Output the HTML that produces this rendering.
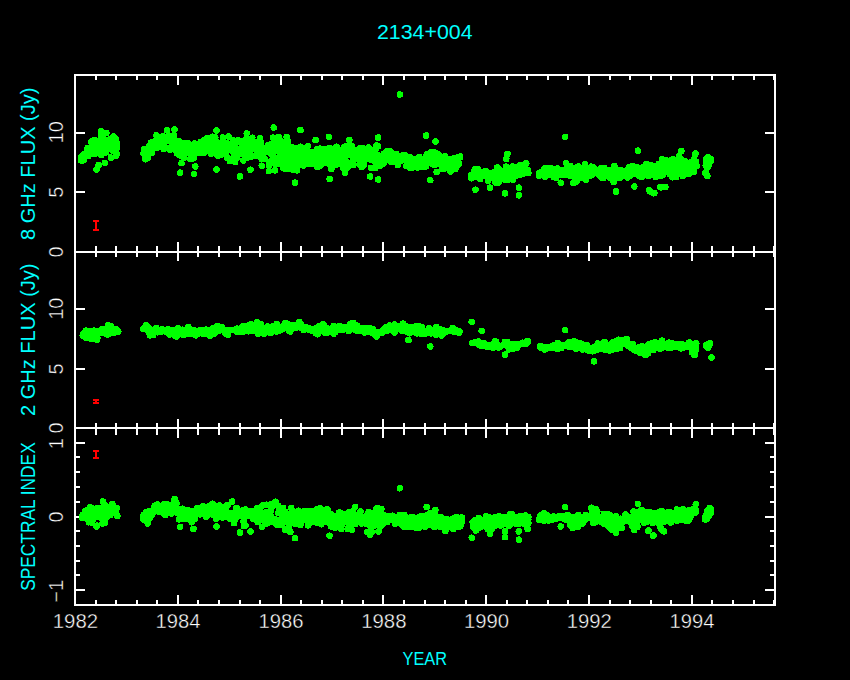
<!DOCTYPE html>
<html><head><meta charset="utf-8"><style>
html,body{margin:0;padding:0;background:#000;width:850px;height:680px;overflow:hidden}
svg{display:block}
text{font-family:"Liberation Sans",sans-serif}
</style></head><body>
<svg width="850" height="680" viewBox="0 0 850 680">
<rect x="0" y="0" width="850" height="680" fill="#000"/>
<g shape-rendering="crispEdges">
<rect x="74" y="74" width="702" height="2" fill="#fff"/>
<rect x="74" y="604" width="702" height="2" fill="#fff"/>
<rect x="74" y="74" width="2" height="532" fill="#fff"/>
<rect x="774" y="74" width="2" height="532" fill="#fff"/>
<rect x="74" y="251" width="702" height="2" fill="#fff"/>
<rect x="74" y="427" width="702" height="2" fill="#fff"/>
<rect x="95" y="75" width="2" height="5" fill="#fff"/>
<rect x="95" y="246" width="2" height="5" fill="#fff"/>
<rect x="115" y="75" width="2" height="5" fill="#fff"/>
<rect x="115" y="246" width="2" height="5" fill="#fff"/>
<rect x="136" y="75" width="2" height="5" fill="#fff"/>
<rect x="136" y="246" width="2" height="5" fill="#fff"/>
<rect x="156" y="75" width="2" height="5" fill="#fff"/>
<rect x="156" y="246" width="2" height="5" fill="#fff"/>
<rect x="177" y="75" width="2" height="10" fill="#fff"/>
<rect x="177" y="242" width="2" height="9" fill="#fff"/>
<rect x="197" y="75" width="2" height="5" fill="#fff"/>
<rect x="197" y="246" width="2" height="5" fill="#fff"/>
<rect x="218" y="75" width="2" height="5" fill="#fff"/>
<rect x="218" y="246" width="2" height="5" fill="#fff"/>
<rect x="239" y="75" width="2" height="5" fill="#fff"/>
<rect x="239" y="246" width="2" height="5" fill="#fff"/>
<rect x="259" y="75" width="2" height="5" fill="#fff"/>
<rect x="259" y="246" width="2" height="5" fill="#fff"/>
<rect x="280" y="75" width="2" height="10" fill="#fff"/>
<rect x="280" y="242" width="2" height="9" fill="#fff"/>
<rect x="300" y="75" width="2" height="5" fill="#fff"/>
<rect x="300" y="246" width="2" height="5" fill="#fff"/>
<rect x="321" y="75" width="2" height="5" fill="#fff"/>
<rect x="321" y="246" width="2" height="5" fill="#fff"/>
<rect x="341" y="75" width="2" height="5" fill="#fff"/>
<rect x="341" y="246" width="2" height="5" fill="#fff"/>
<rect x="362" y="75" width="2" height="5" fill="#fff"/>
<rect x="362" y="246" width="2" height="5" fill="#fff"/>
<rect x="382" y="75" width="2" height="10" fill="#fff"/>
<rect x="382" y="242" width="2" height="9" fill="#fff"/>
<rect x="403" y="75" width="2" height="5" fill="#fff"/>
<rect x="403" y="246" width="2" height="5" fill="#fff"/>
<rect x="424" y="75" width="2" height="5" fill="#fff"/>
<rect x="424" y="246" width="2" height="5" fill="#fff"/>
<rect x="444" y="75" width="2" height="5" fill="#fff"/>
<rect x="444" y="246" width="2" height="5" fill="#fff"/>
<rect x="465" y="75" width="2" height="5" fill="#fff"/>
<rect x="465" y="246" width="2" height="5" fill="#fff"/>
<rect x="485" y="75" width="2" height="10" fill="#fff"/>
<rect x="485" y="242" width="2" height="9" fill="#fff"/>
<rect x="506" y="75" width="2" height="5" fill="#fff"/>
<rect x="506" y="246" width="2" height="5" fill="#fff"/>
<rect x="526" y="75" width="2" height="5" fill="#fff"/>
<rect x="526" y="246" width="2" height="5" fill="#fff"/>
<rect x="547" y="75" width="2" height="5" fill="#fff"/>
<rect x="547" y="246" width="2" height="5" fill="#fff"/>
<rect x="567" y="75" width="2" height="5" fill="#fff"/>
<rect x="567" y="246" width="2" height="5" fill="#fff"/>
<rect x="588" y="75" width="2" height="10" fill="#fff"/>
<rect x="588" y="242" width="2" height="9" fill="#fff"/>
<rect x="609" y="75" width="2" height="5" fill="#fff"/>
<rect x="609" y="246" width="2" height="5" fill="#fff"/>
<rect x="629" y="75" width="2" height="5" fill="#fff"/>
<rect x="629" y="246" width="2" height="5" fill="#fff"/>
<rect x="650" y="75" width="2" height="5" fill="#fff"/>
<rect x="650" y="246" width="2" height="5" fill="#fff"/>
<rect x="670" y="75" width="2" height="5" fill="#fff"/>
<rect x="670" y="246" width="2" height="5" fill="#fff"/>
<rect x="691" y="75" width="2" height="10" fill="#fff"/>
<rect x="691" y="242" width="2" height="9" fill="#fff"/>
<rect x="711" y="75" width="2" height="5" fill="#fff"/>
<rect x="711" y="246" width="2" height="5" fill="#fff"/>
<rect x="732" y="75" width="2" height="5" fill="#fff"/>
<rect x="732" y="246" width="2" height="5" fill="#fff"/>
<rect x="753" y="75" width="2" height="5" fill="#fff"/>
<rect x="753" y="246" width="2" height="5" fill="#fff"/>
<rect x="773" y="75" width="2" height="5" fill="#fff"/>
<rect x="773" y="246" width="2" height="5" fill="#fff"/>
<rect x="95" y="252" width="2" height="5" fill="#fff"/>
<rect x="95" y="423" width="2" height="4" fill="#fff"/>
<rect x="115" y="252" width="2" height="5" fill="#fff"/>
<rect x="115" y="423" width="2" height="4" fill="#fff"/>
<rect x="136" y="252" width="2" height="5" fill="#fff"/>
<rect x="136" y="423" width="2" height="4" fill="#fff"/>
<rect x="156" y="252" width="2" height="5" fill="#fff"/>
<rect x="156" y="423" width="2" height="4" fill="#fff"/>
<rect x="177" y="252" width="2" height="9" fill="#fff"/>
<rect x="177" y="419" width="2" height="8" fill="#fff"/>
<rect x="197" y="252" width="2" height="5" fill="#fff"/>
<rect x="197" y="423" width="2" height="4" fill="#fff"/>
<rect x="218" y="252" width="2" height="5" fill="#fff"/>
<rect x="218" y="423" width="2" height="4" fill="#fff"/>
<rect x="239" y="252" width="2" height="5" fill="#fff"/>
<rect x="239" y="423" width="2" height="4" fill="#fff"/>
<rect x="259" y="252" width="2" height="5" fill="#fff"/>
<rect x="259" y="423" width="2" height="4" fill="#fff"/>
<rect x="280" y="252" width="2" height="9" fill="#fff"/>
<rect x="280" y="419" width="2" height="8" fill="#fff"/>
<rect x="300" y="252" width="2" height="5" fill="#fff"/>
<rect x="300" y="423" width="2" height="4" fill="#fff"/>
<rect x="321" y="252" width="2" height="5" fill="#fff"/>
<rect x="321" y="423" width="2" height="4" fill="#fff"/>
<rect x="341" y="252" width="2" height="5" fill="#fff"/>
<rect x="341" y="423" width="2" height="4" fill="#fff"/>
<rect x="362" y="252" width="2" height="5" fill="#fff"/>
<rect x="362" y="423" width="2" height="4" fill="#fff"/>
<rect x="382" y="252" width="2" height="9" fill="#fff"/>
<rect x="382" y="419" width="2" height="8" fill="#fff"/>
<rect x="403" y="252" width="2" height="5" fill="#fff"/>
<rect x="403" y="423" width="2" height="4" fill="#fff"/>
<rect x="424" y="252" width="2" height="5" fill="#fff"/>
<rect x="424" y="423" width="2" height="4" fill="#fff"/>
<rect x="444" y="252" width="2" height="5" fill="#fff"/>
<rect x="444" y="423" width="2" height="4" fill="#fff"/>
<rect x="465" y="252" width="2" height="5" fill="#fff"/>
<rect x="465" y="423" width="2" height="4" fill="#fff"/>
<rect x="485" y="252" width="2" height="9" fill="#fff"/>
<rect x="485" y="419" width="2" height="8" fill="#fff"/>
<rect x="506" y="252" width="2" height="5" fill="#fff"/>
<rect x="506" y="423" width="2" height="4" fill="#fff"/>
<rect x="526" y="252" width="2" height="5" fill="#fff"/>
<rect x="526" y="423" width="2" height="4" fill="#fff"/>
<rect x="547" y="252" width="2" height="5" fill="#fff"/>
<rect x="547" y="423" width="2" height="4" fill="#fff"/>
<rect x="567" y="252" width="2" height="5" fill="#fff"/>
<rect x="567" y="423" width="2" height="4" fill="#fff"/>
<rect x="588" y="252" width="2" height="9" fill="#fff"/>
<rect x="588" y="419" width="2" height="8" fill="#fff"/>
<rect x="609" y="252" width="2" height="5" fill="#fff"/>
<rect x="609" y="423" width="2" height="4" fill="#fff"/>
<rect x="629" y="252" width="2" height="5" fill="#fff"/>
<rect x="629" y="423" width="2" height="4" fill="#fff"/>
<rect x="650" y="252" width="2" height="5" fill="#fff"/>
<rect x="650" y="423" width="2" height="4" fill="#fff"/>
<rect x="670" y="252" width="2" height="5" fill="#fff"/>
<rect x="670" y="423" width="2" height="4" fill="#fff"/>
<rect x="691" y="252" width="2" height="9" fill="#fff"/>
<rect x="691" y="419" width="2" height="8" fill="#fff"/>
<rect x="711" y="252" width="2" height="5" fill="#fff"/>
<rect x="711" y="423" width="2" height="4" fill="#fff"/>
<rect x="732" y="252" width="2" height="5" fill="#fff"/>
<rect x="732" y="423" width="2" height="4" fill="#fff"/>
<rect x="753" y="252" width="2" height="5" fill="#fff"/>
<rect x="753" y="423" width="2" height="4" fill="#fff"/>
<rect x="773" y="252" width="2" height="5" fill="#fff"/>
<rect x="773" y="423" width="2" height="4" fill="#fff"/>
<rect x="95" y="428" width="2" height="7" fill="#fff"/>
<rect x="95" y="600" width="2" height="5" fill="#fff"/>
<rect x="115" y="428" width="2" height="7" fill="#fff"/>
<rect x="115" y="600" width="2" height="5" fill="#fff"/>
<rect x="136" y="428" width="2" height="7" fill="#fff"/>
<rect x="136" y="600" width="2" height="5" fill="#fff"/>
<rect x="156" y="428" width="2" height="7" fill="#fff"/>
<rect x="156" y="600" width="2" height="5" fill="#fff"/>
<rect x="177" y="428" width="2" height="10" fill="#fff"/>
<rect x="177" y="595" width="2" height="10" fill="#fff"/>
<rect x="197" y="428" width="2" height="7" fill="#fff"/>
<rect x="197" y="600" width="2" height="5" fill="#fff"/>
<rect x="218" y="428" width="2" height="7" fill="#fff"/>
<rect x="218" y="600" width="2" height="5" fill="#fff"/>
<rect x="239" y="428" width="2" height="7" fill="#fff"/>
<rect x="239" y="600" width="2" height="5" fill="#fff"/>
<rect x="259" y="428" width="2" height="7" fill="#fff"/>
<rect x="259" y="600" width="2" height="5" fill="#fff"/>
<rect x="280" y="428" width="2" height="10" fill="#fff"/>
<rect x="280" y="595" width="2" height="10" fill="#fff"/>
<rect x="300" y="428" width="2" height="7" fill="#fff"/>
<rect x="300" y="600" width="2" height="5" fill="#fff"/>
<rect x="321" y="428" width="2" height="7" fill="#fff"/>
<rect x="321" y="600" width="2" height="5" fill="#fff"/>
<rect x="341" y="428" width="2" height="7" fill="#fff"/>
<rect x="341" y="600" width="2" height="5" fill="#fff"/>
<rect x="362" y="428" width="2" height="7" fill="#fff"/>
<rect x="362" y="600" width="2" height="5" fill="#fff"/>
<rect x="382" y="428" width="2" height="10" fill="#fff"/>
<rect x="382" y="595" width="2" height="10" fill="#fff"/>
<rect x="403" y="428" width="2" height="7" fill="#fff"/>
<rect x="403" y="600" width="2" height="5" fill="#fff"/>
<rect x="424" y="428" width="2" height="7" fill="#fff"/>
<rect x="424" y="600" width="2" height="5" fill="#fff"/>
<rect x="444" y="428" width="2" height="7" fill="#fff"/>
<rect x="444" y="600" width="2" height="5" fill="#fff"/>
<rect x="465" y="428" width="2" height="7" fill="#fff"/>
<rect x="465" y="600" width="2" height="5" fill="#fff"/>
<rect x="485" y="428" width="2" height="10" fill="#fff"/>
<rect x="485" y="595" width="2" height="10" fill="#fff"/>
<rect x="506" y="428" width="2" height="7" fill="#fff"/>
<rect x="506" y="600" width="2" height="5" fill="#fff"/>
<rect x="526" y="428" width="2" height="7" fill="#fff"/>
<rect x="526" y="600" width="2" height="5" fill="#fff"/>
<rect x="547" y="428" width="2" height="7" fill="#fff"/>
<rect x="547" y="600" width="2" height="5" fill="#fff"/>
<rect x="567" y="428" width="2" height="7" fill="#fff"/>
<rect x="567" y="600" width="2" height="5" fill="#fff"/>
<rect x="588" y="428" width="2" height="10" fill="#fff"/>
<rect x="588" y="595" width="2" height="10" fill="#fff"/>
<rect x="609" y="428" width="2" height="7" fill="#fff"/>
<rect x="609" y="600" width="2" height="5" fill="#fff"/>
<rect x="629" y="428" width="2" height="7" fill="#fff"/>
<rect x="629" y="600" width="2" height="5" fill="#fff"/>
<rect x="650" y="428" width="2" height="7" fill="#fff"/>
<rect x="650" y="600" width="2" height="5" fill="#fff"/>
<rect x="670" y="428" width="2" height="7" fill="#fff"/>
<rect x="670" y="600" width="2" height="5" fill="#fff"/>
<rect x="691" y="428" width="2" height="10" fill="#fff"/>
<rect x="691" y="595" width="2" height="10" fill="#fff"/>
<rect x="711" y="428" width="2" height="7" fill="#fff"/>
<rect x="711" y="600" width="2" height="5" fill="#fff"/>
<rect x="732" y="428" width="2" height="7" fill="#fff"/>
<rect x="732" y="600" width="2" height="5" fill="#fff"/>
<rect x="753" y="428" width="2" height="7" fill="#fff"/>
<rect x="753" y="600" width="2" height="5" fill="#fff"/>
<rect x="773" y="428" width="2" height="7" fill="#fff"/>
<rect x="773" y="600" width="2" height="5" fill="#fff"/>
<rect x="75" y="191" width="10" height="2" fill="#fff"/>
<rect x="765" y="191" width="10" height="2" fill="#fff"/>
<rect x="75" y="132" width="10" height="2" fill="#fff"/>
<rect x="765" y="132" width="10" height="2" fill="#fff"/>
<rect x="75" y="368" width="10" height="2" fill="#fff"/>
<rect x="765" y="368" width="10" height="2" fill="#fff"/>
<rect x="75" y="308" width="10" height="2" fill="#fff"/>
<rect x="765" y="308" width="10" height="2" fill="#fff"/>
<rect x="75" y="589" width="10" height="2" fill="#fff"/>
<rect x="765" y="589" width="10" height="2" fill="#fff"/>
<rect x="75" y="574" width="5" height="2" fill="#fff"/>
<rect x="770" y="574" width="5" height="2" fill="#fff"/>
<rect x="75" y="560" width="5" height="2" fill="#fff"/>
<rect x="770" y="560" width="5" height="2" fill="#fff"/>
<rect x="75" y="545" width="5" height="2" fill="#fff"/>
<rect x="770" y="545" width="5" height="2" fill="#fff"/>
<rect x="75" y="530" width="5" height="2" fill="#fff"/>
<rect x="770" y="530" width="5" height="2" fill="#fff"/>
<rect x="75" y="516" width="10" height="2" fill="#fff"/>
<rect x="765" y="516" width="10" height="2" fill="#fff"/>
<rect x="75" y="501" width="5" height="2" fill="#fff"/>
<rect x="770" y="501" width="5" height="2" fill="#fff"/>
<rect x="75" y="486" width="5" height="2" fill="#fff"/>
<rect x="770" y="486" width="5" height="2" fill="#fff"/>
<rect x="75" y="471" width="5" height="2" fill="#fff"/>
<rect x="770" y="471" width="5" height="2" fill="#fff"/>
<rect x="75" y="456" width="5" height="2" fill="#fff"/>
<rect x="770" y="456" width="5" height="2" fill="#fff"/>
<rect x="75" y="442" width="10" height="2" fill="#fff"/>
<rect x="765" y="442" width="10" height="2" fill="#fff"/>
</g>
<g fill="#00ff00" shape-rendering="crispEdges">
<path d=""/><path d="M78.6 157.7a3.3 3.3 0 1 0 6.6 0a3.3 3.3 0 1 0 -6.6 0M82.0 154.1a3.3 3.3 0 1 0 6.6 0a3.3 3.3 0 1 0 -6.6 0M84.9 153.6a3.3 3.3 0 1 0 6.6 0a3.3 3.3 0 1 0 -6.6 0M87.4 151.5a3.3 3.3 0 1 0 6.6 0a3.3 3.3 0 1 0 -6.6 0M90.4 147.6a3.3 3.3 0 1 0 6.6 0a3.3 3.3 0 1 0 -6.6 0M93.4 142.8a3.3 3.3 0 1 0 6.6 0a3.3 3.3 0 1 0 -6.6 0M96.7 148.6a3.3 3.3 0 1 0 6.6 0a3.3 3.3 0 1 0 -6.6 0M99.4 141.7a3.3 3.3 0 1 0 6.6 0a3.3 3.3 0 1 0 -6.6 0M103.0 148.9a3.3 3.3 0 1 0 6.6 0a3.3 3.3 0 1 0 -6.6 0M105.9 144.1a3.3 3.3 0 1 0 6.6 0a3.3 3.3 0 1 0 -6.6 0M109.3 141.2a3.3 3.3 0 1 0 6.6 0a3.3 3.3 0 1 0 -6.6 0M112.2 145.9a3.3 3.3 0 1 0 6.6 0a3.3 3.3 0 1 0 -6.6 0M83.5 152.5a3.3 3.3 0 1 0 6.6 0a3.3 3.3 0 1 0 -6.6 0M107.7 147.9a3.3 3.3 0 1 0 6.6 0a3.3 3.3 0 1 0 -6.6 0M101.3 145.0a3.3 3.3 0 1 0 6.6 0a3.3 3.3 0 1 0 -6.6 0M80.6 154.3a3.3 3.3 0 1 0 6.6 0a3.3 3.3 0 1 0 -6.6 0M102.8 140.2a3.3 3.3 0 1 0 6.6 0a3.3 3.3 0 1 0 -6.6 0M99.4 140.6a3.3 3.3 0 1 0 6.6 0a3.3 3.3 0 1 0 -6.6 0M106.9 142.6a3.3 3.3 0 1 0 6.6 0a3.3 3.3 0 1 0 -6.6 0M97.2 145.7a3.3 3.3 0 1 0 6.6 0a3.3 3.3 0 1 0 -6.6 0M113.6 146.8a3.3 3.3 0 1 0 6.6 0a3.3 3.3 0 1 0 -6.6 0M105.6 145.1a3.3 3.3 0 1 0 6.6 0a3.3 3.3 0 1 0 -6.6 0M79.7 158.8a3.3 3.3 0 1 0 6.6 0a3.3 3.3 0 1 0 -6.6 0M109.8 151.2a3.3 3.3 0 1 0 6.6 0a3.3 3.3 0 1 0 -6.6 0M99.7 143.7a3.3 3.3 0 1 0 6.6 0a3.3 3.3 0 1 0 -6.6 0M108.6 148.8a3.3 3.3 0 1 0 6.6 0a3.3 3.3 0 1 0 -6.6 0M80.5 160.3a3.3 3.3 0 1 0 6.6 0a3.3 3.3 0 1 0 -6.6 0M107.9 143.4a3.3 3.3 0 1 0 6.6 0a3.3 3.3 0 1 0 -6.6 0M102.4 143.2a3.3 3.3 0 1 0 6.6 0a3.3 3.3 0 1 0 -6.6 0M84.4 148.1a3.3 3.3 0 1 0 6.6 0a3.3 3.3 0 1 0 -6.6 0M106.0 139.5a3.3 3.3 0 1 0 6.6 0a3.3 3.3 0 1 0 -6.6 0M92.4 140.9a3.3 3.3 0 1 0 6.6 0a3.3 3.3 0 1 0 -6.6 0M98.1 154.9a3.3 3.3 0 1 0 6.6 0a3.3 3.3 0 1 0 -6.6 0M88.3 148.0a3.3 3.3 0 1 0 6.6 0a3.3 3.3 0 1 0 -6.6 0M110.2 136.3a3.3 3.3 0 1 0 6.6 0a3.3 3.3 0 1 0 -6.6 0M86.7 152.4a3.3 3.3 0 1 0 6.6 0a3.3 3.3 0 1 0 -6.6 0M99.5 134.8a3.3 3.3 0 1 0 6.6 0a3.3 3.3 0 1 0 -6.6 0M93.4 147.7a3.3 3.3 0 1 0 6.6 0a3.3 3.3 0 1 0 -6.6 0M112.6 149.9a3.3 3.3 0 1 0 6.6 0a3.3 3.3 0 1 0 -6.6 0M102.7 152.3a3.3 3.3 0 1 0 6.6 0a3.3 3.3 0 1 0 -6.6 0M106.4 149.2a3.3 3.3 0 1 0 6.6 0a3.3 3.3 0 1 0 -6.6 0M92.7 149.3a3.3 3.3 0 1 0 6.6 0a3.3 3.3 0 1 0 -6.6 0M80.6 154.4a3.3 3.3 0 1 0 6.6 0a3.3 3.3 0 1 0 -6.6 0M84.2 149.1a3.3 3.3 0 1 0 6.6 0a3.3 3.3 0 1 0 -6.6 0M78.3 156.4a3.3 3.3 0 1 0 6.6 0a3.3 3.3 0 1 0 -6.6 0M91.4 154.1a3.3 3.3 0 1 0 6.6 0a3.3 3.3 0 1 0 -6.6 0M100.4 139.4a3.3 3.3 0 1 0 6.6 0a3.3 3.3 0 1 0 -6.6 0M90.8 141.7a3.3 3.3 0 1 0 6.6 0a3.3 3.3 0 1 0 -6.6 0M108.9 145.7a3.3 3.3 0 1 0 6.6 0a3.3 3.3 0 1 0 -6.6 0M81.4 154.4a3.3 3.3 0 1 0 6.6 0a3.3 3.3 0 1 0 -6.6 0M87.9 141.7a3.3 3.3 0 1 0 6.6 0a3.3 3.3 0 1 0 -6.6 0M112.6 141.9a3.3 3.3 0 1 0 6.6 0a3.3 3.3 0 1 0 -6.6 0M97.9 145.7a3.3 3.3 0 1 0 6.6 0a3.3 3.3 0 1 0 -6.6 0M113.5 147.5a3.3 3.3 0 1 0 6.6 0a3.3 3.3 0 1 0 -6.6 0M91.5 152.3a3.3 3.3 0 1 0 6.6 0a3.3 3.3 0 1 0 -6.6 0M97.5 138.8a3.3 3.3 0 1 0 6.6 0a3.3 3.3 0 1 0 -6.6 0M107.5 157.6a3.3 3.3 0 1 0 6.6 0a3.3 3.3 0 1 0 -6.6 0M107.8 141.6a3.3 3.3 0 1 0 6.6 0a3.3 3.3 0 1 0 -6.6 0M91.1 140.0a3.3 3.3 0 1 0 6.6 0a3.3 3.3 0 1 0 -6.6 0M88.4 153.3a3.3 3.3 0 1 0 6.6 0a3.3 3.3 0 1 0 -6.6 0M112.8 155.9a3.3 3.3 0 1 0 6.6 0a3.3 3.3 0 1 0 -6.6 0M113.9 143.2a3.3 3.3 0 1 0 6.6 0a3.3 3.3 0 1 0 -6.6 0M86.5 148.0a3.3 3.3 0 1 0 6.6 0a3.3 3.3 0 1 0 -6.6 0M100.8 149.0a3.3 3.3 0 1 0 6.6 0a3.3 3.3 0 1 0 -6.6 0M101.8 140.2a3.3 3.3 0 1 0 6.6 0a3.3 3.3 0 1 0 -6.6 0M111.1 151.0a3.3 3.3 0 1 0 6.6 0a3.3 3.3 0 1 0 -6.6 0M84.8 156.1a3.3 3.3 0 1 0 6.6 0a3.3 3.3 0 1 0 -6.6 0M113.3 146.4a3.3 3.3 0 1 0 6.6 0a3.3 3.3 0 1 0 -6.6 0M112.4 138.9a3.3 3.3 0 1 0 6.6 0a3.3 3.3 0 1 0 -6.6 0M83.8 154.5a3.3 3.3 0 1 0 6.6 0a3.3 3.3 0 1 0 -6.6 0M108.1 146.2a3.3 3.3 0 1 0 6.6 0a3.3 3.3 0 1 0 -6.6 0M98.1 135.9a3.3 3.3 0 1 0 6.6 0a3.3 3.3 0 1 0 -6.6 0M113.3 154.2a3.3 3.3 0 1 0 6.6 0a3.3 3.3 0 1 0 -6.6 0M93.9 147.0a3.3 3.3 0 1 0 6.6 0a3.3 3.3 0 1 0 -6.6 0M87.4 147.3a3.3 3.3 0 1 0 6.6 0a3.3 3.3 0 1 0 -6.6 0M99.4 142.9a3.3 3.3 0 1 0 6.6 0a3.3 3.3 0 1 0 -6.6 0M83.0 153.8a3.3 3.3 0 1 0 6.6 0a3.3 3.3 0 1 0 -6.6 0M99.3 149.5a3.3 3.3 0 1 0 6.6 0a3.3 3.3 0 1 0 -6.6 0M96.4 145.9a3.3 3.3 0 1 0 6.6 0a3.3 3.3 0 1 0 -6.6 0M79.0 156.7a3.3 3.3 0 1 0 6.6 0a3.3 3.3 0 1 0 -6.6 0M78.5 156.9a3.3 3.3 0 1 0 6.6 0a3.3 3.3 0 1 0 -6.6 0M104.4 140.9a3.3 3.3 0 1 0 6.6 0a3.3 3.3 0 1 0 -6.6 0M97.0 150.8a3.3 3.3 0 1 0 6.6 0a3.3 3.3 0 1 0 -6.6 0M82.1 153.5a3.3 3.3 0 1 0 6.6 0a3.3 3.3 0 1 0 -6.6 0M88.3 152.2a3.3 3.3 0 1 0 6.6 0a3.3 3.3 0 1 0 -6.6 0M105.7 146.3a3.3 3.3 0 1 0 6.6 0a3.3 3.3 0 1 0 -6.6 0M97.7 131.4a3.3 3.3 0 1 0 6.6 0a3.3 3.3 0 1 0 -6.6 0M103.1 132.9a3.3 3.3 0 1 0 6.6 0a3.3 3.3 0 1 0 -6.6 0M95.4 165.1a3.3 3.3 0 1 0 6.6 0a3.3 3.3 0 1 0 -6.6 0M93.1 169.6a3.3 3.3 0 1 0 6.6 0a3.3 3.3 0 1 0 -6.6 0M101.5 162.8a3.3 3.3 0 1 0 6.6 0a3.3 3.3 0 1 0 -6.6 0M77.8 160.5a3.3 3.3 0 1 0 6.6 0a3.3 3.3 0 1 0 -6.6 0M140.7 153.4a3.3 3.3 0 1 0 6.6 0a3.3 3.3 0 1 0 -6.6 0M143.8 153.8a3.3 3.3 0 1 0 6.6 0a3.3 3.3 0 1 0 -6.6 0M146.7 150.5a3.3 3.3 0 1 0 6.6 0a3.3 3.3 0 1 0 -6.6 0M150.1 146.7a3.3 3.3 0 1 0 6.6 0a3.3 3.3 0 1 0 -6.6 0M153.0 145.0a3.3 3.3 0 1 0 6.6 0a3.3 3.3 0 1 0 -6.6 0M155.4 142.0a3.3 3.3 0 1 0 6.6 0a3.3 3.3 0 1 0 -6.6 0M159.1 144.4a3.3 3.3 0 1 0 6.6 0a3.3 3.3 0 1 0 -6.6 0M161.3 140.2a3.3 3.3 0 1 0 6.6 0a3.3 3.3 0 1 0 -6.6 0M164.6 140.0a3.3 3.3 0 1 0 6.6 0a3.3 3.3 0 1 0 -6.6 0M167.4 140.2a3.3 3.3 0 1 0 6.6 0a3.3 3.3 0 1 0 -6.6 0M170.8 146.3a3.3 3.3 0 1 0 6.6 0a3.3 3.3 0 1 0 -6.6 0M174.1 142.9a3.3 3.3 0 1 0 6.6 0a3.3 3.3 0 1 0 -6.6 0M176.9 149.0a3.3 3.3 0 1 0 6.6 0a3.3 3.3 0 1 0 -6.6 0M179.3 153.7a3.3 3.3 0 1 0 6.6 0a3.3 3.3 0 1 0 -6.6 0M183.1 148.5a3.3 3.3 0 1 0 6.6 0a3.3 3.3 0 1 0 -6.6 0M186.1 150.8a3.3 3.3 0 1 0 6.6 0a3.3 3.3 0 1 0 -6.6 0M188.6 156.0a3.3 3.3 0 1 0 6.6 0a3.3 3.3 0 1 0 -6.6 0M192.0 149.2a3.3 3.3 0 1 0 6.6 0a3.3 3.3 0 1 0 -6.6 0M194.6 150.8a3.3 3.3 0 1 0 6.6 0a3.3 3.3 0 1 0 -6.6 0M197.5 147.1a3.3 3.3 0 1 0 6.6 0a3.3 3.3 0 1 0 -6.6 0M200.5 148.6a3.3 3.3 0 1 0 6.6 0a3.3 3.3 0 1 0 -6.6 0M203.2 145.5a3.3 3.3 0 1 0 6.6 0a3.3 3.3 0 1 0 -6.6 0M206.6 140.8a3.3 3.3 0 1 0 6.6 0a3.3 3.3 0 1 0 -6.6 0M209.5 146.0a3.3 3.3 0 1 0 6.6 0a3.3 3.3 0 1 0 -6.6 0M212.7 141.6a3.3 3.3 0 1 0 6.6 0a3.3 3.3 0 1 0 -6.6 0M216.1 149.6a3.3 3.3 0 1 0 6.6 0a3.3 3.3 0 1 0 -6.6 0M219.1 143.4a3.3 3.3 0 1 0 6.6 0a3.3 3.3 0 1 0 -6.6 0M221.4 143.6a3.3 3.3 0 1 0 6.6 0a3.3 3.3 0 1 0 -6.6 0M224.9 147.6a3.3 3.3 0 1 0 6.6 0a3.3 3.3 0 1 0 -6.6 0M227.3 150.1a3.3 3.3 0 1 0 6.6 0a3.3 3.3 0 1 0 -6.6 0M231.1 155.9a3.3 3.3 0 1 0 6.6 0a3.3 3.3 0 1 0 -6.6 0M233.4 148.5a3.3 3.3 0 1 0 6.6 0a3.3 3.3 0 1 0 -6.6 0M237.1 153.3a3.3 3.3 0 1 0 6.6 0a3.3 3.3 0 1 0 -6.6 0M239.9 146.8a3.3 3.3 0 1 0 6.6 0a3.3 3.3 0 1 0 -6.6 0M242.2 152.1a3.3 3.3 0 1 0 6.6 0a3.3 3.3 0 1 0 -6.6 0M245.6 143.7a3.3 3.3 0 1 0 6.6 0a3.3 3.3 0 1 0 -6.6 0M249.1 149.2a3.3 3.3 0 1 0 6.6 0a3.3 3.3 0 1 0 -6.6 0M252.0 142.7a3.3 3.3 0 1 0 6.6 0a3.3 3.3 0 1 0 -6.6 0M255.0 142.8a3.3 3.3 0 1 0 6.6 0a3.3 3.3 0 1 0 -6.6 0M258.0 148.1a3.3 3.3 0 1 0 6.6 0a3.3 3.3 0 1 0 -6.6 0M260.5 150.9a3.3 3.3 0 1 0 6.6 0a3.3 3.3 0 1 0 -6.6 0M264.1 148.7a3.3 3.3 0 1 0 6.6 0a3.3 3.3 0 1 0 -6.6 0M266.3 152.5a3.3 3.3 0 1 0 6.6 0a3.3 3.3 0 1 0 -6.6 0M269.4 146.4a3.3 3.3 0 1 0 6.6 0a3.3 3.3 0 1 0 -6.6 0M272.3 144.9a3.3 3.3 0 1 0 6.6 0a3.3 3.3 0 1 0 -6.6 0M275.4 149.2a3.3 3.3 0 1 0 6.6 0a3.3 3.3 0 1 0 -6.6 0M278.5 157.3a3.3 3.3 0 1 0 6.6 0a3.3 3.3 0 1 0 -6.6 0M281.4 153.1a3.3 3.3 0 1 0 6.6 0a3.3 3.3 0 1 0 -6.6 0M165.4 136.1a3.3 3.3 0 1 0 6.6 0a3.3 3.3 0 1 0 -6.6 0M175.7 150.9a3.3 3.3 0 1 0 6.6 0a3.3 3.3 0 1 0 -6.6 0M218.4 147.3a3.3 3.3 0 1 0 6.6 0a3.3 3.3 0 1 0 -6.6 0M272.9 161.7a3.3 3.3 0 1 0 6.6 0a3.3 3.3 0 1 0 -6.6 0M201.5 151.3a3.3 3.3 0 1 0 6.6 0a3.3 3.3 0 1 0 -6.6 0M196.0 153.0a3.3 3.3 0 1 0 6.6 0a3.3 3.3 0 1 0 -6.6 0M279.7 163.6a3.3 3.3 0 1 0 6.6 0a3.3 3.3 0 1 0 -6.6 0M240.5 147.0a3.3 3.3 0 1 0 6.6 0a3.3 3.3 0 1 0 -6.6 0M147.9 142.6a3.3 3.3 0 1 0 6.6 0a3.3 3.3 0 1 0 -6.6 0M245.4 141.3a3.3 3.3 0 1 0 6.6 0a3.3 3.3 0 1 0 -6.6 0M152.2 147.8a3.3 3.3 0 1 0 6.6 0a3.3 3.3 0 1 0 -6.6 0M180.2 146.5a3.3 3.3 0 1 0 6.6 0a3.3 3.3 0 1 0 -6.6 0M205.4 143.8a3.3 3.3 0 1 0 6.6 0a3.3 3.3 0 1 0 -6.6 0M177.5 155.6a3.3 3.3 0 1 0 6.6 0a3.3 3.3 0 1 0 -6.6 0M174.9 142.0a3.3 3.3 0 1 0 6.6 0a3.3 3.3 0 1 0 -6.6 0M140.3 153.1a3.3 3.3 0 1 0 6.6 0a3.3 3.3 0 1 0 -6.6 0M211.5 145.5a3.3 3.3 0 1 0 6.6 0a3.3 3.3 0 1 0 -6.6 0M140.9 149.3a3.3 3.3 0 1 0 6.6 0a3.3 3.3 0 1 0 -6.6 0M196.9 143.1a3.3 3.3 0 1 0 6.6 0a3.3 3.3 0 1 0 -6.6 0M183.4 152.5a3.3 3.3 0 1 0 6.6 0a3.3 3.3 0 1 0 -6.6 0M215.3 152.1a3.3 3.3 0 1 0 6.6 0a3.3 3.3 0 1 0 -6.6 0M265.0 147.6a3.3 3.3 0 1 0 6.6 0a3.3 3.3 0 1 0 -6.6 0M280.0 160.1a3.3 3.3 0 1 0 6.6 0a3.3 3.3 0 1 0 -6.6 0M231.5 159.8a3.3 3.3 0 1 0 6.6 0a3.3 3.3 0 1 0 -6.6 0M266.8 163.4a3.3 3.3 0 1 0 6.6 0a3.3 3.3 0 1 0 -6.6 0M159.9 142.4a3.3 3.3 0 1 0 6.6 0a3.3 3.3 0 1 0 -6.6 0M258.7 156.0a3.3 3.3 0 1 0 6.6 0a3.3 3.3 0 1 0 -6.6 0M266.9 150.5a3.3 3.3 0 1 0 6.6 0a3.3 3.3 0 1 0 -6.6 0M144.6 151.0a3.3 3.3 0 1 0 6.6 0a3.3 3.3 0 1 0 -6.6 0M155.1 143.4a3.3 3.3 0 1 0 6.6 0a3.3 3.3 0 1 0 -6.6 0M229.1 142.5a3.3 3.3 0 1 0 6.6 0a3.3 3.3 0 1 0 -6.6 0M253.4 148.3a3.3 3.3 0 1 0 6.6 0a3.3 3.3 0 1 0 -6.6 0M233.8 157.8a3.3 3.3 0 1 0 6.6 0a3.3 3.3 0 1 0 -6.6 0M176.0 142.7a3.3 3.3 0 1 0 6.6 0a3.3 3.3 0 1 0 -6.6 0M243.7 154.5a3.3 3.3 0 1 0 6.6 0a3.3 3.3 0 1 0 -6.6 0M278.7 149.0a3.3 3.3 0 1 0 6.6 0a3.3 3.3 0 1 0 -6.6 0M208.2 149.5a3.3 3.3 0 1 0 6.6 0a3.3 3.3 0 1 0 -6.6 0M231.4 144.6a3.3 3.3 0 1 0 6.6 0a3.3 3.3 0 1 0 -6.6 0M176.2 145.7a3.3 3.3 0 1 0 6.6 0a3.3 3.3 0 1 0 -6.6 0M141.9 151.0a3.3 3.3 0 1 0 6.6 0a3.3 3.3 0 1 0 -6.6 0M235.6 152.0a3.3 3.3 0 1 0 6.6 0a3.3 3.3 0 1 0 -6.6 0M213.5 145.3a3.3 3.3 0 1 0 6.6 0a3.3 3.3 0 1 0 -6.6 0M157.0 143.4a3.3 3.3 0 1 0 6.6 0a3.3 3.3 0 1 0 -6.6 0M273.1 151.0a3.3 3.3 0 1 0 6.6 0a3.3 3.3 0 1 0 -6.6 0M256.6 143.5a3.3 3.3 0 1 0 6.6 0a3.3 3.3 0 1 0 -6.6 0M170.0 141.5a3.3 3.3 0 1 0 6.6 0a3.3 3.3 0 1 0 -6.6 0M160.3 148.9a3.3 3.3 0 1 0 6.6 0a3.3 3.3 0 1 0 -6.6 0M159.0 146.3a3.3 3.3 0 1 0 6.6 0a3.3 3.3 0 1 0 -6.6 0M240.0 160.4a3.3 3.3 0 1 0 6.6 0a3.3 3.3 0 1 0 -6.6 0M209.2 136.7a3.3 3.3 0 1 0 6.6 0a3.3 3.3 0 1 0 -6.6 0M210.0 141.6a3.3 3.3 0 1 0 6.6 0a3.3 3.3 0 1 0 -6.6 0M160.1 139.8a3.3 3.3 0 1 0 6.6 0a3.3 3.3 0 1 0 -6.6 0M259.5 155.1a3.3 3.3 0 1 0 6.6 0a3.3 3.3 0 1 0 -6.6 0M259.3 159.1a3.3 3.3 0 1 0 6.6 0a3.3 3.3 0 1 0 -6.6 0M241.4 145.1a3.3 3.3 0 1 0 6.6 0a3.3 3.3 0 1 0 -6.6 0M195.9 149.7a3.3 3.3 0 1 0 6.6 0a3.3 3.3 0 1 0 -6.6 0M200.9 140.2a3.3 3.3 0 1 0 6.6 0a3.3 3.3 0 1 0 -6.6 0M154.6 143.7a3.3 3.3 0 1 0 6.6 0a3.3 3.3 0 1 0 -6.6 0M175.6 147.0a3.3 3.3 0 1 0 6.6 0a3.3 3.3 0 1 0 -6.6 0M167.1 149.7a3.3 3.3 0 1 0 6.6 0a3.3 3.3 0 1 0 -6.6 0M265.7 163.3a3.3 3.3 0 1 0 6.6 0a3.3 3.3 0 1 0 -6.6 0M273.7 158.9a3.3 3.3 0 1 0 6.6 0a3.3 3.3 0 1 0 -6.6 0M147.2 151.2a3.3 3.3 0 1 0 6.6 0a3.3 3.3 0 1 0 -6.6 0M231.7 142.5a3.3 3.3 0 1 0 6.6 0a3.3 3.3 0 1 0 -6.6 0M271.8 151.4a3.3 3.3 0 1 0 6.6 0a3.3 3.3 0 1 0 -6.6 0M189.0 155.9a3.3 3.3 0 1 0 6.6 0a3.3 3.3 0 1 0 -6.6 0M278.8 157.7a3.3 3.3 0 1 0 6.6 0a3.3 3.3 0 1 0 -6.6 0M182.9 149.1a3.3 3.3 0 1 0 6.6 0a3.3 3.3 0 1 0 -6.6 0M163.9 138.8a3.3 3.3 0 1 0 6.6 0a3.3 3.3 0 1 0 -6.6 0M268.8 144.5a3.3 3.3 0 1 0 6.6 0a3.3 3.3 0 1 0 -6.6 0M268.8 143.7a3.3 3.3 0 1 0 6.6 0a3.3 3.3 0 1 0 -6.6 0M167.5 141.0a3.3 3.3 0 1 0 6.6 0a3.3 3.3 0 1 0 -6.6 0M153.1 139.8a3.3 3.3 0 1 0 6.6 0a3.3 3.3 0 1 0 -6.6 0M221.0 151.6a3.3 3.3 0 1 0 6.6 0a3.3 3.3 0 1 0 -6.6 0M198.9 146.7a3.3 3.3 0 1 0 6.6 0a3.3 3.3 0 1 0 -6.6 0M188.2 148.6a3.3 3.3 0 1 0 6.6 0a3.3 3.3 0 1 0 -6.6 0M277.6 152.7a3.3 3.3 0 1 0 6.6 0a3.3 3.3 0 1 0 -6.6 0M229.6 142.9a3.3 3.3 0 1 0 6.6 0a3.3 3.3 0 1 0 -6.6 0M175.4 145.9a3.3 3.3 0 1 0 6.6 0a3.3 3.3 0 1 0 -6.6 0M275.6 149.9a3.3 3.3 0 1 0 6.6 0a3.3 3.3 0 1 0 -6.6 0M144.7 157.4a3.3 3.3 0 1 0 6.6 0a3.3 3.3 0 1 0 -6.6 0M223.5 147.6a3.3 3.3 0 1 0 6.6 0a3.3 3.3 0 1 0 -6.6 0M271.8 170.3a3.3 3.3 0 1 0 6.6 0a3.3 3.3 0 1 0 -6.6 0M175.4 140.8a3.3 3.3 0 1 0 6.6 0a3.3 3.3 0 1 0 -6.6 0M214.3 155.7a3.3 3.3 0 1 0 6.6 0a3.3 3.3 0 1 0 -6.6 0M232.1 152.5a3.3 3.3 0 1 0 6.6 0a3.3 3.3 0 1 0 -6.6 0M145.8 153.7a3.3 3.3 0 1 0 6.6 0a3.3 3.3 0 1 0 -6.6 0M231.8 144.2a3.3 3.3 0 1 0 6.6 0a3.3 3.3 0 1 0 -6.6 0M175.9 144.3a3.3 3.3 0 1 0 6.6 0a3.3 3.3 0 1 0 -6.6 0M150.1 146.5a3.3 3.3 0 1 0 6.6 0a3.3 3.3 0 1 0 -6.6 0M195.3 151.7a3.3 3.3 0 1 0 6.6 0a3.3 3.3 0 1 0 -6.6 0M141.6 153.4a3.3 3.3 0 1 0 6.6 0a3.3 3.3 0 1 0 -6.6 0M276.3 160.9a3.3 3.3 0 1 0 6.6 0a3.3 3.3 0 1 0 -6.6 0M173.5 153.2a3.3 3.3 0 1 0 6.6 0a3.3 3.3 0 1 0 -6.6 0M240.2 140.7a3.3 3.3 0 1 0 6.6 0a3.3 3.3 0 1 0 -6.6 0M210.9 141.0a3.3 3.3 0 1 0 6.6 0a3.3 3.3 0 1 0 -6.6 0M234.9 140.4a3.3 3.3 0 1 0 6.6 0a3.3 3.3 0 1 0 -6.6 0M188.2 155.0a3.3 3.3 0 1 0 6.6 0a3.3 3.3 0 1 0 -6.6 0M168.3 146.1a3.3 3.3 0 1 0 6.6 0a3.3 3.3 0 1 0 -6.6 0M169.3 145.1a3.3 3.3 0 1 0 6.6 0a3.3 3.3 0 1 0 -6.6 0M172.9 149.3a3.3 3.3 0 1 0 6.6 0a3.3 3.3 0 1 0 -6.6 0M182.0 146.5a3.3 3.3 0 1 0 6.6 0a3.3 3.3 0 1 0 -6.6 0M171.9 147.2a3.3 3.3 0 1 0 6.6 0a3.3 3.3 0 1 0 -6.6 0M274.9 149.0a3.3 3.3 0 1 0 6.6 0a3.3 3.3 0 1 0 -6.6 0M170.4 135.3a3.3 3.3 0 1 0 6.6 0a3.3 3.3 0 1 0 -6.6 0M148.7 152.6a3.3 3.3 0 1 0 6.6 0a3.3 3.3 0 1 0 -6.6 0M265.6 171.2a3.3 3.3 0 1 0 6.6 0a3.3 3.3 0 1 0 -6.6 0M186.9 158.7a3.3 3.3 0 1 0 6.6 0a3.3 3.3 0 1 0 -6.6 0M246.1 152.0a3.3 3.3 0 1 0 6.6 0a3.3 3.3 0 1 0 -6.6 0M193.9 148.6a3.3 3.3 0 1 0 6.6 0a3.3 3.3 0 1 0 -6.6 0M164.2 139.9a3.3 3.3 0 1 0 6.6 0a3.3 3.3 0 1 0 -6.6 0M190.1 153.2a3.3 3.3 0 1 0 6.6 0a3.3 3.3 0 1 0 -6.6 0M169.6 148.3a3.3 3.3 0 1 0 6.6 0a3.3 3.3 0 1 0 -6.6 0M256.9 138.2a3.3 3.3 0 1 0 6.6 0a3.3 3.3 0 1 0 -6.6 0M207.4 151.4a3.3 3.3 0 1 0 6.6 0a3.3 3.3 0 1 0 -6.6 0M167.6 149.0a3.3 3.3 0 1 0 6.6 0a3.3 3.3 0 1 0 -6.6 0M144.5 158.0a3.3 3.3 0 1 0 6.6 0a3.3 3.3 0 1 0 -6.6 0M249.0 137.7a3.3 3.3 0 1 0 6.6 0a3.3 3.3 0 1 0 -6.6 0M149.0 147.2a3.3 3.3 0 1 0 6.6 0a3.3 3.3 0 1 0 -6.6 0M267.7 145.9a3.3 3.3 0 1 0 6.6 0a3.3 3.3 0 1 0 -6.6 0M276.1 151.9a3.3 3.3 0 1 0 6.6 0a3.3 3.3 0 1 0 -6.6 0M185.1 143.3a3.3 3.3 0 1 0 6.6 0a3.3 3.3 0 1 0 -6.6 0M247.5 157.2a3.3 3.3 0 1 0 6.6 0a3.3 3.3 0 1 0 -6.6 0M143.6 153.8a3.3 3.3 0 1 0 6.6 0a3.3 3.3 0 1 0 -6.6 0M276.0 143.9a3.3 3.3 0 1 0 6.6 0a3.3 3.3 0 1 0 -6.6 0M201.2 152.7a3.3 3.3 0 1 0 6.6 0a3.3 3.3 0 1 0 -6.6 0M166.1 149.1a3.3 3.3 0 1 0 6.6 0a3.3 3.3 0 1 0 -6.6 0M249.9 141.9a3.3 3.3 0 1 0 6.6 0a3.3 3.3 0 1 0 -6.6 0M191.5 143.5a3.3 3.3 0 1 0 6.6 0a3.3 3.3 0 1 0 -6.6 0M247.1 138.7a3.3 3.3 0 1 0 6.6 0a3.3 3.3 0 1 0 -6.6 0M145.0 150.5a3.3 3.3 0 1 0 6.6 0a3.3 3.3 0 1 0 -6.6 0M279.4 159.0a3.3 3.3 0 1 0 6.6 0a3.3 3.3 0 1 0 -6.6 0M152.1 143.1a3.3 3.3 0 1 0 6.6 0a3.3 3.3 0 1 0 -6.6 0M240.9 145.3a3.3 3.3 0 1 0 6.6 0a3.3 3.3 0 1 0 -6.6 0M199.3 152.4a3.3 3.3 0 1 0 6.6 0a3.3 3.3 0 1 0 -6.6 0M260.4 149.6a3.3 3.3 0 1 0 6.6 0a3.3 3.3 0 1 0 -6.6 0M181.9 148.4a3.3 3.3 0 1 0 6.6 0a3.3 3.3 0 1 0 -6.6 0M245.0 143.6a3.3 3.3 0 1 0 6.6 0a3.3 3.3 0 1 0 -6.6 0M175.0 152.7a3.3 3.3 0 1 0 6.6 0a3.3 3.3 0 1 0 -6.6 0M222.3 147.3a3.3 3.3 0 1 0 6.6 0a3.3 3.3 0 1 0 -6.6 0M281.1 144.4a3.3 3.3 0 1 0 6.6 0a3.3 3.3 0 1 0 -6.6 0M255.0 149.3a3.3 3.3 0 1 0 6.6 0a3.3 3.3 0 1 0 -6.6 0M207.6 153.8a3.3 3.3 0 1 0 6.6 0a3.3 3.3 0 1 0 -6.6 0M145.9 146.0a3.3 3.3 0 1 0 6.6 0a3.3 3.3 0 1 0 -6.6 0M167.1 148.7a3.3 3.3 0 1 0 6.6 0a3.3 3.3 0 1 0 -6.6 0M193.0 148.2a3.3 3.3 0 1 0 6.6 0a3.3 3.3 0 1 0 -6.6 0M250.6 142.7a3.3 3.3 0 1 0 6.6 0a3.3 3.3 0 1 0 -6.6 0M228.2 148.4a3.3 3.3 0 1 0 6.6 0a3.3 3.3 0 1 0 -6.6 0M160.2 139.1a3.3 3.3 0 1 0 6.6 0a3.3 3.3 0 1 0 -6.6 0M225.3 136.4a3.3 3.3 0 1 0 6.6 0a3.3 3.3 0 1 0 -6.6 0M186.6 145.9a3.3 3.3 0 1 0 6.6 0a3.3 3.3 0 1 0 -6.6 0M169.0 139.3a3.3 3.3 0 1 0 6.6 0a3.3 3.3 0 1 0 -6.6 0M154.6 142.3a3.3 3.3 0 1 0 6.6 0a3.3 3.3 0 1 0 -6.6 0M230.9 144.5a3.3 3.3 0 1 0 6.6 0a3.3 3.3 0 1 0 -6.6 0M238.9 147.2a3.3 3.3 0 1 0 6.6 0a3.3 3.3 0 1 0 -6.6 0M183.8 149.6a3.3 3.3 0 1 0 6.6 0a3.3 3.3 0 1 0 -6.6 0M190.9 157.6a3.3 3.3 0 1 0 6.6 0a3.3 3.3 0 1 0 -6.6 0M281.7 143.4a3.3 3.3 0 1 0 6.6 0a3.3 3.3 0 1 0 -6.6 0M243.5 139.0a3.3 3.3 0 1 0 6.6 0a3.3 3.3 0 1 0 -6.6 0M268.2 161.1a3.3 3.3 0 1 0 6.6 0a3.3 3.3 0 1 0 -6.6 0M197.8 145.2a3.3 3.3 0 1 0 6.6 0a3.3 3.3 0 1 0 -6.6 0M142.3 156.5a3.3 3.3 0 1 0 6.6 0a3.3 3.3 0 1 0 -6.6 0M269.3 155.7a3.3 3.3 0 1 0 6.6 0a3.3 3.3 0 1 0 -6.6 0M192.8 146.1a3.3 3.3 0 1 0 6.6 0a3.3 3.3 0 1 0 -6.6 0M180.4 158.1a3.3 3.3 0 1 0 6.6 0a3.3 3.3 0 1 0 -6.6 0M155.6 145.6a3.3 3.3 0 1 0 6.6 0a3.3 3.3 0 1 0 -6.6 0M277.5 140.7a3.3 3.3 0 1 0 6.6 0a3.3 3.3 0 1 0 -6.6 0M274.1 141.7a3.3 3.3 0 1 0 6.6 0a3.3 3.3 0 1 0 -6.6 0M271.7 164.0a3.3 3.3 0 1 0 6.6 0a3.3 3.3 0 1 0 -6.6 0M228.2 150.5a3.3 3.3 0 1 0 6.6 0a3.3 3.3 0 1 0 -6.6 0M171.7 150.0a3.3 3.3 0 1 0 6.6 0a3.3 3.3 0 1 0 -6.6 0M257.9 142.3a3.3 3.3 0 1 0 6.6 0a3.3 3.3 0 1 0 -6.6 0M196.9 148.2a3.3 3.3 0 1 0 6.6 0a3.3 3.3 0 1 0 -6.6 0M157.6 144.9a3.3 3.3 0 1 0 6.6 0a3.3 3.3 0 1 0 -6.6 0M267.6 153.9a3.3 3.3 0 1 0 6.6 0a3.3 3.3 0 1 0 -6.6 0M247.7 155.2a3.3 3.3 0 1 0 6.6 0a3.3 3.3 0 1 0 -6.6 0M156.9 142.3a3.3 3.3 0 1 0 6.6 0a3.3 3.3 0 1 0 -6.6 0M229.2 149.9a3.3 3.3 0 1 0 6.6 0a3.3 3.3 0 1 0 -6.6 0M222.9 153.4a3.3 3.3 0 1 0 6.6 0a3.3 3.3 0 1 0 -6.6 0M203.6 138.1a3.3 3.3 0 1 0 6.6 0a3.3 3.3 0 1 0 -6.6 0M228.0 144.8a3.3 3.3 0 1 0 6.6 0a3.3 3.3 0 1 0 -6.6 0M248.6 141.9a3.3 3.3 0 1 0 6.6 0a3.3 3.3 0 1 0 -6.6 0M207.4 138.7a3.3 3.3 0 1 0 6.6 0a3.3 3.3 0 1 0 -6.6 0M201.3 145.3a3.3 3.3 0 1 0 6.6 0a3.3 3.3 0 1 0 -6.6 0M212.6 148.1a3.3 3.3 0 1 0 6.6 0a3.3 3.3 0 1 0 -6.6 0M151.8 145.7a3.3 3.3 0 1 0 6.6 0a3.3 3.3 0 1 0 -6.6 0M147.9 147.1a3.3 3.3 0 1 0 6.6 0a3.3 3.3 0 1 0 -6.6 0M275.2 163.5a3.3 3.3 0 1 0 6.6 0a3.3 3.3 0 1 0 -6.6 0M281.6 153.3a3.3 3.3 0 1 0 6.6 0a3.3 3.3 0 1 0 -6.6 0M279.6 167.6a3.3 3.3 0 1 0 6.6 0a3.3 3.3 0 1 0 -6.6 0M270.2 160.5a3.3 3.3 0 1 0 6.6 0a3.3 3.3 0 1 0 -6.6 0M272.3 147.8a3.3 3.3 0 1 0 6.6 0a3.3 3.3 0 1 0 -6.6 0M247.5 156.4a3.3 3.3 0 1 0 6.6 0a3.3 3.3 0 1 0 -6.6 0M179.2 144.9a3.3 3.3 0 1 0 6.6 0a3.3 3.3 0 1 0 -6.6 0M270.8 145.5a3.3 3.3 0 1 0 6.6 0a3.3 3.3 0 1 0 -6.6 0M212.0 137.3a3.3 3.3 0 1 0 6.6 0a3.3 3.3 0 1 0 -6.6 0M166.0 149.4a3.3 3.3 0 1 0 6.6 0a3.3 3.3 0 1 0 -6.6 0M236.7 151.7a3.3 3.3 0 1 0 6.6 0a3.3 3.3 0 1 0 -6.6 0M156.5 143.5a3.3 3.3 0 1 0 6.6 0a3.3 3.3 0 1 0 -6.6 0M191.2 153.3a3.3 3.3 0 1 0 6.6 0a3.3 3.3 0 1 0 -6.6 0M265.5 165.6a3.3 3.3 0 1 0 6.6 0a3.3 3.3 0 1 0 -6.6 0M229.6 158.6a3.3 3.3 0 1 0 6.6 0a3.3 3.3 0 1 0 -6.6 0M177.7 147.4a3.3 3.3 0 1 0 6.6 0a3.3 3.3 0 1 0 -6.6 0M248.7 140.8a3.3 3.3 0 1 0 6.6 0a3.3 3.3 0 1 0 -6.6 0M245.7 155.3a3.3 3.3 0 1 0 6.6 0a3.3 3.3 0 1 0 -6.6 0M176.2 155.3a3.3 3.3 0 1 0 6.6 0a3.3 3.3 0 1 0 -6.6 0M234.4 141.7a3.3 3.3 0 1 0 6.6 0a3.3 3.3 0 1 0 -6.6 0M145.0 155.0a3.3 3.3 0 1 0 6.6 0a3.3 3.3 0 1 0 -6.6 0M201.5 152.2a3.3 3.3 0 1 0 6.6 0a3.3 3.3 0 1 0 -6.6 0M158.9 144.3a3.3 3.3 0 1 0 6.6 0a3.3 3.3 0 1 0 -6.6 0M143.3 151.9a3.3 3.3 0 1 0 6.6 0a3.3 3.3 0 1 0 -6.6 0M155.3 138.1a3.3 3.3 0 1 0 6.6 0a3.3 3.3 0 1 0 -6.6 0M223.0 142.8a3.3 3.3 0 1 0 6.6 0a3.3 3.3 0 1 0 -6.6 0M228.8 142.9a3.3 3.3 0 1 0 6.6 0a3.3 3.3 0 1 0 -6.6 0M273.2 141.8a3.3 3.3 0 1 0 6.6 0a3.3 3.3 0 1 0 -6.6 0M153.8 147.9a3.3 3.3 0 1 0 6.6 0a3.3 3.3 0 1 0 -6.6 0M197.2 142.2a3.3 3.3 0 1 0 6.6 0a3.3 3.3 0 1 0 -6.6 0M231.7 149.1a3.3 3.3 0 1 0 6.6 0a3.3 3.3 0 1 0 -6.6 0M231.8 162.0a3.3 3.3 0 1 0 6.6 0a3.3 3.3 0 1 0 -6.6 0M244.3 157.4a3.3 3.3 0 1 0 6.6 0a3.3 3.3 0 1 0 -6.6 0M146.4 149.2a3.3 3.3 0 1 0 6.6 0a3.3 3.3 0 1 0 -6.6 0M173.9 150.2a3.3 3.3 0 1 0 6.6 0a3.3 3.3 0 1 0 -6.6 0M141.9 159.3a3.3 3.3 0 1 0 6.6 0a3.3 3.3 0 1 0 -6.6 0M160.4 144.1a3.3 3.3 0 1 0 6.6 0a3.3 3.3 0 1 0 -6.6 0M212.1 145.3a3.3 3.3 0 1 0 6.6 0a3.3 3.3 0 1 0 -6.6 0M184.1 143.6a3.3 3.3 0 1 0 6.6 0a3.3 3.3 0 1 0 -6.6 0M266.4 146.4a3.3 3.3 0 1 0 6.6 0a3.3 3.3 0 1 0 -6.6 0M260.1 153.0a3.3 3.3 0 1 0 6.6 0a3.3 3.3 0 1 0 -6.6 0M204.4 139.0a3.3 3.3 0 1 0 6.6 0a3.3 3.3 0 1 0 -6.6 0M173.1 142.6a3.3 3.3 0 1 0 6.6 0a3.3 3.3 0 1 0 -6.6 0M246.6 157.1a3.3 3.3 0 1 0 6.6 0a3.3 3.3 0 1 0 -6.6 0M177.9 147.1a3.3 3.3 0 1 0 6.6 0a3.3 3.3 0 1 0 -6.6 0M252.1 142.4a3.3 3.3 0 1 0 6.6 0a3.3 3.3 0 1 0 -6.6 0M231.3 154.0a3.3 3.3 0 1 0 6.6 0a3.3 3.3 0 1 0 -6.6 0M142.3 150.5a3.3 3.3 0 1 0 6.6 0a3.3 3.3 0 1 0 -6.6 0M245.8 149.7a3.3 3.3 0 1 0 6.6 0a3.3 3.3 0 1 0 -6.6 0M265.1 145.2a3.3 3.3 0 1 0 6.6 0a3.3 3.3 0 1 0 -6.6 0M269.0 159.7a3.3 3.3 0 1 0 6.6 0a3.3 3.3 0 1 0 -6.6 0M279.2 163.8a3.3 3.3 0 1 0 6.6 0a3.3 3.3 0 1 0 -6.6 0M239.2 154.3a3.3 3.3 0 1 0 6.6 0a3.3 3.3 0 1 0 -6.6 0M221.1 142.3a3.3 3.3 0 1 0 6.6 0a3.3 3.3 0 1 0 -6.6 0M228.6 161.0a3.3 3.3 0 1 0 6.6 0a3.3 3.3 0 1 0 -6.6 0M160.7 137.0a3.3 3.3 0 1 0 6.6 0a3.3 3.3 0 1 0 -6.6 0M272.1 141.8a3.3 3.3 0 1 0 6.6 0a3.3 3.3 0 1 0 -6.6 0M144.2 156.1a3.3 3.3 0 1 0 6.6 0a3.3 3.3 0 1 0 -6.6 0M230.2 148.7a3.3 3.3 0 1 0 6.6 0a3.3 3.3 0 1 0 -6.6 0M224.0 157.7a3.3 3.3 0 1 0 6.6 0a3.3 3.3 0 1 0 -6.6 0M256.5 147.2a3.3 3.3 0 1 0 6.6 0a3.3 3.3 0 1 0 -6.6 0M270.0 137.9a3.3 3.3 0 1 0 6.6 0a3.3 3.3 0 1 0 -6.6 0M156.1 146.1a3.3 3.3 0 1 0 6.6 0a3.3 3.3 0 1 0 -6.6 0M255.5 155.6a3.3 3.3 0 1 0 6.6 0a3.3 3.3 0 1 0 -6.6 0M181.0 142.9a3.3 3.3 0 1 0 6.6 0a3.3 3.3 0 1 0 -6.6 0M247.7 144.0a3.3 3.3 0 1 0 6.6 0a3.3 3.3 0 1 0 -6.6 0M200.3 143.3a3.3 3.3 0 1 0 6.6 0a3.3 3.3 0 1 0 -6.6 0M180.3 146.0a3.3 3.3 0 1 0 6.6 0a3.3 3.3 0 1 0 -6.6 0M277.0 163.5a3.3 3.3 0 1 0 6.6 0a3.3 3.3 0 1 0 -6.6 0M227.9 149.0a3.3 3.3 0 1 0 6.6 0a3.3 3.3 0 1 0 -6.6 0M202.1 146.8a3.3 3.3 0 1 0 6.6 0a3.3 3.3 0 1 0 -6.6 0M216.5 154.4a3.3 3.3 0 1 0 6.6 0a3.3 3.3 0 1 0 -6.6 0M153.1 135.3a3.3 3.3 0 1 0 6.6 0a3.3 3.3 0 1 0 -6.6 0M168.8 143.2a3.3 3.3 0 1 0 6.6 0a3.3 3.3 0 1 0 -6.6 0M209.9 149.9a3.3 3.3 0 1 0 6.6 0a3.3 3.3 0 1 0 -6.6 0M166.4 140.9a3.3 3.3 0 1 0 6.6 0a3.3 3.3 0 1 0 -6.6 0M258.3 159.0a3.3 3.3 0 1 0 6.6 0a3.3 3.3 0 1 0 -6.6 0M180.4 153.9a3.3 3.3 0 1 0 6.6 0a3.3 3.3 0 1 0 -6.6 0M210.9 147.5a3.3 3.3 0 1 0 6.6 0a3.3 3.3 0 1 0 -6.6 0M151.6 147.3a3.3 3.3 0 1 0 6.6 0a3.3 3.3 0 1 0 -6.6 0M229.3 149.5a3.3 3.3 0 1 0 6.6 0a3.3 3.3 0 1 0 -6.6 0M196.2 149.5a3.3 3.3 0 1 0 6.6 0a3.3 3.3 0 1 0 -6.6 0M143.7 150.5a3.3 3.3 0 1 0 6.6 0a3.3 3.3 0 1 0 -6.6 0M268.1 148.8a3.3 3.3 0 1 0 6.6 0a3.3 3.3 0 1 0 -6.6 0M265.7 151.1a3.3 3.3 0 1 0 6.6 0a3.3 3.3 0 1 0 -6.6 0M215.6 152.5a3.3 3.3 0 1 0 6.6 0a3.3 3.3 0 1 0 -6.6 0M189.6 146.6a3.3 3.3 0 1 0 6.6 0a3.3 3.3 0 1 0 -6.6 0M259.9 148.1a3.3 3.3 0 1 0 6.6 0a3.3 3.3 0 1 0 -6.6 0M202.5 142.3a3.3 3.3 0 1 0 6.6 0a3.3 3.3 0 1 0 -6.6 0M205.8 138.2a3.3 3.3 0 1 0 6.6 0a3.3 3.3 0 1 0 -6.6 0M183.0 150.9a3.3 3.3 0 1 0 6.6 0a3.3 3.3 0 1 0 -6.6 0M162.3 140.4a3.3 3.3 0 1 0 6.6 0a3.3 3.3 0 1 0 -6.6 0M214.3 142.9a3.3 3.3 0 1 0 6.6 0a3.3 3.3 0 1 0 -6.6 0M167.0 141.3a3.3 3.3 0 1 0 6.6 0a3.3 3.3 0 1 0 -6.6 0M276.8 148.8a3.3 3.3 0 1 0 6.6 0a3.3 3.3 0 1 0 -6.6 0M279.9 157.0a3.3 3.3 0 1 0 6.6 0a3.3 3.3 0 1 0 -6.6 0M168.0 135.8a3.3 3.3 0 1 0 6.6 0a3.3 3.3 0 1 0 -6.6 0M195.3 148.8a3.3 3.3 0 1 0 6.6 0a3.3 3.3 0 1 0 -6.6 0M252.5 149.7a3.3 3.3 0 1 0 6.6 0a3.3 3.3 0 1 0 -6.6 0M205.9 146.2a3.3 3.3 0 1 0 6.6 0a3.3 3.3 0 1 0 -6.6 0M197.6 152.8a3.3 3.3 0 1 0 6.6 0a3.3 3.3 0 1 0 -6.6 0M221.7 143.2a3.3 3.3 0 1 0 6.6 0a3.3 3.3 0 1 0 -6.6 0M242.7 157.6a3.3 3.3 0 1 0 6.6 0a3.3 3.3 0 1 0 -6.6 0M261.2 152.7a3.3 3.3 0 1 0 6.6 0a3.3 3.3 0 1 0 -6.6 0M184.6 145.5a3.3 3.3 0 1 0 6.6 0a3.3 3.3 0 1 0 -6.6 0M251.3 145.6a3.3 3.3 0 1 0 6.6 0a3.3 3.3 0 1 0 -6.6 0M200.3 148.8a3.3 3.3 0 1 0 6.6 0a3.3 3.3 0 1 0 -6.6 0M198.3 149.7a3.3 3.3 0 1 0 6.6 0a3.3 3.3 0 1 0 -6.6 0M233.1 150.6a3.3 3.3 0 1 0 6.6 0a3.3 3.3 0 1 0 -6.6 0M278.6 154.1a3.3 3.3 0 1 0 6.6 0a3.3 3.3 0 1 0 -6.6 0M163.0 147.7a3.3 3.3 0 1 0 6.6 0a3.3 3.3 0 1 0 -6.6 0M154.5 142.2a3.3 3.3 0 1 0 6.6 0a3.3 3.3 0 1 0 -6.6 0M242.0 153.6a3.3 3.3 0 1 0 6.6 0a3.3 3.3 0 1 0 -6.6 0M257.9 146.6a3.3 3.3 0 1 0 6.6 0a3.3 3.3 0 1 0 -6.6 0M274.8 158.0a3.3 3.3 0 1 0 6.6 0a3.3 3.3 0 1 0 -6.6 0M195.9 151.4a3.3 3.3 0 1 0 6.6 0a3.3 3.3 0 1 0 -6.6 0M190.6 148.4a3.3 3.3 0 1 0 6.6 0a3.3 3.3 0 1 0 -6.6 0M196.9 148.7a3.3 3.3 0 1 0 6.6 0a3.3 3.3 0 1 0 -6.6 0M199.9 143.5a3.3 3.3 0 1 0 6.6 0a3.3 3.3 0 1 0 -6.6 0M172.0 150.0a3.3 3.3 0 1 0 6.6 0a3.3 3.3 0 1 0 -6.6 0M171.2 140.1a3.3 3.3 0 1 0 6.6 0a3.3 3.3 0 1 0 -6.6 0M158.5 146.8a3.3 3.3 0 1 0 6.6 0a3.3 3.3 0 1 0 -6.6 0M206.8 140.3a3.3 3.3 0 1 0 6.6 0a3.3 3.3 0 1 0 -6.6 0M277.0 156.8a3.3 3.3 0 1 0 6.6 0a3.3 3.3 0 1 0 -6.6 0M256.4 144.3a3.3 3.3 0 1 0 6.6 0a3.3 3.3 0 1 0 -6.6 0M218.0 154.5a3.3 3.3 0 1 0 6.6 0a3.3 3.3 0 1 0 -6.6 0M190.5 147.8a3.3 3.3 0 1 0 6.6 0a3.3 3.3 0 1 0 -6.6 0M176.2 141.7a3.3 3.3 0 1 0 6.6 0a3.3 3.3 0 1 0 -6.6 0M140.5 149.8a3.3 3.3 0 1 0 6.6 0a3.3 3.3 0 1 0 -6.6 0M183.0 149.7a3.3 3.3 0 1 0 6.6 0a3.3 3.3 0 1 0 -6.6 0M230.7 157.0a3.3 3.3 0 1 0 6.6 0a3.3 3.3 0 1 0 -6.6 0M261.5 158.7a3.3 3.3 0 1 0 6.6 0a3.3 3.3 0 1 0 -6.6 0M268.8 151.6a3.3 3.3 0 1 0 6.6 0a3.3 3.3 0 1 0 -6.6 0M230.1 140.6a3.3 3.3 0 1 0 6.6 0a3.3 3.3 0 1 0 -6.6 0M275.3 137.2a3.3 3.3 0 1 0 6.6 0a3.3 3.3 0 1 0 -6.6 0M160.4 146.5a3.3 3.3 0 1 0 6.6 0a3.3 3.3 0 1 0 -6.6 0M189.3 158.6a3.3 3.3 0 1 0 6.6 0a3.3 3.3 0 1 0 -6.6 0M252.6 156.1a3.3 3.3 0 1 0 6.6 0a3.3 3.3 0 1 0 -6.6 0M226.5 161.0a3.3 3.3 0 1 0 6.6 0a3.3 3.3 0 1 0 -6.6 0M252.1 145.7a3.3 3.3 0 1 0 6.6 0a3.3 3.3 0 1 0 -6.6 0M215.5 151.4a3.3 3.3 0 1 0 6.6 0a3.3 3.3 0 1 0 -6.6 0M219.0 142.1a3.3 3.3 0 1 0 6.6 0a3.3 3.3 0 1 0 -6.6 0M159.9 136.1a3.3 3.3 0 1 0 6.6 0a3.3 3.3 0 1 0 -6.6 0M206.5 144.5a3.3 3.3 0 1 0 6.6 0a3.3 3.3 0 1 0 -6.6 0M210.9 151.4a3.3 3.3 0 1 0 6.6 0a3.3 3.3 0 1 0 -6.6 0M141.1 153.5a3.3 3.3 0 1 0 6.6 0a3.3 3.3 0 1 0 -6.6 0M234.6 149.2a3.3 3.3 0 1 0 6.6 0a3.3 3.3 0 1 0 -6.6 0M276.6 156.8a3.3 3.3 0 1 0 6.6 0a3.3 3.3 0 1 0 -6.6 0M163.7 130.1a3.3 3.3 0 1 0 6.6 0a3.3 3.3 0 1 0 -6.6 0M171.2 129.4a3.3 3.3 0 1 0 6.6 0a3.3 3.3 0 1 0 -6.6 0M178.2 163.2a3.3 3.3 0 1 0 6.6 0a3.3 3.3 0 1 0 -6.6 0M176.9 172.7a3.3 3.3 0 1 0 6.6 0a3.3 3.3 0 1 0 -6.6 0M190.7 174.0a3.3 3.3 0 1 0 6.6 0a3.3 3.3 0 1 0 -6.6 0M192.0 166.4a3.3 3.3 0 1 0 6.6 0a3.3 3.3 0 1 0 -6.6 0M213.3 130.6a3.3 3.3 0 1 0 6.6 0a3.3 3.3 0 1 0 -6.6 0M213.3 169.4a3.3 3.3 0 1 0 6.6 0a3.3 3.3 0 1 0 -6.6 0M219.5 137.6a3.3 3.3 0 1 0 6.6 0a3.3 3.3 0 1 0 -6.6 0M236.6 176.5a3.3 3.3 0 1 0 6.6 0a3.3 3.3 0 1 0 -6.6 0M243.4 133.4a3.3 3.3 0 1 0 6.6 0a3.3 3.3 0 1 0 -6.6 0M247.1 169.7a3.3 3.3 0 1 0 6.6 0a3.3 3.3 0 1 0 -6.6 0M258.4 165.7a3.3 3.3 0 1 0 6.6 0a3.3 3.3 0 1 0 -6.6 0M270.4 127.6a3.3 3.3 0 1 0 6.6 0a3.3 3.3 0 1 0 -6.6 0M269.7 137.6a3.3 3.3 0 1 0 6.6 0a3.3 3.3 0 1 0 -6.6 0M281.8 145.9a3.3 3.3 0 1 0 6.6 0a3.3 3.3 0 1 0 -6.6 0M284.8 157.6a3.3 3.3 0 1 0 6.6 0a3.3 3.3 0 1 0 -6.6 0M288.1 152.8a3.3 3.3 0 1 0 6.6 0a3.3 3.3 0 1 0 -6.6 0M291.2 156.7a3.3 3.3 0 1 0 6.6 0a3.3 3.3 0 1 0 -6.6 0M293.7 162.4a3.3 3.3 0 1 0 6.6 0a3.3 3.3 0 1 0 -6.6 0M296.2 158.7a3.3 3.3 0 1 0 6.6 0a3.3 3.3 0 1 0 -6.6 0M299.8 153.9a3.3 3.3 0 1 0 6.6 0a3.3 3.3 0 1 0 -6.6 0M303.1 154.2a3.3 3.3 0 1 0 6.6 0a3.3 3.3 0 1 0 -6.6 0M305.7 155.5a3.3 3.3 0 1 0 6.6 0a3.3 3.3 0 1 0 -6.6 0M309.0 152.6a3.3 3.3 0 1 0 6.6 0a3.3 3.3 0 1 0 -6.6 0M311.6 155.2a3.3 3.3 0 1 0 6.6 0a3.3 3.3 0 1 0 -6.6 0M314.8 159.4a3.3 3.3 0 1 0 6.6 0a3.3 3.3 0 1 0 -6.6 0M317.5 159.6a3.3 3.3 0 1 0 6.6 0a3.3 3.3 0 1 0 -6.6 0M320.6 156.3a3.3 3.3 0 1 0 6.6 0a3.3 3.3 0 1 0 -6.6 0M323.5 156.1a3.3 3.3 0 1 0 6.6 0a3.3 3.3 0 1 0 -6.6 0M327.2 157.3a3.3 3.3 0 1 0 6.6 0a3.3 3.3 0 1 0 -6.6 0M330.0 155.0a3.3 3.3 0 1 0 6.6 0a3.3 3.3 0 1 0 -6.6 0M332.5 155.1a3.3 3.3 0 1 0 6.6 0a3.3 3.3 0 1 0 -6.6 0M335.8 158.4a3.3 3.3 0 1 0 6.6 0a3.3 3.3 0 1 0 -6.6 0M339.0 152.6a3.3 3.3 0 1 0 6.6 0a3.3 3.3 0 1 0 -6.6 0M341.9 162.7a3.3 3.3 0 1 0 6.6 0a3.3 3.3 0 1 0 -6.6 0M344.7 152.0a3.3 3.3 0 1 0 6.6 0a3.3 3.3 0 1 0 -6.6 0M347.5 150.8a3.3 3.3 0 1 0 6.6 0a3.3 3.3 0 1 0 -6.6 0M350.4 160.0a3.3 3.3 0 1 0 6.6 0a3.3 3.3 0 1 0 -6.6 0M353.8 157.0a3.3 3.3 0 1 0 6.6 0a3.3 3.3 0 1 0 -6.6 0M357.0 159.8a3.3 3.3 0 1 0 6.6 0a3.3 3.3 0 1 0 -6.6 0M359.8 157.1a3.3 3.3 0 1 0 6.6 0a3.3 3.3 0 1 0 -6.6 0M362.8 158.5a3.3 3.3 0 1 0 6.6 0a3.3 3.3 0 1 0 -6.6 0M365.8 159.2a3.3 3.3 0 1 0 6.6 0a3.3 3.3 0 1 0 -6.6 0M368.4 160.0a3.3 3.3 0 1 0 6.6 0a3.3 3.3 0 1 0 -6.6 0M371.7 161.8a3.3 3.3 0 1 0 6.6 0a3.3 3.3 0 1 0 -6.6 0M374.3 155.0a3.3 3.3 0 1 0 6.6 0a3.3 3.3 0 1 0 -6.6 0M377.2 160.2a3.3 3.3 0 1 0 6.6 0a3.3 3.3 0 1 0 -6.6 0M381.1 158.6a3.3 3.3 0 1 0 6.6 0a3.3 3.3 0 1 0 -6.6 0M383.6 157.1a3.3 3.3 0 1 0 6.6 0a3.3 3.3 0 1 0 -6.6 0M387.0 155.8a3.3 3.3 0 1 0 6.6 0a3.3 3.3 0 1 0 -6.6 0M389.5 155.0a3.3 3.3 0 1 0 6.6 0a3.3 3.3 0 1 0 -6.6 0M392.6 155.9a3.3 3.3 0 1 0 6.6 0a3.3 3.3 0 1 0 -6.6 0M395.6 160.3a3.3 3.3 0 1 0 6.6 0a3.3 3.3 0 1 0 -6.6 0M399.1 157.8a3.3 3.3 0 1 0 6.6 0a3.3 3.3 0 1 0 -6.6 0M401.8 158.6a3.3 3.3 0 1 0 6.6 0a3.3 3.3 0 1 0 -6.6 0M404.3 163.9a3.3 3.3 0 1 0 6.6 0a3.3 3.3 0 1 0 -6.6 0M407.8 164.5a3.3 3.3 0 1 0 6.6 0a3.3 3.3 0 1 0 -6.6 0M410.6 159.2a3.3 3.3 0 1 0 6.6 0a3.3 3.3 0 1 0 -6.6 0M413.6 162.6a3.3 3.3 0 1 0 6.6 0a3.3 3.3 0 1 0 -6.6 0M417.1 164.4a3.3 3.3 0 1 0 6.6 0a3.3 3.3 0 1 0 -6.6 0M419.7 161.6a3.3 3.3 0 1 0 6.6 0a3.3 3.3 0 1 0 -6.6 0M422.3 161.5a3.3 3.3 0 1 0 6.6 0a3.3 3.3 0 1 0 -6.6 0M425.4 157.3a3.3 3.3 0 1 0 6.6 0a3.3 3.3 0 1 0 -6.6 0M428.2 155.9a3.3 3.3 0 1 0 6.6 0a3.3 3.3 0 1 0 -6.6 0M431.9 157.2a3.3 3.3 0 1 0 6.6 0a3.3 3.3 0 1 0 -6.6 0M435.2 157.5a3.3 3.3 0 1 0 6.6 0a3.3 3.3 0 1 0 -6.6 0M438.1 158.6a3.3 3.3 0 1 0 6.6 0a3.3 3.3 0 1 0 -6.6 0M440.2 163.0a3.3 3.3 0 1 0 6.6 0a3.3 3.3 0 1 0 -6.6 0M443.4 163.6a3.3 3.3 0 1 0 6.6 0a3.3 3.3 0 1 0 -6.6 0M446.4 160.6a3.3 3.3 0 1 0 6.6 0a3.3 3.3 0 1 0 -6.6 0M450.0 164.2a3.3 3.3 0 1 0 6.6 0a3.3 3.3 0 1 0 -6.6 0M453.1 163.6a3.3 3.3 0 1 0 6.6 0a3.3 3.3 0 1 0 -6.6 0M455.3 162.4a3.3 3.3 0 1 0 6.6 0a3.3 3.3 0 1 0 -6.6 0M406.0 167.4a3.3 3.3 0 1 0 6.6 0a3.3 3.3 0 1 0 -6.6 0M325.9 152.5a3.3 3.3 0 1 0 6.6 0a3.3 3.3 0 1 0 -6.6 0M283.8 152.1a3.3 3.3 0 1 0 6.6 0a3.3 3.3 0 1 0 -6.6 0M335.9 157.4a3.3 3.3 0 1 0 6.6 0a3.3 3.3 0 1 0 -6.6 0M366.8 154.9a3.3 3.3 0 1 0 6.6 0a3.3 3.3 0 1 0 -6.6 0M382.4 158.4a3.3 3.3 0 1 0 6.6 0a3.3 3.3 0 1 0 -6.6 0M306.7 155.5a3.3 3.3 0 1 0 6.6 0a3.3 3.3 0 1 0 -6.6 0M392.0 155.0a3.3 3.3 0 1 0 6.6 0a3.3 3.3 0 1 0 -6.6 0M419.6 164.6a3.3 3.3 0 1 0 6.6 0a3.3 3.3 0 1 0 -6.6 0M332.7 165.0a3.3 3.3 0 1 0 6.6 0a3.3 3.3 0 1 0 -6.6 0M405.0 161.5a3.3 3.3 0 1 0 6.6 0a3.3 3.3 0 1 0 -6.6 0M453.2 161.6a3.3 3.3 0 1 0 6.6 0a3.3 3.3 0 1 0 -6.6 0M356.6 156.3a3.3 3.3 0 1 0 6.6 0a3.3 3.3 0 1 0 -6.6 0M387.1 156.2a3.3 3.3 0 1 0 6.6 0a3.3 3.3 0 1 0 -6.6 0M281.5 151.5a3.3 3.3 0 1 0 6.6 0a3.3 3.3 0 1 0 -6.6 0M384.4 154.7a3.3 3.3 0 1 0 6.6 0a3.3 3.3 0 1 0 -6.6 0M427.8 163.5a3.3 3.3 0 1 0 6.6 0a3.3 3.3 0 1 0 -6.6 0M329.4 162.7a3.3 3.3 0 1 0 6.6 0a3.3 3.3 0 1 0 -6.6 0M442.0 156.8a3.3 3.3 0 1 0 6.6 0a3.3 3.3 0 1 0 -6.6 0M378.6 157.3a3.3 3.3 0 1 0 6.6 0a3.3 3.3 0 1 0 -6.6 0M445.2 163.7a3.3 3.3 0 1 0 6.6 0a3.3 3.3 0 1 0 -6.6 0M400.5 157.3a3.3 3.3 0 1 0 6.6 0a3.3 3.3 0 1 0 -6.6 0M326.0 159.3a3.3 3.3 0 1 0 6.6 0a3.3 3.3 0 1 0 -6.6 0M296.6 155.9a3.3 3.3 0 1 0 6.6 0a3.3 3.3 0 1 0 -6.6 0M383.2 158.6a3.3 3.3 0 1 0 6.6 0a3.3 3.3 0 1 0 -6.6 0M365.1 150.7a3.3 3.3 0 1 0 6.6 0a3.3 3.3 0 1 0 -6.6 0M315.0 160.0a3.3 3.3 0 1 0 6.6 0a3.3 3.3 0 1 0 -6.6 0M345.1 155.0a3.3 3.3 0 1 0 6.6 0a3.3 3.3 0 1 0 -6.6 0M372.2 149.3a3.3 3.3 0 1 0 6.6 0a3.3 3.3 0 1 0 -6.6 0M456.7 157.2a3.3 3.3 0 1 0 6.6 0a3.3 3.3 0 1 0 -6.6 0M392.6 154.5a3.3 3.3 0 1 0 6.6 0a3.3 3.3 0 1 0 -6.6 0M341.9 147.2a3.3 3.3 0 1 0 6.6 0a3.3 3.3 0 1 0 -6.6 0M287.1 162.7a3.3 3.3 0 1 0 6.6 0a3.3 3.3 0 1 0 -6.6 0M381.0 161.3a3.3 3.3 0 1 0 6.6 0a3.3 3.3 0 1 0 -6.6 0M356.2 164.4a3.3 3.3 0 1 0 6.6 0a3.3 3.3 0 1 0 -6.6 0M450.8 158.4a3.3 3.3 0 1 0 6.6 0a3.3 3.3 0 1 0 -6.6 0M316.6 148.7a3.3 3.3 0 1 0 6.6 0a3.3 3.3 0 1 0 -6.6 0M290.2 167.1a3.3 3.3 0 1 0 6.6 0a3.3 3.3 0 1 0 -6.6 0M361.9 155.8a3.3 3.3 0 1 0 6.6 0a3.3 3.3 0 1 0 -6.6 0M386.5 151.1a3.3 3.3 0 1 0 6.6 0a3.3 3.3 0 1 0 -6.6 0M450.0 163.9a3.3 3.3 0 1 0 6.6 0a3.3 3.3 0 1 0 -6.6 0M394.0 158.7a3.3 3.3 0 1 0 6.6 0a3.3 3.3 0 1 0 -6.6 0M360.1 165.5a3.3 3.3 0 1 0 6.6 0a3.3 3.3 0 1 0 -6.6 0M455.7 156.8a3.3 3.3 0 1 0 6.6 0a3.3 3.3 0 1 0 -6.6 0M326.2 162.8a3.3 3.3 0 1 0 6.6 0a3.3 3.3 0 1 0 -6.6 0M440.4 160.1a3.3 3.3 0 1 0 6.6 0a3.3 3.3 0 1 0 -6.6 0M406.1 162.4a3.3 3.3 0 1 0 6.6 0a3.3 3.3 0 1 0 -6.6 0M306.7 164.1a3.3 3.3 0 1 0 6.6 0a3.3 3.3 0 1 0 -6.6 0M333.8 161.4a3.3 3.3 0 1 0 6.6 0a3.3 3.3 0 1 0 -6.6 0M299.8 150.5a3.3 3.3 0 1 0 6.6 0a3.3 3.3 0 1 0 -6.6 0M303.0 149.1a3.3 3.3 0 1 0 6.6 0a3.3 3.3 0 1 0 -6.6 0M323.2 159.3a3.3 3.3 0 1 0 6.6 0a3.3 3.3 0 1 0 -6.6 0M283.4 137.1a3.3 3.3 0 1 0 6.6 0a3.3 3.3 0 1 0 -6.6 0M444.5 167.4a3.3 3.3 0 1 0 6.6 0a3.3 3.3 0 1 0 -6.6 0M433.7 155.8a3.3 3.3 0 1 0 6.6 0a3.3 3.3 0 1 0 -6.6 0M298.3 163.9a3.3 3.3 0 1 0 6.6 0a3.3 3.3 0 1 0 -6.6 0M360.8 162.7a3.3 3.3 0 1 0 6.6 0a3.3 3.3 0 1 0 -6.6 0M365.2 147.6a3.3 3.3 0 1 0 6.6 0a3.3 3.3 0 1 0 -6.6 0M291.2 149.7a3.3 3.3 0 1 0 6.6 0a3.3 3.3 0 1 0 -6.6 0M434.4 159.0a3.3 3.3 0 1 0 6.6 0a3.3 3.3 0 1 0 -6.6 0M308.6 162.1a3.3 3.3 0 1 0 6.6 0a3.3 3.3 0 1 0 -6.6 0M340.1 157.5a3.3 3.3 0 1 0 6.6 0a3.3 3.3 0 1 0 -6.6 0M337.2 158.6a3.3 3.3 0 1 0 6.6 0a3.3 3.3 0 1 0 -6.6 0M291.2 154.1a3.3 3.3 0 1 0 6.6 0a3.3 3.3 0 1 0 -6.6 0M365.2 152.4a3.3 3.3 0 1 0 6.6 0a3.3 3.3 0 1 0 -6.6 0M316.7 165.5a3.3 3.3 0 1 0 6.6 0a3.3 3.3 0 1 0 -6.6 0M456.9 156.5a3.3 3.3 0 1 0 6.6 0a3.3 3.3 0 1 0 -6.6 0M438.9 164.1a3.3 3.3 0 1 0 6.6 0a3.3 3.3 0 1 0 -6.6 0M332.9 154.6a3.3 3.3 0 1 0 6.6 0a3.3 3.3 0 1 0 -6.6 0M341.2 147.0a3.3 3.3 0 1 0 6.6 0a3.3 3.3 0 1 0 -6.6 0M427.7 154.8a3.3 3.3 0 1 0 6.6 0a3.3 3.3 0 1 0 -6.6 0M357.8 152.3a3.3 3.3 0 1 0 6.6 0a3.3 3.3 0 1 0 -6.6 0M305.5 160.4a3.3 3.3 0 1 0 6.6 0a3.3 3.3 0 1 0 -6.6 0M406.4 156.9a3.3 3.3 0 1 0 6.6 0a3.3 3.3 0 1 0 -6.6 0M296.6 151.5a3.3 3.3 0 1 0 6.6 0a3.3 3.3 0 1 0 -6.6 0M317.5 163.6a3.3 3.3 0 1 0 6.6 0a3.3 3.3 0 1 0 -6.6 0M383.8 151.9a3.3 3.3 0 1 0 6.6 0a3.3 3.3 0 1 0 -6.6 0M410.2 164.8a3.3 3.3 0 1 0 6.6 0a3.3 3.3 0 1 0 -6.6 0M290.9 160.5a3.3 3.3 0 1 0 6.6 0a3.3 3.3 0 1 0 -6.6 0M433.4 153.5a3.3 3.3 0 1 0 6.6 0a3.3 3.3 0 1 0 -6.6 0M441.4 166.6a3.3 3.3 0 1 0 6.6 0a3.3 3.3 0 1 0 -6.6 0M328.1 161.7a3.3 3.3 0 1 0 6.6 0a3.3 3.3 0 1 0 -6.6 0M345.8 154.0a3.3 3.3 0 1 0 6.6 0a3.3 3.3 0 1 0 -6.6 0M385.9 155.5a3.3 3.3 0 1 0 6.6 0a3.3 3.3 0 1 0 -6.6 0M359.7 148.0a3.3 3.3 0 1 0 6.6 0a3.3 3.3 0 1 0 -6.6 0M407.0 163.8a3.3 3.3 0 1 0 6.6 0a3.3 3.3 0 1 0 -6.6 0M406.4 165.1a3.3 3.3 0 1 0 6.6 0a3.3 3.3 0 1 0 -6.6 0M292.0 167.0a3.3 3.3 0 1 0 6.6 0a3.3 3.3 0 1 0 -6.6 0M371.5 159.7a3.3 3.3 0 1 0 6.6 0a3.3 3.3 0 1 0 -6.6 0M284.8 141.5a3.3 3.3 0 1 0 6.6 0a3.3 3.3 0 1 0 -6.6 0M299.3 162.7a3.3 3.3 0 1 0 6.6 0a3.3 3.3 0 1 0 -6.6 0M286.5 160.8a3.3 3.3 0 1 0 6.6 0a3.3 3.3 0 1 0 -6.6 0M315.5 158.2a3.3 3.3 0 1 0 6.6 0a3.3 3.3 0 1 0 -6.6 0M382.7 158.7a3.3 3.3 0 1 0 6.6 0a3.3 3.3 0 1 0 -6.6 0M299.3 151.9a3.3 3.3 0 1 0 6.6 0a3.3 3.3 0 1 0 -6.6 0M302.9 155.6a3.3 3.3 0 1 0 6.6 0a3.3 3.3 0 1 0 -6.6 0M330.4 155.1a3.3 3.3 0 1 0 6.6 0a3.3 3.3 0 1 0 -6.6 0M305.3 162.1a3.3 3.3 0 1 0 6.6 0a3.3 3.3 0 1 0 -6.6 0M307.1 160.0a3.3 3.3 0 1 0 6.6 0a3.3 3.3 0 1 0 -6.6 0M310.1 160.4a3.3 3.3 0 1 0 6.6 0a3.3 3.3 0 1 0 -6.6 0M355.2 154.0a3.3 3.3 0 1 0 6.6 0a3.3 3.3 0 1 0 -6.6 0M446.9 159.4a3.3 3.3 0 1 0 6.6 0a3.3 3.3 0 1 0 -6.6 0M340.2 168.0a3.3 3.3 0 1 0 6.6 0a3.3 3.3 0 1 0 -6.6 0M422.8 166.4a3.3 3.3 0 1 0 6.6 0a3.3 3.3 0 1 0 -6.6 0M290.6 170.2a3.3 3.3 0 1 0 6.6 0a3.3 3.3 0 1 0 -6.6 0M445.6 161.8a3.3 3.3 0 1 0 6.6 0a3.3 3.3 0 1 0 -6.6 0M392.6 157.8a3.3 3.3 0 1 0 6.6 0a3.3 3.3 0 1 0 -6.6 0M293.4 156.4a3.3 3.3 0 1 0 6.6 0a3.3 3.3 0 1 0 -6.6 0M284.9 168.6a3.3 3.3 0 1 0 6.6 0a3.3 3.3 0 1 0 -6.6 0M417.9 165.5a3.3 3.3 0 1 0 6.6 0a3.3 3.3 0 1 0 -6.6 0M436.8 157.5a3.3 3.3 0 1 0 6.6 0a3.3 3.3 0 1 0 -6.6 0M328.0 153.8a3.3 3.3 0 1 0 6.6 0a3.3 3.3 0 1 0 -6.6 0M443.9 160.3a3.3 3.3 0 1 0 6.6 0a3.3 3.3 0 1 0 -6.6 0M357.5 149.2a3.3 3.3 0 1 0 6.6 0a3.3 3.3 0 1 0 -6.6 0M395.2 160.0a3.3 3.3 0 1 0 6.6 0a3.3 3.3 0 1 0 -6.6 0M449.5 161.0a3.3 3.3 0 1 0 6.6 0a3.3 3.3 0 1 0 -6.6 0M363.3 149.5a3.3 3.3 0 1 0 6.6 0a3.3 3.3 0 1 0 -6.6 0M303.0 151.6a3.3 3.3 0 1 0 6.6 0a3.3 3.3 0 1 0 -6.6 0M352.8 150.0a3.3 3.3 0 1 0 6.6 0a3.3 3.3 0 1 0 -6.6 0M296.7 164.2a3.3 3.3 0 1 0 6.6 0a3.3 3.3 0 1 0 -6.6 0M388.6 158.0a3.3 3.3 0 1 0 6.6 0a3.3 3.3 0 1 0 -6.6 0M316.6 156.5a3.3 3.3 0 1 0 6.6 0a3.3 3.3 0 1 0 -6.6 0M389.1 153.6a3.3 3.3 0 1 0 6.6 0a3.3 3.3 0 1 0 -6.6 0M323.8 156.3a3.3 3.3 0 1 0 6.6 0a3.3 3.3 0 1 0 -6.6 0M348.6 145.8a3.3 3.3 0 1 0 6.6 0a3.3 3.3 0 1 0 -6.6 0M343.3 154.1a3.3 3.3 0 1 0 6.6 0a3.3 3.3 0 1 0 -6.6 0M367.7 167.8a3.3 3.3 0 1 0 6.6 0a3.3 3.3 0 1 0 -6.6 0M333.2 146.7a3.3 3.3 0 1 0 6.6 0a3.3 3.3 0 1 0 -6.6 0M434.5 154.3a3.3 3.3 0 1 0 6.6 0a3.3 3.3 0 1 0 -6.6 0M349.5 160.3a3.3 3.3 0 1 0 6.6 0a3.3 3.3 0 1 0 -6.6 0M300.4 165.4a3.3 3.3 0 1 0 6.6 0a3.3 3.3 0 1 0 -6.6 0M411.2 160.1a3.3 3.3 0 1 0 6.6 0a3.3 3.3 0 1 0 -6.6 0M343.2 165.2a3.3 3.3 0 1 0 6.6 0a3.3 3.3 0 1 0 -6.6 0M425.7 162.6a3.3 3.3 0 1 0 6.6 0a3.3 3.3 0 1 0 -6.6 0M412.0 164.5a3.3 3.3 0 1 0 6.6 0a3.3 3.3 0 1 0 -6.6 0M405.9 162.0a3.3 3.3 0 1 0 6.6 0a3.3 3.3 0 1 0 -6.6 0M282.0 155.9a3.3 3.3 0 1 0 6.6 0a3.3 3.3 0 1 0 -6.6 0M450.6 162.2a3.3 3.3 0 1 0 6.6 0a3.3 3.3 0 1 0 -6.6 0M419.1 162.0a3.3 3.3 0 1 0 6.6 0a3.3 3.3 0 1 0 -6.6 0M360.8 160.6a3.3 3.3 0 1 0 6.6 0a3.3 3.3 0 1 0 -6.6 0M332.8 157.8a3.3 3.3 0 1 0 6.6 0a3.3 3.3 0 1 0 -6.6 0M348.9 161.7a3.3 3.3 0 1 0 6.6 0a3.3 3.3 0 1 0 -6.6 0M430.7 158.8a3.3 3.3 0 1 0 6.6 0a3.3 3.3 0 1 0 -6.6 0M313.6 149.4a3.3 3.3 0 1 0 6.6 0a3.3 3.3 0 1 0 -6.6 0M382.5 152.6a3.3 3.3 0 1 0 6.6 0a3.3 3.3 0 1 0 -6.6 0M443.1 166.3a3.3 3.3 0 1 0 6.6 0a3.3 3.3 0 1 0 -6.6 0M428.7 155.5a3.3 3.3 0 1 0 6.6 0a3.3 3.3 0 1 0 -6.6 0M441.5 156.4a3.3 3.3 0 1 0 6.6 0a3.3 3.3 0 1 0 -6.6 0M380.6 163.1a3.3 3.3 0 1 0 6.6 0a3.3 3.3 0 1 0 -6.6 0M417.3 167.2a3.3 3.3 0 1 0 6.6 0a3.3 3.3 0 1 0 -6.6 0M372.3 162.6a3.3 3.3 0 1 0 6.6 0a3.3 3.3 0 1 0 -6.6 0M349.8 157.5a3.3 3.3 0 1 0 6.6 0a3.3 3.3 0 1 0 -6.6 0M343.0 161.2a3.3 3.3 0 1 0 6.6 0a3.3 3.3 0 1 0 -6.6 0M298.6 153.5a3.3 3.3 0 1 0 6.6 0a3.3 3.3 0 1 0 -6.6 0M380.0 163.6a3.3 3.3 0 1 0 6.6 0a3.3 3.3 0 1 0 -6.6 0M450.9 162.4a3.3 3.3 0 1 0 6.6 0a3.3 3.3 0 1 0 -6.6 0M391.1 155.2a3.3 3.3 0 1 0 6.6 0a3.3 3.3 0 1 0 -6.6 0M424.8 157.6a3.3 3.3 0 1 0 6.6 0a3.3 3.3 0 1 0 -6.6 0M453.4 159.3a3.3 3.3 0 1 0 6.6 0a3.3 3.3 0 1 0 -6.6 0M438.6 169.0a3.3 3.3 0 1 0 6.6 0a3.3 3.3 0 1 0 -6.6 0M437.5 156.5a3.3 3.3 0 1 0 6.6 0a3.3 3.3 0 1 0 -6.6 0M332.2 156.9a3.3 3.3 0 1 0 6.6 0a3.3 3.3 0 1 0 -6.6 0M314.3 158.7a3.3 3.3 0 1 0 6.6 0a3.3 3.3 0 1 0 -6.6 0M387.4 161.8a3.3 3.3 0 1 0 6.6 0a3.3 3.3 0 1 0 -6.6 0M393.2 156.7a3.3 3.3 0 1 0 6.6 0a3.3 3.3 0 1 0 -6.6 0M419.8 163.9a3.3 3.3 0 1 0 6.6 0a3.3 3.3 0 1 0 -6.6 0M281.9 164.5a3.3 3.3 0 1 0 6.6 0a3.3 3.3 0 1 0 -6.6 0M384.4 153.2a3.3 3.3 0 1 0 6.6 0a3.3 3.3 0 1 0 -6.6 0M378.6 160.3a3.3 3.3 0 1 0 6.6 0a3.3 3.3 0 1 0 -6.6 0M374.7 158.0a3.3 3.3 0 1 0 6.6 0a3.3 3.3 0 1 0 -6.6 0M302.6 160.6a3.3 3.3 0 1 0 6.6 0a3.3 3.3 0 1 0 -6.6 0M300.0 148.6a3.3 3.3 0 1 0 6.6 0a3.3 3.3 0 1 0 -6.6 0M373.2 165.2a3.3 3.3 0 1 0 6.6 0a3.3 3.3 0 1 0 -6.6 0M292.1 165.0a3.3 3.3 0 1 0 6.6 0a3.3 3.3 0 1 0 -6.6 0M338.0 150.3a3.3 3.3 0 1 0 6.6 0a3.3 3.3 0 1 0 -6.6 0M328.1 163.0a3.3 3.3 0 1 0 6.6 0a3.3 3.3 0 1 0 -6.6 0M383.7 155.4a3.3 3.3 0 1 0 6.6 0a3.3 3.3 0 1 0 -6.6 0M349.1 163.8a3.3 3.3 0 1 0 6.6 0a3.3 3.3 0 1 0 -6.6 0M383.7 156.2a3.3 3.3 0 1 0 6.6 0a3.3 3.3 0 1 0 -6.6 0M325.1 163.6a3.3 3.3 0 1 0 6.6 0a3.3 3.3 0 1 0 -6.6 0M431.6 165.1a3.3 3.3 0 1 0 6.6 0a3.3 3.3 0 1 0 -6.6 0M424.8 161.2a3.3 3.3 0 1 0 6.6 0a3.3 3.3 0 1 0 -6.6 0M450.2 167.7a3.3 3.3 0 1 0 6.6 0a3.3 3.3 0 1 0 -6.6 0M324.0 159.9a3.3 3.3 0 1 0 6.6 0a3.3 3.3 0 1 0 -6.6 0M320.2 163.3a3.3 3.3 0 1 0 6.6 0a3.3 3.3 0 1 0 -6.6 0M366.5 148.8a3.3 3.3 0 1 0 6.6 0a3.3 3.3 0 1 0 -6.6 0M344.3 167.4a3.3 3.3 0 1 0 6.6 0a3.3 3.3 0 1 0 -6.6 0M332.4 150.2a3.3 3.3 0 1 0 6.6 0a3.3 3.3 0 1 0 -6.6 0M375.1 156.3a3.3 3.3 0 1 0 6.6 0a3.3 3.3 0 1 0 -6.6 0M292.7 166.1a3.3 3.3 0 1 0 6.6 0a3.3 3.3 0 1 0 -6.6 0M343.0 150.9a3.3 3.3 0 1 0 6.6 0a3.3 3.3 0 1 0 -6.6 0M331.1 148.8a3.3 3.3 0 1 0 6.6 0a3.3 3.3 0 1 0 -6.6 0M398.1 155.7a3.3 3.3 0 1 0 6.6 0a3.3 3.3 0 1 0 -6.6 0M405.4 159.2a3.3 3.3 0 1 0 6.6 0a3.3 3.3 0 1 0 -6.6 0M428.2 158.3a3.3 3.3 0 1 0 6.6 0a3.3 3.3 0 1 0 -6.6 0M428.4 154.2a3.3 3.3 0 1 0 6.6 0a3.3 3.3 0 1 0 -6.6 0M408.4 167.7a3.3 3.3 0 1 0 6.6 0a3.3 3.3 0 1 0 -6.6 0M317.8 152.7a3.3 3.3 0 1 0 6.6 0a3.3 3.3 0 1 0 -6.6 0M360.9 160.3a3.3 3.3 0 1 0 6.6 0a3.3 3.3 0 1 0 -6.6 0M327.1 155.4a3.3 3.3 0 1 0 6.6 0a3.3 3.3 0 1 0 -6.6 0M324.5 157.1a3.3 3.3 0 1 0 6.6 0a3.3 3.3 0 1 0 -6.6 0M302.8 156.4a3.3 3.3 0 1 0 6.6 0a3.3 3.3 0 1 0 -6.6 0M328.8 156.9a3.3 3.3 0 1 0 6.6 0a3.3 3.3 0 1 0 -6.6 0M381.1 156.2a3.3 3.3 0 1 0 6.6 0a3.3 3.3 0 1 0 -6.6 0M296.3 164.5a3.3 3.3 0 1 0 6.6 0a3.3 3.3 0 1 0 -6.6 0M337.7 152.5a3.3 3.3 0 1 0 6.6 0a3.3 3.3 0 1 0 -6.6 0M344.8 152.7a3.3 3.3 0 1 0 6.6 0a3.3 3.3 0 1 0 -6.6 0M292.8 148.5a3.3 3.3 0 1 0 6.6 0a3.3 3.3 0 1 0 -6.6 0M303.4 150.9a3.3 3.3 0 1 0 6.6 0a3.3 3.3 0 1 0 -6.6 0M441.2 168.7a3.3 3.3 0 1 0 6.6 0a3.3 3.3 0 1 0 -6.6 0M304.5 146.4a3.3 3.3 0 1 0 6.6 0a3.3 3.3 0 1 0 -6.6 0M400.8 158.8a3.3 3.3 0 1 0 6.6 0a3.3 3.3 0 1 0 -6.6 0M397.2 161.0a3.3 3.3 0 1 0 6.6 0a3.3 3.3 0 1 0 -6.6 0M343.2 146.0a3.3 3.3 0 1 0 6.6 0a3.3 3.3 0 1 0 -6.6 0M441.8 159.7a3.3 3.3 0 1 0 6.6 0a3.3 3.3 0 1 0 -6.6 0M288.2 147.0a3.3 3.3 0 1 0 6.6 0a3.3 3.3 0 1 0 -6.6 0M334.5 148.6a3.3 3.3 0 1 0 6.6 0a3.3 3.3 0 1 0 -6.6 0M335.9 157.3a3.3 3.3 0 1 0 6.6 0a3.3 3.3 0 1 0 -6.6 0M381.5 154.9a3.3 3.3 0 1 0 6.6 0a3.3 3.3 0 1 0 -6.6 0M401.6 155.0a3.3 3.3 0 1 0 6.6 0a3.3 3.3 0 1 0 -6.6 0M428.0 152.2a3.3 3.3 0 1 0 6.6 0a3.3 3.3 0 1 0 -6.6 0M431.5 152.5a3.3 3.3 0 1 0 6.6 0a3.3 3.3 0 1 0 -6.6 0M300.8 157.7a3.3 3.3 0 1 0 6.6 0a3.3 3.3 0 1 0 -6.6 0M413.1 164.4a3.3 3.3 0 1 0 6.6 0a3.3 3.3 0 1 0 -6.6 0M350.5 157.2a3.3 3.3 0 1 0 6.6 0a3.3 3.3 0 1 0 -6.6 0M297.0 162.4a3.3 3.3 0 1 0 6.6 0a3.3 3.3 0 1 0 -6.6 0M402.9 165.9a3.3 3.3 0 1 0 6.6 0a3.3 3.3 0 1 0 -6.6 0M360.9 160.1a3.3 3.3 0 1 0 6.6 0a3.3 3.3 0 1 0 -6.6 0M356.6 164.2a3.3 3.3 0 1 0 6.6 0a3.3 3.3 0 1 0 -6.6 0M303.7 151.7a3.3 3.3 0 1 0 6.6 0a3.3 3.3 0 1 0 -6.6 0M423.0 161.3a3.3 3.3 0 1 0 6.6 0a3.3 3.3 0 1 0 -6.6 0M451.8 161.2a3.3 3.3 0 1 0 6.6 0a3.3 3.3 0 1 0 -6.6 0M291.7 154.2a3.3 3.3 0 1 0 6.6 0a3.3 3.3 0 1 0 -6.6 0M316.6 149.7a3.3 3.3 0 1 0 6.6 0a3.3 3.3 0 1 0 -6.6 0M405.6 157.3a3.3 3.3 0 1 0 6.6 0a3.3 3.3 0 1 0 -6.6 0M371.9 168.0a3.3 3.3 0 1 0 6.6 0a3.3 3.3 0 1 0 -6.6 0M343.1 166.4a3.3 3.3 0 1 0 6.6 0a3.3 3.3 0 1 0 -6.6 0M306.2 152.2a3.3 3.3 0 1 0 6.6 0a3.3 3.3 0 1 0 -6.6 0M424.7 163.1a3.3 3.3 0 1 0 6.6 0a3.3 3.3 0 1 0 -6.6 0M311.0 156.7a3.3 3.3 0 1 0 6.6 0a3.3 3.3 0 1 0 -6.6 0M416.0 157.1a3.3 3.3 0 1 0 6.6 0a3.3 3.3 0 1 0 -6.6 0M344.6 147.6a3.3 3.3 0 1 0 6.6 0a3.3 3.3 0 1 0 -6.6 0M330.6 160.1a3.3 3.3 0 1 0 6.6 0a3.3 3.3 0 1 0 -6.6 0M360.1 152.2a3.3 3.3 0 1 0 6.6 0a3.3 3.3 0 1 0 -6.6 0M363.7 149.9a3.3 3.3 0 1 0 6.6 0a3.3 3.3 0 1 0 -6.6 0M293.8 170.3a3.3 3.3 0 1 0 6.6 0a3.3 3.3 0 1 0 -6.6 0M413.3 164.6a3.3 3.3 0 1 0 6.6 0a3.3 3.3 0 1 0 -6.6 0M453.7 158.2a3.3 3.3 0 1 0 6.6 0a3.3 3.3 0 1 0 -6.6 0M367.2 151.7a3.3 3.3 0 1 0 6.6 0a3.3 3.3 0 1 0 -6.6 0M376.8 165.6a3.3 3.3 0 1 0 6.6 0a3.3 3.3 0 1 0 -6.6 0M394.6 165.0a3.3 3.3 0 1 0 6.6 0a3.3 3.3 0 1 0 -6.6 0M325.4 149.8a3.3 3.3 0 1 0 6.6 0a3.3 3.3 0 1 0 -6.6 0M286.1 157.9a3.3 3.3 0 1 0 6.6 0a3.3 3.3 0 1 0 -6.6 0M313.9 167.2a3.3 3.3 0 1 0 6.6 0a3.3 3.3 0 1 0 -6.6 0M310.8 164.1a3.3 3.3 0 1 0 6.6 0a3.3 3.3 0 1 0 -6.6 0M338.7 164.3a3.3 3.3 0 1 0 6.6 0a3.3 3.3 0 1 0 -6.6 0M337.5 158.4a3.3 3.3 0 1 0 6.6 0a3.3 3.3 0 1 0 -6.6 0M346.2 145.2a3.3 3.3 0 1 0 6.6 0a3.3 3.3 0 1 0 -6.6 0M381.0 162.7a3.3 3.3 0 1 0 6.6 0a3.3 3.3 0 1 0 -6.6 0M440.5 161.7a3.3 3.3 0 1 0 6.6 0a3.3 3.3 0 1 0 -6.6 0M308.9 157.1a3.3 3.3 0 1 0 6.6 0a3.3 3.3 0 1 0 -6.6 0M295.3 148.2a3.3 3.3 0 1 0 6.6 0a3.3 3.3 0 1 0 -6.6 0M451.9 158.1a3.3 3.3 0 1 0 6.6 0a3.3 3.3 0 1 0 -6.6 0M358.6 160.3a3.3 3.3 0 1 0 6.6 0a3.3 3.3 0 1 0 -6.6 0M281.7 168.9a3.3 3.3 0 1 0 6.6 0a3.3 3.3 0 1 0 -6.6 0M356.1 158.6a3.3 3.3 0 1 0 6.6 0a3.3 3.3 0 1 0 -6.6 0M371.8 155.5a3.3 3.3 0 1 0 6.6 0a3.3 3.3 0 1 0 -6.6 0M358.4 167.0a3.3 3.3 0 1 0 6.6 0a3.3 3.3 0 1 0 -6.6 0M310.1 154.6a3.3 3.3 0 1 0 6.6 0a3.3 3.3 0 1 0 -6.6 0M380.4 153.7a3.3 3.3 0 1 0 6.6 0a3.3 3.3 0 1 0 -6.6 0M296.2 154.9a3.3 3.3 0 1 0 6.6 0a3.3 3.3 0 1 0 -6.6 0M452.1 169.2a3.3 3.3 0 1 0 6.6 0a3.3 3.3 0 1 0 -6.6 0M450.5 162.1a3.3 3.3 0 1 0 6.6 0a3.3 3.3 0 1 0 -6.6 0M400.3 159.8a3.3 3.3 0 1 0 6.6 0a3.3 3.3 0 1 0 -6.6 0M448.9 164.6a3.3 3.3 0 1 0 6.6 0a3.3 3.3 0 1 0 -6.6 0M333.9 163.6a3.3 3.3 0 1 0 6.6 0a3.3 3.3 0 1 0 -6.6 0M286.1 160.1a3.3 3.3 0 1 0 6.6 0a3.3 3.3 0 1 0 -6.6 0M359.9 159.2a3.3 3.3 0 1 0 6.6 0a3.3 3.3 0 1 0 -6.6 0M346.7 154.7a3.3 3.3 0 1 0 6.6 0a3.3 3.3 0 1 0 -6.6 0M374.5 156.2a3.3 3.3 0 1 0 6.6 0a3.3 3.3 0 1 0 -6.6 0M301.3 163.5a3.3 3.3 0 1 0 6.6 0a3.3 3.3 0 1 0 -6.6 0M377.7 164.1a3.3 3.3 0 1 0 6.6 0a3.3 3.3 0 1 0 -6.6 0M325.8 156.5a3.3 3.3 0 1 0 6.6 0a3.3 3.3 0 1 0 -6.6 0M325.5 156.9a3.3 3.3 0 1 0 6.6 0a3.3 3.3 0 1 0 -6.6 0M321.1 149.2a3.3 3.3 0 1 0 6.6 0a3.3 3.3 0 1 0 -6.6 0M371.5 150.1a3.3 3.3 0 1 0 6.6 0a3.3 3.3 0 1 0 -6.6 0M353.0 154.0a3.3 3.3 0 1 0 6.6 0a3.3 3.3 0 1 0 -6.6 0M433.2 162.8a3.3 3.3 0 1 0 6.6 0a3.3 3.3 0 1 0 -6.6 0M414.4 167.6a3.3 3.3 0 1 0 6.6 0a3.3 3.3 0 1 0 -6.6 0M408.2 166.1a3.3 3.3 0 1 0 6.6 0a3.3 3.3 0 1 0 -6.6 0M350.2 164.9a3.3 3.3 0 1 0 6.6 0a3.3 3.3 0 1 0 -6.6 0M380.3 156.8a3.3 3.3 0 1 0 6.6 0a3.3 3.3 0 1 0 -6.6 0M291.3 153.0a3.3 3.3 0 1 0 6.6 0a3.3 3.3 0 1 0 -6.6 0M283.9 145.8a3.3 3.3 0 1 0 6.6 0a3.3 3.3 0 1 0 -6.6 0M334.0 161.0a3.3 3.3 0 1 0 6.6 0a3.3 3.3 0 1 0 -6.6 0M390.5 161.8a3.3 3.3 0 1 0 6.6 0a3.3 3.3 0 1 0 -6.6 0M434.5 163.5a3.3 3.3 0 1 0 6.6 0a3.3 3.3 0 1 0 -6.6 0M341.3 166.7a3.3 3.3 0 1 0 6.6 0a3.3 3.3 0 1 0 -6.6 0M302.8 160.1a3.3 3.3 0 1 0 6.6 0a3.3 3.3 0 1 0 -6.6 0M448.1 160.2a3.3 3.3 0 1 0 6.6 0a3.3 3.3 0 1 0 -6.6 0M298.7 162.7a3.3 3.3 0 1 0 6.6 0a3.3 3.3 0 1 0 -6.6 0M301.1 154.7a3.3 3.3 0 1 0 6.6 0a3.3 3.3 0 1 0 -6.6 0M315.2 162.6a3.3 3.3 0 1 0 6.6 0a3.3 3.3 0 1 0 -6.6 0M383.5 151.5a3.3 3.3 0 1 0 6.6 0a3.3 3.3 0 1 0 -6.6 0M300.6 151.7a3.3 3.3 0 1 0 6.6 0a3.3 3.3 0 1 0 -6.6 0M332.2 150.7a3.3 3.3 0 1 0 6.6 0a3.3 3.3 0 1 0 -6.6 0M435.3 163.0a3.3 3.3 0 1 0 6.6 0a3.3 3.3 0 1 0 -6.6 0M423.4 154.6a3.3 3.3 0 1 0 6.6 0a3.3 3.3 0 1 0 -6.6 0M307.8 162.6a3.3 3.3 0 1 0 6.6 0a3.3 3.3 0 1 0 -6.6 0M422.1 157.7a3.3 3.3 0 1 0 6.6 0a3.3 3.3 0 1 0 -6.6 0M425.2 158.2a3.3 3.3 0 1 0 6.6 0a3.3 3.3 0 1 0 -6.6 0M309.1 159.4a3.3 3.3 0 1 0 6.6 0a3.3 3.3 0 1 0 -6.6 0M388.7 153.8a3.3 3.3 0 1 0 6.6 0a3.3 3.3 0 1 0 -6.6 0M319.3 151.3a3.3 3.3 0 1 0 6.6 0a3.3 3.3 0 1 0 -6.6 0M311.1 155.2a3.3 3.3 0 1 0 6.6 0a3.3 3.3 0 1 0 -6.6 0M382.8 155.2a3.3 3.3 0 1 0 6.6 0a3.3 3.3 0 1 0 -6.6 0M282.3 149.1a3.3 3.3 0 1 0 6.6 0a3.3 3.3 0 1 0 -6.6 0M284.8 169.1a3.3 3.3 0 1 0 6.6 0a3.3 3.3 0 1 0 -6.6 0M289.2 160.8a3.3 3.3 0 1 0 6.6 0a3.3 3.3 0 1 0 -6.6 0M329.2 156.3a3.3 3.3 0 1 0 6.6 0a3.3 3.3 0 1 0 -6.6 0M327.3 156.6a3.3 3.3 0 1 0 6.6 0a3.3 3.3 0 1 0 -6.6 0M449.6 160.3a3.3 3.3 0 1 0 6.6 0a3.3 3.3 0 1 0 -6.6 0M416.9 165.3a3.3 3.3 0 1 0 6.6 0a3.3 3.3 0 1 0 -6.6 0M392.9 154.0a3.3 3.3 0 1 0 6.6 0a3.3 3.3 0 1 0 -6.6 0M421.2 166.4a3.3 3.3 0 1 0 6.6 0a3.3 3.3 0 1 0 -6.6 0M334.7 160.2a3.3 3.3 0 1 0 6.6 0a3.3 3.3 0 1 0 -6.6 0M393.0 158.1a3.3 3.3 0 1 0 6.6 0a3.3 3.3 0 1 0 -6.6 0M352.6 151.9a3.3 3.3 0 1 0 6.6 0a3.3 3.3 0 1 0 -6.6 0M338.1 155.1a3.3 3.3 0 1 0 6.6 0a3.3 3.3 0 1 0 -6.6 0M324.0 153.4a3.3 3.3 0 1 0 6.6 0a3.3 3.3 0 1 0 -6.6 0M305.1 162.1a3.3 3.3 0 1 0 6.6 0a3.3 3.3 0 1 0 -6.6 0M361.0 157.4a3.3 3.3 0 1 0 6.6 0a3.3 3.3 0 1 0 -6.6 0M334.4 149.1a3.3 3.3 0 1 0 6.6 0a3.3 3.3 0 1 0 -6.6 0M334.3 161.0a3.3 3.3 0 1 0 6.6 0a3.3 3.3 0 1 0 -6.6 0M378.2 161.1a3.3 3.3 0 1 0 6.6 0a3.3 3.3 0 1 0 -6.6 0M383.9 152.9a3.3 3.3 0 1 0 6.6 0a3.3 3.3 0 1 0 -6.6 0M383.4 156.7a3.3 3.3 0 1 0 6.6 0a3.3 3.3 0 1 0 -6.6 0M356.6 148.4a3.3 3.3 0 1 0 6.6 0a3.3 3.3 0 1 0 -6.6 0M439.4 158.4a3.3 3.3 0 1 0 6.6 0a3.3 3.3 0 1 0 -6.6 0M285.3 148.2a3.3 3.3 0 1 0 6.6 0a3.3 3.3 0 1 0 -6.6 0M405.2 160.8a3.3 3.3 0 1 0 6.6 0a3.3 3.3 0 1 0 -6.6 0M316.5 163.5a3.3 3.3 0 1 0 6.6 0a3.3 3.3 0 1 0 -6.6 0M315.8 164.3a3.3 3.3 0 1 0 6.6 0a3.3 3.3 0 1 0 -6.6 0M295.2 160.5a3.3 3.3 0 1 0 6.6 0a3.3 3.3 0 1 0 -6.6 0M305.3 156.0a3.3 3.3 0 1 0 6.6 0a3.3 3.3 0 1 0 -6.6 0M435.3 161.8a3.3 3.3 0 1 0 6.6 0a3.3 3.3 0 1 0 -6.6 0M338.7 158.4a3.3 3.3 0 1 0 6.6 0a3.3 3.3 0 1 0 -6.6 0M400.7 155.4a3.3 3.3 0 1 0 6.6 0a3.3 3.3 0 1 0 -6.6 0M354.1 157.9a3.3 3.3 0 1 0 6.6 0a3.3 3.3 0 1 0 -6.6 0M340.1 159.8a3.3 3.3 0 1 0 6.6 0a3.3 3.3 0 1 0 -6.6 0M326.4 147.8a3.3 3.3 0 1 0 6.6 0a3.3 3.3 0 1 0 -6.6 0M444.1 168.1a3.3 3.3 0 1 0 6.6 0a3.3 3.3 0 1 0 -6.6 0M291.1 157.7a3.3 3.3 0 1 0 6.6 0a3.3 3.3 0 1 0 -6.6 0M297.6 147.3a3.3 3.3 0 1 0 6.6 0a3.3 3.3 0 1 0 -6.6 0M416.2 165.4a3.3 3.3 0 1 0 6.6 0a3.3 3.3 0 1 0 -6.6 0M355.7 157.1a3.3 3.3 0 1 0 6.6 0a3.3 3.3 0 1 0 -6.6 0M378.9 157.1a3.3 3.3 0 1 0 6.6 0a3.3 3.3 0 1 0 -6.6 0M411.6 164.7a3.3 3.3 0 1 0 6.6 0a3.3 3.3 0 1 0 -6.6 0M415.5 162.7a3.3 3.3 0 1 0 6.6 0a3.3 3.3 0 1 0 -6.6 0M453.2 160.0a3.3 3.3 0 1 0 6.6 0a3.3 3.3 0 1 0 -6.6 0M373.3 145.5a3.3 3.3 0 1 0 6.6 0a3.3 3.3 0 1 0 -6.6 0M364.9 159.0a3.3 3.3 0 1 0 6.6 0a3.3 3.3 0 1 0 -6.6 0M455.4 164.6a3.3 3.3 0 1 0 6.6 0a3.3 3.3 0 1 0 -6.6 0M297.0 146.7a3.3 3.3 0 1 0 6.6 0a3.3 3.3 0 1 0 -6.6 0M467.5 175.6a3.3 3.3 0 1 0 6.6 0a3.3 3.3 0 1 0 -6.6 0M471.0 173.6a3.3 3.3 0 1 0 6.6 0a3.3 3.3 0 1 0 -6.6 0M474.4 173.7a3.3 3.3 0 1 0 6.6 0a3.3 3.3 0 1 0 -6.6 0M476.6 172.1a3.3 3.3 0 1 0 6.6 0a3.3 3.3 0 1 0 -6.6 0M480.2 175.8a3.3 3.3 0 1 0 6.6 0a3.3 3.3 0 1 0 -6.6 0M482.6 171.0a3.3 3.3 0 1 0 6.6 0a3.3 3.3 0 1 0 -6.6 0M486.2 173.2a3.3 3.3 0 1 0 6.6 0a3.3 3.3 0 1 0 -6.6 0M489.4 175.6a3.3 3.3 0 1 0 6.6 0a3.3 3.3 0 1 0 -6.6 0M492.1 176.1a3.3 3.3 0 1 0 6.6 0a3.3 3.3 0 1 0 -6.6 0M489.0 174.2a3.3 3.3 0 1 0 6.6 0a3.3 3.3 0 1 0 -6.6 0M491.8 178.8a3.3 3.3 0 1 0 6.6 0a3.3 3.3 0 1 0 -6.6 0M469.2 177.2a3.3 3.3 0 1 0 6.6 0a3.3 3.3 0 1 0 -6.6 0M469.0 174.6a3.3 3.3 0 1 0 6.6 0a3.3 3.3 0 1 0 -6.6 0M492.2 175.7a3.3 3.3 0 1 0 6.6 0a3.3 3.3 0 1 0 -6.6 0M474.2 173.6a3.3 3.3 0 1 0 6.6 0a3.3 3.3 0 1 0 -6.6 0M473.7 177.0a3.3 3.3 0 1 0 6.6 0a3.3 3.3 0 1 0 -6.6 0M484.8 180.6a3.3 3.3 0 1 0 6.6 0a3.3 3.3 0 1 0 -6.6 0M473.3 171.0a3.3 3.3 0 1 0 6.6 0a3.3 3.3 0 1 0 -6.6 0M490.7 176.4a3.3 3.3 0 1 0 6.6 0a3.3 3.3 0 1 0 -6.6 0M489.6 174.7a3.3 3.3 0 1 0 6.6 0a3.3 3.3 0 1 0 -6.6 0M480.5 172.1a3.3 3.3 0 1 0 6.6 0a3.3 3.3 0 1 0 -6.6 0M483.6 175.1a3.3 3.3 0 1 0 6.6 0a3.3 3.3 0 1 0 -6.6 0M491.3 179.5a3.3 3.3 0 1 0 6.6 0a3.3 3.3 0 1 0 -6.6 0M477.2 174.2a3.3 3.3 0 1 0 6.6 0a3.3 3.3 0 1 0 -6.6 0M490.8 172.1a3.3 3.3 0 1 0 6.6 0a3.3 3.3 0 1 0 -6.6 0M470.4 174.3a3.3 3.3 0 1 0 6.6 0a3.3 3.3 0 1 0 -6.6 0M471.5 169.3a3.3 3.3 0 1 0 6.6 0a3.3 3.3 0 1 0 -6.6 0M485.9 172.8a3.3 3.3 0 1 0 6.6 0a3.3 3.3 0 1 0 -6.6 0M492.2 182.5a3.3 3.3 0 1 0 6.6 0a3.3 3.3 0 1 0 -6.6 0M468.3 178.3a3.3 3.3 0 1 0 6.6 0a3.3 3.3 0 1 0 -6.6 0M486.0 174.7a3.3 3.3 0 1 0 6.6 0a3.3 3.3 0 1 0 -6.6 0M473.7 170.2a3.3 3.3 0 1 0 6.6 0a3.3 3.3 0 1 0 -6.6 0M468.0 177.0a3.3 3.3 0 1 0 6.6 0a3.3 3.3 0 1 0 -6.6 0M470.7 171.4a3.3 3.3 0 1 0 6.6 0a3.3 3.3 0 1 0 -6.6 0M479.0 175.7a3.3 3.3 0 1 0 6.6 0a3.3 3.3 0 1 0 -6.6 0M471.4 172.1a3.3 3.3 0 1 0 6.6 0a3.3 3.3 0 1 0 -6.6 0M477.0 178.6a3.3 3.3 0 1 0 6.6 0a3.3 3.3 0 1 0 -6.6 0M476.9 179.1a3.3 3.3 0 1 0 6.6 0a3.3 3.3 0 1 0 -6.6 0M491.3 172.9a3.3 3.3 0 1 0 6.6 0a3.3 3.3 0 1 0 -6.6 0M474.6 169.2a3.3 3.3 0 1 0 6.6 0a3.3 3.3 0 1 0 -6.6 0M481.2 174.3a3.3 3.3 0 1 0 6.6 0a3.3 3.3 0 1 0 -6.6 0M477.2 175.9a3.3 3.3 0 1 0 6.6 0a3.3 3.3 0 1 0 -6.6 0M396.5 94.5a3.3 3.3 0 1 0 6.6 0a3.3 3.3 0 1 0 -6.6 0M297.2 130.1a3.3 3.3 0 1 0 6.6 0a3.3 3.3 0 1 0 -6.6 0M312.3 140.1a3.3 3.3 0 1 0 6.6 0a3.3 3.3 0 1 0 -6.6 0M325.6 136.9a3.3 3.3 0 1 0 6.6 0a3.3 3.3 0 1 0 -6.6 0M346.1 140.1a3.3 3.3 0 1 0 6.6 0a3.3 3.3 0 1 0 -6.6 0M374.9 137.6a3.3 3.3 0 1 0 6.6 0a3.3 3.3 0 1 0 -6.6 0M374.9 146.4a3.3 3.3 0 1 0 6.6 0a3.3 3.3 0 1 0 -6.6 0M422.8 135.6a3.3 3.3 0 1 0 6.6 0a3.3 3.3 0 1 0 -6.6 0M432.1 141.6a3.3 3.3 0 1 0 6.6 0a3.3 3.3 0 1 0 -6.6 0M291.7 182.7a3.3 3.3 0 1 0 6.6 0a3.3 3.3 0 1 0 -6.6 0M326.3 179.0a3.3 3.3 0 1 0 6.6 0a3.3 3.3 0 1 0 -6.6 0M366.9 176.5a3.3 3.3 0 1 0 6.6 0a3.3 3.3 0 1 0 -6.6 0M374.9 179.5a3.3 3.3 0 1 0 6.6 0a3.3 3.3 0 1 0 -6.6 0M328.1 168.9a3.3 3.3 0 1 0 6.6 0a3.3 3.3 0 1 0 -6.6 0M341.8 172.7a3.3 3.3 0 1 0 6.6 0a3.3 3.3 0 1 0 -6.6 0M427.0 180.2a3.3 3.3 0 1 0 6.6 0a3.3 3.3 0 1 0 -6.6 0M433.3 172.0a3.3 3.3 0 1 0 6.6 0a3.3 3.3 0 1 0 -6.6 0M447.1 171.5a3.3 3.3 0 1 0 6.6 0a3.3 3.3 0 1 0 -6.6 0M472.1 189.7a3.3 3.3 0 1 0 6.6 0a3.3 3.3 0 1 0 -6.6 0M486.7 187.7a3.3 3.3 0 1 0 6.6 0a3.3 3.3 0 1 0 -6.6 0M491.9 176.1a3.3 3.3 0 1 0 6.6 0a3.3 3.3 0 1 0 -6.6 0M494.7 176.9a3.3 3.3 0 1 0 6.6 0a3.3 3.3 0 1 0 -6.6 0M498.2 178.2a3.3 3.3 0 1 0 6.6 0a3.3 3.3 0 1 0 -6.6 0M500.9 174.0a3.3 3.3 0 1 0 6.6 0a3.3 3.3 0 1 0 -6.6 0M503.5 173.5a3.3 3.3 0 1 0 6.6 0a3.3 3.3 0 1 0 -6.6 0M507.2 172.5a3.3 3.3 0 1 0 6.6 0a3.3 3.3 0 1 0 -6.6 0M509.6 172.2a3.3 3.3 0 1 0 6.6 0a3.3 3.3 0 1 0 -6.6 0M512.3 176.0a3.3 3.3 0 1 0 6.6 0a3.3 3.3 0 1 0 -6.6 0M515.2 172.9a3.3 3.3 0 1 0 6.6 0a3.3 3.3 0 1 0 -6.6 0M519.1 170.3a3.3 3.3 0 1 0 6.6 0a3.3 3.3 0 1 0 -6.6 0M521.8 171.2a3.3 3.3 0 1 0 6.6 0a3.3 3.3 0 1 0 -6.6 0M524.4 171.3a3.3 3.3 0 1 0 6.6 0a3.3 3.3 0 1 0 -6.6 0M495.1 182.7a3.3 3.3 0 1 0 6.6 0a3.3 3.3 0 1 0 -6.6 0M492.9 175.5a3.3 3.3 0 1 0 6.6 0a3.3 3.3 0 1 0 -6.6 0M509.9 179.8a3.3 3.3 0 1 0 6.6 0a3.3 3.3 0 1 0 -6.6 0M491.2 179.2a3.3 3.3 0 1 0 6.6 0a3.3 3.3 0 1 0 -6.6 0M511.3 171.0a3.3 3.3 0 1 0 6.6 0a3.3 3.3 0 1 0 -6.6 0M516.5 175.2a3.3 3.3 0 1 0 6.6 0a3.3 3.3 0 1 0 -6.6 0M504.6 175.5a3.3 3.3 0 1 0 6.6 0a3.3 3.3 0 1 0 -6.6 0M514.2 174.0a3.3 3.3 0 1 0 6.6 0a3.3 3.3 0 1 0 -6.6 0M509.7 174.5a3.3 3.3 0 1 0 6.6 0a3.3 3.3 0 1 0 -6.6 0M500.2 177.2a3.3 3.3 0 1 0 6.6 0a3.3 3.3 0 1 0 -6.6 0M508.9 168.9a3.3 3.3 0 1 0 6.6 0a3.3 3.3 0 1 0 -6.6 0M496.0 176.1a3.3 3.3 0 1 0 6.6 0a3.3 3.3 0 1 0 -6.6 0M509.1 166.5a3.3 3.3 0 1 0 6.6 0a3.3 3.3 0 1 0 -6.6 0M519.1 174.2a3.3 3.3 0 1 0 6.6 0a3.3 3.3 0 1 0 -6.6 0M519.3 171.1a3.3 3.3 0 1 0 6.6 0a3.3 3.3 0 1 0 -6.6 0M504.2 173.4a3.3 3.3 0 1 0 6.6 0a3.3 3.3 0 1 0 -6.6 0M496.4 169.5a3.3 3.3 0 1 0 6.6 0a3.3 3.3 0 1 0 -6.6 0M503.3 173.8a3.3 3.3 0 1 0 6.6 0a3.3 3.3 0 1 0 -6.6 0M494.2 182.3a3.3 3.3 0 1 0 6.6 0a3.3 3.3 0 1 0 -6.6 0M514.8 171.8a3.3 3.3 0 1 0 6.6 0a3.3 3.3 0 1 0 -6.6 0M518.3 170.2a3.3 3.3 0 1 0 6.6 0a3.3 3.3 0 1 0 -6.6 0M503.7 170.1a3.3 3.3 0 1 0 6.6 0a3.3 3.3 0 1 0 -6.6 0M503.8 172.3a3.3 3.3 0 1 0 6.6 0a3.3 3.3 0 1 0 -6.6 0M491.8 176.7a3.3 3.3 0 1 0 6.6 0a3.3 3.3 0 1 0 -6.6 0M493.2 178.5a3.3 3.3 0 1 0 6.6 0a3.3 3.3 0 1 0 -6.6 0M500.5 170.8a3.3 3.3 0 1 0 6.6 0a3.3 3.3 0 1 0 -6.6 0M519.6 174.1a3.3 3.3 0 1 0 6.6 0a3.3 3.3 0 1 0 -6.6 0M520.4 170.9a3.3 3.3 0 1 0 6.6 0a3.3 3.3 0 1 0 -6.6 0M518.1 165.6a3.3 3.3 0 1 0 6.6 0a3.3 3.3 0 1 0 -6.6 0M506.2 176.5a3.3 3.3 0 1 0 6.6 0a3.3 3.3 0 1 0 -6.6 0M501.2 176.9a3.3 3.3 0 1 0 6.6 0a3.3 3.3 0 1 0 -6.6 0M518.8 170.4a3.3 3.3 0 1 0 6.6 0a3.3 3.3 0 1 0 -6.6 0M510.9 174.5a3.3 3.3 0 1 0 6.6 0a3.3 3.3 0 1 0 -6.6 0M515.4 174.5a3.3 3.3 0 1 0 6.6 0a3.3 3.3 0 1 0 -6.6 0M502.4 178.3a3.3 3.3 0 1 0 6.6 0a3.3 3.3 0 1 0 -6.6 0M504.1 174.0a3.3 3.3 0 1 0 6.6 0a3.3 3.3 0 1 0 -6.6 0M521.8 167.8a3.3 3.3 0 1 0 6.6 0a3.3 3.3 0 1 0 -6.6 0M506.9 178.4a3.3 3.3 0 1 0 6.6 0a3.3 3.3 0 1 0 -6.6 0M505.3 179.4a3.3 3.3 0 1 0 6.6 0a3.3 3.3 0 1 0 -6.6 0M506.2 173.8a3.3 3.3 0 1 0 6.6 0a3.3 3.3 0 1 0 -6.6 0M519.2 173.7a3.3 3.3 0 1 0 6.6 0a3.3 3.3 0 1 0 -6.6 0M492.6 178.9a3.3 3.3 0 1 0 6.6 0a3.3 3.3 0 1 0 -6.6 0M517.4 167.9a3.3 3.3 0 1 0 6.6 0a3.3 3.3 0 1 0 -6.6 0M493.8 167.6a3.3 3.3 0 1 0 6.6 0a3.3 3.3 0 1 0 -6.6 0M516.8 165.5a3.3 3.3 0 1 0 6.6 0a3.3 3.3 0 1 0 -6.6 0M514.4 166.9a3.3 3.3 0 1 0 6.6 0a3.3 3.3 0 1 0 -6.6 0M514.7 173.3a3.3 3.3 0 1 0 6.6 0a3.3 3.3 0 1 0 -6.6 0M525.1 173.1a3.3 3.3 0 1 0 6.6 0a3.3 3.3 0 1 0 -6.6 0M502.6 166.7a3.3 3.3 0 1 0 6.6 0a3.3 3.3 0 1 0 -6.6 0M524.8 170.1a3.3 3.3 0 1 0 6.6 0a3.3 3.3 0 1 0 -6.6 0M501.8 180.2a3.3 3.3 0 1 0 6.6 0a3.3 3.3 0 1 0 -6.6 0M510.1 171.7a3.3 3.3 0 1 0 6.6 0a3.3 3.3 0 1 0 -6.6 0M492.9 180.4a3.3 3.3 0 1 0 6.6 0a3.3 3.3 0 1 0 -6.6 0M518.5 166.1a3.3 3.3 0 1 0 6.6 0a3.3 3.3 0 1 0 -6.6 0M493.0 174.1a3.3 3.3 0 1 0 6.6 0a3.3 3.3 0 1 0 -6.6 0M507.0 174.6a3.3 3.3 0 1 0 6.6 0a3.3 3.3 0 1 0 -6.6 0M503.6 175.5a3.3 3.3 0 1 0 6.6 0a3.3 3.3 0 1 0 -6.6 0M510.1 170.1a3.3 3.3 0 1 0 6.6 0a3.3 3.3 0 1 0 -6.6 0M509.3 173.8a3.3 3.3 0 1 0 6.6 0a3.3 3.3 0 1 0 -6.6 0M536.2 172.8a3.3 3.3 0 1 0 6.6 0a3.3 3.3 0 1 0 -6.6 0M539.6 171.9a3.3 3.3 0 1 0 6.6 0a3.3 3.3 0 1 0 -6.6 0M542.6 173.4a3.3 3.3 0 1 0 6.6 0a3.3 3.3 0 1 0 -6.6 0M545.4 172.1a3.3 3.3 0 1 0 6.6 0a3.3 3.3 0 1 0 -6.6 0M548.8 172.3a3.3 3.3 0 1 0 6.6 0a3.3 3.3 0 1 0 -6.6 0M551.7 171.1a3.3 3.3 0 1 0 6.6 0a3.3 3.3 0 1 0 -6.6 0M554.3 172.4a3.3 3.3 0 1 0 6.6 0a3.3 3.3 0 1 0 -6.6 0M556.9 172.5a3.3 3.3 0 1 0 6.6 0a3.3 3.3 0 1 0 -6.6 0M559.9 170.1a3.3 3.3 0 1 0 6.6 0a3.3 3.3 0 1 0 -6.6 0M563.0 172.0a3.3 3.3 0 1 0 6.6 0a3.3 3.3 0 1 0 -6.6 0M566.4 172.0a3.3 3.3 0 1 0 6.6 0a3.3 3.3 0 1 0 -6.6 0M569.3 172.1a3.3 3.3 0 1 0 6.6 0a3.3 3.3 0 1 0 -6.6 0M572.5 171.2a3.3 3.3 0 1 0 6.6 0a3.3 3.3 0 1 0 -6.6 0M575.1 174.1a3.3 3.3 0 1 0 6.6 0a3.3 3.3 0 1 0 -6.6 0M578.0 175.2a3.3 3.3 0 1 0 6.6 0a3.3 3.3 0 1 0 -6.6 0M581.1 169.2a3.3 3.3 0 1 0 6.6 0a3.3 3.3 0 1 0 -6.6 0M583.9 174.0a3.3 3.3 0 1 0 6.6 0a3.3 3.3 0 1 0 -6.6 0M587.8 170.8a3.3 3.3 0 1 0 6.6 0a3.3 3.3 0 1 0 -6.6 0M590.5 169.8a3.3 3.3 0 1 0 6.6 0a3.3 3.3 0 1 0 -6.6 0M593.8 172.4a3.3 3.3 0 1 0 6.6 0a3.3 3.3 0 1 0 -6.6 0M596.0 169.8a3.3 3.3 0 1 0 6.6 0a3.3 3.3 0 1 0 -6.6 0M599.5 170.0a3.3 3.3 0 1 0 6.6 0a3.3 3.3 0 1 0 -6.6 0M602.7 171.6a3.3 3.3 0 1 0 6.6 0a3.3 3.3 0 1 0 -6.6 0M605.1 174.0a3.3 3.3 0 1 0 6.6 0a3.3 3.3 0 1 0 -6.6 0M608.2 174.7a3.3 3.3 0 1 0 6.6 0a3.3 3.3 0 1 0 -6.6 0M611.0 176.9a3.3 3.3 0 1 0 6.6 0a3.3 3.3 0 1 0 -6.6 0M614.2 175.4a3.3 3.3 0 1 0 6.6 0a3.3 3.3 0 1 0 -6.6 0M617.0 174.2a3.3 3.3 0 1 0 6.6 0a3.3 3.3 0 1 0 -6.6 0M620.8 171.9a3.3 3.3 0 1 0 6.6 0a3.3 3.3 0 1 0 -6.6 0M622.9 171.5a3.3 3.3 0 1 0 6.6 0a3.3 3.3 0 1 0 -6.6 0M626.5 170.7a3.3 3.3 0 1 0 6.6 0a3.3 3.3 0 1 0 -6.6 0M629.4 170.1a3.3 3.3 0 1 0 6.6 0a3.3 3.3 0 1 0 -6.6 0M632.3 174.1a3.3 3.3 0 1 0 6.6 0a3.3 3.3 0 1 0 -6.6 0M635.3 173.3a3.3 3.3 0 1 0 6.6 0a3.3 3.3 0 1 0 -6.6 0M638.0 173.6a3.3 3.3 0 1 0 6.6 0a3.3 3.3 0 1 0 -6.6 0M641.0 173.6a3.3 3.3 0 1 0 6.6 0a3.3 3.3 0 1 0 -6.6 0M644.8 173.5a3.3 3.3 0 1 0 6.6 0a3.3 3.3 0 1 0 -6.6 0M647.4 169.8a3.3 3.3 0 1 0 6.6 0a3.3 3.3 0 1 0 -6.6 0M650.2 172.3a3.3 3.3 0 1 0 6.6 0a3.3 3.3 0 1 0 -6.6 0M653.3 172.9a3.3 3.3 0 1 0 6.6 0a3.3 3.3 0 1 0 -6.6 0M655.9 169.1a3.3 3.3 0 1 0 6.6 0a3.3 3.3 0 1 0 -6.6 0M659.7 168.8a3.3 3.3 0 1 0 6.6 0a3.3 3.3 0 1 0 -6.6 0M662.4 164.6a3.3 3.3 0 1 0 6.6 0a3.3 3.3 0 1 0 -6.6 0M665.0 165.6a3.3 3.3 0 1 0 6.6 0a3.3 3.3 0 1 0 -6.6 0M668.7 169.5a3.3 3.3 0 1 0 6.6 0a3.3 3.3 0 1 0 -6.6 0M671.1 170.5a3.3 3.3 0 1 0 6.6 0a3.3 3.3 0 1 0 -6.6 0M673.9 168.3a3.3 3.3 0 1 0 6.6 0a3.3 3.3 0 1 0 -6.6 0M677.8 166.2a3.3 3.3 0 1 0 6.6 0a3.3 3.3 0 1 0 -6.6 0M680.8 168.9a3.3 3.3 0 1 0 6.6 0a3.3 3.3 0 1 0 -6.6 0M682.9 166.7a3.3 3.3 0 1 0 6.6 0a3.3 3.3 0 1 0 -6.6 0M686.3 166.0a3.3 3.3 0 1 0 6.6 0a3.3 3.3 0 1 0 -6.6 0M689.6 165.0a3.3 3.3 0 1 0 6.6 0a3.3 3.3 0 1 0 -6.6 0M692.6 165.0a3.3 3.3 0 1 0 6.6 0a3.3 3.3 0 1 0 -6.6 0M546.8 168.6a3.3 3.3 0 1 0 6.6 0a3.3 3.3 0 1 0 -6.6 0M623.0 172.5a3.3 3.3 0 1 0 6.6 0a3.3 3.3 0 1 0 -6.6 0M541.2 168.4a3.3 3.3 0 1 0 6.6 0a3.3 3.3 0 1 0 -6.6 0M638.0 172.6a3.3 3.3 0 1 0 6.6 0a3.3 3.3 0 1 0 -6.6 0M591.6 173.2a3.3 3.3 0 1 0 6.6 0a3.3 3.3 0 1 0 -6.6 0M561.7 175.0a3.3 3.3 0 1 0 6.6 0a3.3 3.3 0 1 0 -6.6 0M588.2 175.1a3.3 3.3 0 1 0 6.6 0a3.3 3.3 0 1 0 -6.6 0M559.4 174.5a3.3 3.3 0 1 0 6.6 0a3.3 3.3 0 1 0 -6.6 0M554.3 172.1a3.3 3.3 0 1 0 6.6 0a3.3 3.3 0 1 0 -6.6 0M554.4 168.5a3.3 3.3 0 1 0 6.6 0a3.3 3.3 0 1 0 -6.6 0M620.5 171.0a3.3 3.3 0 1 0 6.6 0a3.3 3.3 0 1 0 -6.6 0M567.1 167.3a3.3 3.3 0 1 0 6.6 0a3.3 3.3 0 1 0 -6.6 0M555.9 175.0a3.3 3.3 0 1 0 6.6 0a3.3 3.3 0 1 0 -6.6 0M615.1 172.7a3.3 3.3 0 1 0 6.6 0a3.3 3.3 0 1 0 -6.6 0M613.0 176.1a3.3 3.3 0 1 0 6.6 0a3.3 3.3 0 1 0 -6.6 0M572.1 167.7a3.3 3.3 0 1 0 6.6 0a3.3 3.3 0 1 0 -6.6 0M540.7 172.6a3.3 3.3 0 1 0 6.6 0a3.3 3.3 0 1 0 -6.6 0M582.0 168.1a3.3 3.3 0 1 0 6.6 0a3.3 3.3 0 1 0 -6.6 0M572.8 175.0a3.3 3.3 0 1 0 6.6 0a3.3 3.3 0 1 0 -6.6 0M648.2 167.8a3.3 3.3 0 1 0 6.6 0a3.3 3.3 0 1 0 -6.6 0M630.5 169.3a3.3 3.3 0 1 0 6.6 0a3.3 3.3 0 1 0 -6.6 0M645.2 172.4a3.3 3.3 0 1 0 6.6 0a3.3 3.3 0 1 0 -6.6 0M608.8 173.8a3.3 3.3 0 1 0 6.6 0a3.3 3.3 0 1 0 -6.6 0M600.9 167.9a3.3 3.3 0 1 0 6.6 0a3.3 3.3 0 1 0 -6.6 0M574.5 170.7a3.3 3.3 0 1 0 6.6 0a3.3 3.3 0 1 0 -6.6 0M590.2 167.5a3.3 3.3 0 1 0 6.6 0a3.3 3.3 0 1 0 -6.6 0M570.6 176.5a3.3 3.3 0 1 0 6.6 0a3.3 3.3 0 1 0 -6.6 0M693.4 166.1a3.3 3.3 0 1 0 6.6 0a3.3 3.3 0 1 0 -6.6 0M659.0 172.2a3.3 3.3 0 1 0 6.6 0a3.3 3.3 0 1 0 -6.6 0M567.3 176.1a3.3 3.3 0 1 0 6.6 0a3.3 3.3 0 1 0 -6.6 0M550.4 169.4a3.3 3.3 0 1 0 6.6 0a3.3 3.3 0 1 0 -6.6 0M688.4 165.8a3.3 3.3 0 1 0 6.6 0a3.3 3.3 0 1 0 -6.6 0M666.7 174.3a3.3 3.3 0 1 0 6.6 0a3.3 3.3 0 1 0 -6.6 0M667.4 167.3a3.3 3.3 0 1 0 6.6 0a3.3 3.3 0 1 0 -6.6 0M666.2 169.0a3.3 3.3 0 1 0 6.6 0a3.3 3.3 0 1 0 -6.6 0M687.7 171.7a3.3 3.3 0 1 0 6.6 0a3.3 3.3 0 1 0 -6.6 0M554.1 172.1a3.3 3.3 0 1 0 6.6 0a3.3 3.3 0 1 0 -6.6 0M668.3 162.5a3.3 3.3 0 1 0 6.6 0a3.3 3.3 0 1 0 -6.6 0M608.2 174.2a3.3 3.3 0 1 0 6.6 0a3.3 3.3 0 1 0 -6.6 0M679.3 168.9a3.3 3.3 0 1 0 6.6 0a3.3 3.3 0 1 0 -6.6 0M659.7 174.7a3.3 3.3 0 1 0 6.6 0a3.3 3.3 0 1 0 -6.6 0M666.3 161.1a3.3 3.3 0 1 0 6.6 0a3.3 3.3 0 1 0 -6.6 0M638.9 170.9a3.3 3.3 0 1 0 6.6 0a3.3 3.3 0 1 0 -6.6 0M668.0 161.3a3.3 3.3 0 1 0 6.6 0a3.3 3.3 0 1 0 -6.6 0M538.4 175.1a3.3 3.3 0 1 0 6.6 0a3.3 3.3 0 1 0 -6.6 0M602.0 170.9a3.3 3.3 0 1 0 6.6 0a3.3 3.3 0 1 0 -6.6 0M569.6 175.0a3.3 3.3 0 1 0 6.6 0a3.3 3.3 0 1 0 -6.6 0M633.7 167.0a3.3 3.3 0 1 0 6.6 0a3.3 3.3 0 1 0 -6.6 0M578.7 173.4a3.3 3.3 0 1 0 6.6 0a3.3 3.3 0 1 0 -6.6 0M663.4 170.0a3.3 3.3 0 1 0 6.6 0a3.3 3.3 0 1 0 -6.6 0M542.4 168.1a3.3 3.3 0 1 0 6.6 0a3.3 3.3 0 1 0 -6.6 0M687.2 164.1a3.3 3.3 0 1 0 6.6 0a3.3 3.3 0 1 0 -6.6 0M676.4 171.5a3.3 3.3 0 1 0 6.6 0a3.3 3.3 0 1 0 -6.6 0M614.8 178.0a3.3 3.3 0 1 0 6.6 0a3.3 3.3 0 1 0 -6.6 0M565.8 167.2a3.3 3.3 0 1 0 6.6 0a3.3 3.3 0 1 0 -6.6 0M535.9 175.9a3.3 3.3 0 1 0 6.6 0a3.3 3.3 0 1 0 -6.6 0M607.7 169.9a3.3 3.3 0 1 0 6.6 0a3.3 3.3 0 1 0 -6.6 0M551.8 175.8a3.3 3.3 0 1 0 6.6 0a3.3 3.3 0 1 0 -6.6 0M617.0 177.4a3.3 3.3 0 1 0 6.6 0a3.3 3.3 0 1 0 -6.6 0M677.1 163.6a3.3 3.3 0 1 0 6.6 0a3.3 3.3 0 1 0 -6.6 0M606.0 174.0a3.3 3.3 0 1 0 6.6 0a3.3 3.3 0 1 0 -6.6 0M635.7 172.5a3.3 3.3 0 1 0 6.6 0a3.3 3.3 0 1 0 -6.6 0M642.7 169.8a3.3 3.3 0 1 0 6.6 0a3.3 3.3 0 1 0 -6.6 0M690.1 169.6a3.3 3.3 0 1 0 6.6 0a3.3 3.3 0 1 0 -6.6 0M643.8 170.4a3.3 3.3 0 1 0 6.6 0a3.3 3.3 0 1 0 -6.6 0M654.5 174.6a3.3 3.3 0 1 0 6.6 0a3.3 3.3 0 1 0 -6.6 0M541.4 168.8a3.3 3.3 0 1 0 6.6 0a3.3 3.3 0 1 0 -6.6 0M686.4 165.1a3.3 3.3 0 1 0 6.6 0a3.3 3.3 0 1 0 -6.6 0M627.0 171.0a3.3 3.3 0 1 0 6.6 0a3.3 3.3 0 1 0 -6.6 0M653.9 170.4a3.3 3.3 0 1 0 6.6 0a3.3 3.3 0 1 0 -6.6 0M581.9 171.0a3.3 3.3 0 1 0 6.6 0a3.3 3.3 0 1 0 -6.6 0M690.4 169.9a3.3 3.3 0 1 0 6.6 0a3.3 3.3 0 1 0 -6.6 0M596.0 175.3a3.3 3.3 0 1 0 6.6 0a3.3 3.3 0 1 0 -6.6 0M579.7 173.5a3.3 3.3 0 1 0 6.6 0a3.3 3.3 0 1 0 -6.6 0M666.3 161.5a3.3 3.3 0 1 0 6.6 0a3.3 3.3 0 1 0 -6.6 0M617.4 171.9a3.3 3.3 0 1 0 6.6 0a3.3 3.3 0 1 0 -6.6 0M562.8 163.1a3.3 3.3 0 1 0 6.6 0a3.3 3.3 0 1 0 -6.6 0M582.9 179.6a3.3 3.3 0 1 0 6.6 0a3.3 3.3 0 1 0 -6.6 0M687.9 164.8a3.3 3.3 0 1 0 6.6 0a3.3 3.3 0 1 0 -6.6 0M685.0 165.6a3.3 3.3 0 1 0 6.6 0a3.3 3.3 0 1 0 -6.6 0M605.1 170.4a3.3 3.3 0 1 0 6.6 0a3.3 3.3 0 1 0 -6.6 0M598.1 177.4a3.3 3.3 0 1 0 6.6 0a3.3 3.3 0 1 0 -6.6 0M578.0 178.1a3.3 3.3 0 1 0 6.6 0a3.3 3.3 0 1 0 -6.6 0M607.0 178.3a3.3 3.3 0 1 0 6.6 0a3.3 3.3 0 1 0 -6.6 0M585.6 175.6a3.3 3.3 0 1 0 6.6 0a3.3 3.3 0 1 0 -6.6 0M610.1 176.8a3.3 3.3 0 1 0 6.6 0a3.3 3.3 0 1 0 -6.6 0M654.8 168.2a3.3 3.3 0 1 0 6.6 0a3.3 3.3 0 1 0 -6.6 0M680.8 164.4a3.3 3.3 0 1 0 6.6 0a3.3 3.3 0 1 0 -6.6 0M635.4 175.7a3.3 3.3 0 1 0 6.6 0a3.3 3.3 0 1 0 -6.6 0M542.4 171.5a3.3 3.3 0 1 0 6.6 0a3.3 3.3 0 1 0 -6.6 0M684.4 164.8a3.3 3.3 0 1 0 6.6 0a3.3 3.3 0 1 0 -6.6 0M546.9 174.7a3.3 3.3 0 1 0 6.6 0a3.3 3.3 0 1 0 -6.6 0M643.0 174.7a3.3 3.3 0 1 0 6.6 0a3.3 3.3 0 1 0 -6.6 0M553.4 173.5a3.3 3.3 0 1 0 6.6 0a3.3 3.3 0 1 0 -6.6 0M688.7 170.4a3.3 3.3 0 1 0 6.6 0a3.3 3.3 0 1 0 -6.6 0M598.2 173.0a3.3 3.3 0 1 0 6.6 0a3.3 3.3 0 1 0 -6.6 0M597.9 168.4a3.3 3.3 0 1 0 6.6 0a3.3 3.3 0 1 0 -6.6 0M673.6 167.7a3.3 3.3 0 1 0 6.6 0a3.3 3.3 0 1 0 -6.6 0M641.6 166.5a3.3 3.3 0 1 0 6.6 0a3.3 3.3 0 1 0 -6.6 0M546.3 172.4a3.3 3.3 0 1 0 6.6 0a3.3 3.3 0 1 0 -6.6 0M670.5 166.8a3.3 3.3 0 1 0 6.6 0a3.3 3.3 0 1 0 -6.6 0M626.5 175.9a3.3 3.3 0 1 0 6.6 0a3.3 3.3 0 1 0 -6.6 0M660.4 166.0a3.3 3.3 0 1 0 6.6 0a3.3 3.3 0 1 0 -6.6 0M655.0 174.8a3.3 3.3 0 1 0 6.6 0a3.3 3.3 0 1 0 -6.6 0M677.9 173.8a3.3 3.3 0 1 0 6.6 0a3.3 3.3 0 1 0 -6.6 0M674.7 170.9a3.3 3.3 0 1 0 6.6 0a3.3 3.3 0 1 0 -6.6 0M647.0 165.0a3.3 3.3 0 1 0 6.6 0a3.3 3.3 0 1 0 -6.6 0M631.2 167.5a3.3 3.3 0 1 0 6.6 0a3.3 3.3 0 1 0 -6.6 0M571.2 173.7a3.3 3.3 0 1 0 6.6 0a3.3 3.3 0 1 0 -6.6 0M689.9 166.7a3.3 3.3 0 1 0 6.6 0a3.3 3.3 0 1 0 -6.6 0M547.3 167.8a3.3 3.3 0 1 0 6.6 0a3.3 3.3 0 1 0 -6.6 0M635.3 169.3a3.3 3.3 0 1 0 6.6 0a3.3 3.3 0 1 0 -6.6 0M545.2 172.8a3.3 3.3 0 1 0 6.6 0a3.3 3.3 0 1 0 -6.6 0M663.4 172.0a3.3 3.3 0 1 0 6.6 0a3.3 3.3 0 1 0 -6.6 0M553.3 173.3a3.3 3.3 0 1 0 6.6 0a3.3 3.3 0 1 0 -6.6 0M589.6 172.2a3.3 3.3 0 1 0 6.6 0a3.3 3.3 0 1 0 -6.6 0M570.3 172.0a3.3 3.3 0 1 0 6.6 0a3.3 3.3 0 1 0 -6.6 0M663.6 160.7a3.3 3.3 0 1 0 6.6 0a3.3 3.3 0 1 0 -6.6 0M658.8 168.5a3.3 3.3 0 1 0 6.6 0a3.3 3.3 0 1 0 -6.6 0M602.8 174.2a3.3 3.3 0 1 0 6.6 0a3.3 3.3 0 1 0 -6.6 0M650.3 169.7a3.3 3.3 0 1 0 6.6 0a3.3 3.3 0 1 0 -6.6 0M616.8 169.8a3.3 3.3 0 1 0 6.6 0a3.3 3.3 0 1 0 -6.6 0M672.9 177.0a3.3 3.3 0 1 0 6.6 0a3.3 3.3 0 1 0 -6.6 0M587.9 166.7a3.3 3.3 0 1 0 6.6 0a3.3 3.3 0 1 0 -6.6 0M557.0 172.7a3.3 3.3 0 1 0 6.6 0a3.3 3.3 0 1 0 -6.6 0M647.8 169.0a3.3 3.3 0 1 0 6.6 0a3.3 3.3 0 1 0 -6.6 0M565.9 167.8a3.3 3.3 0 1 0 6.6 0a3.3 3.3 0 1 0 -6.6 0M566.5 169.9a3.3 3.3 0 1 0 6.6 0a3.3 3.3 0 1 0 -6.6 0M567.1 166.0a3.3 3.3 0 1 0 6.6 0a3.3 3.3 0 1 0 -6.6 0M624.4 177.4a3.3 3.3 0 1 0 6.6 0a3.3 3.3 0 1 0 -6.6 0M685.7 171.1a3.3 3.3 0 1 0 6.6 0a3.3 3.3 0 1 0 -6.6 0M545.8 167.8a3.3 3.3 0 1 0 6.6 0a3.3 3.3 0 1 0 -6.6 0M672.3 165.9a3.3 3.3 0 1 0 6.6 0a3.3 3.3 0 1 0 -6.6 0M592.0 172.8a3.3 3.3 0 1 0 6.6 0a3.3 3.3 0 1 0 -6.6 0M692.5 161.6a3.3 3.3 0 1 0 6.6 0a3.3 3.3 0 1 0 -6.6 0M563.5 174.6a3.3 3.3 0 1 0 6.6 0a3.3 3.3 0 1 0 -6.6 0M663.0 161.7a3.3 3.3 0 1 0 6.6 0a3.3 3.3 0 1 0 -6.6 0M552.7 175.0a3.3 3.3 0 1 0 6.6 0a3.3 3.3 0 1 0 -6.6 0M610.3 182.0a3.3 3.3 0 1 0 6.6 0a3.3 3.3 0 1 0 -6.6 0M611.1 166.2a3.3 3.3 0 1 0 6.6 0a3.3 3.3 0 1 0 -6.6 0M624.9 169.0a3.3 3.3 0 1 0 6.6 0a3.3 3.3 0 1 0 -6.6 0M575.7 177.2a3.3 3.3 0 1 0 6.6 0a3.3 3.3 0 1 0 -6.6 0M648.1 174.7a3.3 3.3 0 1 0 6.6 0a3.3 3.3 0 1 0 -6.6 0M651.6 174.7a3.3 3.3 0 1 0 6.6 0a3.3 3.3 0 1 0 -6.6 0M668.8 159.7a3.3 3.3 0 1 0 6.6 0a3.3 3.3 0 1 0 -6.6 0M569.7 170.0a3.3 3.3 0 1 0 6.6 0a3.3 3.3 0 1 0 -6.6 0M537.3 174.3a3.3 3.3 0 1 0 6.6 0a3.3 3.3 0 1 0 -6.6 0M542.7 169.2a3.3 3.3 0 1 0 6.6 0a3.3 3.3 0 1 0 -6.6 0M586.9 175.5a3.3 3.3 0 1 0 6.6 0a3.3 3.3 0 1 0 -6.6 0M636.9 168.6a3.3 3.3 0 1 0 6.6 0a3.3 3.3 0 1 0 -6.6 0M679.0 161.2a3.3 3.3 0 1 0 6.6 0a3.3 3.3 0 1 0 -6.6 0M629.3 168.7a3.3 3.3 0 1 0 6.6 0a3.3 3.3 0 1 0 -6.6 0M608.0 176.2a3.3 3.3 0 1 0 6.6 0a3.3 3.3 0 1 0 -6.6 0M647.6 165.7a3.3 3.3 0 1 0 6.6 0a3.3 3.3 0 1 0 -6.6 0M650.3 170.5a3.3 3.3 0 1 0 6.6 0a3.3 3.3 0 1 0 -6.6 0M599.1 172.0a3.3 3.3 0 1 0 6.6 0a3.3 3.3 0 1 0 -6.6 0M638.5 168.1a3.3 3.3 0 1 0 6.6 0a3.3 3.3 0 1 0 -6.6 0M679.5 160.5a3.3 3.3 0 1 0 6.6 0a3.3 3.3 0 1 0 -6.6 0M573.5 169.1a3.3 3.3 0 1 0 6.6 0a3.3 3.3 0 1 0 -6.6 0M660.4 171.8a3.3 3.3 0 1 0 6.6 0a3.3 3.3 0 1 0 -6.6 0M541.9 176.7a3.3 3.3 0 1 0 6.6 0a3.3 3.3 0 1 0 -6.6 0M662.7 161.1a3.3 3.3 0 1 0 6.6 0a3.3 3.3 0 1 0 -6.6 0M573.8 171.3a3.3 3.3 0 1 0 6.6 0a3.3 3.3 0 1 0 -6.6 0M682.8 169.5a3.3 3.3 0 1 0 6.6 0a3.3 3.3 0 1 0 -6.6 0M560.1 172.8a3.3 3.3 0 1 0 6.6 0a3.3 3.3 0 1 0 -6.6 0M552.2 171.8a3.3 3.3 0 1 0 6.6 0a3.3 3.3 0 1 0 -6.6 0M663.4 167.6a3.3 3.3 0 1 0 6.6 0a3.3 3.3 0 1 0 -6.6 0M552.6 177.8a3.3 3.3 0 1 0 6.6 0a3.3 3.3 0 1 0 -6.6 0M536.2 174.9a3.3 3.3 0 1 0 6.6 0a3.3 3.3 0 1 0 -6.6 0M615.2 176.6a3.3 3.3 0 1 0 6.6 0a3.3 3.3 0 1 0 -6.6 0M548.1 172.9a3.3 3.3 0 1 0 6.6 0a3.3 3.3 0 1 0 -6.6 0M581.8 164.5a3.3 3.3 0 1 0 6.6 0a3.3 3.3 0 1 0 -6.6 0M653.6 174.5a3.3 3.3 0 1 0 6.6 0a3.3 3.3 0 1 0 -6.6 0M664.1 161.9a3.3 3.3 0 1 0 6.6 0a3.3 3.3 0 1 0 -6.6 0M638.6 170.8a3.3 3.3 0 1 0 6.6 0a3.3 3.3 0 1 0 -6.6 0M553.3 171.4a3.3 3.3 0 1 0 6.6 0a3.3 3.3 0 1 0 -6.6 0M550.7 177.2a3.3 3.3 0 1 0 6.6 0a3.3 3.3 0 1 0 -6.6 0M551.9 170.8a3.3 3.3 0 1 0 6.6 0a3.3 3.3 0 1 0 -6.6 0M656.3 170.6a3.3 3.3 0 1 0 6.6 0a3.3 3.3 0 1 0 -6.6 0M690.5 159.3a3.3 3.3 0 1 0 6.6 0a3.3 3.3 0 1 0 -6.6 0M553.8 173.0a3.3 3.3 0 1 0 6.6 0a3.3 3.3 0 1 0 -6.6 0M607.8 175.5a3.3 3.3 0 1 0 6.6 0a3.3 3.3 0 1 0 -6.6 0M638.3 176.6a3.3 3.3 0 1 0 6.6 0a3.3 3.3 0 1 0 -6.6 0M680.1 164.8a3.3 3.3 0 1 0 6.6 0a3.3 3.3 0 1 0 -6.6 0M643.4 173.8a3.3 3.3 0 1 0 6.6 0a3.3 3.3 0 1 0 -6.6 0M564.3 171.1a3.3 3.3 0 1 0 6.6 0a3.3 3.3 0 1 0 -6.6 0M575.8 170.4a3.3 3.3 0 1 0 6.6 0a3.3 3.3 0 1 0 -6.6 0M587.1 170.6a3.3 3.3 0 1 0 6.6 0a3.3 3.3 0 1 0 -6.6 0M690.8 171.5a3.3 3.3 0 1 0 6.6 0a3.3 3.3 0 1 0 -6.6 0M668.1 167.3a3.3 3.3 0 1 0 6.6 0a3.3 3.3 0 1 0 -6.6 0M575.3 166.4a3.3 3.3 0 1 0 6.6 0a3.3 3.3 0 1 0 -6.6 0M572.3 174.0a3.3 3.3 0 1 0 6.6 0a3.3 3.3 0 1 0 -6.6 0M657.6 175.8a3.3 3.3 0 1 0 6.6 0a3.3 3.3 0 1 0 -6.6 0M619.9 175.8a3.3 3.3 0 1 0 6.6 0a3.3 3.3 0 1 0 -6.6 0M585.4 170.4a3.3 3.3 0 1 0 6.6 0a3.3 3.3 0 1 0 -6.6 0M688.4 167.1a3.3 3.3 0 1 0 6.6 0a3.3 3.3 0 1 0 -6.6 0M638.5 177.1a3.3 3.3 0 1 0 6.6 0a3.3 3.3 0 1 0 -6.6 0M600.2 177.9a3.3 3.3 0 1 0 6.6 0a3.3 3.3 0 1 0 -6.6 0M550.0 170.8a3.3 3.3 0 1 0 6.6 0a3.3 3.3 0 1 0 -6.6 0M679.1 163.8a3.3 3.3 0 1 0 6.6 0a3.3 3.3 0 1 0 -6.6 0M648.9 167.4a3.3 3.3 0 1 0 6.6 0a3.3 3.3 0 1 0 -6.6 0M644.4 175.5a3.3 3.3 0 1 0 6.6 0a3.3 3.3 0 1 0 -6.6 0M575.1 166.5a3.3 3.3 0 1 0 6.6 0a3.3 3.3 0 1 0 -6.6 0M645.0 168.1a3.3 3.3 0 1 0 6.6 0a3.3 3.3 0 1 0 -6.6 0M688.2 168.7a3.3 3.3 0 1 0 6.6 0a3.3 3.3 0 1 0 -6.6 0M630.3 166.5a3.3 3.3 0 1 0 6.6 0a3.3 3.3 0 1 0 -6.6 0M546.4 171.1a3.3 3.3 0 1 0 6.6 0a3.3 3.3 0 1 0 -6.6 0M558.3 170.2a3.3 3.3 0 1 0 6.6 0a3.3 3.3 0 1 0 -6.6 0M689.0 166.9a3.3 3.3 0 1 0 6.6 0a3.3 3.3 0 1 0 -6.6 0M564.0 167.2a3.3 3.3 0 1 0 6.6 0a3.3 3.3 0 1 0 -6.6 0M600.5 173.9a3.3 3.3 0 1 0 6.6 0a3.3 3.3 0 1 0 -6.6 0M550.8 173.8a3.3 3.3 0 1 0 6.6 0a3.3 3.3 0 1 0 -6.6 0M540.7 172.9a3.3 3.3 0 1 0 6.6 0a3.3 3.3 0 1 0 -6.6 0M662.7 160.0a3.3 3.3 0 1 0 6.6 0a3.3 3.3 0 1 0 -6.6 0M565.9 168.7a3.3 3.3 0 1 0 6.6 0a3.3 3.3 0 1 0 -6.6 0M628.6 166.3a3.3 3.3 0 1 0 6.6 0a3.3 3.3 0 1 0 -6.6 0M551.2 172.9a3.3 3.3 0 1 0 6.6 0a3.3 3.3 0 1 0 -6.6 0M625.8 167.4a3.3 3.3 0 1 0 6.6 0a3.3 3.3 0 1 0 -6.6 0M538.2 173.3a3.3 3.3 0 1 0 6.6 0a3.3 3.3 0 1 0 -6.6 0M593.3 170.8a3.3 3.3 0 1 0 6.6 0a3.3 3.3 0 1 0 -6.6 0M575.6 172.5a3.3 3.3 0 1 0 6.6 0a3.3 3.3 0 1 0 -6.6 0M553.5 174.9a3.3 3.3 0 1 0 6.6 0a3.3 3.3 0 1 0 -6.6 0M580.9 176.7a3.3 3.3 0 1 0 6.6 0a3.3 3.3 0 1 0 -6.6 0M571.2 169.1a3.3 3.3 0 1 0 6.6 0a3.3 3.3 0 1 0 -6.6 0M596.5 173.6a3.3 3.3 0 1 0 6.6 0a3.3 3.3 0 1 0 -6.6 0M610.4 171.3a3.3 3.3 0 1 0 6.6 0a3.3 3.3 0 1 0 -6.6 0M668.0 160.0a3.3 3.3 0 1 0 6.6 0a3.3 3.3 0 1 0 -6.6 0M605.1 173.0a3.3 3.3 0 1 0 6.6 0a3.3 3.3 0 1 0 -6.6 0M648.3 166.3a3.3 3.3 0 1 0 6.6 0a3.3 3.3 0 1 0 -6.6 0M611.6 170.4a3.3 3.3 0 1 0 6.6 0a3.3 3.3 0 1 0 -6.6 0M504.2 153.9a3.3 3.3 0 1 0 6.6 0a3.3 3.3 0 1 0 -6.6 0M503.0 158.9a3.3 3.3 0 1 0 6.6 0a3.3 3.3 0 1 0 -6.6 0M501.7 193.3a3.3 3.3 0 1 0 6.6 0a3.3 3.3 0 1 0 -6.6 0M515.5 187.7a3.3 3.3 0 1 0 6.6 0a3.3 3.3 0 1 0 -6.6 0M515.5 195.3a3.3 3.3 0 1 0 6.6 0a3.3 3.3 0 1 0 -6.6 0M523.0 163.2a3.3 3.3 0 1 0 6.6 0a3.3 3.3 0 1 0 -6.6 0M561.9 136.9a3.3 3.3 0 1 0 6.6 0a3.3 3.3 0 1 0 -6.6 0M634.5 150.7a3.3 3.3 0 1 0 6.6 0a3.3 3.3 0 1 0 -6.6 0M677.9 151.4a3.3 3.3 0 1 0 6.6 0a3.3 3.3 0 1 0 -6.6 0M692.2 153.9a3.3 3.3 0 1 0 6.6 0a3.3 3.3 0 1 0 -6.6 0M557.4 182.7a3.3 3.3 0 1 0 6.6 0a3.3 3.3 0 1 0 -6.6 0M569.9 183.2a3.3 3.3 0 1 0 6.6 0a3.3 3.3 0 1 0 -6.6 0M573.1 181.5a3.3 3.3 0 1 0 6.6 0a3.3 3.3 0 1 0 -6.6 0M612.7 191.5a3.3 3.3 0 1 0 6.6 0a3.3 3.3 0 1 0 -6.6 0M631.0 186.5a3.3 3.3 0 1 0 6.6 0a3.3 3.3 0 1 0 -6.6 0M645.8 190.2a3.3 3.3 0 1 0 6.6 0a3.3 3.3 0 1 0 -6.6 0M650.1 193.3a3.3 3.3 0 1 0 6.6 0a3.3 3.3 0 1 0 -6.6 0M657.1 187.2a3.3 3.3 0 1 0 6.6 0a3.3 3.3 0 1 0 -6.6 0M662.1 187.2a3.3 3.3 0 1 0 6.6 0a3.3 3.3 0 1 0 -6.6 0M636.6 170.8a3.3 3.3 0 1 0 6.6 0a3.3 3.3 0 1 0 -6.6 0M639.3 171.8a3.3 3.3 0 1 0 6.6 0a3.3 3.3 0 1 0 -6.6 0M642.7 175.1a3.3 3.3 0 1 0 6.6 0a3.3 3.3 0 1 0 -6.6 0M645.8 167.7a3.3 3.3 0 1 0 6.6 0a3.3 3.3 0 1 0 -6.6 0M648.4 171.5a3.3 3.3 0 1 0 6.6 0a3.3 3.3 0 1 0 -6.6 0M651.8 173.4a3.3 3.3 0 1 0 6.6 0a3.3 3.3 0 1 0 -6.6 0M655.2 172.2a3.3 3.3 0 1 0 6.6 0a3.3 3.3 0 1 0 -6.6 0M657.3 171.2a3.3 3.3 0 1 0 6.6 0a3.3 3.3 0 1 0 -6.6 0M660.7 167.4a3.3 3.3 0 1 0 6.6 0a3.3 3.3 0 1 0 -6.6 0M663.4 169.3a3.3 3.3 0 1 0 6.6 0a3.3 3.3 0 1 0 -6.6 0M666.4 165.6a3.3 3.3 0 1 0 6.6 0a3.3 3.3 0 1 0 -6.6 0M669.5 170.6a3.3 3.3 0 1 0 6.6 0a3.3 3.3 0 1 0 -6.6 0M672.7 168.9a3.3 3.3 0 1 0 6.6 0a3.3 3.3 0 1 0 -6.6 0M675.3 167.3a3.3 3.3 0 1 0 6.6 0a3.3 3.3 0 1 0 -6.6 0M678.5 165.6a3.3 3.3 0 1 0 6.6 0a3.3 3.3 0 1 0 -6.6 0M681.9 167.0a3.3 3.3 0 1 0 6.6 0a3.3 3.3 0 1 0 -6.6 0M684.3 170.0a3.3 3.3 0 1 0 6.6 0a3.3 3.3 0 1 0 -6.6 0M687.7 165.6a3.3 3.3 0 1 0 6.6 0a3.3 3.3 0 1 0 -6.6 0M690.2 167.1a3.3 3.3 0 1 0 6.6 0a3.3 3.3 0 1 0 -6.6 0M665.0 167.8a3.3 3.3 0 1 0 6.6 0a3.3 3.3 0 1 0 -6.6 0M677.7 163.4a3.3 3.3 0 1 0 6.6 0a3.3 3.3 0 1 0 -6.6 0M664.1 166.7a3.3 3.3 0 1 0 6.6 0a3.3 3.3 0 1 0 -6.6 0M681.2 174.0a3.3 3.3 0 1 0 6.6 0a3.3 3.3 0 1 0 -6.6 0M656.8 163.9a3.3 3.3 0 1 0 6.6 0a3.3 3.3 0 1 0 -6.6 0M669.7 159.1a3.3 3.3 0 1 0 6.6 0a3.3 3.3 0 1 0 -6.6 0M638.2 167.8a3.3 3.3 0 1 0 6.6 0a3.3 3.3 0 1 0 -6.6 0M646.9 174.1a3.3 3.3 0 1 0 6.6 0a3.3 3.3 0 1 0 -6.6 0M658.7 168.4a3.3 3.3 0 1 0 6.6 0a3.3 3.3 0 1 0 -6.6 0M649.3 170.6a3.3 3.3 0 1 0 6.6 0a3.3 3.3 0 1 0 -6.6 0M689.3 171.3a3.3 3.3 0 1 0 6.6 0a3.3 3.3 0 1 0 -6.6 0M671.0 172.4a3.3 3.3 0 1 0 6.6 0a3.3 3.3 0 1 0 -6.6 0M647.5 167.1a3.3 3.3 0 1 0 6.6 0a3.3 3.3 0 1 0 -6.6 0M690.0 165.7a3.3 3.3 0 1 0 6.6 0a3.3 3.3 0 1 0 -6.6 0M655.4 164.1a3.3 3.3 0 1 0 6.6 0a3.3 3.3 0 1 0 -6.6 0M645.3 166.6a3.3 3.3 0 1 0 6.6 0a3.3 3.3 0 1 0 -6.6 0M650.6 171.6a3.3 3.3 0 1 0 6.6 0a3.3 3.3 0 1 0 -6.6 0M676.1 163.1a3.3 3.3 0 1 0 6.6 0a3.3 3.3 0 1 0 -6.6 0M643.0 164.1a3.3 3.3 0 1 0 6.6 0a3.3 3.3 0 1 0 -6.6 0M665.4 172.6a3.3 3.3 0 1 0 6.6 0a3.3 3.3 0 1 0 -6.6 0M639.4 167.9a3.3 3.3 0 1 0 6.6 0a3.3 3.3 0 1 0 -6.6 0M669.0 166.3a3.3 3.3 0 1 0 6.6 0a3.3 3.3 0 1 0 -6.6 0M685.9 173.8a3.3 3.3 0 1 0 6.6 0a3.3 3.3 0 1 0 -6.6 0M651.3 166.0a3.3 3.3 0 1 0 6.6 0a3.3 3.3 0 1 0 -6.6 0M687.4 162.4a3.3 3.3 0 1 0 6.6 0a3.3 3.3 0 1 0 -6.6 0M652.4 176.9a3.3 3.3 0 1 0 6.6 0a3.3 3.3 0 1 0 -6.6 0M684.9 167.8a3.3 3.3 0 1 0 6.6 0a3.3 3.3 0 1 0 -6.6 0M683.7 169.1a3.3 3.3 0 1 0 6.6 0a3.3 3.3 0 1 0 -6.6 0M642.7 174.3a3.3 3.3 0 1 0 6.6 0a3.3 3.3 0 1 0 -6.6 0M669.0 177.3a3.3 3.3 0 1 0 6.6 0a3.3 3.3 0 1 0 -6.6 0M647.0 174.1a3.3 3.3 0 1 0 6.6 0a3.3 3.3 0 1 0 -6.6 0M668.1 170.8a3.3 3.3 0 1 0 6.6 0a3.3 3.3 0 1 0 -6.6 0M650.5 169.2a3.3 3.3 0 1 0 6.6 0a3.3 3.3 0 1 0 -6.6 0M665.5 166.5a3.3 3.3 0 1 0 6.6 0a3.3 3.3 0 1 0 -6.6 0M671.2 169.8a3.3 3.3 0 1 0 6.6 0a3.3 3.3 0 1 0 -6.6 0M681.0 167.6a3.3 3.3 0 1 0 6.6 0a3.3 3.3 0 1 0 -6.6 0M674.2 164.9a3.3 3.3 0 1 0 6.6 0a3.3 3.3 0 1 0 -6.6 0M689.9 164.2a3.3 3.3 0 1 0 6.6 0a3.3 3.3 0 1 0 -6.6 0M689.8 165.8a3.3 3.3 0 1 0 6.6 0a3.3 3.3 0 1 0 -6.6 0M690.0 166.4a3.3 3.3 0 1 0 6.6 0a3.3 3.3 0 1 0 -6.6 0M656.3 168.3a3.3 3.3 0 1 0 6.6 0a3.3 3.3 0 1 0 -6.6 0M648.7 167.4a3.3 3.3 0 1 0 6.6 0a3.3 3.3 0 1 0 -6.6 0M638.2 171.9a3.3 3.3 0 1 0 6.6 0a3.3 3.3 0 1 0 -6.6 0M659.8 169.2a3.3 3.3 0 1 0 6.6 0a3.3 3.3 0 1 0 -6.6 0M689.0 165.4a3.3 3.3 0 1 0 6.6 0a3.3 3.3 0 1 0 -6.6 0M675.6 162.0a3.3 3.3 0 1 0 6.6 0a3.3 3.3 0 1 0 -6.6 0M663.2 169.2a3.3 3.3 0 1 0 6.6 0a3.3 3.3 0 1 0 -6.6 0M645.2 175.8a3.3 3.3 0 1 0 6.6 0a3.3 3.3 0 1 0 -6.6 0M679.1 171.7a3.3 3.3 0 1 0 6.6 0a3.3 3.3 0 1 0 -6.6 0M675.7 167.2a3.3 3.3 0 1 0 6.6 0a3.3 3.3 0 1 0 -6.6 0M653.0 175.0a3.3 3.3 0 1 0 6.6 0a3.3 3.3 0 1 0 -6.6 0M669.9 172.8a3.3 3.3 0 1 0 6.6 0a3.3 3.3 0 1 0 -6.6 0M647.3 170.2a3.3 3.3 0 1 0 6.6 0a3.3 3.3 0 1 0 -6.6 0M676.8 160.1a3.3 3.3 0 1 0 6.6 0a3.3 3.3 0 1 0 -6.6 0M636.5 176.0a3.3 3.3 0 1 0 6.6 0a3.3 3.3 0 1 0 -6.6 0M636.4 170.1a3.3 3.3 0 1 0 6.6 0a3.3 3.3 0 1 0 -6.6 0M676.0 156.2a3.3 3.3 0 1 0 6.6 0a3.3 3.3 0 1 0 -6.6 0M688.5 163.1a3.3 3.3 0 1 0 6.6 0a3.3 3.3 0 1 0 -6.6 0M665.5 167.2a3.3 3.3 0 1 0 6.6 0a3.3 3.3 0 1 0 -6.6 0M663.0 164.7a3.3 3.3 0 1 0 6.6 0a3.3 3.3 0 1 0 -6.6 0M640.9 166.5a3.3 3.3 0 1 0 6.6 0a3.3 3.3 0 1 0 -6.6 0M671.1 167.7a3.3 3.3 0 1 0 6.6 0a3.3 3.3 0 1 0 -6.6 0M677.0 167.9a3.3 3.3 0 1 0 6.6 0a3.3 3.3 0 1 0 -6.6 0M646.8 166.3a3.3 3.3 0 1 0 6.6 0a3.3 3.3 0 1 0 -6.6 0M644.8 171.8a3.3 3.3 0 1 0 6.6 0a3.3 3.3 0 1 0 -6.6 0M649.0 169.2a3.3 3.3 0 1 0 6.6 0a3.3 3.3 0 1 0 -6.6 0M669.0 170.8a3.3 3.3 0 1 0 6.6 0a3.3 3.3 0 1 0 -6.6 0M681.2 161.0a3.3 3.3 0 1 0 6.6 0a3.3 3.3 0 1 0 -6.6 0M673.4 161.1a3.3 3.3 0 1 0 6.6 0a3.3 3.3 0 1 0 -6.6 0M647.0 165.2a3.3 3.3 0 1 0 6.6 0a3.3 3.3 0 1 0 -6.6 0M671.7 163.1a3.3 3.3 0 1 0 6.6 0a3.3 3.3 0 1 0 -6.6 0M659.9 170.4a3.3 3.3 0 1 0 6.6 0a3.3 3.3 0 1 0 -6.6 0M637.9 168.0a3.3 3.3 0 1 0 6.6 0a3.3 3.3 0 1 0 -6.6 0M672.0 173.3a3.3 3.3 0 1 0 6.6 0a3.3 3.3 0 1 0 -6.6 0M647.7 171.7a3.3 3.3 0 1 0 6.6 0a3.3 3.3 0 1 0 -6.6 0M650.8 167.4a3.3 3.3 0 1 0 6.6 0a3.3 3.3 0 1 0 -6.6 0M679.4 176.2a3.3 3.3 0 1 0 6.6 0a3.3 3.3 0 1 0 -6.6 0M680.7 165.3a3.3 3.3 0 1 0 6.6 0a3.3 3.3 0 1 0 -6.6 0M676.6 170.1a3.3 3.3 0 1 0 6.6 0a3.3 3.3 0 1 0 -6.6 0M641.2 172.9a3.3 3.3 0 1 0 6.6 0a3.3 3.3 0 1 0 -6.6 0M644.7 174.1a3.3 3.3 0 1 0 6.6 0a3.3 3.3 0 1 0 -6.6 0M647.3 169.9a3.3 3.3 0 1 0 6.6 0a3.3 3.3 0 1 0 -6.6 0M665.4 170.7a3.3 3.3 0 1 0 6.6 0a3.3 3.3 0 1 0 -6.6 0M665.8 161.0a3.3 3.3 0 1 0 6.6 0a3.3 3.3 0 1 0 -6.6 0M657.9 166.2a3.3 3.3 0 1 0 6.6 0a3.3 3.3 0 1 0 -6.6 0M702.4 165.7a3.3 3.3 0 1 0 6.6 0a3.3 3.3 0 1 0 -6.6 0M705.0 166.4a3.3 3.3 0 1 0 6.6 0a3.3 3.3 0 1 0 -6.6 0M706.0 163.4a3.3 3.3 0 1 0 6.6 0a3.3 3.3 0 1 0 -6.6 0M707.3 161.4a3.3 3.3 0 1 0 6.6 0a3.3 3.3 0 1 0 -6.6 0M704.5 157.3a3.3 3.3 0 1 0 6.6 0a3.3 3.3 0 1 0 -6.6 0M707.6 159.5a3.3 3.3 0 1 0 6.6 0a3.3 3.3 0 1 0 -6.6 0M705.4 158.3a3.3 3.3 0 1 0 6.6 0a3.3 3.3 0 1 0 -6.6 0M706.2 159.1a3.3 3.3 0 1 0 6.6 0a3.3 3.3 0 1 0 -6.6 0M704.1 176.1a3.3 3.3 0 1 0 6.6 0a3.3 3.3 0 1 0 -6.6 0M702.0 172.8a3.3 3.3 0 1 0 6.6 0a3.3 3.3 0 1 0 -6.6 0M702.5 160.7a3.3 3.3 0 1 0 6.6 0a3.3 3.3 0 1 0 -6.6 0M702.7 173.9a3.3 3.3 0 1 0 6.6 0a3.3 3.3 0 1 0 -6.6 0M702.7 172.5a3.3 3.3 0 1 0 6.6 0a3.3 3.3 0 1 0 -6.6 0M704.3 159.9a3.3 3.3 0 1 0 6.6 0a3.3 3.3 0 1 0 -6.6 0M703.2 158.9a3.3 3.3 0 1 0 6.6 0a3.3 3.3 0 1 0 -6.6 0M678.1 150.9a3.3 3.3 0 1 0 6.6 0a3.3 3.3 0 1 0 -6.6 0M692.2 153.5a3.3 3.3 0 1 0 6.6 0a3.3 3.3 0 1 0 -6.6 0M658.7 159.4a3.3 3.3 0 1 0 6.6 0a3.3 3.3 0 1 0 -6.6 0M646.8 191.5a3.3 3.3 0 1 0 6.6 0a3.3 3.3 0 1 0 -6.6 0M651.1 193.2a3.3 3.3 0 1 0 6.6 0a3.3 3.3 0 1 0 -6.6 0M657.8 187.3a3.3 3.3 0 1 0 6.6 0a3.3 3.3 0 1 0 -6.6 0M79.8 334.2a3.3 3.3 0 1 0 6.6 0a3.3 3.3 0 1 0 -6.6 0M82.9 334.6a3.3 3.3 0 1 0 6.6 0a3.3 3.3 0 1 0 -6.6 0M86.0 334.8a3.3 3.3 0 1 0 6.6 0a3.3 3.3 0 1 0 -6.6 0M88.3 332.6a3.3 3.3 0 1 0 6.6 0a3.3 3.3 0 1 0 -6.6 0M91.7 334.2a3.3 3.3 0 1 0 6.6 0a3.3 3.3 0 1 0 -6.6 0M94.1 331.7a3.3 3.3 0 1 0 6.6 0a3.3 3.3 0 1 0 -6.6 0M98.0 329.6a3.3 3.3 0 1 0 6.6 0a3.3 3.3 0 1 0 -6.6 0M100.8 329.5a3.3 3.3 0 1 0 6.6 0a3.3 3.3 0 1 0 -6.6 0M103.3 328.6a3.3 3.3 0 1 0 6.6 0a3.3 3.3 0 1 0 -6.6 0M106.5 332.1a3.3 3.3 0 1 0 6.6 0a3.3 3.3 0 1 0 -6.6 0M109.2 331.0a3.3 3.3 0 1 0 6.6 0a3.3 3.3 0 1 0 -6.6 0M112.3 329.0a3.3 3.3 0 1 0 6.6 0a3.3 3.3 0 1 0 -6.6 0M105.8 326.7a3.3 3.3 0 1 0 6.6 0a3.3 3.3 0 1 0 -6.6 0M94.1 338.1a3.3 3.3 0 1 0 6.6 0a3.3 3.3 0 1 0 -6.6 0M79.4 335.4a3.3 3.3 0 1 0 6.6 0a3.3 3.3 0 1 0 -6.6 0M113.3 331.8a3.3 3.3 0 1 0 6.6 0a3.3 3.3 0 1 0 -6.6 0M108.5 328.8a3.3 3.3 0 1 0 6.6 0a3.3 3.3 0 1 0 -6.6 0M92.5 331.9a3.3 3.3 0 1 0 6.6 0a3.3 3.3 0 1 0 -6.6 0M83.0 338.1a3.3 3.3 0 1 0 6.6 0a3.3 3.3 0 1 0 -6.6 0M93.8 339.8a3.3 3.3 0 1 0 6.6 0a3.3 3.3 0 1 0 -6.6 0M87.8 339.1a3.3 3.3 0 1 0 6.6 0a3.3 3.3 0 1 0 -6.6 0M105.2 330.5a3.3 3.3 0 1 0 6.6 0a3.3 3.3 0 1 0 -6.6 0M102.6 333.8a3.3 3.3 0 1 0 6.6 0a3.3 3.3 0 1 0 -6.6 0M83.8 333.3a3.3 3.3 0 1 0 6.6 0a3.3 3.3 0 1 0 -6.6 0M108.6 332.9a3.3 3.3 0 1 0 6.6 0a3.3 3.3 0 1 0 -6.6 0M109.5 330.3a3.3 3.3 0 1 0 6.6 0a3.3 3.3 0 1 0 -6.6 0M105.8 327.6a3.3 3.3 0 1 0 6.6 0a3.3 3.3 0 1 0 -6.6 0M110.3 329.5a3.3 3.3 0 1 0 6.6 0a3.3 3.3 0 1 0 -6.6 0M91.2 338.4a3.3 3.3 0 1 0 6.6 0a3.3 3.3 0 1 0 -6.6 0M86.7 331.1a3.3 3.3 0 1 0 6.6 0a3.3 3.3 0 1 0 -6.6 0M82.6 330.7a3.3 3.3 0 1 0 6.6 0a3.3 3.3 0 1 0 -6.6 0M107.7 326.0a3.3 3.3 0 1 0 6.6 0a3.3 3.3 0 1 0 -6.6 0M81.4 332.6a3.3 3.3 0 1 0 6.6 0a3.3 3.3 0 1 0 -6.6 0M93.5 336.2a3.3 3.3 0 1 0 6.6 0a3.3 3.3 0 1 0 -6.6 0M101.8 333.2a3.3 3.3 0 1 0 6.6 0a3.3 3.3 0 1 0 -6.6 0M105.4 333.9a3.3 3.3 0 1 0 6.6 0a3.3 3.3 0 1 0 -6.6 0M99.6 331.3a3.3 3.3 0 1 0 6.6 0a3.3 3.3 0 1 0 -6.6 0M108.9 329.8a3.3 3.3 0 1 0 6.6 0a3.3 3.3 0 1 0 -6.6 0M94.0 332.4a3.3 3.3 0 1 0 6.6 0a3.3 3.3 0 1 0 -6.6 0M92.1 338.8a3.3 3.3 0 1 0 6.6 0a3.3 3.3 0 1 0 -6.6 0M104.1 334.6a3.3 3.3 0 1 0 6.6 0a3.3 3.3 0 1 0 -6.6 0M80.3 333.8a3.3 3.3 0 1 0 6.6 0a3.3 3.3 0 1 0 -6.6 0M104.8 325.5a3.3 3.3 0 1 0 6.6 0a3.3 3.3 0 1 0 -6.6 0M97.9 332.9a3.3 3.3 0 1 0 6.6 0a3.3 3.3 0 1 0 -6.6 0M87.0 333.3a3.3 3.3 0 1 0 6.6 0a3.3 3.3 0 1 0 -6.6 0M110.8 328.8a3.3 3.3 0 1 0 6.6 0a3.3 3.3 0 1 0 -6.6 0M104.6 325.9a3.3 3.3 0 1 0 6.6 0a3.3 3.3 0 1 0 -6.6 0M90.9 330.7a3.3 3.3 0 1 0 6.6 0a3.3 3.3 0 1 0 -6.6 0M97.0 332.5a3.3 3.3 0 1 0 6.6 0a3.3 3.3 0 1 0 -6.6 0M115.0 331.4a3.3 3.3 0 1 0 6.6 0a3.3 3.3 0 1 0 -6.6 0M85.6 336.8a3.3 3.3 0 1 0 6.6 0a3.3 3.3 0 1 0 -6.6 0M110.3 333.0a3.3 3.3 0 1 0 6.6 0a3.3 3.3 0 1 0 -6.6 0M139.9 328.8a3.3 3.3 0 1 0 6.6 0a3.3 3.3 0 1 0 -6.6 0M143.2 329.5a3.3 3.3 0 1 0 6.6 0a3.3 3.3 0 1 0 -6.6 0M146.6 332.4a3.3 3.3 0 1 0 6.6 0a3.3 3.3 0 1 0 -6.6 0M149.2 333.2a3.3 3.3 0 1 0 6.6 0a3.3 3.3 0 1 0 -6.6 0M152.2 331.0a3.3 3.3 0 1 0 6.6 0a3.3 3.3 0 1 0 -6.6 0M155.3 331.8a3.3 3.3 0 1 0 6.6 0a3.3 3.3 0 1 0 -6.6 0M158.1 331.1a3.3 3.3 0 1 0 6.6 0a3.3 3.3 0 1 0 -6.6 0M160.9 330.5a3.3 3.3 0 1 0 6.6 0a3.3 3.3 0 1 0 -6.6 0M164.1 331.5a3.3 3.3 0 1 0 6.6 0a3.3 3.3 0 1 0 -6.6 0M167.1 331.1a3.3 3.3 0 1 0 6.6 0a3.3 3.3 0 1 0 -6.6 0M169.7 332.1a3.3 3.3 0 1 0 6.6 0a3.3 3.3 0 1 0 -6.6 0M173.4 333.3a3.3 3.3 0 1 0 6.6 0a3.3 3.3 0 1 0 -6.6 0M175.9 331.3a3.3 3.3 0 1 0 6.6 0a3.3 3.3 0 1 0 -6.6 0M179.2 329.8a3.3 3.3 0 1 0 6.6 0a3.3 3.3 0 1 0 -6.6 0M182.3 331.9a3.3 3.3 0 1 0 6.6 0a3.3 3.3 0 1 0 -6.6 0M184.9 330.9a3.3 3.3 0 1 0 6.6 0a3.3 3.3 0 1 0 -6.6 0M188.4 332.0a3.3 3.3 0 1 0 6.6 0a3.3 3.3 0 1 0 -6.6 0M191.4 332.2a3.3 3.3 0 1 0 6.6 0a3.3 3.3 0 1 0 -6.6 0M193.9 332.7a3.3 3.3 0 1 0 6.6 0a3.3 3.3 0 1 0 -6.6 0M197.6 331.5a3.3 3.3 0 1 0 6.6 0a3.3 3.3 0 1 0 -6.6 0M200.6 331.9a3.3 3.3 0 1 0 6.6 0a3.3 3.3 0 1 0 -6.6 0M202.7 330.0a3.3 3.3 0 1 0 6.6 0a3.3 3.3 0 1 0 -6.6 0M206.4 331.1a3.3 3.3 0 1 0 6.6 0a3.3 3.3 0 1 0 -6.6 0M208.8 330.0a3.3 3.3 0 1 0 6.6 0a3.3 3.3 0 1 0 -6.6 0M212.3 331.7a3.3 3.3 0 1 0 6.6 0a3.3 3.3 0 1 0 -6.6 0M215.0 331.1a3.3 3.3 0 1 0 6.6 0a3.3 3.3 0 1 0 -6.6 0M217.9 329.5a3.3 3.3 0 1 0 6.6 0a3.3 3.3 0 1 0 -6.6 0M220.8 330.7a3.3 3.3 0 1 0 6.6 0a3.3 3.3 0 1 0 -6.6 0M224.3 330.5a3.3 3.3 0 1 0 6.6 0a3.3 3.3 0 1 0 -6.6 0M226.8 330.3a3.3 3.3 0 1 0 6.6 0a3.3 3.3 0 1 0 -6.6 0M229.7 329.9a3.3 3.3 0 1 0 6.6 0a3.3 3.3 0 1 0 -6.6 0M233.0 330.6a3.3 3.3 0 1 0 6.6 0a3.3 3.3 0 1 0 -6.6 0M235.8 330.0a3.3 3.3 0 1 0 6.6 0a3.3 3.3 0 1 0 -6.6 0M239.1 331.1a3.3 3.3 0 1 0 6.6 0a3.3 3.3 0 1 0 -6.6 0M242.1 330.2a3.3 3.3 0 1 0 6.6 0a3.3 3.3 0 1 0 -6.6 0M245.1 327.2a3.3 3.3 0 1 0 6.6 0a3.3 3.3 0 1 0 -6.6 0M248.2 326.0a3.3 3.3 0 1 0 6.6 0a3.3 3.3 0 1 0 -6.6 0M250.8 325.2a3.3 3.3 0 1 0 6.6 0a3.3 3.3 0 1 0 -6.6 0M254.4 329.6a3.3 3.3 0 1 0 6.6 0a3.3 3.3 0 1 0 -6.6 0M257.1 327.3a3.3 3.3 0 1 0 6.6 0a3.3 3.3 0 1 0 -6.6 0M260.1 328.4a3.3 3.3 0 1 0 6.6 0a3.3 3.3 0 1 0 -6.6 0M263.3 329.1a3.3 3.3 0 1 0 6.6 0a3.3 3.3 0 1 0 -6.6 0M265.8 330.5a3.3 3.3 0 1 0 6.6 0a3.3 3.3 0 1 0 -6.6 0M269.2 327.4a3.3 3.3 0 1 0 6.6 0a3.3 3.3 0 1 0 -6.6 0M272.5 329.1a3.3 3.3 0 1 0 6.6 0a3.3 3.3 0 1 0 -6.6 0M275.0 328.2a3.3 3.3 0 1 0 6.6 0a3.3 3.3 0 1 0 -6.6 0M278.6 326.9a3.3 3.3 0 1 0 6.6 0a3.3 3.3 0 1 0 -6.6 0M281.1 326.1a3.3 3.3 0 1 0 6.6 0a3.3 3.3 0 1 0 -6.6 0M284.2 327.2a3.3 3.3 0 1 0 6.6 0a3.3 3.3 0 1 0 -6.6 0M246.2 324.9a3.3 3.3 0 1 0 6.6 0a3.3 3.3 0 1 0 -6.6 0M263.1 331.2a3.3 3.3 0 1 0 6.6 0a3.3 3.3 0 1 0 -6.6 0M189.0 331.7a3.3 3.3 0 1 0 6.6 0a3.3 3.3 0 1 0 -6.6 0M166.1 334.4a3.3 3.3 0 1 0 6.6 0a3.3 3.3 0 1 0 -6.6 0M255.7 326.0a3.3 3.3 0 1 0 6.6 0a3.3 3.3 0 1 0 -6.6 0M209.2 328.9a3.3 3.3 0 1 0 6.6 0a3.3 3.3 0 1 0 -6.6 0M269.4 329.2a3.3 3.3 0 1 0 6.6 0a3.3 3.3 0 1 0 -6.6 0M274.4 326.9a3.3 3.3 0 1 0 6.6 0a3.3 3.3 0 1 0 -6.6 0M195.8 332.5a3.3 3.3 0 1 0 6.6 0a3.3 3.3 0 1 0 -6.6 0M193.4 331.4a3.3 3.3 0 1 0 6.6 0a3.3 3.3 0 1 0 -6.6 0M272.0 326.7a3.3 3.3 0 1 0 6.6 0a3.3 3.3 0 1 0 -6.6 0M187.8 331.0a3.3 3.3 0 1 0 6.6 0a3.3 3.3 0 1 0 -6.6 0M142.8 325.5a3.3 3.3 0 1 0 6.6 0a3.3 3.3 0 1 0 -6.6 0M256.5 324.9a3.3 3.3 0 1 0 6.6 0a3.3 3.3 0 1 0 -6.6 0M148.0 333.6a3.3 3.3 0 1 0 6.6 0a3.3 3.3 0 1 0 -6.6 0M244.1 331.1a3.3 3.3 0 1 0 6.6 0a3.3 3.3 0 1 0 -6.6 0M273.3 331.5a3.3 3.3 0 1 0 6.6 0a3.3 3.3 0 1 0 -6.6 0M202.6 333.3a3.3 3.3 0 1 0 6.6 0a3.3 3.3 0 1 0 -6.6 0M264.2 326.4a3.3 3.3 0 1 0 6.6 0a3.3 3.3 0 1 0 -6.6 0M266.2 332.7a3.3 3.3 0 1 0 6.6 0a3.3 3.3 0 1 0 -6.6 0M145.2 327.5a3.3 3.3 0 1 0 6.6 0a3.3 3.3 0 1 0 -6.6 0M142.8 327.2a3.3 3.3 0 1 0 6.6 0a3.3 3.3 0 1 0 -6.6 0M163.1 332.0a3.3 3.3 0 1 0 6.6 0a3.3 3.3 0 1 0 -6.6 0M237.2 332.2a3.3 3.3 0 1 0 6.6 0a3.3 3.3 0 1 0 -6.6 0M202.6 329.7a3.3 3.3 0 1 0 6.6 0a3.3 3.3 0 1 0 -6.6 0M173.4 336.4a3.3 3.3 0 1 0 6.6 0a3.3 3.3 0 1 0 -6.6 0M165.0 329.4a3.3 3.3 0 1 0 6.6 0a3.3 3.3 0 1 0 -6.6 0M190.6 330.5a3.3 3.3 0 1 0 6.6 0a3.3 3.3 0 1 0 -6.6 0M238.4 329.2a3.3 3.3 0 1 0 6.6 0a3.3 3.3 0 1 0 -6.6 0M254.3 327.0a3.3 3.3 0 1 0 6.6 0a3.3 3.3 0 1 0 -6.6 0M267.5 327.7a3.3 3.3 0 1 0 6.6 0a3.3 3.3 0 1 0 -6.6 0M276.4 330.5a3.3 3.3 0 1 0 6.6 0a3.3 3.3 0 1 0 -6.6 0M160.3 330.2a3.3 3.3 0 1 0 6.6 0a3.3 3.3 0 1 0 -6.6 0M239.8 331.7a3.3 3.3 0 1 0 6.6 0a3.3 3.3 0 1 0 -6.6 0M253.6 322.4a3.3 3.3 0 1 0 6.6 0a3.3 3.3 0 1 0 -6.6 0M255.4 329.4a3.3 3.3 0 1 0 6.6 0a3.3 3.3 0 1 0 -6.6 0M222.3 333.6a3.3 3.3 0 1 0 6.6 0a3.3 3.3 0 1 0 -6.6 0M278.2 326.8a3.3 3.3 0 1 0 6.6 0a3.3 3.3 0 1 0 -6.6 0M194.3 334.2a3.3 3.3 0 1 0 6.6 0a3.3 3.3 0 1 0 -6.6 0M254.5 333.6a3.3 3.3 0 1 0 6.6 0a3.3 3.3 0 1 0 -6.6 0M239.4 331.6a3.3 3.3 0 1 0 6.6 0a3.3 3.3 0 1 0 -6.6 0M177.7 331.7a3.3 3.3 0 1 0 6.6 0a3.3 3.3 0 1 0 -6.6 0M210.5 333.7a3.3 3.3 0 1 0 6.6 0a3.3 3.3 0 1 0 -6.6 0M151.7 331.3a3.3 3.3 0 1 0 6.6 0a3.3 3.3 0 1 0 -6.6 0M250.0 330.9a3.3 3.3 0 1 0 6.6 0a3.3 3.3 0 1 0 -6.6 0M224.7 335.0a3.3 3.3 0 1 0 6.6 0a3.3 3.3 0 1 0 -6.6 0M152.3 328.9a3.3 3.3 0 1 0 6.6 0a3.3 3.3 0 1 0 -6.6 0M156.1 331.7a3.3 3.3 0 1 0 6.6 0a3.3 3.3 0 1 0 -6.6 0M176.9 330.2a3.3 3.3 0 1 0 6.6 0a3.3 3.3 0 1 0 -6.6 0M211.3 328.9a3.3 3.3 0 1 0 6.6 0a3.3 3.3 0 1 0 -6.6 0M179.9 335.0a3.3 3.3 0 1 0 6.6 0a3.3 3.3 0 1 0 -6.6 0M276.4 327.6a3.3 3.3 0 1 0 6.6 0a3.3 3.3 0 1 0 -6.6 0M256.9 330.7a3.3 3.3 0 1 0 6.6 0a3.3 3.3 0 1 0 -6.6 0M197.8 330.4a3.3 3.3 0 1 0 6.6 0a3.3 3.3 0 1 0 -6.6 0M248.3 329.0a3.3 3.3 0 1 0 6.6 0a3.3 3.3 0 1 0 -6.6 0M147.4 333.4a3.3 3.3 0 1 0 6.6 0a3.3 3.3 0 1 0 -6.6 0M158.7 329.0a3.3 3.3 0 1 0 6.6 0a3.3 3.3 0 1 0 -6.6 0M257.8 328.2a3.3 3.3 0 1 0 6.6 0a3.3 3.3 0 1 0 -6.6 0M152.3 331.4a3.3 3.3 0 1 0 6.6 0a3.3 3.3 0 1 0 -6.6 0M207.0 332.1a3.3 3.3 0 1 0 6.6 0a3.3 3.3 0 1 0 -6.6 0M245.4 331.3a3.3 3.3 0 1 0 6.6 0a3.3 3.3 0 1 0 -6.6 0M166.5 333.9a3.3 3.3 0 1 0 6.6 0a3.3 3.3 0 1 0 -6.6 0M157.1 330.7a3.3 3.3 0 1 0 6.6 0a3.3 3.3 0 1 0 -6.6 0M188.4 334.0a3.3 3.3 0 1 0 6.6 0a3.3 3.3 0 1 0 -6.6 0M208.4 331.2a3.3 3.3 0 1 0 6.6 0a3.3 3.3 0 1 0 -6.6 0M171.7 335.7a3.3 3.3 0 1 0 6.6 0a3.3 3.3 0 1 0 -6.6 0M251.5 329.8a3.3 3.3 0 1 0 6.6 0a3.3 3.3 0 1 0 -6.6 0M204.0 334.2a3.3 3.3 0 1 0 6.6 0a3.3 3.3 0 1 0 -6.6 0M256.5 327.7a3.3 3.3 0 1 0 6.6 0a3.3 3.3 0 1 0 -6.6 0M206.8 335.7a3.3 3.3 0 1 0 6.6 0a3.3 3.3 0 1 0 -6.6 0M162.9 331.1a3.3 3.3 0 1 0 6.6 0a3.3 3.3 0 1 0 -6.6 0M164.0 331.3a3.3 3.3 0 1 0 6.6 0a3.3 3.3 0 1 0 -6.6 0M211.2 328.6a3.3 3.3 0 1 0 6.6 0a3.3 3.3 0 1 0 -6.6 0M220.0 329.3a3.3 3.3 0 1 0 6.6 0a3.3 3.3 0 1 0 -6.6 0M268.1 332.6a3.3 3.3 0 1 0 6.6 0a3.3 3.3 0 1 0 -6.6 0M282.0 327.4a3.3 3.3 0 1 0 6.6 0a3.3 3.3 0 1 0 -6.6 0M279.8 327.3a3.3 3.3 0 1 0 6.6 0a3.3 3.3 0 1 0 -6.6 0M185.2 328.5a3.3 3.3 0 1 0 6.6 0a3.3 3.3 0 1 0 -6.6 0M157.6 331.7a3.3 3.3 0 1 0 6.6 0a3.3 3.3 0 1 0 -6.6 0M221.3 331.4a3.3 3.3 0 1 0 6.6 0a3.3 3.3 0 1 0 -6.6 0M277.3 329.9a3.3 3.3 0 1 0 6.6 0a3.3 3.3 0 1 0 -6.6 0M236.8 330.8a3.3 3.3 0 1 0 6.6 0a3.3 3.3 0 1 0 -6.6 0M183.2 331.8a3.3 3.3 0 1 0 6.6 0a3.3 3.3 0 1 0 -6.6 0M149.0 332.6a3.3 3.3 0 1 0 6.6 0a3.3 3.3 0 1 0 -6.6 0M169.5 329.9a3.3 3.3 0 1 0 6.6 0a3.3 3.3 0 1 0 -6.6 0M261.0 333.7a3.3 3.3 0 1 0 6.6 0a3.3 3.3 0 1 0 -6.6 0M283.5 324.9a3.3 3.3 0 1 0 6.6 0a3.3 3.3 0 1 0 -6.6 0M146.8 335.3a3.3 3.3 0 1 0 6.6 0a3.3 3.3 0 1 0 -6.6 0M185.0 327.1a3.3 3.3 0 1 0 6.6 0a3.3 3.3 0 1 0 -6.6 0M199.9 334.2a3.3 3.3 0 1 0 6.6 0a3.3 3.3 0 1 0 -6.6 0M141.5 327.4a3.3 3.3 0 1 0 6.6 0a3.3 3.3 0 1 0 -6.6 0M260.3 333.6a3.3 3.3 0 1 0 6.6 0a3.3 3.3 0 1 0 -6.6 0M178.4 330.5a3.3 3.3 0 1 0 6.6 0a3.3 3.3 0 1 0 -6.6 0M279.8 328.6a3.3 3.3 0 1 0 6.6 0a3.3 3.3 0 1 0 -6.6 0M149.4 332.7a3.3 3.3 0 1 0 6.6 0a3.3 3.3 0 1 0 -6.6 0M247.9 324.1a3.3 3.3 0 1 0 6.6 0a3.3 3.3 0 1 0 -6.6 0M192.5 335.4a3.3 3.3 0 1 0 6.6 0a3.3 3.3 0 1 0 -6.6 0M283.7 325.5a3.3 3.3 0 1 0 6.6 0a3.3 3.3 0 1 0 -6.6 0M244.9 327.0a3.3 3.3 0 1 0 6.6 0a3.3 3.3 0 1 0 -6.6 0M270.2 326.0a3.3 3.3 0 1 0 6.6 0a3.3 3.3 0 1 0 -6.6 0M162.6 331.7a3.3 3.3 0 1 0 6.6 0a3.3 3.3 0 1 0 -6.6 0M255.8 327.9a3.3 3.3 0 1 0 6.6 0a3.3 3.3 0 1 0 -6.6 0M222.9 330.4a3.3 3.3 0 1 0 6.6 0a3.3 3.3 0 1 0 -6.6 0M218.5 326.8a3.3 3.3 0 1 0 6.6 0a3.3 3.3 0 1 0 -6.6 0M200.9 333.6a3.3 3.3 0 1 0 6.6 0a3.3 3.3 0 1 0 -6.6 0M174.7 328.1a3.3 3.3 0 1 0 6.6 0a3.3 3.3 0 1 0 -6.6 0M208.9 328.7a3.3 3.3 0 1 0 6.6 0a3.3 3.3 0 1 0 -6.6 0M250.6 328.6a3.3 3.3 0 1 0 6.6 0a3.3 3.3 0 1 0 -6.6 0M260.7 329.2a3.3 3.3 0 1 0 6.6 0a3.3 3.3 0 1 0 -6.6 0M273.6 323.8a3.3 3.3 0 1 0 6.6 0a3.3 3.3 0 1 0 -6.6 0M151.6 329.5a3.3 3.3 0 1 0 6.6 0a3.3 3.3 0 1 0 -6.6 0M233.7 328.7a3.3 3.3 0 1 0 6.6 0a3.3 3.3 0 1 0 -6.6 0M213.9 325.9a3.3 3.3 0 1 0 6.6 0a3.3 3.3 0 1 0 -6.6 0M183.9 333.7a3.3 3.3 0 1 0 6.6 0a3.3 3.3 0 1 0 -6.6 0M242.1 326.2a3.3 3.3 0 1 0 6.6 0a3.3 3.3 0 1 0 -6.6 0M146.2 333.7a3.3 3.3 0 1 0 6.6 0a3.3 3.3 0 1 0 -6.6 0M233.6 331.7a3.3 3.3 0 1 0 6.6 0a3.3 3.3 0 1 0 -6.6 0M148.1 330.9a3.3 3.3 0 1 0 6.6 0a3.3 3.3 0 1 0 -6.6 0M154.5 332.3a3.3 3.3 0 1 0 6.6 0a3.3 3.3 0 1 0 -6.6 0M164.0 332.0a3.3 3.3 0 1 0 6.6 0a3.3 3.3 0 1 0 -6.6 0M152.9 327.8a3.3 3.3 0 1 0 6.6 0a3.3 3.3 0 1 0 -6.6 0M197.4 330.0a3.3 3.3 0 1 0 6.6 0a3.3 3.3 0 1 0 -6.6 0M239.3 326.9a3.3 3.3 0 1 0 6.6 0a3.3 3.3 0 1 0 -6.6 0M236.9 329.0a3.3 3.3 0 1 0 6.6 0a3.3 3.3 0 1 0 -6.6 0M239.5 326.6a3.3 3.3 0 1 0 6.6 0a3.3 3.3 0 1 0 -6.6 0M149.9 335.0a3.3 3.3 0 1 0 6.6 0a3.3 3.3 0 1 0 -6.6 0M273.0 328.2a3.3 3.3 0 1 0 6.6 0a3.3 3.3 0 1 0 -6.6 0M210.5 331.5a3.3 3.3 0 1 0 6.6 0a3.3 3.3 0 1 0 -6.6 0M211.5 331.4a3.3 3.3 0 1 0 6.6 0a3.3 3.3 0 1 0 -6.6 0M257.8 324.5a3.3 3.3 0 1 0 6.6 0a3.3 3.3 0 1 0 -6.6 0M209.8 331.6a3.3 3.3 0 1 0 6.6 0a3.3 3.3 0 1 0 -6.6 0M281.9 326.8a3.3 3.3 0 1 0 6.6 0a3.3 3.3 0 1 0 -6.6 0M285.2 325.5a3.3 3.3 0 1 0 6.6 0a3.3 3.3 0 1 0 -6.6 0M287.9 328.4a3.3 3.3 0 1 0 6.6 0a3.3 3.3 0 1 0 -6.6 0M290.3 326.6a3.3 3.3 0 1 0 6.6 0a3.3 3.3 0 1 0 -6.6 0M293.3 326.8a3.3 3.3 0 1 0 6.6 0a3.3 3.3 0 1 0 -6.6 0M296.9 325.1a3.3 3.3 0 1 0 6.6 0a3.3 3.3 0 1 0 -6.6 0M299.9 326.9a3.3 3.3 0 1 0 6.6 0a3.3 3.3 0 1 0 -6.6 0M302.9 328.4a3.3 3.3 0 1 0 6.6 0a3.3 3.3 0 1 0 -6.6 0M306.2 330.0a3.3 3.3 0 1 0 6.6 0a3.3 3.3 0 1 0 -6.6 0M308.2 329.2a3.3 3.3 0 1 0 6.6 0a3.3 3.3 0 1 0 -6.6 0M311.9 331.7a3.3 3.3 0 1 0 6.6 0a3.3 3.3 0 1 0 -6.6 0M314.8 328.8a3.3 3.3 0 1 0 6.6 0a3.3 3.3 0 1 0 -6.6 0M318.1 329.8a3.3 3.3 0 1 0 6.6 0a3.3 3.3 0 1 0 -6.6 0M320.3 328.5a3.3 3.3 0 1 0 6.6 0a3.3 3.3 0 1 0 -6.6 0M323.9 328.1a3.3 3.3 0 1 0 6.6 0a3.3 3.3 0 1 0 -6.6 0M326.2 329.8a3.3 3.3 0 1 0 6.6 0a3.3 3.3 0 1 0 -6.6 0M330.1 330.9a3.3 3.3 0 1 0 6.6 0a3.3 3.3 0 1 0 -6.6 0M332.5 330.4a3.3 3.3 0 1 0 6.6 0a3.3 3.3 0 1 0 -6.6 0M336.0 329.9a3.3 3.3 0 1 0 6.6 0a3.3 3.3 0 1 0 -6.6 0M338.8 329.5a3.3 3.3 0 1 0 6.6 0a3.3 3.3 0 1 0 -6.6 0M341.8 328.8a3.3 3.3 0 1 0 6.6 0a3.3 3.3 0 1 0 -6.6 0M344.8 327.1a3.3 3.3 0 1 0 6.6 0a3.3 3.3 0 1 0 -6.6 0M347.7 327.4a3.3 3.3 0 1 0 6.6 0a3.3 3.3 0 1 0 -6.6 0M350.5 327.0a3.3 3.3 0 1 0 6.6 0a3.3 3.3 0 1 0 -6.6 0M353.7 328.4a3.3 3.3 0 1 0 6.6 0a3.3 3.3 0 1 0 -6.6 0M356.4 328.3a3.3 3.3 0 1 0 6.6 0a3.3 3.3 0 1 0 -6.6 0M359.7 329.3a3.3 3.3 0 1 0 6.6 0a3.3 3.3 0 1 0 -6.6 0M362.6 330.1a3.3 3.3 0 1 0 6.6 0a3.3 3.3 0 1 0 -6.6 0M365.4 330.6a3.3 3.3 0 1 0 6.6 0a3.3 3.3 0 1 0 -6.6 0M368.5 332.0a3.3 3.3 0 1 0 6.6 0a3.3 3.3 0 1 0 -6.6 0M371.9 332.9a3.3 3.3 0 1 0 6.6 0a3.3 3.3 0 1 0 -6.6 0M374.7 332.5a3.3 3.3 0 1 0 6.6 0a3.3 3.3 0 1 0 -6.6 0M378.1 333.0a3.3 3.3 0 1 0 6.6 0a3.3 3.3 0 1 0 -6.6 0M380.6 331.1a3.3 3.3 0 1 0 6.6 0a3.3 3.3 0 1 0 -6.6 0M383.6 330.6a3.3 3.3 0 1 0 6.6 0a3.3 3.3 0 1 0 -6.6 0M387.0 329.3a3.3 3.3 0 1 0 6.6 0a3.3 3.3 0 1 0 -6.6 0M389.9 328.1a3.3 3.3 0 1 0 6.6 0a3.3 3.3 0 1 0 -6.6 0M392.7 328.9a3.3 3.3 0 1 0 6.6 0a3.3 3.3 0 1 0 -6.6 0M395.5 329.0a3.3 3.3 0 1 0 6.6 0a3.3 3.3 0 1 0 -6.6 0M399.0 330.9a3.3 3.3 0 1 0 6.6 0a3.3 3.3 0 1 0 -6.6 0M401.4 328.1a3.3 3.3 0 1 0 6.6 0a3.3 3.3 0 1 0 -6.6 0M405.0 330.1a3.3 3.3 0 1 0 6.6 0a3.3 3.3 0 1 0 -6.6 0M407.9 329.8a3.3 3.3 0 1 0 6.6 0a3.3 3.3 0 1 0 -6.6 0M410.9 328.4a3.3 3.3 0 1 0 6.6 0a3.3 3.3 0 1 0 -6.6 0M413.3 328.8a3.3 3.3 0 1 0 6.6 0a3.3 3.3 0 1 0 -6.6 0M416.2 331.2a3.3 3.3 0 1 0 6.6 0a3.3 3.3 0 1 0 -6.6 0M419.7 330.5a3.3 3.3 0 1 0 6.6 0a3.3 3.3 0 1 0 -6.6 0M423.2 331.5a3.3 3.3 0 1 0 6.6 0a3.3 3.3 0 1 0 -6.6 0M425.4 330.0a3.3 3.3 0 1 0 6.6 0a3.3 3.3 0 1 0 -6.6 0M428.3 332.1a3.3 3.3 0 1 0 6.6 0a3.3 3.3 0 1 0 -6.6 0M431.9 331.0a3.3 3.3 0 1 0 6.6 0a3.3 3.3 0 1 0 -6.6 0M434.6 330.3a3.3 3.3 0 1 0 6.6 0a3.3 3.3 0 1 0 -6.6 0M437.7 332.1a3.3 3.3 0 1 0 6.6 0a3.3 3.3 0 1 0 -6.6 0M441.1 332.6a3.3 3.3 0 1 0 6.6 0a3.3 3.3 0 1 0 -6.6 0M444.1 331.1a3.3 3.3 0 1 0 6.6 0a3.3 3.3 0 1 0 -6.6 0M446.6 330.7a3.3 3.3 0 1 0 6.6 0a3.3 3.3 0 1 0 -6.6 0M450.2 330.2a3.3 3.3 0 1 0 6.6 0a3.3 3.3 0 1 0 -6.6 0M452.4 330.2a3.3 3.3 0 1 0 6.6 0a3.3 3.3 0 1 0 -6.6 0M456.1 331.3a3.3 3.3 0 1 0 6.6 0a3.3 3.3 0 1 0 -6.6 0M339.5 329.8a3.3 3.3 0 1 0 6.6 0a3.3 3.3 0 1 0 -6.6 0M315.0 326.9a3.3 3.3 0 1 0 6.6 0a3.3 3.3 0 1 0 -6.6 0M440.1 330.5a3.3 3.3 0 1 0 6.6 0a3.3 3.3 0 1 0 -6.6 0M386.0 325.6a3.3 3.3 0 1 0 6.6 0a3.3 3.3 0 1 0 -6.6 0M349.8 322.8a3.3 3.3 0 1 0 6.6 0a3.3 3.3 0 1 0 -6.6 0M346.6 327.6a3.3 3.3 0 1 0 6.6 0a3.3 3.3 0 1 0 -6.6 0M391.1 324.5a3.3 3.3 0 1 0 6.6 0a3.3 3.3 0 1 0 -6.6 0M399.9 325.4a3.3 3.3 0 1 0 6.6 0a3.3 3.3 0 1 0 -6.6 0M431.7 329.9a3.3 3.3 0 1 0 6.6 0a3.3 3.3 0 1 0 -6.6 0M382.3 327.6a3.3 3.3 0 1 0 6.6 0a3.3 3.3 0 1 0 -6.6 0M338.5 329.0a3.3 3.3 0 1 0 6.6 0a3.3 3.3 0 1 0 -6.6 0M302.7 327.5a3.3 3.3 0 1 0 6.6 0a3.3 3.3 0 1 0 -6.6 0M354.5 331.2a3.3 3.3 0 1 0 6.6 0a3.3 3.3 0 1 0 -6.6 0M301.6 329.3a3.3 3.3 0 1 0 6.6 0a3.3 3.3 0 1 0 -6.6 0M324.1 328.6a3.3 3.3 0 1 0 6.6 0a3.3 3.3 0 1 0 -6.6 0M287.9 327.9a3.3 3.3 0 1 0 6.6 0a3.3 3.3 0 1 0 -6.6 0M417.8 333.9a3.3 3.3 0 1 0 6.6 0a3.3 3.3 0 1 0 -6.6 0M290.8 324.8a3.3 3.3 0 1 0 6.6 0a3.3 3.3 0 1 0 -6.6 0M391.2 332.4a3.3 3.3 0 1 0 6.6 0a3.3 3.3 0 1 0 -6.6 0M349.4 322.9a3.3 3.3 0 1 0 6.6 0a3.3 3.3 0 1 0 -6.6 0M413.7 333.3a3.3 3.3 0 1 0 6.6 0a3.3 3.3 0 1 0 -6.6 0M297.2 323.5a3.3 3.3 0 1 0 6.6 0a3.3 3.3 0 1 0 -6.6 0M281.6 323.3a3.3 3.3 0 1 0 6.6 0a3.3 3.3 0 1 0 -6.6 0M346.1 327.8a3.3 3.3 0 1 0 6.6 0a3.3 3.3 0 1 0 -6.6 0M332.1 332.1a3.3 3.3 0 1 0 6.6 0a3.3 3.3 0 1 0 -6.6 0M311.0 330.6a3.3 3.3 0 1 0 6.6 0a3.3 3.3 0 1 0 -6.6 0M346.6 328.1a3.3 3.3 0 1 0 6.6 0a3.3 3.3 0 1 0 -6.6 0M344.2 328.6a3.3 3.3 0 1 0 6.6 0a3.3 3.3 0 1 0 -6.6 0M380.4 329.2a3.3 3.3 0 1 0 6.6 0a3.3 3.3 0 1 0 -6.6 0M449.3 328.1a3.3 3.3 0 1 0 6.6 0a3.3 3.3 0 1 0 -6.6 0M396.7 327.8a3.3 3.3 0 1 0 6.6 0a3.3 3.3 0 1 0 -6.6 0M339.0 327.3a3.3 3.3 0 1 0 6.6 0a3.3 3.3 0 1 0 -6.6 0M449.6 330.5a3.3 3.3 0 1 0 6.6 0a3.3 3.3 0 1 0 -6.6 0M309.7 331.2a3.3 3.3 0 1 0 6.6 0a3.3 3.3 0 1 0 -6.6 0M352.6 330.2a3.3 3.3 0 1 0 6.6 0a3.3 3.3 0 1 0 -6.6 0M361.7 330.1a3.3 3.3 0 1 0 6.6 0a3.3 3.3 0 1 0 -6.6 0M286.3 331.1a3.3 3.3 0 1 0 6.6 0a3.3 3.3 0 1 0 -6.6 0M401.3 329.2a3.3 3.3 0 1 0 6.6 0a3.3 3.3 0 1 0 -6.6 0M316.0 330.8a3.3 3.3 0 1 0 6.6 0a3.3 3.3 0 1 0 -6.6 0M403.3 330.9a3.3 3.3 0 1 0 6.6 0a3.3 3.3 0 1 0 -6.6 0M305.2 328.1a3.3 3.3 0 1 0 6.6 0a3.3 3.3 0 1 0 -6.6 0M336.5 326.0a3.3 3.3 0 1 0 6.6 0a3.3 3.3 0 1 0 -6.6 0M366.3 328.2a3.3 3.3 0 1 0 6.6 0a3.3 3.3 0 1 0 -6.6 0M400.6 330.8a3.3 3.3 0 1 0 6.6 0a3.3 3.3 0 1 0 -6.6 0M418.5 327.2a3.3 3.3 0 1 0 6.6 0a3.3 3.3 0 1 0 -6.6 0M359.1 330.6a3.3 3.3 0 1 0 6.6 0a3.3 3.3 0 1 0 -6.6 0M345.3 331.0a3.3 3.3 0 1 0 6.6 0a3.3 3.3 0 1 0 -6.6 0M425.9 328.7a3.3 3.3 0 1 0 6.6 0a3.3 3.3 0 1 0 -6.6 0M287.0 331.6a3.3 3.3 0 1 0 6.6 0a3.3 3.3 0 1 0 -6.6 0M328.3 329.8a3.3 3.3 0 1 0 6.6 0a3.3 3.3 0 1 0 -6.6 0M372.8 335.4a3.3 3.3 0 1 0 6.6 0a3.3 3.3 0 1 0 -6.6 0M358.6 330.1a3.3 3.3 0 1 0 6.6 0a3.3 3.3 0 1 0 -6.6 0M433.0 334.7a3.3 3.3 0 1 0 6.6 0a3.3 3.3 0 1 0 -6.6 0M340.8 327.4a3.3 3.3 0 1 0 6.6 0a3.3 3.3 0 1 0 -6.6 0M292.8 327.8a3.3 3.3 0 1 0 6.6 0a3.3 3.3 0 1 0 -6.6 0M302.5 327.4a3.3 3.3 0 1 0 6.6 0a3.3 3.3 0 1 0 -6.6 0M330.3 333.7a3.3 3.3 0 1 0 6.6 0a3.3 3.3 0 1 0 -6.6 0M455.4 332.3a3.3 3.3 0 1 0 6.6 0a3.3 3.3 0 1 0 -6.6 0M330.6 332.4a3.3 3.3 0 1 0 6.6 0a3.3 3.3 0 1 0 -6.6 0M321.3 332.5a3.3 3.3 0 1 0 6.6 0a3.3 3.3 0 1 0 -6.6 0M378.4 332.6a3.3 3.3 0 1 0 6.6 0a3.3 3.3 0 1 0 -6.6 0M404.3 332.2a3.3 3.3 0 1 0 6.6 0a3.3 3.3 0 1 0 -6.6 0M361.4 332.4a3.3 3.3 0 1 0 6.6 0a3.3 3.3 0 1 0 -6.6 0M330.7 329.9a3.3 3.3 0 1 0 6.6 0a3.3 3.3 0 1 0 -6.6 0M403.5 326.6a3.3 3.3 0 1 0 6.6 0a3.3 3.3 0 1 0 -6.6 0M319.4 327.9a3.3 3.3 0 1 0 6.6 0a3.3 3.3 0 1 0 -6.6 0M369.4 333.3a3.3 3.3 0 1 0 6.6 0a3.3 3.3 0 1 0 -6.6 0M412.3 326.5a3.3 3.3 0 1 0 6.6 0a3.3 3.3 0 1 0 -6.6 0M342.3 328.4a3.3 3.3 0 1 0 6.6 0a3.3 3.3 0 1 0 -6.6 0M373.5 336.2a3.3 3.3 0 1 0 6.6 0a3.3 3.3 0 1 0 -6.6 0M364.2 331.9a3.3 3.3 0 1 0 6.6 0a3.3 3.3 0 1 0 -6.6 0M316.0 330.6a3.3 3.3 0 1 0 6.6 0a3.3 3.3 0 1 0 -6.6 0M297.8 327.6a3.3 3.3 0 1 0 6.6 0a3.3 3.3 0 1 0 -6.6 0M366.1 331.0a3.3 3.3 0 1 0 6.6 0a3.3 3.3 0 1 0 -6.6 0M319.5 324.3a3.3 3.3 0 1 0 6.6 0a3.3 3.3 0 1 0 -6.6 0M421.8 333.2a3.3 3.3 0 1 0 6.6 0a3.3 3.3 0 1 0 -6.6 0M378.4 331.5a3.3 3.3 0 1 0 6.6 0a3.3 3.3 0 1 0 -6.6 0M418.0 332.8a3.3 3.3 0 1 0 6.6 0a3.3 3.3 0 1 0 -6.6 0M419.6 331.6a3.3 3.3 0 1 0 6.6 0a3.3 3.3 0 1 0 -6.6 0M399.7 323.7a3.3 3.3 0 1 0 6.6 0a3.3 3.3 0 1 0 -6.6 0M353.7 325.6a3.3 3.3 0 1 0 6.6 0a3.3 3.3 0 1 0 -6.6 0M320.1 325.6a3.3 3.3 0 1 0 6.6 0a3.3 3.3 0 1 0 -6.6 0M313.4 327.8a3.3 3.3 0 1 0 6.6 0a3.3 3.3 0 1 0 -6.6 0M364.8 329.8a3.3 3.3 0 1 0 6.6 0a3.3 3.3 0 1 0 -6.6 0M369.9 331.4a3.3 3.3 0 1 0 6.6 0a3.3 3.3 0 1 0 -6.6 0M316.3 331.6a3.3 3.3 0 1 0 6.6 0a3.3 3.3 0 1 0 -6.6 0M381.5 329.2a3.3 3.3 0 1 0 6.6 0a3.3 3.3 0 1 0 -6.6 0M418.7 331.8a3.3 3.3 0 1 0 6.6 0a3.3 3.3 0 1 0 -6.6 0M321.4 330.3a3.3 3.3 0 1 0 6.6 0a3.3 3.3 0 1 0 -6.6 0M346.6 324.2a3.3 3.3 0 1 0 6.6 0a3.3 3.3 0 1 0 -6.6 0M394.4 327.2a3.3 3.3 0 1 0 6.6 0a3.3 3.3 0 1 0 -6.6 0M410.2 332.0a3.3 3.3 0 1 0 6.6 0a3.3 3.3 0 1 0 -6.6 0M434.4 329.0a3.3 3.3 0 1 0 6.6 0a3.3 3.3 0 1 0 -6.6 0M296.0 322.0a3.3 3.3 0 1 0 6.6 0a3.3 3.3 0 1 0 -6.6 0M367.3 329.8a3.3 3.3 0 1 0 6.6 0a3.3 3.3 0 1 0 -6.6 0M362.4 331.5a3.3 3.3 0 1 0 6.6 0a3.3 3.3 0 1 0 -6.6 0M408.4 326.9a3.3 3.3 0 1 0 6.6 0a3.3 3.3 0 1 0 -6.6 0M282.7 323.5a3.3 3.3 0 1 0 6.6 0a3.3 3.3 0 1 0 -6.6 0M403.9 331.0a3.3 3.3 0 1 0 6.6 0a3.3 3.3 0 1 0 -6.6 0M287.7 329.6a3.3 3.3 0 1 0 6.6 0a3.3 3.3 0 1 0 -6.6 0M350.3 323.8a3.3 3.3 0 1 0 6.6 0a3.3 3.3 0 1 0 -6.6 0M448.0 330.8a3.3 3.3 0 1 0 6.6 0a3.3 3.3 0 1 0 -6.6 0M358.1 330.4a3.3 3.3 0 1 0 6.6 0a3.3 3.3 0 1 0 -6.6 0M312.6 333.4a3.3 3.3 0 1 0 6.6 0a3.3 3.3 0 1 0 -6.6 0M353.0 328.1a3.3 3.3 0 1 0 6.6 0a3.3 3.3 0 1 0 -6.6 0M382.4 330.7a3.3 3.3 0 1 0 6.6 0a3.3 3.3 0 1 0 -6.6 0M433.4 330.0a3.3 3.3 0 1 0 6.6 0a3.3 3.3 0 1 0 -6.6 0M436.2 328.8a3.3 3.3 0 1 0 6.6 0a3.3 3.3 0 1 0 -6.6 0M392.4 326.3a3.3 3.3 0 1 0 6.6 0a3.3 3.3 0 1 0 -6.6 0M334.0 328.5a3.3 3.3 0 1 0 6.6 0a3.3 3.3 0 1 0 -6.6 0M394.3 327.0a3.3 3.3 0 1 0 6.6 0a3.3 3.3 0 1 0 -6.6 0M358.9 329.7a3.3 3.3 0 1 0 6.6 0a3.3 3.3 0 1 0 -6.6 0M340.5 329.2a3.3 3.3 0 1 0 6.6 0a3.3 3.3 0 1 0 -6.6 0M331.7 328.4a3.3 3.3 0 1 0 6.6 0a3.3 3.3 0 1 0 -6.6 0M423.4 332.6a3.3 3.3 0 1 0 6.6 0a3.3 3.3 0 1 0 -6.6 0M293.2 325.0a3.3 3.3 0 1 0 6.6 0a3.3 3.3 0 1 0 -6.6 0M346.1 327.0a3.3 3.3 0 1 0 6.6 0a3.3 3.3 0 1 0 -6.6 0M369.4 329.3a3.3 3.3 0 1 0 6.6 0a3.3 3.3 0 1 0 -6.6 0M373.2 336.6a3.3 3.3 0 1 0 6.6 0a3.3 3.3 0 1 0 -6.6 0M348.6 324.9a3.3 3.3 0 1 0 6.6 0a3.3 3.3 0 1 0 -6.6 0M451.7 332.1a3.3 3.3 0 1 0 6.6 0a3.3 3.3 0 1 0 -6.6 0M427.7 333.3a3.3 3.3 0 1 0 6.6 0a3.3 3.3 0 1 0 -6.6 0M330.3 326.1a3.3 3.3 0 1 0 6.6 0a3.3 3.3 0 1 0 -6.6 0M360.2 327.9a3.3 3.3 0 1 0 6.6 0a3.3 3.3 0 1 0 -6.6 0M415.5 326.4a3.3 3.3 0 1 0 6.6 0a3.3 3.3 0 1 0 -6.6 0M372.6 335.7a3.3 3.3 0 1 0 6.6 0a3.3 3.3 0 1 0 -6.6 0M439.1 331.8a3.3 3.3 0 1 0 6.6 0a3.3 3.3 0 1 0 -6.6 0M354.5 328.0a3.3 3.3 0 1 0 6.6 0a3.3 3.3 0 1 0 -6.6 0M442.3 332.1a3.3 3.3 0 1 0 6.6 0a3.3 3.3 0 1 0 -6.6 0M406.2 333.3a3.3 3.3 0 1 0 6.6 0a3.3 3.3 0 1 0 -6.6 0M300.4 330.0a3.3 3.3 0 1 0 6.6 0a3.3 3.3 0 1 0 -6.6 0M284.6 323.9a3.3 3.3 0 1 0 6.6 0a3.3 3.3 0 1 0 -6.6 0M364.5 328.1a3.3 3.3 0 1 0 6.6 0a3.3 3.3 0 1 0 -6.6 0M320.4 325.4a3.3 3.3 0 1 0 6.6 0a3.3 3.3 0 1 0 -6.6 0M315.4 326.6a3.3 3.3 0 1 0 6.6 0a3.3 3.3 0 1 0 -6.6 0M425.7 328.3a3.3 3.3 0 1 0 6.6 0a3.3 3.3 0 1 0 -6.6 0M323.6 328.3a3.3 3.3 0 1 0 6.6 0a3.3 3.3 0 1 0 -6.6 0M298.4 326.9a3.3 3.3 0 1 0 6.6 0a3.3 3.3 0 1 0 -6.6 0M433.1 327.2a3.3 3.3 0 1 0 6.6 0a3.3 3.3 0 1 0 -6.6 0M403.3 331.6a3.3 3.3 0 1 0 6.6 0a3.3 3.3 0 1 0 -6.6 0M330.1 327.4a3.3 3.3 0 1 0 6.6 0a3.3 3.3 0 1 0 -6.6 0M358.1 329.5a3.3 3.3 0 1 0 6.6 0a3.3 3.3 0 1 0 -6.6 0M333.8 330.1a3.3 3.3 0 1 0 6.6 0a3.3 3.3 0 1 0 -6.6 0M296.3 323.7a3.3 3.3 0 1 0 6.6 0a3.3 3.3 0 1 0 -6.6 0M301.4 328.6a3.3 3.3 0 1 0 6.6 0a3.3 3.3 0 1 0 -6.6 0M407.8 328.5a3.3 3.3 0 1 0 6.6 0a3.3 3.3 0 1 0 -6.6 0M438.3 335.4a3.3 3.3 0 1 0 6.6 0a3.3 3.3 0 1 0 -6.6 0M438.3 332.6a3.3 3.3 0 1 0 6.6 0a3.3 3.3 0 1 0 -6.6 0M424.5 332.0a3.3 3.3 0 1 0 6.6 0a3.3 3.3 0 1 0 -6.6 0M395.2 326.6a3.3 3.3 0 1 0 6.6 0a3.3 3.3 0 1 0 -6.6 0M433.1 329.0a3.3 3.3 0 1 0 6.6 0a3.3 3.3 0 1 0 -6.6 0M389.7 329.0a3.3 3.3 0 1 0 6.6 0a3.3 3.3 0 1 0 -6.6 0M406.8 330.8a3.3 3.3 0 1 0 6.6 0a3.3 3.3 0 1 0 -6.6 0M299.6 328.8a3.3 3.3 0 1 0 6.6 0a3.3 3.3 0 1 0 -6.6 0M402.2 326.1a3.3 3.3 0 1 0 6.6 0a3.3 3.3 0 1 0 -6.6 0M450.2 330.7a3.3 3.3 0 1 0 6.6 0a3.3 3.3 0 1 0 -6.6 0M347.1 329.8a3.3 3.3 0 1 0 6.6 0a3.3 3.3 0 1 0 -6.6 0M352.0 327.8a3.3 3.3 0 1 0 6.6 0a3.3 3.3 0 1 0 -6.6 0M314.3 334.3a3.3 3.3 0 1 0 6.6 0a3.3 3.3 0 1 0 -6.6 0M455.9 332.6a3.3 3.3 0 1 0 6.6 0a3.3 3.3 0 1 0 -6.6 0M323.6 333.0a3.3 3.3 0 1 0 6.6 0a3.3 3.3 0 1 0 -6.6 0M427.9 331.3a3.3 3.3 0 1 0 6.6 0a3.3 3.3 0 1 0 -6.6 0M364.9 329.4a3.3 3.3 0 1 0 6.6 0a3.3 3.3 0 1 0 -6.6 0M421.8 333.7a3.3 3.3 0 1 0 6.6 0a3.3 3.3 0 1 0 -6.6 0M311.2 331.1a3.3 3.3 0 1 0 6.6 0a3.3 3.3 0 1 0 -6.6 0M318.5 325.2a3.3 3.3 0 1 0 6.6 0a3.3 3.3 0 1 0 -6.6 0M468.8 343.2a3.3 3.3 0 1 0 6.6 0a3.3 3.3 0 1 0 -6.6 0M471.9 343.1a3.3 3.3 0 1 0 6.6 0a3.3 3.3 0 1 0 -6.6 0M475.0 343.1a3.3 3.3 0 1 0 6.6 0a3.3 3.3 0 1 0 -6.6 0M478.0 343.9a3.3 3.3 0 1 0 6.6 0a3.3 3.3 0 1 0 -6.6 0M481.1 344.8a3.3 3.3 0 1 0 6.6 0a3.3 3.3 0 1 0 -6.6 0M484.1 345.5a3.3 3.3 0 1 0 6.6 0a3.3 3.3 0 1 0 -6.6 0M486.7 346.5a3.3 3.3 0 1 0 6.6 0a3.3 3.3 0 1 0 -6.6 0M490.1 343.9a3.3 3.3 0 1 0 6.6 0a3.3 3.3 0 1 0 -6.6 0M493.6 344.0a3.3 3.3 0 1 0 6.6 0a3.3 3.3 0 1 0 -6.6 0M475.3 341.4a3.3 3.3 0 1 0 6.6 0a3.3 3.3 0 1 0 -6.6 0M487.1 345.6a3.3 3.3 0 1 0 6.6 0a3.3 3.3 0 1 0 -6.6 0M475.1 344.5a3.3 3.3 0 1 0 6.6 0a3.3 3.3 0 1 0 -6.6 0M478.4 344.1a3.3 3.3 0 1 0 6.6 0a3.3 3.3 0 1 0 -6.6 0M490.7 346.8a3.3 3.3 0 1 0 6.6 0a3.3 3.3 0 1 0 -6.6 0M489.7 347.5a3.3 3.3 0 1 0 6.6 0a3.3 3.3 0 1 0 -6.6 0M472.7 341.9a3.3 3.3 0 1 0 6.6 0a3.3 3.3 0 1 0 -6.6 0M479.1 345.4a3.3 3.3 0 1 0 6.6 0a3.3 3.3 0 1 0 -6.6 0M483.6 346.6a3.3 3.3 0 1 0 6.6 0a3.3 3.3 0 1 0 -6.6 0M492.7 344.4a3.3 3.3 0 1 0 6.6 0a3.3 3.3 0 1 0 -6.6 0M492.8 341.9a3.3 3.3 0 1 0 6.6 0a3.3 3.3 0 1 0 -6.6 0M477.3 345.4a3.3 3.3 0 1 0 6.6 0a3.3 3.3 0 1 0 -6.6 0M485.9 346.7a3.3 3.3 0 1 0 6.6 0a3.3 3.3 0 1 0 -6.6 0M480.7 343.4a3.3 3.3 0 1 0 6.6 0a3.3 3.3 0 1 0 -6.6 0M484.8 345.4a3.3 3.3 0 1 0 6.6 0a3.3 3.3 0 1 0 -6.6 0M468.4 321.8a3.3 3.3 0 1 0 6.6 0a3.3 3.3 0 1 0 -6.6 0M478.4 330.8a3.3 3.3 0 1 0 6.6 0a3.3 3.3 0 1 0 -6.6 0M405.2 340.1a3.3 3.3 0 1 0 6.6 0a3.3 3.3 0 1 0 -6.6 0M427.0 346.4a3.3 3.3 0 1 0 6.6 0a3.3 3.3 0 1 0 -6.6 0M492.1 343.5a3.3 3.3 0 1 0 6.6 0a3.3 3.3 0 1 0 -6.6 0M494.3 344.7a3.3 3.3 0 1 0 6.6 0a3.3 3.3 0 1 0 -6.6 0M497.5 346.4a3.3 3.3 0 1 0 6.6 0a3.3 3.3 0 1 0 -6.6 0M501.2 343.2a3.3 3.3 0 1 0 6.6 0a3.3 3.3 0 1 0 -6.6 0M504.0 343.9a3.3 3.3 0 1 0 6.6 0a3.3 3.3 0 1 0 -6.6 0M506.4 346.7a3.3 3.3 0 1 0 6.6 0a3.3 3.3 0 1 0 -6.6 0M509.4 345.3a3.3 3.3 0 1 0 6.6 0a3.3 3.3 0 1 0 -6.6 0M512.7 344.7a3.3 3.3 0 1 0 6.6 0a3.3 3.3 0 1 0 -6.6 0M515.7 344.7a3.3 3.3 0 1 0 6.6 0a3.3 3.3 0 1 0 -6.6 0M519.2 343.7a3.3 3.3 0 1 0 6.6 0a3.3 3.3 0 1 0 -6.6 0M522.0 342.8a3.3 3.3 0 1 0 6.6 0a3.3 3.3 0 1 0 -6.6 0M524.8 341.5a3.3 3.3 0 1 0 6.6 0a3.3 3.3 0 1 0 -6.6 0M501.6 341.8a3.3 3.3 0 1 0 6.6 0a3.3 3.3 0 1 0 -6.6 0M513.2 344.6a3.3 3.3 0 1 0 6.6 0a3.3 3.3 0 1 0 -6.6 0M511.8 343.8a3.3 3.3 0 1 0 6.6 0a3.3 3.3 0 1 0 -6.6 0M491.6 341.3a3.3 3.3 0 1 0 6.6 0a3.3 3.3 0 1 0 -6.6 0M505.6 349.4a3.3 3.3 0 1 0 6.6 0a3.3 3.3 0 1 0 -6.6 0M519.7 343.7a3.3 3.3 0 1 0 6.6 0a3.3 3.3 0 1 0 -6.6 0M491.6 342.8a3.3 3.3 0 1 0 6.6 0a3.3 3.3 0 1 0 -6.6 0M512.3 345.8a3.3 3.3 0 1 0 6.6 0a3.3 3.3 0 1 0 -6.6 0M504.0 341.8a3.3 3.3 0 1 0 6.6 0a3.3 3.3 0 1 0 -6.6 0M494.7 347.1a3.3 3.3 0 1 0 6.6 0a3.3 3.3 0 1 0 -6.6 0M495.1 347.6a3.3 3.3 0 1 0 6.6 0a3.3 3.3 0 1 0 -6.6 0M524.7 341.3a3.3 3.3 0 1 0 6.6 0a3.3 3.3 0 1 0 -6.6 0M513.8 347.8a3.3 3.3 0 1 0 6.6 0a3.3 3.3 0 1 0 -6.6 0M519.3 342.8a3.3 3.3 0 1 0 6.6 0a3.3 3.3 0 1 0 -6.6 0M504.1 346.4a3.3 3.3 0 1 0 6.6 0a3.3 3.3 0 1 0 -6.6 0M512.2 346.0a3.3 3.3 0 1 0 6.6 0a3.3 3.3 0 1 0 -6.6 0M522.8 343.5a3.3 3.3 0 1 0 6.6 0a3.3 3.3 0 1 0 -6.6 0M510.4 343.8a3.3 3.3 0 1 0 6.6 0a3.3 3.3 0 1 0 -6.6 0M510.0 348.6a3.3 3.3 0 1 0 6.6 0a3.3 3.3 0 1 0 -6.6 0M507.5 346.8a3.3 3.3 0 1 0 6.6 0a3.3 3.3 0 1 0 -6.6 0M523.4 341.2a3.3 3.3 0 1 0 6.6 0a3.3 3.3 0 1 0 -6.6 0M521.0 344.1a3.3 3.3 0 1 0 6.6 0a3.3 3.3 0 1 0 -6.6 0M492.3 344.8a3.3 3.3 0 1 0 6.6 0a3.3 3.3 0 1 0 -6.6 0M504.2 345.7a3.3 3.3 0 1 0 6.6 0a3.3 3.3 0 1 0 -6.6 0M509.2 345.5a3.3 3.3 0 1 0 6.6 0a3.3 3.3 0 1 0 -6.6 0M523.7 342.2a3.3 3.3 0 1 0 6.6 0a3.3 3.3 0 1 0 -6.6 0M508.7 344.9a3.3 3.3 0 1 0 6.6 0a3.3 3.3 0 1 0 -6.6 0M536.7 346.8a3.3 3.3 0 1 0 6.6 0a3.3 3.3 0 1 0 -6.6 0M539.4 348.0a3.3 3.3 0 1 0 6.6 0a3.3 3.3 0 1 0 -6.6 0M542.8 347.5a3.3 3.3 0 1 0 6.6 0a3.3 3.3 0 1 0 -6.6 0M545.1 347.6a3.3 3.3 0 1 0 6.6 0a3.3 3.3 0 1 0 -6.6 0M548.8 346.4a3.3 3.3 0 1 0 6.6 0a3.3 3.3 0 1 0 -6.6 0M551.7 346.3a3.3 3.3 0 1 0 6.6 0a3.3 3.3 0 1 0 -6.6 0M554.4 347.0a3.3 3.3 0 1 0 6.6 0a3.3 3.3 0 1 0 -6.6 0M556.9 345.8a3.3 3.3 0 1 0 6.6 0a3.3 3.3 0 1 0 -6.6 0M560.0 345.3a3.3 3.3 0 1 0 6.6 0a3.3 3.3 0 1 0 -6.6 0M563.2 345.9a3.3 3.3 0 1 0 6.6 0a3.3 3.3 0 1 0 -6.6 0M566.4 344.4a3.3 3.3 0 1 0 6.6 0a3.3 3.3 0 1 0 -6.6 0M569.6 344.8a3.3 3.3 0 1 0 6.6 0a3.3 3.3 0 1 0 -6.6 0M572.0 345.5a3.3 3.3 0 1 0 6.6 0a3.3 3.3 0 1 0 -6.6 0M575.7 344.9a3.3 3.3 0 1 0 6.6 0a3.3 3.3 0 1 0 -6.6 0M578.8 347.2a3.3 3.3 0 1 0 6.6 0a3.3 3.3 0 1 0 -6.6 0M581.1 346.4a3.3 3.3 0 1 0 6.6 0a3.3 3.3 0 1 0 -6.6 0M584.7 348.6a3.3 3.3 0 1 0 6.6 0a3.3 3.3 0 1 0 -6.6 0M586.9 348.9a3.3 3.3 0 1 0 6.6 0a3.3 3.3 0 1 0 -6.6 0M590.6 349.0a3.3 3.3 0 1 0 6.6 0a3.3 3.3 0 1 0 -6.6 0M593.7 349.6a3.3 3.3 0 1 0 6.6 0a3.3 3.3 0 1 0 -6.6 0M596.2 348.5a3.3 3.3 0 1 0 6.6 0a3.3 3.3 0 1 0 -6.6 0M599.8 345.9a3.3 3.3 0 1 0 6.6 0a3.3 3.3 0 1 0 -6.6 0M602.5 346.6a3.3 3.3 0 1 0 6.6 0a3.3 3.3 0 1 0 -6.6 0M605.7 346.5a3.3 3.3 0 1 0 6.6 0a3.3 3.3 0 1 0 -6.6 0M608.1 345.7a3.3 3.3 0 1 0 6.6 0a3.3 3.3 0 1 0 -6.6 0M611.4 344.3a3.3 3.3 0 1 0 6.6 0a3.3 3.3 0 1 0 -6.6 0M614.7 346.2a3.3 3.3 0 1 0 6.6 0a3.3 3.3 0 1 0 -6.6 0M617.1 342.7a3.3 3.3 0 1 0 6.6 0a3.3 3.3 0 1 0 -6.6 0M620.5 339.9a3.3 3.3 0 1 0 6.6 0a3.3 3.3 0 1 0 -6.6 0M623.6 344.3a3.3 3.3 0 1 0 6.6 0a3.3 3.3 0 1 0 -6.6 0M626.2 344.1a3.3 3.3 0 1 0 6.6 0a3.3 3.3 0 1 0 -6.6 0M629.1 347.3a3.3 3.3 0 1 0 6.6 0a3.3 3.3 0 1 0 -6.6 0M632.3 348.5a3.3 3.3 0 1 0 6.6 0a3.3 3.3 0 1 0 -6.6 0M635.0 347.7a3.3 3.3 0 1 0 6.6 0a3.3 3.3 0 1 0 -6.6 0M638.2 350.9a3.3 3.3 0 1 0 6.6 0a3.3 3.3 0 1 0 -6.6 0M641.0 347.8a3.3 3.3 0 1 0 6.6 0a3.3 3.3 0 1 0 -6.6 0M644.6 346.8a3.3 3.3 0 1 0 6.6 0a3.3 3.3 0 1 0 -6.6 0M647.5 345.4a3.3 3.3 0 1 0 6.6 0a3.3 3.3 0 1 0 -6.6 0M650.1 346.5a3.3 3.3 0 1 0 6.6 0a3.3 3.3 0 1 0 -6.6 0M653.7 344.6a3.3 3.3 0 1 0 6.6 0a3.3 3.3 0 1 0 -6.6 0M656.3 342.9a3.3 3.3 0 1 0 6.6 0a3.3 3.3 0 1 0 -6.6 0M659.2 344.2a3.3 3.3 0 1 0 6.6 0a3.3 3.3 0 1 0 -6.6 0M662.6 346.1a3.3 3.3 0 1 0 6.6 0a3.3 3.3 0 1 0 -6.6 0M665.6 345.9a3.3 3.3 0 1 0 6.6 0a3.3 3.3 0 1 0 -6.6 0M668.5 345.0a3.3 3.3 0 1 0 6.6 0a3.3 3.3 0 1 0 -6.6 0M671.2 345.7a3.3 3.3 0 1 0 6.6 0a3.3 3.3 0 1 0 -6.6 0M674.1 346.9a3.3 3.3 0 1 0 6.6 0a3.3 3.3 0 1 0 -6.6 0M677.1 346.0a3.3 3.3 0 1 0 6.6 0a3.3 3.3 0 1 0 -6.6 0M680.1 346.8a3.3 3.3 0 1 0 6.6 0a3.3 3.3 0 1 0 -6.6 0M683.5 346.0a3.3 3.3 0 1 0 6.6 0a3.3 3.3 0 1 0 -6.6 0M686.2 346.3a3.3 3.3 0 1 0 6.6 0a3.3 3.3 0 1 0 -6.6 0M689.8 346.6a3.3 3.3 0 1 0 6.6 0a3.3 3.3 0 1 0 -6.6 0M692.4 350.2a3.3 3.3 0 1 0 6.6 0a3.3 3.3 0 1 0 -6.6 0M576.4 343.2a3.3 3.3 0 1 0 6.6 0a3.3 3.3 0 1 0 -6.6 0M615.2 339.7a3.3 3.3 0 1 0 6.6 0a3.3 3.3 0 1 0 -6.6 0M692.4 346.8a3.3 3.3 0 1 0 6.6 0a3.3 3.3 0 1 0 -6.6 0M668.5 343.4a3.3 3.3 0 1 0 6.6 0a3.3 3.3 0 1 0 -6.6 0M636.4 352.4a3.3 3.3 0 1 0 6.6 0a3.3 3.3 0 1 0 -6.6 0M584.5 346.7a3.3 3.3 0 1 0 6.6 0a3.3 3.3 0 1 0 -6.6 0M606.3 350.4a3.3 3.3 0 1 0 6.6 0a3.3 3.3 0 1 0 -6.6 0M679.0 348.2a3.3 3.3 0 1 0 6.6 0a3.3 3.3 0 1 0 -6.6 0M557.8 348.1a3.3 3.3 0 1 0 6.6 0a3.3 3.3 0 1 0 -6.6 0M601.2 345.0a3.3 3.3 0 1 0 6.6 0a3.3 3.3 0 1 0 -6.6 0M665.3 348.2a3.3 3.3 0 1 0 6.6 0a3.3 3.3 0 1 0 -6.6 0M569.6 344.2a3.3 3.3 0 1 0 6.6 0a3.3 3.3 0 1 0 -6.6 0M566.9 344.2a3.3 3.3 0 1 0 6.6 0a3.3 3.3 0 1 0 -6.6 0M690.4 346.1a3.3 3.3 0 1 0 6.6 0a3.3 3.3 0 1 0 -6.6 0M601.4 349.7a3.3 3.3 0 1 0 6.6 0a3.3 3.3 0 1 0 -6.6 0M685.2 343.8a3.3 3.3 0 1 0 6.6 0a3.3 3.3 0 1 0 -6.6 0M546.7 347.9a3.3 3.3 0 1 0 6.6 0a3.3 3.3 0 1 0 -6.6 0M606.5 344.7a3.3 3.3 0 1 0 6.6 0a3.3 3.3 0 1 0 -6.6 0M601.9 350.1a3.3 3.3 0 1 0 6.6 0a3.3 3.3 0 1 0 -6.6 0M629.2 346.0a3.3 3.3 0 1 0 6.6 0a3.3 3.3 0 1 0 -6.6 0M575.4 345.5a3.3 3.3 0 1 0 6.6 0a3.3 3.3 0 1 0 -6.6 0M606.4 344.7a3.3 3.3 0 1 0 6.6 0a3.3 3.3 0 1 0 -6.6 0M544.3 347.0a3.3 3.3 0 1 0 6.6 0a3.3 3.3 0 1 0 -6.6 0M659.5 345.2a3.3 3.3 0 1 0 6.6 0a3.3 3.3 0 1 0 -6.6 0M605.6 346.6a3.3 3.3 0 1 0 6.6 0a3.3 3.3 0 1 0 -6.6 0M542.6 349.0a3.3 3.3 0 1 0 6.6 0a3.3 3.3 0 1 0 -6.6 0M644.7 353.3a3.3 3.3 0 1 0 6.6 0a3.3 3.3 0 1 0 -6.6 0M665.4 342.7a3.3 3.3 0 1 0 6.6 0a3.3 3.3 0 1 0 -6.6 0M623.3 338.8a3.3 3.3 0 1 0 6.6 0a3.3 3.3 0 1 0 -6.6 0M612.8 348.5a3.3 3.3 0 1 0 6.6 0a3.3 3.3 0 1 0 -6.6 0M634.7 348.0a3.3 3.3 0 1 0 6.6 0a3.3 3.3 0 1 0 -6.6 0M572.7 342.3a3.3 3.3 0 1 0 6.6 0a3.3 3.3 0 1 0 -6.6 0M664.7 347.3a3.3 3.3 0 1 0 6.6 0a3.3 3.3 0 1 0 -6.6 0M590.8 349.8a3.3 3.3 0 1 0 6.6 0a3.3 3.3 0 1 0 -6.6 0M597.9 344.3a3.3 3.3 0 1 0 6.6 0a3.3 3.3 0 1 0 -6.6 0M689.7 347.8a3.3 3.3 0 1 0 6.6 0a3.3 3.3 0 1 0 -6.6 0M551.7 344.9a3.3 3.3 0 1 0 6.6 0a3.3 3.3 0 1 0 -6.6 0M669.1 345.7a3.3 3.3 0 1 0 6.6 0a3.3 3.3 0 1 0 -6.6 0M673.1 346.4a3.3 3.3 0 1 0 6.6 0a3.3 3.3 0 1 0 -6.6 0M572.6 344.8a3.3 3.3 0 1 0 6.6 0a3.3 3.3 0 1 0 -6.6 0M591.1 350.6a3.3 3.3 0 1 0 6.6 0a3.3 3.3 0 1 0 -6.6 0M691.6 353.2a3.3 3.3 0 1 0 6.6 0a3.3 3.3 0 1 0 -6.6 0M537.4 346.0a3.3 3.3 0 1 0 6.6 0a3.3 3.3 0 1 0 -6.6 0M597.2 344.3a3.3 3.3 0 1 0 6.6 0a3.3 3.3 0 1 0 -6.6 0M659.7 347.3a3.3 3.3 0 1 0 6.6 0a3.3 3.3 0 1 0 -6.6 0M613.2 348.1a3.3 3.3 0 1 0 6.6 0a3.3 3.3 0 1 0 -6.6 0M570.3 341.3a3.3 3.3 0 1 0 6.6 0a3.3 3.3 0 1 0 -6.6 0M576.8 347.9a3.3 3.3 0 1 0 6.6 0a3.3 3.3 0 1 0 -6.6 0M605.9 345.5a3.3 3.3 0 1 0 6.6 0a3.3 3.3 0 1 0 -6.6 0M620.4 343.5a3.3 3.3 0 1 0 6.6 0a3.3 3.3 0 1 0 -6.6 0M567.1 344.1a3.3 3.3 0 1 0 6.6 0a3.3 3.3 0 1 0 -6.6 0M551.0 347.8a3.3 3.3 0 1 0 6.6 0a3.3 3.3 0 1 0 -6.6 0M627.1 347.6a3.3 3.3 0 1 0 6.6 0a3.3 3.3 0 1 0 -6.6 0M554.3 343.0a3.3 3.3 0 1 0 6.6 0a3.3 3.3 0 1 0 -6.6 0M575.6 344.0a3.3 3.3 0 1 0 6.6 0a3.3 3.3 0 1 0 -6.6 0M675.5 346.5a3.3 3.3 0 1 0 6.6 0a3.3 3.3 0 1 0 -6.6 0M645.8 345.7a3.3 3.3 0 1 0 6.6 0a3.3 3.3 0 1 0 -6.6 0M685.9 343.1a3.3 3.3 0 1 0 6.6 0a3.3 3.3 0 1 0 -6.6 0M586.6 347.8a3.3 3.3 0 1 0 6.6 0a3.3 3.3 0 1 0 -6.6 0M677.8 348.4a3.3 3.3 0 1 0 6.6 0a3.3 3.3 0 1 0 -6.6 0M584.7 350.3a3.3 3.3 0 1 0 6.6 0a3.3 3.3 0 1 0 -6.6 0M578.9 344.4a3.3 3.3 0 1 0 6.6 0a3.3 3.3 0 1 0 -6.6 0M593.9 345.9a3.3 3.3 0 1 0 6.6 0a3.3 3.3 0 1 0 -6.6 0M575.4 345.2a3.3 3.3 0 1 0 6.6 0a3.3 3.3 0 1 0 -6.6 0M584.0 349.6a3.3 3.3 0 1 0 6.6 0a3.3 3.3 0 1 0 -6.6 0M650.2 349.8a3.3 3.3 0 1 0 6.6 0a3.3 3.3 0 1 0 -6.6 0M660.9 345.2a3.3 3.3 0 1 0 6.6 0a3.3 3.3 0 1 0 -6.6 0M587.9 350.8a3.3 3.3 0 1 0 6.6 0a3.3 3.3 0 1 0 -6.6 0M632.0 350.6a3.3 3.3 0 1 0 6.6 0a3.3 3.3 0 1 0 -6.6 0M676.0 347.6a3.3 3.3 0 1 0 6.6 0a3.3 3.3 0 1 0 -6.6 0M573.5 347.3a3.3 3.3 0 1 0 6.6 0a3.3 3.3 0 1 0 -6.6 0M591.2 349.8a3.3 3.3 0 1 0 6.6 0a3.3 3.3 0 1 0 -6.6 0M566.2 347.0a3.3 3.3 0 1 0 6.6 0a3.3 3.3 0 1 0 -6.6 0M565.5 342.4a3.3 3.3 0 1 0 6.6 0a3.3 3.3 0 1 0 -6.6 0M554.4 346.4a3.3 3.3 0 1 0 6.6 0a3.3 3.3 0 1 0 -6.6 0M563.4 344.5a3.3 3.3 0 1 0 6.6 0a3.3 3.3 0 1 0 -6.6 0M671.9 344.5a3.3 3.3 0 1 0 6.6 0a3.3 3.3 0 1 0 -6.6 0M656.7 348.9a3.3 3.3 0 1 0 6.6 0a3.3 3.3 0 1 0 -6.6 0M589.2 351.3a3.3 3.3 0 1 0 6.6 0a3.3 3.3 0 1 0 -6.6 0M590.2 349.1a3.3 3.3 0 1 0 6.6 0a3.3 3.3 0 1 0 -6.6 0M622.1 342.5a3.3 3.3 0 1 0 6.6 0a3.3 3.3 0 1 0 -6.6 0M658.2 343.0a3.3 3.3 0 1 0 6.6 0a3.3 3.3 0 1 0 -6.6 0M687.3 347.2a3.3 3.3 0 1 0 6.6 0a3.3 3.3 0 1 0 -6.6 0M650.1 347.6a3.3 3.3 0 1 0 6.6 0a3.3 3.3 0 1 0 -6.6 0M600.7 346.1a3.3 3.3 0 1 0 6.6 0a3.3 3.3 0 1 0 -6.6 0M596.6 349.1a3.3 3.3 0 1 0 6.6 0a3.3 3.3 0 1 0 -6.6 0M583.4 345.0a3.3 3.3 0 1 0 6.6 0a3.3 3.3 0 1 0 -6.6 0M613.2 349.1a3.3 3.3 0 1 0 6.6 0a3.3 3.3 0 1 0 -6.6 0M642.9 354.5a3.3 3.3 0 1 0 6.6 0a3.3 3.3 0 1 0 -6.6 0M685.4 345.0a3.3 3.3 0 1 0 6.6 0a3.3 3.3 0 1 0 -6.6 0M650.8 345.4a3.3 3.3 0 1 0 6.6 0a3.3 3.3 0 1 0 -6.6 0M605.1 349.3a3.3 3.3 0 1 0 6.6 0a3.3 3.3 0 1 0 -6.6 0M579.3 349.5a3.3 3.3 0 1 0 6.6 0a3.3 3.3 0 1 0 -6.6 0M578.6 344.2a3.3 3.3 0 1 0 6.6 0a3.3 3.3 0 1 0 -6.6 0M693.0 343.2a3.3 3.3 0 1 0 6.6 0a3.3 3.3 0 1 0 -6.6 0M677.7 345.1a3.3 3.3 0 1 0 6.6 0a3.3 3.3 0 1 0 -6.6 0M601.2 341.8a3.3 3.3 0 1 0 6.6 0a3.3 3.3 0 1 0 -6.6 0M544.9 347.8a3.3 3.3 0 1 0 6.6 0a3.3 3.3 0 1 0 -6.6 0M668.8 344.7a3.3 3.3 0 1 0 6.6 0a3.3 3.3 0 1 0 -6.6 0M613.7 340.7a3.3 3.3 0 1 0 6.6 0a3.3 3.3 0 1 0 -6.6 0M616.8 342.5a3.3 3.3 0 1 0 6.6 0a3.3 3.3 0 1 0 -6.6 0M602.2 343.3a3.3 3.3 0 1 0 6.6 0a3.3 3.3 0 1 0 -6.6 0M608.5 350.0a3.3 3.3 0 1 0 6.6 0a3.3 3.3 0 1 0 -6.6 0M616.7 348.1a3.3 3.3 0 1 0 6.6 0a3.3 3.3 0 1 0 -6.6 0M569.8 343.5a3.3 3.3 0 1 0 6.6 0a3.3 3.3 0 1 0 -6.6 0M585.3 347.6a3.3 3.3 0 1 0 6.6 0a3.3 3.3 0 1 0 -6.6 0M541.3 349.4a3.3 3.3 0 1 0 6.6 0a3.3 3.3 0 1 0 -6.6 0M646.1 348.2a3.3 3.3 0 1 0 6.6 0a3.3 3.3 0 1 0 -6.6 0M651.0 346.1a3.3 3.3 0 1 0 6.6 0a3.3 3.3 0 1 0 -6.6 0M629.9 344.3a3.3 3.3 0 1 0 6.6 0a3.3 3.3 0 1 0 -6.6 0M666.1 346.4a3.3 3.3 0 1 0 6.6 0a3.3 3.3 0 1 0 -6.6 0M569.1 346.3a3.3 3.3 0 1 0 6.6 0a3.3 3.3 0 1 0 -6.6 0M653.6 347.2a3.3 3.3 0 1 0 6.6 0a3.3 3.3 0 1 0 -6.6 0M624.7 345.9a3.3 3.3 0 1 0 6.6 0a3.3 3.3 0 1 0 -6.6 0M628.9 348.4a3.3 3.3 0 1 0 6.6 0a3.3 3.3 0 1 0 -6.6 0M626.3 344.8a3.3 3.3 0 1 0 6.6 0a3.3 3.3 0 1 0 -6.6 0M602.4 346.4a3.3 3.3 0 1 0 6.6 0a3.3 3.3 0 1 0 -6.6 0M593.0 348.0a3.3 3.3 0 1 0 6.6 0a3.3 3.3 0 1 0 -6.6 0M594.5 343.5a3.3 3.3 0 1 0 6.6 0a3.3 3.3 0 1 0 -6.6 0M649.8 345.7a3.3 3.3 0 1 0 6.6 0a3.3 3.3 0 1 0 -6.6 0M629.4 344.7a3.3 3.3 0 1 0 6.6 0a3.3 3.3 0 1 0 -6.6 0M538.3 348.2a3.3 3.3 0 1 0 6.6 0a3.3 3.3 0 1 0 -6.6 0M609.4 342.6a3.3 3.3 0 1 0 6.6 0a3.3 3.3 0 1 0 -6.6 0M676.9 344.1a3.3 3.3 0 1 0 6.6 0a3.3 3.3 0 1 0 -6.6 0M646.2 346.7a3.3 3.3 0 1 0 6.6 0a3.3 3.3 0 1 0 -6.6 0M572.7 348.6a3.3 3.3 0 1 0 6.6 0a3.3 3.3 0 1 0 -6.6 0M553.9 349.0a3.3 3.3 0 1 0 6.6 0a3.3 3.3 0 1 0 -6.6 0M648.8 343.3a3.3 3.3 0 1 0 6.6 0a3.3 3.3 0 1 0 -6.6 0M545.4 347.1a3.3 3.3 0 1 0 6.6 0a3.3 3.3 0 1 0 -6.6 0M641.0 354.1a3.3 3.3 0 1 0 6.6 0a3.3 3.3 0 1 0 -6.6 0M683.2 344.8a3.3 3.3 0 1 0 6.6 0a3.3 3.3 0 1 0 -6.6 0M602.4 350.0a3.3 3.3 0 1 0 6.6 0a3.3 3.3 0 1 0 -6.6 0M651.2 343.0a3.3 3.3 0 1 0 6.6 0a3.3 3.3 0 1 0 -6.6 0M590.0 347.6a3.3 3.3 0 1 0 6.6 0a3.3 3.3 0 1 0 -6.6 0M605.3 345.5a3.3 3.3 0 1 0 6.6 0a3.3 3.3 0 1 0 -6.6 0M501.7 354.7a3.3 3.3 0 1 0 6.6 0a3.3 3.3 0 1 0 -6.6 0M561.9 330.1a3.3 3.3 0 1 0 6.6 0a3.3 3.3 0 1 0 -6.6 0M590.7 361.4a3.3 3.3 0 1 0 6.6 0a3.3 3.3 0 1 0 -6.6 0M691.7 354.7a3.3 3.3 0 1 0 6.6 0a3.3 3.3 0 1 0 -6.6 0M636.5 351.6a3.3 3.3 0 1 0 6.6 0a3.3 3.3 0 1 0 -6.6 0M640.2 349.6a3.3 3.3 0 1 0 6.6 0a3.3 3.3 0 1 0 -6.6 0M642.8 347.5a3.3 3.3 0 1 0 6.6 0a3.3 3.3 0 1 0 -6.6 0M645.6 347.8a3.3 3.3 0 1 0 6.6 0a3.3 3.3 0 1 0 -6.6 0M648.8 345.7a3.3 3.3 0 1 0 6.6 0a3.3 3.3 0 1 0 -6.6 0M651.2 344.2a3.3 3.3 0 1 0 6.6 0a3.3 3.3 0 1 0 -6.6 0M654.8 343.6a3.3 3.3 0 1 0 6.6 0a3.3 3.3 0 1 0 -6.6 0M657.5 344.7a3.3 3.3 0 1 0 6.6 0a3.3 3.3 0 1 0 -6.6 0M661.1 345.4a3.3 3.3 0 1 0 6.6 0a3.3 3.3 0 1 0 -6.6 0M663.5 346.6a3.3 3.3 0 1 0 6.6 0a3.3 3.3 0 1 0 -6.6 0M666.5 347.0a3.3 3.3 0 1 0 6.6 0a3.3 3.3 0 1 0 -6.6 0M669.4 346.2a3.3 3.3 0 1 0 6.6 0a3.3 3.3 0 1 0 -6.6 0M672.6 347.0a3.3 3.3 0 1 0 6.6 0a3.3 3.3 0 1 0 -6.6 0M675.4 345.5a3.3 3.3 0 1 0 6.6 0a3.3 3.3 0 1 0 -6.6 0M678.3 345.3a3.3 3.3 0 1 0 6.6 0a3.3 3.3 0 1 0 -6.6 0M681.5 345.9a3.3 3.3 0 1 0 6.6 0a3.3 3.3 0 1 0 -6.6 0M685.0 346.4a3.3 3.3 0 1 0 6.6 0a3.3 3.3 0 1 0 -6.6 0M687.7 346.5a3.3 3.3 0 1 0 6.6 0a3.3 3.3 0 1 0 -6.6 0M691.0 349.9a3.3 3.3 0 1 0 6.6 0a3.3 3.3 0 1 0 -6.6 0M660.0 346.3a3.3 3.3 0 1 0 6.6 0a3.3 3.3 0 1 0 -6.6 0M665.6 345.6a3.3 3.3 0 1 0 6.6 0a3.3 3.3 0 1 0 -6.6 0M643.8 349.0a3.3 3.3 0 1 0 6.6 0a3.3 3.3 0 1 0 -6.6 0M662.0 343.8a3.3 3.3 0 1 0 6.6 0a3.3 3.3 0 1 0 -6.6 0M646.1 348.9a3.3 3.3 0 1 0 6.6 0a3.3 3.3 0 1 0 -6.6 0M666.6 347.6a3.3 3.3 0 1 0 6.6 0a3.3 3.3 0 1 0 -6.6 0M660.5 343.6a3.3 3.3 0 1 0 6.6 0a3.3 3.3 0 1 0 -6.6 0M648.1 345.8a3.3 3.3 0 1 0 6.6 0a3.3 3.3 0 1 0 -6.6 0M650.1 344.3a3.3 3.3 0 1 0 6.6 0a3.3 3.3 0 1 0 -6.6 0M655.6 347.4a3.3 3.3 0 1 0 6.6 0a3.3 3.3 0 1 0 -6.6 0M685.8 342.6a3.3 3.3 0 1 0 6.6 0a3.3 3.3 0 1 0 -6.6 0M645.4 347.6a3.3 3.3 0 1 0 6.6 0a3.3 3.3 0 1 0 -6.6 0M682.2 345.9a3.3 3.3 0 1 0 6.6 0a3.3 3.3 0 1 0 -6.6 0M649.8 346.4a3.3 3.3 0 1 0 6.6 0a3.3 3.3 0 1 0 -6.6 0M638.8 351.0a3.3 3.3 0 1 0 6.6 0a3.3 3.3 0 1 0 -6.6 0M642.8 351.2a3.3 3.3 0 1 0 6.6 0a3.3 3.3 0 1 0 -6.6 0M652.8 342.8a3.3 3.3 0 1 0 6.6 0a3.3 3.3 0 1 0 -6.6 0M681.3 347.3a3.3 3.3 0 1 0 6.6 0a3.3 3.3 0 1 0 -6.6 0M652.0 342.3a3.3 3.3 0 1 0 6.6 0a3.3 3.3 0 1 0 -6.6 0M691.3 348.8a3.3 3.3 0 1 0 6.6 0a3.3 3.3 0 1 0 -6.6 0M655.8 344.0a3.3 3.3 0 1 0 6.6 0a3.3 3.3 0 1 0 -6.6 0M688.3 343.9a3.3 3.3 0 1 0 6.6 0a3.3 3.3 0 1 0 -6.6 0M671.4 345.2a3.3 3.3 0 1 0 6.6 0a3.3 3.3 0 1 0 -6.6 0M685.2 344.8a3.3 3.3 0 1 0 6.6 0a3.3 3.3 0 1 0 -6.6 0M649.7 345.7a3.3 3.3 0 1 0 6.6 0a3.3 3.3 0 1 0 -6.6 0M667.2 347.9a3.3 3.3 0 1 0 6.6 0a3.3 3.3 0 1 0 -6.6 0M638.5 346.2a3.3 3.3 0 1 0 6.6 0a3.3 3.3 0 1 0 -6.6 0M644.2 347.4a3.3 3.3 0 1 0 6.6 0a3.3 3.3 0 1 0 -6.6 0M652.7 343.8a3.3 3.3 0 1 0 6.6 0a3.3 3.3 0 1 0 -6.6 0M674.6 344.4a3.3 3.3 0 1 0 6.6 0a3.3 3.3 0 1 0 -6.6 0M673.1 344.4a3.3 3.3 0 1 0 6.6 0a3.3 3.3 0 1 0 -6.6 0M645.4 344.3a3.3 3.3 0 1 0 6.6 0a3.3 3.3 0 1 0 -6.6 0M657.8 344.7a3.3 3.3 0 1 0 6.6 0a3.3 3.3 0 1 0 -6.6 0M658.8 340.7a3.3 3.3 0 1 0 6.6 0a3.3 3.3 0 1 0 -6.6 0M688.5 352.1a3.3 3.3 0 1 0 6.6 0a3.3 3.3 0 1 0 -6.6 0M666.2 345.7a3.3 3.3 0 1 0 6.6 0a3.3 3.3 0 1 0 -6.6 0M650.5 348.2a3.3 3.3 0 1 0 6.6 0a3.3 3.3 0 1 0 -6.6 0M654.2 344.8a3.3 3.3 0 1 0 6.6 0a3.3 3.3 0 1 0 -6.6 0M641.9 354.9a3.3 3.3 0 1 0 6.6 0a3.3 3.3 0 1 0 -6.6 0M685.5 344.3a3.3 3.3 0 1 0 6.6 0a3.3 3.3 0 1 0 -6.6 0M678.8 344.6a3.3 3.3 0 1 0 6.6 0a3.3 3.3 0 1 0 -6.6 0M644.8 349.8a3.3 3.3 0 1 0 6.6 0a3.3 3.3 0 1 0 -6.6 0M655.2 344.6a3.3 3.3 0 1 0 6.6 0a3.3 3.3 0 1 0 -6.6 0M678.0 345.9a3.3 3.3 0 1 0 6.6 0a3.3 3.3 0 1 0 -6.6 0M702.5 345.9a3.3 3.3 0 1 0 6.6 0a3.3 3.3 0 1 0 -6.6 0M705.8 345.5a3.3 3.3 0 1 0 6.6 0a3.3 3.3 0 1 0 -6.6 0M704.3 347.8a3.3 3.3 0 1 0 6.6 0a3.3 3.3 0 1 0 -6.6 0M706.9 343.3a3.3 3.3 0 1 0 6.6 0a3.3 3.3 0 1 0 -6.6 0M703.3 344.7a3.3 3.3 0 1 0 6.6 0a3.3 3.3 0 1 0 -6.6 0M691.1 355.1a3.3 3.3 0 1 0 6.6 0a3.3 3.3 0 1 0 -6.6 0M708.3 357.5a3.3 3.3 0 1 0 6.6 0a3.3 3.3 0 1 0 -6.6 0M79.5 516.8a3.3 3.3 0 1 0 6.6 0a3.3 3.3 0 1 0 -6.6 0M82.6 514.5a3.3 3.3 0 1 0 6.6 0a3.3 3.3 0 1 0 -6.6 0M85.6 511.9a3.3 3.3 0 1 0 6.6 0a3.3 3.3 0 1 0 -6.6 0M88.9 511.4a3.3 3.3 0 1 0 6.6 0a3.3 3.3 0 1 0 -6.6 0M91.1 517.1a3.3 3.3 0 1 0 6.6 0a3.3 3.3 0 1 0 -6.6 0M94.7 516.3a3.3 3.3 0 1 0 6.6 0a3.3 3.3 0 1 0 -6.6 0M97.7 515.6a3.3 3.3 0 1 0 6.6 0a3.3 3.3 0 1 0 -6.6 0M100.1 507.4a3.3 3.3 0 1 0 6.6 0a3.3 3.3 0 1 0 -6.6 0M103.2 514.4a3.3 3.3 0 1 0 6.6 0a3.3 3.3 0 1 0 -6.6 0M106.2 511.2a3.3 3.3 0 1 0 6.6 0a3.3 3.3 0 1 0 -6.6 0M109.8 509.3a3.3 3.3 0 1 0 6.6 0a3.3 3.3 0 1 0 -6.6 0M112.5 513.4a3.3 3.3 0 1 0 6.6 0a3.3 3.3 0 1 0 -6.6 0M105.2 511.2a3.3 3.3 0 1 0 6.6 0a3.3 3.3 0 1 0 -6.6 0M88.7 520.6a3.3 3.3 0 1 0 6.6 0a3.3 3.3 0 1 0 -6.6 0M89.7 518.8a3.3 3.3 0 1 0 6.6 0a3.3 3.3 0 1 0 -6.6 0M91.7 517.4a3.3 3.3 0 1 0 6.6 0a3.3 3.3 0 1 0 -6.6 0M98.7 518.5a3.3 3.3 0 1 0 6.6 0a3.3 3.3 0 1 0 -6.6 0M79.3 517.7a3.3 3.3 0 1 0 6.6 0a3.3 3.3 0 1 0 -6.6 0M108.8 509.2a3.3 3.3 0 1 0 6.6 0a3.3 3.3 0 1 0 -6.6 0M104.0 516.6a3.3 3.3 0 1 0 6.6 0a3.3 3.3 0 1 0 -6.6 0M101.7 505.5a3.3 3.3 0 1 0 6.6 0a3.3 3.3 0 1 0 -6.6 0M81.7 513.4a3.3 3.3 0 1 0 6.6 0a3.3 3.3 0 1 0 -6.6 0M88.1 507.7a3.3 3.3 0 1 0 6.6 0a3.3 3.3 0 1 0 -6.6 0M110.8 511.3a3.3 3.3 0 1 0 6.6 0a3.3 3.3 0 1 0 -6.6 0M89.8 519.3a3.3 3.3 0 1 0 6.6 0a3.3 3.3 0 1 0 -6.6 0M112.5 510.8a3.3 3.3 0 1 0 6.6 0a3.3 3.3 0 1 0 -6.6 0M83.3 510.3a3.3 3.3 0 1 0 6.6 0a3.3 3.3 0 1 0 -6.6 0M93.8 525.7a3.3 3.3 0 1 0 6.6 0a3.3 3.3 0 1 0 -6.6 0M86.8 507.5a3.3 3.3 0 1 0 6.6 0a3.3 3.3 0 1 0 -6.6 0M88.6 515.3a3.3 3.3 0 1 0 6.6 0a3.3 3.3 0 1 0 -6.6 0M89.5 517.1a3.3 3.3 0 1 0 6.6 0a3.3 3.3 0 1 0 -6.6 0M89.5 520.4a3.3 3.3 0 1 0 6.6 0a3.3 3.3 0 1 0 -6.6 0M95.5 508.4a3.3 3.3 0 1 0 6.6 0a3.3 3.3 0 1 0 -6.6 0M80.4 517.0a3.3 3.3 0 1 0 6.6 0a3.3 3.3 0 1 0 -6.6 0M85.5 522.3a3.3 3.3 0 1 0 6.6 0a3.3 3.3 0 1 0 -6.6 0M107.6 507.2a3.3 3.3 0 1 0 6.6 0a3.3 3.3 0 1 0 -6.6 0M88.5 516.0a3.3 3.3 0 1 0 6.6 0a3.3 3.3 0 1 0 -6.6 0M79.2 515.6a3.3 3.3 0 1 0 6.6 0a3.3 3.3 0 1 0 -6.6 0M99.9 518.3a3.3 3.3 0 1 0 6.6 0a3.3 3.3 0 1 0 -6.6 0M90.8 509.9a3.3 3.3 0 1 0 6.6 0a3.3 3.3 0 1 0 -6.6 0M85.2 519.0a3.3 3.3 0 1 0 6.6 0a3.3 3.3 0 1 0 -6.6 0M81.2 517.7a3.3 3.3 0 1 0 6.6 0a3.3 3.3 0 1 0 -6.6 0M113.4 508.1a3.3 3.3 0 1 0 6.6 0a3.3 3.3 0 1 0 -6.6 0M114.0 516.0a3.3 3.3 0 1 0 6.6 0a3.3 3.3 0 1 0 -6.6 0M87.9 521.6a3.3 3.3 0 1 0 6.6 0a3.3 3.3 0 1 0 -6.6 0M88.2 512.4a3.3 3.3 0 1 0 6.6 0a3.3 3.3 0 1 0 -6.6 0M99.2 523.6a3.3 3.3 0 1 0 6.6 0a3.3 3.3 0 1 0 -6.6 0M88.0 508.0a3.3 3.3 0 1 0 6.6 0a3.3 3.3 0 1 0 -6.6 0M112.1 510.2a3.3 3.3 0 1 0 6.6 0a3.3 3.3 0 1 0 -6.6 0M99.4 515.8a3.3 3.3 0 1 0 6.6 0a3.3 3.3 0 1 0 -6.6 0M101.8 520.3a3.3 3.3 0 1 0 6.6 0a3.3 3.3 0 1 0 -6.6 0M81.5 511.2a3.3 3.3 0 1 0 6.6 0a3.3 3.3 0 1 0 -6.6 0M81.7 517.3a3.3 3.3 0 1 0 6.6 0a3.3 3.3 0 1 0 -6.6 0M106.8 515.2a3.3 3.3 0 1 0 6.6 0a3.3 3.3 0 1 0 -6.6 0M88.6 522.9a3.3 3.3 0 1 0 6.6 0a3.3 3.3 0 1 0 -6.6 0M104.6 514.6a3.3 3.3 0 1 0 6.6 0a3.3 3.3 0 1 0 -6.6 0M98.6 512.3a3.3 3.3 0 1 0 6.6 0a3.3 3.3 0 1 0 -6.6 0M79.9 517.1a3.3 3.3 0 1 0 6.6 0a3.3 3.3 0 1 0 -6.6 0M84.1 511.1a3.3 3.3 0 1 0 6.6 0a3.3 3.3 0 1 0 -6.6 0M93.4 512.7a3.3 3.3 0 1 0 6.6 0a3.3 3.3 0 1 0 -6.6 0M79.1 518.1a3.3 3.3 0 1 0 6.6 0a3.3 3.3 0 1 0 -6.6 0M83.6 518.7a3.3 3.3 0 1 0 6.6 0a3.3 3.3 0 1 0 -6.6 0M109.2 504.1a3.3 3.3 0 1 0 6.6 0a3.3 3.3 0 1 0 -6.6 0M105.4 509.6a3.3 3.3 0 1 0 6.6 0a3.3 3.3 0 1 0 -6.6 0M79.7 514.8a3.3 3.3 0 1 0 6.6 0a3.3 3.3 0 1 0 -6.6 0M99.6 501.6a3.3 3.3 0 1 0 6.6 0a3.3 3.3 0 1 0 -6.6 0M103.3 507.8a3.3 3.3 0 1 0 6.6 0a3.3 3.3 0 1 0 -6.6 0M94.4 508.1a3.3 3.3 0 1 0 6.6 0a3.3 3.3 0 1 0 -6.6 0M95.6 510.6a3.3 3.3 0 1 0 6.6 0a3.3 3.3 0 1 0 -6.6 0M103.5 516.9a3.3 3.3 0 1 0 6.6 0a3.3 3.3 0 1 0 -6.6 0M85.5 516.4a3.3 3.3 0 1 0 6.6 0a3.3 3.3 0 1 0 -6.6 0M94.9 511.1a3.3 3.3 0 1 0 6.6 0a3.3 3.3 0 1 0 -6.6 0M102.5 506.0a3.3 3.3 0 1 0 6.6 0a3.3 3.3 0 1 0 -6.6 0M100.4 511.4a3.3 3.3 0 1 0 6.6 0a3.3 3.3 0 1 0 -6.6 0M140.3 517.0a3.3 3.3 0 1 0 6.6 0a3.3 3.3 0 1 0 -6.6 0M143.1 515.0a3.3 3.3 0 1 0 6.6 0a3.3 3.3 0 1 0 -6.6 0M146.1 514.8a3.3 3.3 0 1 0 6.6 0a3.3 3.3 0 1 0 -6.6 0M149.5 512.9a3.3 3.3 0 1 0 6.6 0a3.3 3.3 0 1 0 -6.6 0M152.2 507.3a3.3 3.3 0 1 0 6.6 0a3.3 3.3 0 1 0 -6.6 0M154.9 508.7a3.3 3.3 0 1 0 6.6 0a3.3 3.3 0 1 0 -6.6 0M158.4 507.9a3.3 3.3 0 1 0 6.6 0a3.3 3.3 0 1 0 -6.6 0M161.3 511.2a3.3 3.3 0 1 0 6.6 0a3.3 3.3 0 1 0 -6.6 0M164.0 510.3a3.3 3.3 0 1 0 6.6 0a3.3 3.3 0 1 0 -6.6 0M167.1 508.4a3.3 3.3 0 1 0 6.6 0a3.3 3.3 0 1 0 -6.6 0M170.5 506.0a3.3 3.3 0 1 0 6.6 0a3.3 3.3 0 1 0 -6.6 0M173.0 512.5a3.3 3.3 0 1 0 6.6 0a3.3 3.3 0 1 0 -6.6 0M175.7 510.2a3.3 3.3 0 1 0 6.6 0a3.3 3.3 0 1 0 -6.6 0M179.1 514.7a3.3 3.3 0 1 0 6.6 0a3.3 3.3 0 1 0 -6.6 0M182.3 517.3a3.3 3.3 0 1 0 6.6 0a3.3 3.3 0 1 0 -6.6 0M185.3 512.6a3.3 3.3 0 1 0 6.6 0a3.3 3.3 0 1 0 -6.6 0M187.7 512.8a3.3 3.3 0 1 0 6.6 0a3.3 3.3 0 1 0 -6.6 0M191.1 512.2a3.3 3.3 0 1 0 6.6 0a3.3 3.3 0 1 0 -6.6 0M194.2 514.2a3.3 3.3 0 1 0 6.6 0a3.3 3.3 0 1 0 -6.6 0M196.9 514.4a3.3 3.3 0 1 0 6.6 0a3.3 3.3 0 1 0 -6.6 0M200.1 514.3a3.3 3.3 0 1 0 6.6 0a3.3 3.3 0 1 0 -6.6 0M203.0 511.7a3.3 3.3 0 1 0 6.6 0a3.3 3.3 0 1 0 -6.6 0M206.2 509.2a3.3 3.3 0 1 0 6.6 0a3.3 3.3 0 1 0 -6.6 0M209.4 507.2a3.3 3.3 0 1 0 6.6 0a3.3 3.3 0 1 0 -6.6 0M211.9 509.0a3.3 3.3 0 1 0 6.6 0a3.3 3.3 0 1 0 -6.6 0M215.5 511.1a3.3 3.3 0 1 0 6.6 0a3.3 3.3 0 1 0 -6.6 0M217.7 510.8a3.3 3.3 0 1 0 6.6 0a3.3 3.3 0 1 0 -6.6 0M221.3 514.7a3.3 3.3 0 1 0 6.6 0a3.3 3.3 0 1 0 -6.6 0M223.8 514.7a3.3 3.3 0 1 0 6.6 0a3.3 3.3 0 1 0 -6.6 0M227.0 512.8a3.3 3.3 0 1 0 6.6 0a3.3 3.3 0 1 0 -6.6 0M230.1 512.9a3.3 3.3 0 1 0 6.6 0a3.3 3.3 0 1 0 -6.6 0M233.6 517.2a3.3 3.3 0 1 0 6.6 0a3.3 3.3 0 1 0 -6.6 0M236.6 516.0a3.3 3.3 0 1 0 6.6 0a3.3 3.3 0 1 0 -6.6 0M239.4 510.5a3.3 3.3 0 1 0 6.6 0a3.3 3.3 0 1 0 -6.6 0M241.7 516.0a3.3 3.3 0 1 0 6.6 0a3.3 3.3 0 1 0 -6.6 0M245.3 514.4a3.3 3.3 0 1 0 6.6 0a3.3 3.3 0 1 0 -6.6 0M248.0 512.0a3.3 3.3 0 1 0 6.6 0a3.3 3.3 0 1 0 -6.6 0M251.6 514.3a3.3 3.3 0 1 0 6.6 0a3.3 3.3 0 1 0 -6.6 0M253.7 513.4a3.3 3.3 0 1 0 6.6 0a3.3 3.3 0 1 0 -6.6 0M257.0 511.6a3.3 3.3 0 1 0 6.6 0a3.3 3.3 0 1 0 -6.6 0M260.6 519.2a3.3 3.3 0 1 0 6.6 0a3.3 3.3 0 1 0 -6.6 0M263.5 512.3a3.3 3.3 0 1 0 6.6 0a3.3 3.3 0 1 0 -6.6 0M266.1 512.3a3.3 3.3 0 1 0 6.6 0a3.3 3.3 0 1 0 -6.6 0M269.4 518.5a3.3 3.3 0 1 0 6.6 0a3.3 3.3 0 1 0 -6.6 0M272.4 519.4a3.3 3.3 0 1 0 6.6 0a3.3 3.3 0 1 0 -6.6 0M274.8 513.2a3.3 3.3 0 1 0 6.6 0a3.3 3.3 0 1 0 -6.6 0M277.7 522.5a3.3 3.3 0 1 0 6.6 0a3.3 3.3 0 1 0 -6.6 0M281.5 520.1a3.3 3.3 0 1 0 6.6 0a3.3 3.3 0 1 0 -6.6 0M173.2 503.2a3.3 3.3 0 1 0 6.6 0a3.3 3.3 0 1 0 -6.6 0M139.9 517.7a3.3 3.3 0 1 0 6.6 0a3.3 3.3 0 1 0 -6.6 0M254.3 521.9a3.3 3.3 0 1 0 6.6 0a3.3 3.3 0 1 0 -6.6 0M250.4 514.4a3.3 3.3 0 1 0 6.6 0a3.3 3.3 0 1 0 -6.6 0M247.0 510.9a3.3 3.3 0 1 0 6.6 0a3.3 3.3 0 1 0 -6.6 0M188.5 510.9a3.3 3.3 0 1 0 6.6 0a3.3 3.3 0 1 0 -6.6 0M158.0 510.4a3.3 3.3 0 1 0 6.6 0a3.3 3.3 0 1 0 -6.6 0M214.0 508.3a3.3 3.3 0 1 0 6.6 0a3.3 3.3 0 1 0 -6.6 0M246.1 515.7a3.3 3.3 0 1 0 6.6 0a3.3 3.3 0 1 0 -6.6 0M261.0 515.9a3.3 3.3 0 1 0 6.6 0a3.3 3.3 0 1 0 -6.6 0M220.7 506.9a3.3 3.3 0 1 0 6.6 0a3.3 3.3 0 1 0 -6.6 0M184.2 510.1a3.3 3.3 0 1 0 6.6 0a3.3 3.3 0 1 0 -6.6 0M242.2 510.6a3.3 3.3 0 1 0 6.6 0a3.3 3.3 0 1 0 -6.6 0M242.9 511.1a3.3 3.3 0 1 0 6.6 0a3.3 3.3 0 1 0 -6.6 0M220.4 509.4a3.3 3.3 0 1 0 6.6 0a3.3 3.3 0 1 0 -6.6 0M160.9 513.3a3.3 3.3 0 1 0 6.6 0a3.3 3.3 0 1 0 -6.6 0M164.3 508.2a3.3 3.3 0 1 0 6.6 0a3.3 3.3 0 1 0 -6.6 0M148.1 513.3a3.3 3.3 0 1 0 6.6 0a3.3 3.3 0 1 0 -6.6 0M208.5 512.5a3.3 3.3 0 1 0 6.6 0a3.3 3.3 0 1 0 -6.6 0M223.3 505.6a3.3 3.3 0 1 0 6.6 0a3.3 3.3 0 1 0 -6.6 0M279.9 507.8a3.3 3.3 0 1 0 6.6 0a3.3 3.3 0 1 0 -6.6 0M171.4 499.1a3.3 3.3 0 1 0 6.6 0a3.3 3.3 0 1 0 -6.6 0M210.3 507.1a3.3 3.3 0 1 0 6.6 0a3.3 3.3 0 1 0 -6.6 0M194.3 508.1a3.3 3.3 0 1 0 6.6 0a3.3 3.3 0 1 0 -6.6 0M176.8 510.0a3.3 3.3 0 1 0 6.6 0a3.3 3.3 0 1 0 -6.6 0M198.9 510.1a3.3 3.3 0 1 0 6.6 0a3.3 3.3 0 1 0 -6.6 0M142.4 518.5a3.3 3.3 0 1 0 6.6 0a3.3 3.3 0 1 0 -6.6 0M140.1 519.5a3.3 3.3 0 1 0 6.6 0a3.3 3.3 0 1 0 -6.6 0M205.0 514.6a3.3 3.3 0 1 0 6.6 0a3.3 3.3 0 1 0 -6.6 0M267.1 515.7a3.3 3.3 0 1 0 6.6 0a3.3 3.3 0 1 0 -6.6 0M219.9 510.1a3.3 3.3 0 1 0 6.6 0a3.3 3.3 0 1 0 -6.6 0M228.1 515.8a3.3 3.3 0 1 0 6.6 0a3.3 3.3 0 1 0 -6.6 0M193.7 508.2a3.3 3.3 0 1 0 6.6 0a3.3 3.3 0 1 0 -6.6 0M259.4 515.4a3.3 3.3 0 1 0 6.6 0a3.3 3.3 0 1 0 -6.6 0M249.7 511.8a3.3 3.3 0 1 0 6.6 0a3.3 3.3 0 1 0 -6.6 0M168.3 513.6a3.3 3.3 0 1 0 6.6 0a3.3 3.3 0 1 0 -6.6 0M194.2 512.2a3.3 3.3 0 1 0 6.6 0a3.3 3.3 0 1 0 -6.6 0M235.9 512.3a3.3 3.3 0 1 0 6.6 0a3.3 3.3 0 1 0 -6.6 0M154.0 504.4a3.3 3.3 0 1 0 6.6 0a3.3 3.3 0 1 0 -6.6 0M179.4 514.8a3.3 3.3 0 1 0 6.6 0a3.3 3.3 0 1 0 -6.6 0M261.7 513.1a3.3 3.3 0 1 0 6.6 0a3.3 3.3 0 1 0 -6.6 0M163.9 504.3a3.3 3.3 0 1 0 6.6 0a3.3 3.3 0 1 0 -6.6 0M150.7 511.1a3.3 3.3 0 1 0 6.6 0a3.3 3.3 0 1 0 -6.6 0M233.5 509.9a3.3 3.3 0 1 0 6.6 0a3.3 3.3 0 1 0 -6.6 0M224.2 505.5a3.3 3.3 0 1 0 6.6 0a3.3 3.3 0 1 0 -6.6 0M153.1 508.5a3.3 3.3 0 1 0 6.6 0a3.3 3.3 0 1 0 -6.6 0M151.1 508.2a3.3 3.3 0 1 0 6.6 0a3.3 3.3 0 1 0 -6.6 0M215.4 517.2a3.3 3.3 0 1 0 6.6 0a3.3 3.3 0 1 0 -6.6 0M196.2 513.3a3.3 3.3 0 1 0 6.6 0a3.3 3.3 0 1 0 -6.6 0M259.7 519.7a3.3 3.3 0 1 0 6.6 0a3.3 3.3 0 1 0 -6.6 0M242.2 525.4a3.3 3.3 0 1 0 6.6 0a3.3 3.3 0 1 0 -6.6 0M248.3 514.7a3.3 3.3 0 1 0 6.6 0a3.3 3.3 0 1 0 -6.6 0M202.5 514.7a3.3 3.3 0 1 0 6.6 0a3.3 3.3 0 1 0 -6.6 0M171.3 507.2a3.3 3.3 0 1 0 6.6 0a3.3 3.3 0 1 0 -6.6 0M240.7 526.1a3.3 3.3 0 1 0 6.6 0a3.3 3.3 0 1 0 -6.6 0M254.0 517.2a3.3 3.3 0 1 0 6.6 0a3.3 3.3 0 1 0 -6.6 0M210.5 508.3a3.3 3.3 0 1 0 6.6 0a3.3 3.3 0 1 0 -6.6 0M143.4 516.6a3.3 3.3 0 1 0 6.6 0a3.3 3.3 0 1 0 -6.6 0M183.7 514.9a3.3 3.3 0 1 0 6.6 0a3.3 3.3 0 1 0 -6.6 0M149.7 510.3a3.3 3.3 0 1 0 6.6 0a3.3 3.3 0 1 0 -6.6 0M189.4 515.4a3.3 3.3 0 1 0 6.6 0a3.3 3.3 0 1 0 -6.6 0M195.2 507.9a3.3 3.3 0 1 0 6.6 0a3.3 3.3 0 1 0 -6.6 0M219.6 508.7a3.3 3.3 0 1 0 6.6 0a3.3 3.3 0 1 0 -6.6 0M185.3 517.5a3.3 3.3 0 1 0 6.6 0a3.3 3.3 0 1 0 -6.6 0M140.4 514.8a3.3 3.3 0 1 0 6.6 0a3.3 3.3 0 1 0 -6.6 0M192.4 512.9a3.3 3.3 0 1 0 6.6 0a3.3 3.3 0 1 0 -6.6 0M277.7 520.4a3.3 3.3 0 1 0 6.6 0a3.3 3.3 0 1 0 -6.6 0M277.4 524.9a3.3 3.3 0 1 0 6.6 0a3.3 3.3 0 1 0 -6.6 0M187.5 520.2a3.3 3.3 0 1 0 6.6 0a3.3 3.3 0 1 0 -6.6 0M216.1 505.6a3.3 3.3 0 1 0 6.6 0a3.3 3.3 0 1 0 -6.6 0M246.2 515.7a3.3 3.3 0 1 0 6.6 0a3.3 3.3 0 1 0 -6.6 0M180.2 510.9a3.3 3.3 0 1 0 6.6 0a3.3 3.3 0 1 0 -6.6 0M267.5 510.9a3.3 3.3 0 1 0 6.6 0a3.3 3.3 0 1 0 -6.6 0M209.3 503.7a3.3 3.3 0 1 0 6.6 0a3.3 3.3 0 1 0 -6.6 0M253.5 513.2a3.3 3.3 0 1 0 6.6 0a3.3 3.3 0 1 0 -6.6 0M251.6 513.2a3.3 3.3 0 1 0 6.6 0a3.3 3.3 0 1 0 -6.6 0M266.9 522.2a3.3 3.3 0 1 0 6.6 0a3.3 3.3 0 1 0 -6.6 0M207.1 508.0a3.3 3.3 0 1 0 6.6 0a3.3 3.3 0 1 0 -6.6 0M161.2 504.1a3.3 3.3 0 1 0 6.6 0a3.3 3.3 0 1 0 -6.6 0M163.1 511.9a3.3 3.3 0 1 0 6.6 0a3.3 3.3 0 1 0 -6.6 0M161.2 508.5a3.3 3.3 0 1 0 6.6 0a3.3 3.3 0 1 0 -6.6 0M155.1 511.6a3.3 3.3 0 1 0 6.6 0a3.3 3.3 0 1 0 -6.6 0M243.1 515.0a3.3 3.3 0 1 0 6.6 0a3.3 3.3 0 1 0 -6.6 0M262.8 512.1a3.3 3.3 0 1 0 6.6 0a3.3 3.3 0 1 0 -6.6 0M264.3 512.4a3.3 3.3 0 1 0 6.6 0a3.3 3.3 0 1 0 -6.6 0M159.2 510.0a3.3 3.3 0 1 0 6.6 0a3.3 3.3 0 1 0 -6.6 0M205.5 506.2a3.3 3.3 0 1 0 6.6 0a3.3 3.3 0 1 0 -6.6 0M242.3 509.6a3.3 3.3 0 1 0 6.6 0a3.3 3.3 0 1 0 -6.6 0M258.9 526.8a3.3 3.3 0 1 0 6.6 0a3.3 3.3 0 1 0 -6.6 0M149.5 511.9a3.3 3.3 0 1 0 6.6 0a3.3 3.3 0 1 0 -6.6 0M176.4 511.8a3.3 3.3 0 1 0 6.6 0a3.3 3.3 0 1 0 -6.6 0M212.0 513.6a3.3 3.3 0 1 0 6.6 0a3.3 3.3 0 1 0 -6.6 0M154.6 508.2a3.3 3.3 0 1 0 6.6 0a3.3 3.3 0 1 0 -6.6 0M252.0 511.1a3.3 3.3 0 1 0 6.6 0a3.3 3.3 0 1 0 -6.6 0M280.5 521.8a3.3 3.3 0 1 0 6.6 0a3.3 3.3 0 1 0 -6.6 0M153.2 509.6a3.3 3.3 0 1 0 6.6 0a3.3 3.3 0 1 0 -6.6 0M171.6 500.4a3.3 3.3 0 1 0 6.6 0a3.3 3.3 0 1 0 -6.6 0M152.0 507.0a3.3 3.3 0 1 0 6.6 0a3.3 3.3 0 1 0 -6.6 0M278.6 523.2a3.3 3.3 0 1 0 6.6 0a3.3 3.3 0 1 0 -6.6 0M144.6 516.1a3.3 3.3 0 1 0 6.6 0a3.3 3.3 0 1 0 -6.6 0M153.7 507.7a3.3 3.3 0 1 0 6.6 0a3.3 3.3 0 1 0 -6.6 0M186.5 513.5a3.3 3.3 0 1 0 6.6 0a3.3 3.3 0 1 0 -6.6 0M154.8 506.4a3.3 3.3 0 1 0 6.6 0a3.3 3.3 0 1 0 -6.6 0M230.7 523.2a3.3 3.3 0 1 0 6.6 0a3.3 3.3 0 1 0 -6.6 0M157.4 510.3a3.3 3.3 0 1 0 6.6 0a3.3 3.3 0 1 0 -6.6 0M282.0 512.1a3.3 3.3 0 1 0 6.6 0a3.3 3.3 0 1 0 -6.6 0M170.5 509.5a3.3 3.3 0 1 0 6.6 0a3.3 3.3 0 1 0 -6.6 0M228.9 501.6a3.3 3.3 0 1 0 6.6 0a3.3 3.3 0 1 0 -6.6 0M278.8 514.4a3.3 3.3 0 1 0 6.6 0a3.3 3.3 0 1 0 -6.6 0M263.6 521.6a3.3 3.3 0 1 0 6.6 0a3.3 3.3 0 1 0 -6.6 0M267.9 517.5a3.3 3.3 0 1 0 6.6 0a3.3 3.3 0 1 0 -6.6 0M140.5 518.7a3.3 3.3 0 1 0 6.6 0a3.3 3.3 0 1 0 -6.6 0M213.6 506.7a3.3 3.3 0 1 0 6.6 0a3.3 3.3 0 1 0 -6.6 0M233.0 508.2a3.3 3.3 0 1 0 6.6 0a3.3 3.3 0 1 0 -6.6 0M175.5 509.7a3.3 3.3 0 1 0 6.6 0a3.3 3.3 0 1 0 -6.6 0M277.5 513.5a3.3 3.3 0 1 0 6.6 0a3.3 3.3 0 1 0 -6.6 0M220.5 510.6a3.3 3.3 0 1 0 6.6 0a3.3 3.3 0 1 0 -6.6 0M222.2 510.7a3.3 3.3 0 1 0 6.6 0a3.3 3.3 0 1 0 -6.6 0M222.9 512.2a3.3 3.3 0 1 0 6.6 0a3.3 3.3 0 1 0 -6.6 0M241.6 513.3a3.3 3.3 0 1 0 6.6 0a3.3 3.3 0 1 0 -6.6 0M184.6 518.6a3.3 3.3 0 1 0 6.6 0a3.3 3.3 0 1 0 -6.6 0M206.5 506.3a3.3 3.3 0 1 0 6.6 0a3.3 3.3 0 1 0 -6.6 0M212.6 506.4a3.3 3.3 0 1 0 6.6 0a3.3 3.3 0 1 0 -6.6 0M249.1 511.8a3.3 3.3 0 1 0 6.6 0a3.3 3.3 0 1 0 -6.6 0M175.9 519.4a3.3 3.3 0 1 0 6.6 0a3.3 3.3 0 1 0 -6.6 0M175.1 512.4a3.3 3.3 0 1 0 6.6 0a3.3 3.3 0 1 0 -6.6 0M143.2 516.4a3.3 3.3 0 1 0 6.6 0a3.3 3.3 0 1 0 -6.6 0M202.8 506.8a3.3 3.3 0 1 0 6.6 0a3.3 3.3 0 1 0 -6.6 0M252.2 510.9a3.3 3.3 0 1 0 6.6 0a3.3 3.3 0 1 0 -6.6 0M170.7 501.4a3.3 3.3 0 1 0 6.6 0a3.3 3.3 0 1 0 -6.6 0M231.2 520.1a3.3 3.3 0 1 0 6.6 0a3.3 3.3 0 1 0 -6.6 0M218.9 512.3a3.3 3.3 0 1 0 6.6 0a3.3 3.3 0 1 0 -6.6 0M179.9 519.0a3.3 3.3 0 1 0 6.6 0a3.3 3.3 0 1 0 -6.6 0M209.4 508.4a3.3 3.3 0 1 0 6.6 0a3.3 3.3 0 1 0 -6.6 0M167.9 507.6a3.3 3.3 0 1 0 6.6 0a3.3 3.3 0 1 0 -6.6 0M272.2 501.7a3.3 3.3 0 1 0 6.6 0a3.3 3.3 0 1 0 -6.6 0M239.9 516.0a3.3 3.3 0 1 0 6.6 0a3.3 3.3 0 1 0 -6.6 0M211.2 509.5a3.3 3.3 0 1 0 6.6 0a3.3 3.3 0 1 0 -6.6 0M259.1 505.4a3.3 3.3 0 1 0 6.6 0a3.3 3.3 0 1 0 -6.6 0M269.0 506.6a3.3 3.3 0 1 0 6.6 0a3.3 3.3 0 1 0 -6.6 0M240.7 519.8a3.3 3.3 0 1 0 6.6 0a3.3 3.3 0 1 0 -6.6 0M255.1 514.2a3.3 3.3 0 1 0 6.6 0a3.3 3.3 0 1 0 -6.6 0M255.5 509.3a3.3 3.3 0 1 0 6.6 0a3.3 3.3 0 1 0 -6.6 0M263.4 504.7a3.3 3.3 0 1 0 6.6 0a3.3 3.3 0 1 0 -6.6 0M219.3 517.5a3.3 3.3 0 1 0 6.6 0a3.3 3.3 0 1 0 -6.6 0M154.7 505.8a3.3 3.3 0 1 0 6.6 0a3.3 3.3 0 1 0 -6.6 0M187.1 514.7a3.3 3.3 0 1 0 6.6 0a3.3 3.3 0 1 0 -6.6 0M146.3 518.0a3.3 3.3 0 1 0 6.6 0a3.3 3.3 0 1 0 -6.6 0M249.5 518.9a3.3 3.3 0 1 0 6.6 0a3.3 3.3 0 1 0 -6.6 0M217.3 507.5a3.3 3.3 0 1 0 6.6 0a3.3 3.3 0 1 0 -6.6 0M240.3 521.6a3.3 3.3 0 1 0 6.6 0a3.3 3.3 0 1 0 -6.6 0M216.8 510.0a3.3 3.3 0 1 0 6.6 0a3.3 3.3 0 1 0 -6.6 0M234.4 511.4a3.3 3.3 0 1 0 6.6 0a3.3 3.3 0 1 0 -6.6 0M199.8 506.5a3.3 3.3 0 1 0 6.6 0a3.3 3.3 0 1 0 -6.6 0M208.9 503.9a3.3 3.3 0 1 0 6.6 0a3.3 3.3 0 1 0 -6.6 0M278.6 524.3a3.3 3.3 0 1 0 6.6 0a3.3 3.3 0 1 0 -6.6 0M183.4 515.0a3.3 3.3 0 1 0 6.6 0a3.3 3.3 0 1 0 -6.6 0M264.0 513.7a3.3 3.3 0 1 0 6.6 0a3.3 3.3 0 1 0 -6.6 0M228.4 515.5a3.3 3.3 0 1 0 6.6 0a3.3 3.3 0 1 0 -6.6 0M214.3 513.4a3.3 3.3 0 1 0 6.6 0a3.3 3.3 0 1 0 -6.6 0M158.1 512.3a3.3 3.3 0 1 0 6.6 0a3.3 3.3 0 1 0 -6.6 0M220.9 515.6a3.3 3.3 0 1 0 6.6 0a3.3 3.3 0 1 0 -6.6 0M210.1 510.9a3.3 3.3 0 1 0 6.6 0a3.3 3.3 0 1 0 -6.6 0M142.8 512.0a3.3 3.3 0 1 0 6.6 0a3.3 3.3 0 1 0 -6.6 0M282.0 517.4a3.3 3.3 0 1 0 6.6 0a3.3 3.3 0 1 0 -6.6 0M261.9 521.5a3.3 3.3 0 1 0 6.6 0a3.3 3.3 0 1 0 -6.6 0M232.8 514.2a3.3 3.3 0 1 0 6.6 0a3.3 3.3 0 1 0 -6.6 0M258.9 519.8a3.3 3.3 0 1 0 6.6 0a3.3 3.3 0 1 0 -6.6 0M259.7 514.4a3.3 3.3 0 1 0 6.6 0a3.3 3.3 0 1 0 -6.6 0M191.4 518.7a3.3 3.3 0 1 0 6.6 0a3.3 3.3 0 1 0 -6.6 0M237.7 514.5a3.3 3.3 0 1 0 6.6 0a3.3 3.3 0 1 0 -6.6 0M265.5 514.2a3.3 3.3 0 1 0 6.6 0a3.3 3.3 0 1 0 -6.6 0M237.8 513.7a3.3 3.3 0 1 0 6.6 0a3.3 3.3 0 1 0 -6.6 0M176.7 513.5a3.3 3.3 0 1 0 6.6 0a3.3 3.3 0 1 0 -6.6 0M188.4 522.3a3.3 3.3 0 1 0 6.6 0a3.3 3.3 0 1 0 -6.6 0M179.2 508.7a3.3 3.3 0 1 0 6.6 0a3.3 3.3 0 1 0 -6.6 0M191.0 514.6a3.3 3.3 0 1 0 6.6 0a3.3 3.3 0 1 0 -6.6 0M276.5 513.1a3.3 3.3 0 1 0 6.6 0a3.3 3.3 0 1 0 -6.6 0M272.9 524.0a3.3 3.3 0 1 0 6.6 0a3.3 3.3 0 1 0 -6.6 0M262.1 524.0a3.3 3.3 0 1 0 6.6 0a3.3 3.3 0 1 0 -6.6 0M232.1 512.7a3.3 3.3 0 1 0 6.6 0a3.3 3.3 0 1 0 -6.6 0M226.7 518.5a3.3 3.3 0 1 0 6.6 0a3.3 3.3 0 1 0 -6.6 0M267.7 504.2a3.3 3.3 0 1 0 6.6 0a3.3 3.3 0 1 0 -6.6 0M251.0 511.3a3.3 3.3 0 1 0 6.6 0a3.3 3.3 0 1 0 -6.6 0M150.5 510.0a3.3 3.3 0 1 0 6.6 0a3.3 3.3 0 1 0 -6.6 0M278.8 521.9a3.3 3.3 0 1 0 6.6 0a3.3 3.3 0 1 0 -6.6 0M148.5 514.6a3.3 3.3 0 1 0 6.6 0a3.3 3.3 0 1 0 -6.6 0M162.2 514.9a3.3 3.3 0 1 0 6.6 0a3.3 3.3 0 1 0 -6.6 0M252.7 517.4a3.3 3.3 0 1 0 6.6 0a3.3 3.3 0 1 0 -6.6 0M257.5 518.7a3.3 3.3 0 1 0 6.6 0a3.3 3.3 0 1 0 -6.6 0M165.2 506.0a3.3 3.3 0 1 0 6.6 0a3.3 3.3 0 1 0 -6.6 0M262.5 520.0a3.3 3.3 0 1 0 6.6 0a3.3 3.3 0 1 0 -6.6 0M148.1 512.0a3.3 3.3 0 1 0 6.6 0a3.3 3.3 0 1 0 -6.6 0M150.7 507.8a3.3 3.3 0 1 0 6.6 0a3.3 3.3 0 1 0 -6.6 0M261.9 518.6a3.3 3.3 0 1 0 6.6 0a3.3 3.3 0 1 0 -6.6 0M202.6 516.7a3.3 3.3 0 1 0 6.6 0a3.3 3.3 0 1 0 -6.6 0M179.3 513.1a3.3 3.3 0 1 0 6.6 0a3.3 3.3 0 1 0 -6.6 0M159.8 509.1a3.3 3.3 0 1 0 6.6 0a3.3 3.3 0 1 0 -6.6 0M253.9 508.0a3.3 3.3 0 1 0 6.6 0a3.3 3.3 0 1 0 -6.6 0M273.4 524.8a3.3 3.3 0 1 0 6.6 0a3.3 3.3 0 1 0 -6.6 0M146.1 511.1a3.3 3.3 0 1 0 6.6 0a3.3 3.3 0 1 0 -6.6 0M199.9 510.5a3.3 3.3 0 1 0 6.6 0a3.3 3.3 0 1 0 -6.6 0M197.2 510.1a3.3 3.3 0 1 0 6.6 0a3.3 3.3 0 1 0 -6.6 0M275.9 511.2a3.3 3.3 0 1 0 6.6 0a3.3 3.3 0 1 0 -6.6 0M218.1 515.1a3.3 3.3 0 1 0 6.6 0a3.3 3.3 0 1 0 -6.6 0M145.3 517.0a3.3 3.3 0 1 0 6.6 0a3.3 3.3 0 1 0 -6.6 0M182.6 513.1a3.3 3.3 0 1 0 6.6 0a3.3 3.3 0 1 0 -6.6 0M215.9 513.8a3.3 3.3 0 1 0 6.6 0a3.3 3.3 0 1 0 -6.6 0M198.5 510.2a3.3 3.3 0 1 0 6.6 0a3.3 3.3 0 1 0 -6.6 0M219.3 513.3a3.3 3.3 0 1 0 6.6 0a3.3 3.3 0 1 0 -6.6 0M151.9 505.5a3.3 3.3 0 1 0 6.6 0a3.3 3.3 0 1 0 -6.6 0M165.9 509.5a3.3 3.3 0 1 0 6.6 0a3.3 3.3 0 1 0 -6.6 0M188.4 510.8a3.3 3.3 0 1 0 6.6 0a3.3 3.3 0 1 0 -6.6 0M165.8 509.7a3.3 3.3 0 1 0 6.6 0a3.3 3.3 0 1 0 -6.6 0M222.4 517.1a3.3 3.3 0 1 0 6.6 0a3.3 3.3 0 1 0 -6.6 0M236.3 515.8a3.3 3.3 0 1 0 6.6 0a3.3 3.3 0 1 0 -6.6 0M233.5 508.0a3.3 3.3 0 1 0 6.6 0a3.3 3.3 0 1 0 -6.6 0M191.8 514.3a3.3 3.3 0 1 0 6.6 0a3.3 3.3 0 1 0 -6.6 0M152.3 508.7a3.3 3.3 0 1 0 6.6 0a3.3 3.3 0 1 0 -6.6 0M192.9 511.1a3.3 3.3 0 1 0 6.6 0a3.3 3.3 0 1 0 -6.6 0M169.7 510.5a3.3 3.3 0 1 0 6.6 0a3.3 3.3 0 1 0 -6.6 0M212.5 518.6a3.3 3.3 0 1 0 6.6 0a3.3 3.3 0 1 0 -6.6 0M274.7 505.8a3.3 3.3 0 1 0 6.6 0a3.3 3.3 0 1 0 -6.6 0M279.2 522.7a3.3 3.3 0 1 0 6.6 0a3.3 3.3 0 1 0 -6.6 0M202.0 507.1a3.3 3.3 0 1 0 6.6 0a3.3 3.3 0 1 0 -6.6 0M218.0 507.0a3.3 3.3 0 1 0 6.6 0a3.3 3.3 0 1 0 -6.6 0M264.1 523.3a3.3 3.3 0 1 0 6.6 0a3.3 3.3 0 1 0 -6.6 0M181.7 512.6a3.3 3.3 0 1 0 6.6 0a3.3 3.3 0 1 0 -6.6 0M258.4 517.8a3.3 3.3 0 1 0 6.6 0a3.3 3.3 0 1 0 -6.6 0M219.0 506.8a3.3 3.3 0 1 0 6.6 0a3.3 3.3 0 1 0 -6.6 0M209.3 514.5a3.3 3.3 0 1 0 6.6 0a3.3 3.3 0 1 0 -6.6 0M168.7 505.4a3.3 3.3 0 1 0 6.6 0a3.3 3.3 0 1 0 -6.6 0M254.4 516.6a3.3 3.3 0 1 0 6.6 0a3.3 3.3 0 1 0 -6.6 0M93.0 526.4a3.3 3.3 0 1 0 6.6 0a3.3 3.3 0 1 0 -6.6 0M101.8 522.6a3.3 3.3 0 1 0 6.6 0a3.3 3.3 0 1 0 -6.6 0M176.9 526.9a3.3 3.3 0 1 0 6.6 0a3.3 3.3 0 1 0 -6.6 0M190.2 528.9a3.3 3.3 0 1 0 6.6 0a3.3 3.3 0 1 0 -6.6 0M213.3 526.4a3.3 3.3 0 1 0 6.6 0a3.3 3.3 0 1 0 -6.6 0M236.6 532.6a3.3 3.3 0 1 0 6.6 0a3.3 3.3 0 1 0 -6.6 0M247.1 531.4a3.3 3.3 0 1 0 6.6 0a3.3 3.3 0 1 0 -6.6 0M144.4 523.4a3.3 3.3 0 1 0 6.6 0a3.3 3.3 0 1 0 -6.6 0M281.2 515.5a3.3 3.3 0 1 0 6.6 0a3.3 3.3 0 1 0 -6.6 0M284.9 520.5a3.3 3.3 0 1 0 6.6 0a3.3 3.3 0 1 0 -6.6 0M287.3 520.0a3.3 3.3 0 1 0 6.6 0a3.3 3.3 0 1 0 -6.6 0M291.1 517.7a3.3 3.3 0 1 0 6.6 0a3.3 3.3 0 1 0 -6.6 0M293.8 516.3a3.3 3.3 0 1 0 6.6 0a3.3 3.3 0 1 0 -6.6 0M296.7 511.9a3.3 3.3 0 1 0 6.6 0a3.3 3.3 0 1 0 -6.6 0M300.1 517.3a3.3 3.3 0 1 0 6.6 0a3.3 3.3 0 1 0 -6.6 0M302.5 515.7a3.3 3.3 0 1 0 6.6 0a3.3 3.3 0 1 0 -6.6 0M305.4 520.3a3.3 3.3 0 1 0 6.6 0a3.3 3.3 0 1 0 -6.6 0M309.0 516.0a3.3 3.3 0 1 0 6.6 0a3.3 3.3 0 1 0 -6.6 0M311.8 517.0a3.3 3.3 0 1 0 6.6 0a3.3 3.3 0 1 0 -6.6 0M314.4 513.6a3.3 3.3 0 1 0 6.6 0a3.3 3.3 0 1 0 -6.6 0M317.9 515.5a3.3 3.3 0 1 0 6.6 0a3.3 3.3 0 1 0 -6.6 0M320.8 514.5a3.3 3.3 0 1 0 6.6 0a3.3 3.3 0 1 0 -6.6 0M323.2 515.2a3.3 3.3 0 1 0 6.6 0a3.3 3.3 0 1 0 -6.6 0M326.9 519.7a3.3 3.3 0 1 0 6.6 0a3.3 3.3 0 1 0 -6.6 0M330.2 520.9a3.3 3.3 0 1 0 6.6 0a3.3 3.3 0 1 0 -6.6 0M332.7 516.2a3.3 3.3 0 1 0 6.6 0a3.3 3.3 0 1 0 -6.6 0M336.2 520.0a3.3 3.3 0 1 0 6.6 0a3.3 3.3 0 1 0 -6.6 0M339.1 516.4a3.3 3.3 0 1 0 6.6 0a3.3 3.3 0 1 0 -6.6 0M342.0 519.7a3.3 3.3 0 1 0 6.6 0a3.3 3.3 0 1 0 -6.6 0M344.4 518.8a3.3 3.3 0 1 0 6.6 0a3.3 3.3 0 1 0 -6.6 0M347.3 520.2a3.3 3.3 0 1 0 6.6 0a3.3 3.3 0 1 0 -6.6 0M350.4 521.2a3.3 3.3 0 1 0 6.6 0a3.3 3.3 0 1 0 -6.6 0M353.4 520.8a3.3 3.3 0 1 0 6.6 0a3.3 3.3 0 1 0 -6.6 0M356.8 521.2a3.3 3.3 0 1 0 6.6 0a3.3 3.3 0 1 0 -6.6 0M360.2 518.0a3.3 3.3 0 1 0 6.6 0a3.3 3.3 0 1 0 -6.6 0M362.9 519.7a3.3 3.3 0 1 0 6.6 0a3.3 3.3 0 1 0 -6.6 0M366.1 525.6a3.3 3.3 0 1 0 6.6 0a3.3 3.3 0 1 0 -6.6 0M369.0 523.9a3.3 3.3 0 1 0 6.6 0a3.3 3.3 0 1 0 -6.6 0M371.5 525.4a3.3 3.3 0 1 0 6.6 0a3.3 3.3 0 1 0 -6.6 0M375.2 523.9a3.3 3.3 0 1 0 6.6 0a3.3 3.3 0 1 0 -6.6 0M377.5 520.7a3.3 3.3 0 1 0 6.6 0a3.3 3.3 0 1 0 -6.6 0M380.9 519.7a3.3 3.3 0 1 0 6.6 0a3.3 3.3 0 1 0 -6.6 0M384.0 518.2a3.3 3.3 0 1 0 6.6 0a3.3 3.3 0 1 0 -6.6 0M386.6 520.0a3.3 3.3 0 1 0 6.6 0a3.3 3.3 0 1 0 -6.6 0M389.9 519.3a3.3 3.3 0 1 0 6.6 0a3.3 3.3 0 1 0 -6.6 0M393.1 517.0a3.3 3.3 0 1 0 6.6 0a3.3 3.3 0 1 0 -6.6 0M395.2 520.7a3.3 3.3 0 1 0 6.6 0a3.3 3.3 0 1 0 -6.6 0M398.3 523.6a3.3 3.3 0 1 0 6.6 0a3.3 3.3 0 1 0 -6.6 0M401.3 524.2a3.3 3.3 0 1 0 6.6 0a3.3 3.3 0 1 0 -6.6 0M404.4 520.8a3.3 3.3 0 1 0 6.6 0a3.3 3.3 0 1 0 -6.6 0M408.0 523.5a3.3 3.3 0 1 0 6.6 0a3.3 3.3 0 1 0 -6.6 0M410.6 523.1a3.3 3.3 0 1 0 6.6 0a3.3 3.3 0 1 0 -6.6 0M413.8 524.9a3.3 3.3 0 1 0 6.6 0a3.3 3.3 0 1 0 -6.6 0M416.7 522.3a3.3 3.3 0 1 0 6.6 0a3.3 3.3 0 1 0 -6.6 0M419.7 520.7a3.3 3.3 0 1 0 6.6 0a3.3 3.3 0 1 0 -6.6 0M422.9 517.6a3.3 3.3 0 1 0 6.6 0a3.3 3.3 0 1 0 -6.6 0M425.9 522.9a3.3 3.3 0 1 0 6.6 0a3.3 3.3 0 1 0 -6.6 0M429.0 519.8a3.3 3.3 0 1 0 6.6 0a3.3 3.3 0 1 0 -6.6 0M431.6 515.9a3.3 3.3 0 1 0 6.6 0a3.3 3.3 0 1 0 -6.6 0M434.3 520.7a3.3 3.3 0 1 0 6.6 0a3.3 3.3 0 1 0 -6.6 0M438.1 523.8a3.3 3.3 0 1 0 6.6 0a3.3 3.3 0 1 0 -6.6 0M440.4 523.5a3.3 3.3 0 1 0 6.6 0a3.3 3.3 0 1 0 -6.6 0M444.0 522.2a3.3 3.3 0 1 0 6.6 0a3.3 3.3 0 1 0 -6.6 0M447.1 521.0a3.3 3.3 0 1 0 6.6 0a3.3 3.3 0 1 0 -6.6 0M449.5 522.6a3.3 3.3 0 1 0 6.6 0a3.3 3.3 0 1 0 -6.6 0M452.9 522.0a3.3 3.3 0 1 0 6.6 0a3.3 3.3 0 1 0 -6.6 0M455.5 523.6a3.3 3.3 0 1 0 6.6 0a3.3 3.3 0 1 0 -6.6 0M458.6 521.4a3.3 3.3 0 1 0 6.6 0a3.3 3.3 0 1 0 -6.6 0M321.0 522.0a3.3 3.3 0 1 0 6.6 0a3.3 3.3 0 1 0 -6.6 0M345.6 512.5a3.3 3.3 0 1 0 6.6 0a3.3 3.3 0 1 0 -6.6 0M452.5 522.7a3.3 3.3 0 1 0 6.6 0a3.3 3.3 0 1 0 -6.6 0M451.9 517.6a3.3 3.3 0 1 0 6.6 0a3.3 3.3 0 1 0 -6.6 0M317.8 523.6a3.3 3.3 0 1 0 6.6 0a3.3 3.3 0 1 0 -6.6 0M373.3 513.5a3.3 3.3 0 1 0 6.6 0a3.3 3.3 0 1 0 -6.6 0M372.2 516.6a3.3 3.3 0 1 0 6.6 0a3.3 3.3 0 1 0 -6.6 0M442.2 519.1a3.3 3.3 0 1 0 6.6 0a3.3 3.3 0 1 0 -6.6 0M387.6 519.1a3.3 3.3 0 1 0 6.6 0a3.3 3.3 0 1 0 -6.6 0M396.5 521.8a3.3 3.3 0 1 0 6.6 0a3.3 3.3 0 1 0 -6.6 0M336.3 526.4a3.3 3.3 0 1 0 6.6 0a3.3 3.3 0 1 0 -6.6 0M389.3 515.7a3.3 3.3 0 1 0 6.6 0a3.3 3.3 0 1 0 -6.6 0M406.5 518.3a3.3 3.3 0 1 0 6.6 0a3.3 3.3 0 1 0 -6.6 0M331.5 526.1a3.3 3.3 0 1 0 6.6 0a3.3 3.3 0 1 0 -6.6 0M380.8 518.4a3.3 3.3 0 1 0 6.6 0a3.3 3.3 0 1 0 -6.6 0M391.3 519.0a3.3 3.3 0 1 0 6.6 0a3.3 3.3 0 1 0 -6.6 0M375.6 516.8a3.3 3.3 0 1 0 6.6 0a3.3 3.3 0 1 0 -6.6 0M309.9 522.1a3.3 3.3 0 1 0 6.6 0a3.3 3.3 0 1 0 -6.6 0M456.6 526.5a3.3 3.3 0 1 0 6.6 0a3.3 3.3 0 1 0 -6.6 0M287.9 508.0a3.3 3.3 0 1 0 6.6 0a3.3 3.3 0 1 0 -6.6 0M416.8 525.1a3.3 3.3 0 1 0 6.6 0a3.3 3.3 0 1 0 -6.6 0M282.4 517.2a3.3 3.3 0 1 0 6.6 0a3.3 3.3 0 1 0 -6.6 0M296.2 513.4a3.3 3.3 0 1 0 6.6 0a3.3 3.3 0 1 0 -6.6 0M412.7 527.8a3.3 3.3 0 1 0 6.6 0a3.3 3.3 0 1 0 -6.6 0M431.3 526.3a3.3 3.3 0 1 0 6.6 0a3.3 3.3 0 1 0 -6.6 0M440.5 522.4a3.3 3.3 0 1 0 6.6 0a3.3 3.3 0 1 0 -6.6 0M311.4 512.0a3.3 3.3 0 1 0 6.6 0a3.3 3.3 0 1 0 -6.6 0M316.1 518.6a3.3 3.3 0 1 0 6.6 0a3.3 3.3 0 1 0 -6.6 0M383.2 517.9a3.3 3.3 0 1 0 6.6 0a3.3 3.3 0 1 0 -6.6 0M371.6 519.7a3.3 3.3 0 1 0 6.6 0a3.3 3.3 0 1 0 -6.6 0M353.5 515.1a3.3 3.3 0 1 0 6.6 0a3.3 3.3 0 1 0 -6.6 0M334.7 515.9a3.3 3.3 0 1 0 6.6 0a3.3 3.3 0 1 0 -6.6 0M378.3 515.9a3.3 3.3 0 1 0 6.6 0a3.3 3.3 0 1 0 -6.6 0M366.1 516.3a3.3 3.3 0 1 0 6.6 0a3.3 3.3 0 1 0 -6.6 0M327.4 514.4a3.3 3.3 0 1 0 6.6 0a3.3 3.3 0 1 0 -6.6 0M317.9 524.3a3.3 3.3 0 1 0 6.6 0a3.3 3.3 0 1 0 -6.6 0M345.9 519.6a3.3 3.3 0 1 0 6.6 0a3.3 3.3 0 1 0 -6.6 0M379.8 523.7a3.3 3.3 0 1 0 6.6 0a3.3 3.3 0 1 0 -6.6 0M393.5 520.2a3.3 3.3 0 1 0 6.6 0a3.3 3.3 0 1 0 -6.6 0M369.3 525.4a3.3 3.3 0 1 0 6.6 0a3.3 3.3 0 1 0 -6.6 0M392.0 523.0a3.3 3.3 0 1 0 6.6 0a3.3 3.3 0 1 0 -6.6 0M438.7 524.4a3.3 3.3 0 1 0 6.6 0a3.3 3.3 0 1 0 -6.6 0M434.3 519.3a3.3 3.3 0 1 0 6.6 0a3.3 3.3 0 1 0 -6.6 0M325.4 520.5a3.3 3.3 0 1 0 6.6 0a3.3 3.3 0 1 0 -6.6 0M441.7 530.7a3.3 3.3 0 1 0 6.6 0a3.3 3.3 0 1 0 -6.6 0M383.2 518.8a3.3 3.3 0 1 0 6.6 0a3.3 3.3 0 1 0 -6.6 0M370.0 517.1a3.3 3.3 0 1 0 6.6 0a3.3 3.3 0 1 0 -6.6 0M327.7 526.4a3.3 3.3 0 1 0 6.6 0a3.3 3.3 0 1 0 -6.6 0M403.8 523.4a3.3 3.3 0 1 0 6.6 0a3.3 3.3 0 1 0 -6.6 0M399.8 521.6a3.3 3.3 0 1 0 6.6 0a3.3 3.3 0 1 0 -6.6 0M453.8 521.8a3.3 3.3 0 1 0 6.6 0a3.3 3.3 0 1 0 -6.6 0M295.0 522.4a3.3 3.3 0 1 0 6.6 0a3.3 3.3 0 1 0 -6.6 0M287.0 531.9a3.3 3.3 0 1 0 6.6 0a3.3 3.3 0 1 0 -6.6 0M327.0 516.0a3.3 3.3 0 1 0 6.6 0a3.3 3.3 0 1 0 -6.6 0M450.4 524.4a3.3 3.3 0 1 0 6.6 0a3.3 3.3 0 1 0 -6.6 0M300.8 513.2a3.3 3.3 0 1 0 6.6 0a3.3 3.3 0 1 0 -6.6 0M300.0 519.2a3.3 3.3 0 1 0 6.6 0a3.3 3.3 0 1 0 -6.6 0M401.9 524.6a3.3 3.3 0 1 0 6.6 0a3.3 3.3 0 1 0 -6.6 0M337.8 513.3a3.3 3.3 0 1 0 6.6 0a3.3 3.3 0 1 0 -6.6 0M429.4 522.6a3.3 3.3 0 1 0 6.6 0a3.3 3.3 0 1 0 -6.6 0M341.7 516.9a3.3 3.3 0 1 0 6.6 0a3.3 3.3 0 1 0 -6.6 0M412.9 518.6a3.3 3.3 0 1 0 6.6 0a3.3 3.3 0 1 0 -6.6 0M324.1 509.3a3.3 3.3 0 1 0 6.6 0a3.3 3.3 0 1 0 -6.6 0M289.2 512.4a3.3 3.3 0 1 0 6.6 0a3.3 3.3 0 1 0 -6.6 0M439.4 525.1a3.3 3.3 0 1 0 6.6 0a3.3 3.3 0 1 0 -6.6 0M422.7 521.0a3.3 3.3 0 1 0 6.6 0a3.3 3.3 0 1 0 -6.6 0M457.8 524.3a3.3 3.3 0 1 0 6.6 0a3.3 3.3 0 1 0 -6.6 0M327.4 515.2a3.3 3.3 0 1 0 6.6 0a3.3 3.3 0 1 0 -6.6 0M337.4 527.0a3.3 3.3 0 1 0 6.6 0a3.3 3.3 0 1 0 -6.6 0M313.6 519.8a3.3 3.3 0 1 0 6.6 0a3.3 3.3 0 1 0 -6.6 0M432.4 521.2a3.3 3.3 0 1 0 6.6 0a3.3 3.3 0 1 0 -6.6 0M421.1 518.2a3.3 3.3 0 1 0 6.6 0a3.3 3.3 0 1 0 -6.6 0M366.4 525.1a3.3 3.3 0 1 0 6.6 0a3.3 3.3 0 1 0 -6.6 0M351.8 519.8a3.3 3.3 0 1 0 6.6 0a3.3 3.3 0 1 0 -6.6 0M385.9 515.9a3.3 3.3 0 1 0 6.6 0a3.3 3.3 0 1 0 -6.6 0M314.0 522.7a3.3 3.3 0 1 0 6.6 0a3.3 3.3 0 1 0 -6.6 0M444.9 520.8a3.3 3.3 0 1 0 6.6 0a3.3 3.3 0 1 0 -6.6 0M442.1 530.9a3.3 3.3 0 1 0 6.6 0a3.3 3.3 0 1 0 -6.6 0M335.3 516.1a3.3 3.3 0 1 0 6.6 0a3.3 3.3 0 1 0 -6.6 0M370.6 516.6a3.3 3.3 0 1 0 6.6 0a3.3 3.3 0 1 0 -6.6 0M365.4 511.9a3.3 3.3 0 1 0 6.6 0a3.3 3.3 0 1 0 -6.6 0M340.0 514.0a3.3 3.3 0 1 0 6.6 0a3.3 3.3 0 1 0 -6.6 0M299.6 515.7a3.3 3.3 0 1 0 6.6 0a3.3 3.3 0 1 0 -6.6 0M424.4 519.4a3.3 3.3 0 1 0 6.6 0a3.3 3.3 0 1 0 -6.6 0M427.2 512.9a3.3 3.3 0 1 0 6.6 0a3.3 3.3 0 1 0 -6.6 0M451.1 527.0a3.3 3.3 0 1 0 6.6 0a3.3 3.3 0 1 0 -6.6 0M415.4 517.6a3.3 3.3 0 1 0 6.6 0a3.3 3.3 0 1 0 -6.6 0M396.2 523.1a3.3 3.3 0 1 0 6.6 0a3.3 3.3 0 1 0 -6.6 0M400.9 522.1a3.3 3.3 0 1 0 6.6 0a3.3 3.3 0 1 0 -6.6 0M318.9 522.2a3.3 3.3 0 1 0 6.6 0a3.3 3.3 0 1 0 -6.6 0M391.8 523.8a3.3 3.3 0 1 0 6.6 0a3.3 3.3 0 1 0 -6.6 0M419.9 522.5a3.3 3.3 0 1 0 6.6 0a3.3 3.3 0 1 0 -6.6 0M368.8 520.1a3.3 3.3 0 1 0 6.6 0a3.3 3.3 0 1 0 -6.6 0M373.1 508.6a3.3 3.3 0 1 0 6.6 0a3.3 3.3 0 1 0 -6.6 0M373.9 517.7a3.3 3.3 0 1 0 6.6 0a3.3 3.3 0 1 0 -6.6 0M371.7 522.5a3.3 3.3 0 1 0 6.6 0a3.3 3.3 0 1 0 -6.6 0M363.1 523.7a3.3 3.3 0 1 0 6.6 0a3.3 3.3 0 1 0 -6.6 0M438.0 525.2a3.3 3.3 0 1 0 6.6 0a3.3 3.3 0 1 0 -6.6 0M402.2 519.9a3.3 3.3 0 1 0 6.6 0a3.3 3.3 0 1 0 -6.6 0M337.0 520.0a3.3 3.3 0 1 0 6.6 0a3.3 3.3 0 1 0 -6.6 0M333.6 521.4a3.3 3.3 0 1 0 6.6 0a3.3 3.3 0 1 0 -6.6 0M405.8 520.9a3.3 3.3 0 1 0 6.6 0a3.3 3.3 0 1 0 -6.6 0M451.9 526.5a3.3 3.3 0 1 0 6.6 0a3.3 3.3 0 1 0 -6.6 0M424.3 514.8a3.3 3.3 0 1 0 6.6 0a3.3 3.3 0 1 0 -6.6 0M424.7 517.8a3.3 3.3 0 1 0 6.6 0a3.3 3.3 0 1 0 -6.6 0M363.8 531.9a3.3 3.3 0 1 0 6.6 0a3.3 3.3 0 1 0 -6.6 0M417.6 520.2a3.3 3.3 0 1 0 6.6 0a3.3 3.3 0 1 0 -6.6 0M282.4 516.8a3.3 3.3 0 1 0 6.6 0a3.3 3.3 0 1 0 -6.6 0M312.7 510.8a3.3 3.3 0 1 0 6.6 0a3.3 3.3 0 1 0 -6.6 0M397.4 518.9a3.3 3.3 0 1 0 6.6 0a3.3 3.3 0 1 0 -6.6 0M403.3 517.4a3.3 3.3 0 1 0 6.6 0a3.3 3.3 0 1 0 -6.6 0M430.4 521.4a3.3 3.3 0 1 0 6.6 0a3.3 3.3 0 1 0 -6.6 0M328.2 520.5a3.3 3.3 0 1 0 6.6 0a3.3 3.3 0 1 0 -6.6 0M397.5 516.8a3.3 3.3 0 1 0 6.6 0a3.3 3.3 0 1 0 -6.6 0M331.6 527.8a3.3 3.3 0 1 0 6.6 0a3.3 3.3 0 1 0 -6.6 0M307.0 511.1a3.3 3.3 0 1 0 6.6 0a3.3 3.3 0 1 0 -6.6 0M454.1 526.6a3.3 3.3 0 1 0 6.6 0a3.3 3.3 0 1 0 -6.6 0M313.2 509.3a3.3 3.3 0 1 0 6.6 0a3.3 3.3 0 1 0 -6.6 0M379.3 514.5a3.3 3.3 0 1 0 6.6 0a3.3 3.3 0 1 0 -6.6 0M312.2 517.5a3.3 3.3 0 1 0 6.6 0a3.3 3.3 0 1 0 -6.6 0M454.0 518.3a3.3 3.3 0 1 0 6.6 0a3.3 3.3 0 1 0 -6.6 0M349.1 517.7a3.3 3.3 0 1 0 6.6 0a3.3 3.3 0 1 0 -6.6 0M378.0 509.0a3.3 3.3 0 1 0 6.6 0a3.3 3.3 0 1 0 -6.6 0M298.8 519.9a3.3 3.3 0 1 0 6.6 0a3.3 3.3 0 1 0 -6.6 0M316.6 513.3a3.3 3.3 0 1 0 6.6 0a3.3 3.3 0 1 0 -6.6 0M432.6 518.1a3.3 3.3 0 1 0 6.6 0a3.3 3.3 0 1 0 -6.6 0M288.1 515.1a3.3 3.3 0 1 0 6.6 0a3.3 3.3 0 1 0 -6.6 0M417.3 520.7a3.3 3.3 0 1 0 6.6 0a3.3 3.3 0 1 0 -6.6 0M288.8 515.3a3.3 3.3 0 1 0 6.6 0a3.3 3.3 0 1 0 -6.6 0M430.4 517.9a3.3 3.3 0 1 0 6.6 0a3.3 3.3 0 1 0 -6.6 0M397.1 522.6a3.3 3.3 0 1 0 6.6 0a3.3 3.3 0 1 0 -6.6 0M418.1 515.9a3.3 3.3 0 1 0 6.6 0a3.3 3.3 0 1 0 -6.6 0M378.6 515.6a3.3 3.3 0 1 0 6.6 0a3.3 3.3 0 1 0 -6.6 0M351.4 515.5a3.3 3.3 0 1 0 6.6 0a3.3 3.3 0 1 0 -6.6 0M414.2 525.1a3.3 3.3 0 1 0 6.6 0a3.3 3.3 0 1 0 -6.6 0M303.5 520.9a3.3 3.3 0 1 0 6.6 0a3.3 3.3 0 1 0 -6.6 0M420.2 516.4a3.3 3.3 0 1 0 6.6 0a3.3 3.3 0 1 0 -6.6 0M452.2 522.2a3.3 3.3 0 1 0 6.6 0a3.3 3.3 0 1 0 -6.6 0M301.3 515.6a3.3 3.3 0 1 0 6.6 0a3.3 3.3 0 1 0 -6.6 0M439.6 525.0a3.3 3.3 0 1 0 6.6 0a3.3 3.3 0 1 0 -6.6 0M415.2 528.1a3.3 3.3 0 1 0 6.6 0a3.3 3.3 0 1 0 -6.6 0M384.6 516.1a3.3 3.3 0 1 0 6.6 0a3.3 3.3 0 1 0 -6.6 0M297.4 521.5a3.3 3.3 0 1 0 6.6 0a3.3 3.3 0 1 0 -6.6 0M326.5 523.7a3.3 3.3 0 1 0 6.6 0a3.3 3.3 0 1 0 -6.6 0M395.2 519.7a3.3 3.3 0 1 0 6.6 0a3.3 3.3 0 1 0 -6.6 0M283.6 514.0a3.3 3.3 0 1 0 6.6 0a3.3 3.3 0 1 0 -6.6 0M355.8 518.3a3.3 3.3 0 1 0 6.6 0a3.3 3.3 0 1 0 -6.6 0M371.9 520.9a3.3 3.3 0 1 0 6.6 0a3.3 3.3 0 1 0 -6.6 0M448.3 519.3a3.3 3.3 0 1 0 6.6 0a3.3 3.3 0 1 0 -6.6 0M307.1 516.0a3.3 3.3 0 1 0 6.6 0a3.3 3.3 0 1 0 -6.6 0M407.1 526.9a3.3 3.3 0 1 0 6.6 0a3.3 3.3 0 1 0 -6.6 0M357.2 511.5a3.3 3.3 0 1 0 6.6 0a3.3 3.3 0 1 0 -6.6 0M285.3 527.4a3.3 3.3 0 1 0 6.6 0a3.3 3.3 0 1 0 -6.6 0M301.6 517.4a3.3 3.3 0 1 0 6.6 0a3.3 3.3 0 1 0 -6.6 0M374.7 508.3a3.3 3.3 0 1 0 6.6 0a3.3 3.3 0 1 0 -6.6 0M401.6 518.1a3.3 3.3 0 1 0 6.6 0a3.3 3.3 0 1 0 -6.6 0M366.4 532.9a3.3 3.3 0 1 0 6.6 0a3.3 3.3 0 1 0 -6.6 0M289.7 510.9a3.3 3.3 0 1 0 6.6 0a3.3 3.3 0 1 0 -6.6 0M379.3 517.3a3.3 3.3 0 1 0 6.6 0a3.3 3.3 0 1 0 -6.6 0M377.2 526.4a3.3 3.3 0 1 0 6.6 0a3.3 3.3 0 1 0 -6.6 0M407.1 520.1a3.3 3.3 0 1 0 6.6 0a3.3 3.3 0 1 0 -6.6 0M374.9 519.5a3.3 3.3 0 1 0 6.6 0a3.3 3.3 0 1 0 -6.6 0M297.2 524.8a3.3 3.3 0 1 0 6.6 0a3.3 3.3 0 1 0 -6.6 0M352.2 523.8a3.3 3.3 0 1 0 6.6 0a3.3 3.3 0 1 0 -6.6 0M425.8 520.8a3.3 3.3 0 1 0 6.6 0a3.3 3.3 0 1 0 -6.6 0M316.7 508.5a3.3 3.3 0 1 0 6.6 0a3.3 3.3 0 1 0 -6.6 0M312.4 520.7a3.3 3.3 0 1 0 6.6 0a3.3 3.3 0 1 0 -6.6 0M284.9 521.2a3.3 3.3 0 1 0 6.6 0a3.3 3.3 0 1 0 -6.6 0M450.1 529.1a3.3 3.3 0 1 0 6.6 0a3.3 3.3 0 1 0 -6.6 0M360.9 517.6a3.3 3.3 0 1 0 6.6 0a3.3 3.3 0 1 0 -6.6 0M396.6 514.9a3.3 3.3 0 1 0 6.6 0a3.3 3.3 0 1 0 -6.6 0M374.3 515.4a3.3 3.3 0 1 0 6.6 0a3.3 3.3 0 1 0 -6.6 0M382.3 518.4a3.3 3.3 0 1 0 6.6 0a3.3 3.3 0 1 0 -6.6 0M452.2 521.1a3.3 3.3 0 1 0 6.6 0a3.3 3.3 0 1 0 -6.6 0M364.4 513.9a3.3 3.3 0 1 0 6.6 0a3.3 3.3 0 1 0 -6.6 0M331.0 526.5a3.3 3.3 0 1 0 6.6 0a3.3 3.3 0 1 0 -6.6 0M345.7 526.2a3.3 3.3 0 1 0 6.6 0a3.3 3.3 0 1 0 -6.6 0M440.8 519.3a3.3 3.3 0 1 0 6.6 0a3.3 3.3 0 1 0 -6.6 0M381.6 520.6a3.3 3.3 0 1 0 6.6 0a3.3 3.3 0 1 0 -6.6 0M288.8 516.2a3.3 3.3 0 1 0 6.6 0a3.3 3.3 0 1 0 -6.6 0M377.7 522.5a3.3 3.3 0 1 0 6.6 0a3.3 3.3 0 1 0 -6.6 0M451.6 523.1a3.3 3.3 0 1 0 6.6 0a3.3 3.3 0 1 0 -6.6 0M316.4 520.7a3.3 3.3 0 1 0 6.6 0a3.3 3.3 0 1 0 -6.6 0M445.3 524.6a3.3 3.3 0 1 0 6.6 0a3.3 3.3 0 1 0 -6.6 0M304.5 511.5a3.3 3.3 0 1 0 6.6 0a3.3 3.3 0 1 0 -6.6 0M313.4 511.2a3.3 3.3 0 1 0 6.6 0a3.3 3.3 0 1 0 -6.6 0M358.6 521.4a3.3 3.3 0 1 0 6.6 0a3.3 3.3 0 1 0 -6.6 0M321.8 521.0a3.3 3.3 0 1 0 6.6 0a3.3 3.3 0 1 0 -6.6 0M445.9 524.9a3.3 3.3 0 1 0 6.6 0a3.3 3.3 0 1 0 -6.6 0M384.8 518.0a3.3 3.3 0 1 0 6.6 0a3.3 3.3 0 1 0 -6.6 0M283.2 520.7a3.3 3.3 0 1 0 6.6 0a3.3 3.3 0 1 0 -6.6 0M340.9 522.3a3.3 3.3 0 1 0 6.6 0a3.3 3.3 0 1 0 -6.6 0M425.5 519.7a3.3 3.3 0 1 0 6.6 0a3.3 3.3 0 1 0 -6.6 0M431.4 514.7a3.3 3.3 0 1 0 6.6 0a3.3 3.3 0 1 0 -6.6 0M283.5 519.4a3.3 3.3 0 1 0 6.6 0a3.3 3.3 0 1 0 -6.6 0M451.3 521.5a3.3 3.3 0 1 0 6.6 0a3.3 3.3 0 1 0 -6.6 0M299.9 512.8a3.3 3.3 0 1 0 6.6 0a3.3 3.3 0 1 0 -6.6 0M437.3 517.2a3.3 3.3 0 1 0 6.6 0a3.3 3.3 0 1 0 -6.6 0M366.1 513.8a3.3 3.3 0 1 0 6.6 0a3.3 3.3 0 1 0 -6.6 0M422.0 526.8a3.3 3.3 0 1 0 6.6 0a3.3 3.3 0 1 0 -6.6 0M284.6 516.3a3.3 3.3 0 1 0 6.6 0a3.3 3.3 0 1 0 -6.6 0M432.2 522.2a3.3 3.3 0 1 0 6.6 0a3.3 3.3 0 1 0 -6.6 0M439.0 520.3a3.3 3.3 0 1 0 6.6 0a3.3 3.3 0 1 0 -6.6 0M367.2 515.3a3.3 3.3 0 1 0 6.6 0a3.3 3.3 0 1 0 -6.6 0M324.5 514.1a3.3 3.3 0 1 0 6.6 0a3.3 3.3 0 1 0 -6.6 0M332.0 527.0a3.3 3.3 0 1 0 6.6 0a3.3 3.3 0 1 0 -6.6 0M415.4 527.7a3.3 3.3 0 1 0 6.6 0a3.3 3.3 0 1 0 -6.6 0M455.3 519.3a3.3 3.3 0 1 0 6.6 0a3.3 3.3 0 1 0 -6.6 0M315.3 518.9a3.3 3.3 0 1 0 6.6 0a3.3 3.3 0 1 0 -6.6 0M419.0 519.1a3.3 3.3 0 1 0 6.6 0a3.3 3.3 0 1 0 -6.6 0M400.2 518.7a3.3 3.3 0 1 0 6.6 0a3.3 3.3 0 1 0 -6.6 0M306.0 520.2a3.3 3.3 0 1 0 6.6 0a3.3 3.3 0 1 0 -6.6 0M400.4 523.7a3.3 3.3 0 1 0 6.6 0a3.3 3.3 0 1 0 -6.6 0M454.6 517.6a3.3 3.3 0 1 0 6.6 0a3.3 3.3 0 1 0 -6.6 0M445.2 527.3a3.3 3.3 0 1 0 6.6 0a3.3 3.3 0 1 0 -6.6 0M447.3 527.2a3.3 3.3 0 1 0 6.6 0a3.3 3.3 0 1 0 -6.6 0M414.0 519.6a3.3 3.3 0 1 0 6.6 0a3.3 3.3 0 1 0 -6.6 0M295.2 510.7a3.3 3.3 0 1 0 6.6 0a3.3 3.3 0 1 0 -6.6 0M380.7 515.5a3.3 3.3 0 1 0 6.6 0a3.3 3.3 0 1 0 -6.6 0M437.2 527.1a3.3 3.3 0 1 0 6.6 0a3.3 3.3 0 1 0 -6.6 0M358.9 518.4a3.3 3.3 0 1 0 6.6 0a3.3 3.3 0 1 0 -6.6 0M344.8 522.2a3.3 3.3 0 1 0 6.6 0a3.3 3.3 0 1 0 -6.6 0M407.8 517.2a3.3 3.3 0 1 0 6.6 0a3.3 3.3 0 1 0 -6.6 0M403.2 525.1a3.3 3.3 0 1 0 6.6 0a3.3 3.3 0 1 0 -6.6 0M409.2 525.5a3.3 3.3 0 1 0 6.6 0a3.3 3.3 0 1 0 -6.6 0M431.4 526.2a3.3 3.3 0 1 0 6.6 0a3.3 3.3 0 1 0 -6.6 0M358.5 517.5a3.3 3.3 0 1 0 6.6 0a3.3 3.3 0 1 0 -6.6 0M375.3 511.5a3.3 3.3 0 1 0 6.6 0a3.3 3.3 0 1 0 -6.6 0M291.9 524.1a3.3 3.3 0 1 0 6.6 0a3.3 3.3 0 1 0 -6.6 0M351.8 506.9a3.3 3.3 0 1 0 6.6 0a3.3 3.3 0 1 0 -6.6 0M284.5 521.0a3.3 3.3 0 1 0 6.6 0a3.3 3.3 0 1 0 -6.6 0M321.7 509.9a3.3 3.3 0 1 0 6.6 0a3.3 3.3 0 1 0 -6.6 0M287.6 519.6a3.3 3.3 0 1 0 6.6 0a3.3 3.3 0 1 0 -6.6 0M397.9 522.0a3.3 3.3 0 1 0 6.6 0a3.3 3.3 0 1 0 -6.6 0M430.8 527.0a3.3 3.3 0 1 0 6.6 0a3.3 3.3 0 1 0 -6.6 0M444.1 526.1a3.3 3.3 0 1 0 6.6 0a3.3 3.3 0 1 0 -6.6 0M338.1 529.2a3.3 3.3 0 1 0 6.6 0a3.3 3.3 0 1 0 -6.6 0M415.6 522.6a3.3 3.3 0 1 0 6.6 0a3.3 3.3 0 1 0 -6.6 0M420.5 521.5a3.3 3.3 0 1 0 6.6 0a3.3 3.3 0 1 0 -6.6 0M382.3 517.6a3.3 3.3 0 1 0 6.6 0a3.3 3.3 0 1 0 -6.6 0M412.2 524.6a3.3 3.3 0 1 0 6.6 0a3.3 3.3 0 1 0 -6.6 0M442.0 522.5a3.3 3.3 0 1 0 6.6 0a3.3 3.3 0 1 0 -6.6 0M367.3 516.4a3.3 3.3 0 1 0 6.6 0a3.3 3.3 0 1 0 -6.6 0M351.1 521.1a3.3 3.3 0 1 0 6.6 0a3.3 3.3 0 1 0 -6.6 0M370.7 513.1a3.3 3.3 0 1 0 6.6 0a3.3 3.3 0 1 0 -6.6 0M349.8 511.3a3.3 3.3 0 1 0 6.6 0a3.3 3.3 0 1 0 -6.6 0M455.6 521.5a3.3 3.3 0 1 0 6.6 0a3.3 3.3 0 1 0 -6.6 0M286.3 517.1a3.3 3.3 0 1 0 6.6 0a3.3 3.3 0 1 0 -6.6 0M396.8 521.1a3.3 3.3 0 1 0 6.6 0a3.3 3.3 0 1 0 -6.6 0M329.4 522.7a3.3 3.3 0 1 0 6.6 0a3.3 3.3 0 1 0 -6.6 0M373.4 513.7a3.3 3.3 0 1 0 6.6 0a3.3 3.3 0 1 0 -6.6 0M398.1 524.4a3.3 3.3 0 1 0 6.6 0a3.3 3.3 0 1 0 -6.6 0M448.0 526.5a3.3 3.3 0 1 0 6.6 0a3.3 3.3 0 1 0 -6.6 0M322.1 516.4a3.3 3.3 0 1 0 6.6 0a3.3 3.3 0 1 0 -6.6 0M360.6 519.9a3.3 3.3 0 1 0 6.6 0a3.3 3.3 0 1 0 -6.6 0M347.5 523.2a3.3 3.3 0 1 0 6.6 0a3.3 3.3 0 1 0 -6.6 0M392.8 516.9a3.3 3.3 0 1 0 6.6 0a3.3 3.3 0 1 0 -6.6 0M447.0 520.3a3.3 3.3 0 1 0 6.6 0a3.3 3.3 0 1 0 -6.6 0M384.1 522.0a3.3 3.3 0 1 0 6.6 0a3.3 3.3 0 1 0 -6.6 0M456.1 519.0a3.3 3.3 0 1 0 6.6 0a3.3 3.3 0 1 0 -6.6 0M311.6 513.0a3.3 3.3 0 1 0 6.6 0a3.3 3.3 0 1 0 -6.6 0M401.2 515.2a3.3 3.3 0 1 0 6.6 0a3.3 3.3 0 1 0 -6.6 0M301.2 511.1a3.3 3.3 0 1 0 6.6 0a3.3 3.3 0 1 0 -6.6 0M358.1 523.4a3.3 3.3 0 1 0 6.6 0a3.3 3.3 0 1 0 -6.6 0M453.3 522.6a3.3 3.3 0 1 0 6.6 0a3.3 3.3 0 1 0 -6.6 0M304.7 525.4a3.3 3.3 0 1 0 6.6 0a3.3 3.3 0 1 0 -6.6 0M306.1 523.0a3.3 3.3 0 1 0 6.6 0a3.3 3.3 0 1 0 -6.6 0M405.3 520.0a3.3 3.3 0 1 0 6.6 0a3.3 3.3 0 1 0 -6.6 0M285.3 522.5a3.3 3.3 0 1 0 6.6 0a3.3 3.3 0 1 0 -6.6 0M281.7 529.9a3.3 3.3 0 1 0 6.6 0a3.3 3.3 0 1 0 -6.6 0M346.4 525.7a3.3 3.3 0 1 0 6.6 0a3.3 3.3 0 1 0 -6.6 0M453.6 519.1a3.3 3.3 0 1 0 6.6 0a3.3 3.3 0 1 0 -6.6 0M458.6 521.2a3.3 3.3 0 1 0 6.6 0a3.3 3.3 0 1 0 -6.6 0M336.5 525.6a3.3 3.3 0 1 0 6.6 0a3.3 3.3 0 1 0 -6.6 0M433.4 518.7a3.3 3.3 0 1 0 6.6 0a3.3 3.3 0 1 0 -6.6 0M424.0 525.2a3.3 3.3 0 1 0 6.6 0a3.3 3.3 0 1 0 -6.6 0M428.4 525.1a3.3 3.3 0 1 0 6.6 0a3.3 3.3 0 1 0 -6.6 0M350.2 519.7a3.3 3.3 0 1 0 6.6 0a3.3 3.3 0 1 0 -6.6 0M344.4 528.9a3.3 3.3 0 1 0 6.6 0a3.3 3.3 0 1 0 -6.6 0M335.9 512.6a3.3 3.3 0 1 0 6.6 0a3.3 3.3 0 1 0 -6.6 0M420.7 522.7a3.3 3.3 0 1 0 6.6 0a3.3 3.3 0 1 0 -6.6 0M297.5 519.4a3.3 3.3 0 1 0 6.6 0a3.3 3.3 0 1 0 -6.6 0M381.2 517.5a3.3 3.3 0 1 0 6.6 0a3.3 3.3 0 1 0 -6.6 0M367.4 524.0a3.3 3.3 0 1 0 6.6 0a3.3 3.3 0 1 0 -6.6 0M419.4 523.7a3.3 3.3 0 1 0 6.6 0a3.3 3.3 0 1 0 -6.6 0M348.4 529.8a3.3 3.3 0 1 0 6.6 0a3.3 3.3 0 1 0 -6.6 0M349.1 518.0a3.3 3.3 0 1 0 6.6 0a3.3 3.3 0 1 0 -6.6 0M388.8 519.5a3.3 3.3 0 1 0 6.6 0a3.3 3.3 0 1 0 -6.6 0M446.5 526.9a3.3 3.3 0 1 0 6.6 0a3.3 3.3 0 1 0 -6.6 0M383.1 520.7a3.3 3.3 0 1 0 6.6 0a3.3 3.3 0 1 0 -6.6 0M415.2 517.9a3.3 3.3 0 1 0 6.6 0a3.3 3.3 0 1 0 -6.6 0M433.3 519.2a3.3 3.3 0 1 0 6.6 0a3.3 3.3 0 1 0 -6.6 0M370.1 519.9a3.3 3.3 0 1 0 6.6 0a3.3 3.3 0 1 0 -6.6 0M368.3 532.2a3.3 3.3 0 1 0 6.6 0a3.3 3.3 0 1 0 -6.6 0M392.8 520.3a3.3 3.3 0 1 0 6.6 0a3.3 3.3 0 1 0 -6.6 0M418.5 522.9a3.3 3.3 0 1 0 6.6 0a3.3 3.3 0 1 0 -6.6 0M381.4 517.5a3.3 3.3 0 1 0 6.6 0a3.3 3.3 0 1 0 -6.6 0M347.0 521.5a3.3 3.3 0 1 0 6.6 0a3.3 3.3 0 1 0 -6.6 0M458.6 517.6a3.3 3.3 0 1 0 6.6 0a3.3 3.3 0 1 0 -6.6 0M440.6 523.9a3.3 3.3 0 1 0 6.6 0a3.3 3.3 0 1 0 -6.6 0M429.0 523.8a3.3 3.3 0 1 0 6.6 0a3.3 3.3 0 1 0 -6.6 0M350.7 522.0a3.3 3.3 0 1 0 6.6 0a3.3 3.3 0 1 0 -6.6 0M355.9 516.2a3.3 3.3 0 1 0 6.6 0a3.3 3.3 0 1 0 -6.6 0M354.5 519.6a3.3 3.3 0 1 0 6.6 0a3.3 3.3 0 1 0 -6.6 0M421.9 522.7a3.3 3.3 0 1 0 6.6 0a3.3 3.3 0 1 0 -6.6 0M334.5 523.2a3.3 3.3 0 1 0 6.6 0a3.3 3.3 0 1 0 -6.6 0M370.1 517.8a3.3 3.3 0 1 0 6.6 0a3.3 3.3 0 1 0 -6.6 0M432.9 520.6a3.3 3.3 0 1 0 6.6 0a3.3 3.3 0 1 0 -6.6 0M314.2 514.7a3.3 3.3 0 1 0 6.6 0a3.3 3.3 0 1 0 -6.6 0M383.6 518.7a3.3 3.3 0 1 0 6.6 0a3.3 3.3 0 1 0 -6.6 0M339.1 524.0a3.3 3.3 0 1 0 6.6 0a3.3 3.3 0 1 0 -6.6 0M345.4 521.4a3.3 3.3 0 1 0 6.6 0a3.3 3.3 0 1 0 -6.6 0M286.8 522.9a3.3 3.3 0 1 0 6.6 0a3.3 3.3 0 1 0 -6.6 0M403.2 527.0a3.3 3.3 0 1 0 6.6 0a3.3 3.3 0 1 0 -6.6 0M282.8 520.6a3.3 3.3 0 1 0 6.6 0a3.3 3.3 0 1 0 -6.6 0M442.7 518.8a3.3 3.3 0 1 0 6.6 0a3.3 3.3 0 1 0 -6.6 0M392.2 520.1a3.3 3.3 0 1 0 6.6 0a3.3 3.3 0 1 0 -6.6 0M429.0 524.8a3.3 3.3 0 1 0 6.6 0a3.3 3.3 0 1 0 -6.6 0M336.5 512.7a3.3 3.3 0 1 0 6.6 0a3.3 3.3 0 1 0 -6.6 0M300.2 517.1a3.3 3.3 0 1 0 6.6 0a3.3 3.3 0 1 0 -6.6 0M448.5 520.2a3.3 3.3 0 1 0 6.6 0a3.3 3.3 0 1 0 -6.6 0M347.6 519.8a3.3 3.3 0 1 0 6.6 0a3.3 3.3 0 1 0 -6.6 0M308.0 518.2a3.3 3.3 0 1 0 6.6 0a3.3 3.3 0 1 0 -6.6 0M410.0 517.6a3.3 3.3 0 1 0 6.6 0a3.3 3.3 0 1 0 -6.6 0M400.2 526.7a3.3 3.3 0 1 0 6.6 0a3.3 3.3 0 1 0 -6.6 0M469.4 522.3a3.3 3.3 0 1 0 6.6 0a3.3 3.3 0 1 0 -6.6 0M472.1 521.6a3.3 3.3 0 1 0 6.6 0a3.3 3.3 0 1 0 -6.6 0M474.8 522.3a3.3 3.3 0 1 0 6.6 0a3.3 3.3 0 1 0 -6.6 0M478.6 524.7a3.3 3.3 0 1 0 6.6 0a3.3 3.3 0 1 0 -6.6 0M481.4 523.1a3.3 3.3 0 1 0 6.6 0a3.3 3.3 0 1 0 -6.6 0M484.3 522.8a3.3 3.3 0 1 0 6.6 0a3.3 3.3 0 1 0 -6.6 0M487.3 523.2a3.3 3.3 0 1 0 6.6 0a3.3 3.3 0 1 0 -6.6 0M490.1 525.2a3.3 3.3 0 1 0 6.6 0a3.3 3.3 0 1 0 -6.6 0M493.0 522.2a3.3 3.3 0 1 0 6.6 0a3.3 3.3 0 1 0 -6.6 0M486.3 520.7a3.3 3.3 0 1 0 6.6 0a3.3 3.3 0 1 0 -6.6 0M479.1 520.3a3.3 3.3 0 1 0 6.6 0a3.3 3.3 0 1 0 -6.6 0M489.2 522.8a3.3 3.3 0 1 0 6.6 0a3.3 3.3 0 1 0 -6.6 0M476.1 526.1a3.3 3.3 0 1 0 6.6 0a3.3 3.3 0 1 0 -6.6 0M471.7 520.4a3.3 3.3 0 1 0 6.6 0a3.3 3.3 0 1 0 -6.6 0M485.5 517.1a3.3 3.3 0 1 0 6.6 0a3.3 3.3 0 1 0 -6.6 0M476.6 527.5a3.3 3.3 0 1 0 6.6 0a3.3 3.3 0 1 0 -6.6 0M491.4 521.5a3.3 3.3 0 1 0 6.6 0a3.3 3.3 0 1 0 -6.6 0M473.9 528.5a3.3 3.3 0 1 0 6.6 0a3.3 3.3 0 1 0 -6.6 0M471.1 520.6a3.3 3.3 0 1 0 6.6 0a3.3 3.3 0 1 0 -6.6 0M490.7 522.8a3.3 3.3 0 1 0 6.6 0a3.3 3.3 0 1 0 -6.6 0M470.0 526.8a3.3 3.3 0 1 0 6.6 0a3.3 3.3 0 1 0 -6.6 0M487.4 517.9a3.3 3.3 0 1 0 6.6 0a3.3 3.3 0 1 0 -6.6 0M484.2 528.8a3.3 3.3 0 1 0 6.6 0a3.3 3.3 0 1 0 -6.6 0M487.4 521.2a3.3 3.3 0 1 0 6.6 0a3.3 3.3 0 1 0 -6.6 0M470.7 527.0a3.3 3.3 0 1 0 6.6 0a3.3 3.3 0 1 0 -6.6 0M471.7 525.9a3.3 3.3 0 1 0 6.6 0a3.3 3.3 0 1 0 -6.6 0M480.9 526.0a3.3 3.3 0 1 0 6.6 0a3.3 3.3 0 1 0 -6.6 0M491.4 523.4a3.3 3.3 0 1 0 6.6 0a3.3 3.3 0 1 0 -6.6 0M483.9 527.1a3.3 3.3 0 1 0 6.6 0a3.3 3.3 0 1 0 -6.6 0M487.0 520.6a3.3 3.3 0 1 0 6.6 0a3.3 3.3 0 1 0 -6.6 0M482.8 516.1a3.3 3.3 0 1 0 6.6 0a3.3 3.3 0 1 0 -6.6 0M489.8 518.5a3.3 3.3 0 1 0 6.6 0a3.3 3.3 0 1 0 -6.6 0M490.9 526.0a3.3 3.3 0 1 0 6.6 0a3.3 3.3 0 1 0 -6.6 0M487.9 522.8a3.3 3.3 0 1 0 6.6 0a3.3 3.3 0 1 0 -6.6 0M477.3 524.2a3.3 3.3 0 1 0 6.6 0a3.3 3.3 0 1 0 -6.6 0M474.4 519.2a3.3 3.3 0 1 0 6.6 0a3.3 3.3 0 1 0 -6.6 0M473.2 523.1a3.3 3.3 0 1 0 6.6 0a3.3 3.3 0 1 0 -6.6 0M480.8 522.6a3.3 3.3 0 1 0 6.6 0a3.3 3.3 0 1 0 -6.6 0M475.3 518.0a3.3 3.3 0 1 0 6.6 0a3.3 3.3 0 1 0 -6.6 0M472.6 520.2a3.3 3.3 0 1 0 6.6 0a3.3 3.3 0 1 0 -6.6 0M480.7 525.3a3.3 3.3 0 1 0 6.6 0a3.3 3.3 0 1 0 -6.6 0M491.5 517.4a3.3 3.3 0 1 0 6.6 0a3.3 3.3 0 1 0 -6.6 0M493.8 524.4a3.3 3.3 0 1 0 6.6 0a3.3 3.3 0 1 0 -6.6 0M488.4 528.8a3.3 3.3 0 1 0 6.6 0a3.3 3.3 0 1 0 -6.6 0M472.5 530.5a3.3 3.3 0 1 0 6.6 0a3.3 3.3 0 1 0 -6.6 0M490.8 523.1a3.3 3.3 0 1 0 6.6 0a3.3 3.3 0 1 0 -6.6 0M490.7 519.8a3.3 3.3 0 1 0 6.6 0a3.3 3.3 0 1 0 -6.6 0M396.5 488.3a3.3 3.3 0 1 0 6.6 0a3.3 3.3 0 1 0 -6.6 0M423.3 507.1a3.3 3.3 0 1 0 6.6 0a3.3 3.3 0 1 0 -6.6 0M432.1 510.1a3.3 3.3 0 1 0 6.6 0a3.3 3.3 0 1 0 -6.6 0M291.7 538.2a3.3 3.3 0 1 0 6.6 0a3.3 3.3 0 1 0 -6.6 0M326.3 535.7a3.3 3.3 0 1 0 6.6 0a3.3 3.3 0 1 0 -6.6 0M366.9 534.7a3.3 3.3 0 1 0 6.6 0a3.3 3.3 0 1 0 -6.6 0M375.2 531.4a3.3 3.3 0 1 0 6.6 0a3.3 3.3 0 1 0 -6.6 0M468.4 537.7a3.3 3.3 0 1 0 6.6 0a3.3 3.3 0 1 0 -6.6 0M486.7 533.9a3.3 3.3 0 1 0 6.6 0a3.3 3.3 0 1 0 -6.6 0M491.2 521.6a3.3 3.3 0 1 0 6.6 0a3.3 3.3 0 1 0 -6.6 0M494.3 523.9a3.3 3.3 0 1 0 6.6 0a3.3 3.3 0 1 0 -6.6 0M497.5 519.6a3.3 3.3 0 1 0 6.6 0a3.3 3.3 0 1 0 -6.6 0M501.2 521.3a3.3 3.3 0 1 0 6.6 0a3.3 3.3 0 1 0 -6.6 0M503.6 516.9a3.3 3.3 0 1 0 6.6 0a3.3 3.3 0 1 0 -6.6 0M506.6 517.8a3.3 3.3 0 1 0 6.6 0a3.3 3.3 0 1 0 -6.6 0M510.1 519.0a3.3 3.3 0 1 0 6.6 0a3.3 3.3 0 1 0 -6.6 0M513.2 519.0a3.3 3.3 0 1 0 6.6 0a3.3 3.3 0 1 0 -6.6 0M515.2 521.3a3.3 3.3 0 1 0 6.6 0a3.3 3.3 0 1 0 -6.6 0M518.3 520.4a3.3 3.3 0 1 0 6.6 0a3.3 3.3 0 1 0 -6.6 0M521.8 518.1a3.3 3.3 0 1 0 6.6 0a3.3 3.3 0 1 0 -6.6 0M525.0 519.6a3.3 3.3 0 1 0 6.6 0a3.3 3.3 0 1 0 -6.6 0M524.6 522.2a3.3 3.3 0 1 0 6.6 0a3.3 3.3 0 1 0 -6.6 0M522.8 520.6a3.3 3.3 0 1 0 6.6 0a3.3 3.3 0 1 0 -6.6 0M516.0 518.0a3.3 3.3 0 1 0 6.6 0a3.3 3.3 0 1 0 -6.6 0M517.1 516.3a3.3 3.3 0 1 0 6.6 0a3.3 3.3 0 1 0 -6.6 0M493.5 517.8a3.3 3.3 0 1 0 6.6 0a3.3 3.3 0 1 0 -6.6 0M520.0 523.4a3.3 3.3 0 1 0 6.6 0a3.3 3.3 0 1 0 -6.6 0M516.2 517.2a3.3 3.3 0 1 0 6.6 0a3.3 3.3 0 1 0 -6.6 0M505.7 525.7a3.3 3.3 0 1 0 6.6 0a3.3 3.3 0 1 0 -6.6 0M502.2 521.8a3.3 3.3 0 1 0 6.6 0a3.3 3.3 0 1 0 -6.6 0M514.6 524.0a3.3 3.3 0 1 0 6.6 0a3.3 3.3 0 1 0 -6.6 0M512.5 520.3a3.3 3.3 0 1 0 6.6 0a3.3 3.3 0 1 0 -6.6 0M513.9 517.1a3.3 3.3 0 1 0 6.6 0a3.3 3.3 0 1 0 -6.6 0M513.0 523.8a3.3 3.3 0 1 0 6.6 0a3.3 3.3 0 1 0 -6.6 0M500.7 519.9a3.3 3.3 0 1 0 6.6 0a3.3 3.3 0 1 0 -6.6 0M523.2 522.1a3.3 3.3 0 1 0 6.6 0a3.3 3.3 0 1 0 -6.6 0M515.8 523.7a3.3 3.3 0 1 0 6.6 0a3.3 3.3 0 1 0 -6.6 0M521.2 516.2a3.3 3.3 0 1 0 6.6 0a3.3 3.3 0 1 0 -6.6 0M498.7 517.5a3.3 3.3 0 1 0 6.6 0a3.3 3.3 0 1 0 -6.6 0M503.0 524.0a3.3 3.3 0 1 0 6.6 0a3.3 3.3 0 1 0 -6.6 0M519.8 519.1a3.3 3.3 0 1 0 6.6 0a3.3 3.3 0 1 0 -6.6 0M524.7 518.4a3.3 3.3 0 1 0 6.6 0a3.3 3.3 0 1 0 -6.6 0M521.9 515.6a3.3 3.3 0 1 0 6.6 0a3.3 3.3 0 1 0 -6.6 0M513.6 522.2a3.3 3.3 0 1 0 6.6 0a3.3 3.3 0 1 0 -6.6 0M514.5 523.5a3.3 3.3 0 1 0 6.6 0a3.3 3.3 0 1 0 -6.6 0M525.1 523.0a3.3 3.3 0 1 0 6.6 0a3.3 3.3 0 1 0 -6.6 0M507.3 524.1a3.3 3.3 0 1 0 6.6 0a3.3 3.3 0 1 0 -6.6 0M494.0 524.1a3.3 3.3 0 1 0 6.6 0a3.3 3.3 0 1 0 -6.6 0M503.6 518.8a3.3 3.3 0 1 0 6.6 0a3.3 3.3 0 1 0 -6.6 0M496.0 516.3a3.3 3.3 0 1 0 6.6 0a3.3 3.3 0 1 0 -6.6 0M515.9 523.6a3.3 3.3 0 1 0 6.6 0a3.3 3.3 0 1 0 -6.6 0M494.8 520.3a3.3 3.3 0 1 0 6.6 0a3.3 3.3 0 1 0 -6.6 0M512.5 520.9a3.3 3.3 0 1 0 6.6 0a3.3 3.3 0 1 0 -6.6 0M497.5 525.5a3.3 3.3 0 1 0 6.6 0a3.3 3.3 0 1 0 -6.6 0M512.2 518.4a3.3 3.3 0 1 0 6.6 0a3.3 3.3 0 1 0 -6.6 0M521.1 518.9a3.3 3.3 0 1 0 6.6 0a3.3 3.3 0 1 0 -6.6 0M508.7 514.0a3.3 3.3 0 1 0 6.6 0a3.3 3.3 0 1 0 -6.6 0M494.8 519.4a3.3 3.3 0 1 0 6.6 0a3.3 3.3 0 1 0 -6.6 0M506.6 514.2a3.3 3.3 0 1 0 6.6 0a3.3 3.3 0 1 0 -6.6 0M519.4 516.1a3.3 3.3 0 1 0 6.6 0a3.3 3.3 0 1 0 -6.6 0M493.8 522.2a3.3 3.3 0 1 0 6.6 0a3.3 3.3 0 1 0 -6.6 0M516.8 522.7a3.3 3.3 0 1 0 6.6 0a3.3 3.3 0 1 0 -6.6 0M525.1 517.2a3.3 3.3 0 1 0 6.6 0a3.3 3.3 0 1 0 -6.6 0M536.0 518.8a3.3 3.3 0 1 0 6.6 0a3.3 3.3 0 1 0 -6.6 0M539.0 518.9a3.3 3.3 0 1 0 6.6 0a3.3 3.3 0 1 0 -6.6 0M541.9 515.2a3.3 3.3 0 1 0 6.6 0a3.3 3.3 0 1 0 -6.6 0M545.8 517.1a3.3 3.3 0 1 0 6.6 0a3.3 3.3 0 1 0 -6.6 0M548.4 518.0a3.3 3.3 0 1 0 6.6 0a3.3 3.3 0 1 0 -6.6 0M551.0 517.9a3.3 3.3 0 1 0 6.6 0a3.3 3.3 0 1 0 -6.6 0M554.2 518.2a3.3 3.3 0 1 0 6.6 0a3.3 3.3 0 1 0 -6.6 0M557.6 517.7a3.3 3.3 0 1 0 6.6 0a3.3 3.3 0 1 0 -6.6 0M560.0 516.5a3.3 3.3 0 1 0 6.6 0a3.3 3.3 0 1 0 -6.6 0M563.8 516.1a3.3 3.3 0 1 0 6.6 0a3.3 3.3 0 1 0 -6.6 0M566.2 521.1a3.3 3.3 0 1 0 6.6 0a3.3 3.3 0 1 0 -6.6 0M569.8 517.6a3.3 3.3 0 1 0 6.6 0a3.3 3.3 0 1 0 -6.6 0M572.5 520.1a3.3 3.3 0 1 0 6.6 0a3.3 3.3 0 1 0 -6.6 0M575.4 521.1a3.3 3.3 0 1 0 6.6 0a3.3 3.3 0 1 0 -6.6 0M577.9 519.1a3.3 3.3 0 1 0 6.6 0a3.3 3.3 0 1 0 -6.6 0M581.2 519.4a3.3 3.3 0 1 0 6.6 0a3.3 3.3 0 1 0 -6.6 0M584.6 516.6a3.3 3.3 0 1 0 6.6 0a3.3 3.3 0 1 0 -6.6 0M587.0 517.9a3.3 3.3 0 1 0 6.6 0a3.3 3.3 0 1 0 -6.6 0M590.5 515.5a3.3 3.3 0 1 0 6.6 0a3.3 3.3 0 1 0 -6.6 0M593.6 518.5a3.3 3.3 0 1 0 6.6 0a3.3 3.3 0 1 0 -6.6 0M596.1 517.5a3.3 3.3 0 1 0 6.6 0a3.3 3.3 0 1 0 -6.6 0M599.7 517.3a3.3 3.3 0 1 0 6.6 0a3.3 3.3 0 1 0 -6.6 0M602.8 518.3a3.3 3.3 0 1 0 6.6 0a3.3 3.3 0 1 0 -6.6 0M605.8 520.8a3.3 3.3 0 1 0 6.6 0a3.3 3.3 0 1 0 -6.6 0M608.8 524.2a3.3 3.3 0 1 0 6.6 0a3.3 3.3 0 1 0 -6.6 0M611.6 522.0a3.3 3.3 0 1 0 6.6 0a3.3 3.3 0 1 0 -6.6 0M614.3 525.1a3.3 3.3 0 1 0 6.6 0a3.3 3.3 0 1 0 -6.6 0M617.7 523.2a3.3 3.3 0 1 0 6.6 0a3.3 3.3 0 1 0 -6.6 0M620.7 520.5a3.3 3.3 0 1 0 6.6 0a3.3 3.3 0 1 0 -6.6 0M623.4 519.1a3.3 3.3 0 1 0 6.6 0a3.3 3.3 0 1 0 -6.6 0M626.0 519.6a3.3 3.3 0 1 0 6.6 0a3.3 3.3 0 1 0 -6.6 0M628.9 520.7a3.3 3.3 0 1 0 6.6 0a3.3 3.3 0 1 0 -6.6 0M632.5 518.1a3.3 3.3 0 1 0 6.6 0a3.3 3.3 0 1 0 -6.6 0M635.6 517.4a3.3 3.3 0 1 0 6.6 0a3.3 3.3 0 1 0 -6.6 0M638.5 513.0a3.3 3.3 0 1 0 6.6 0a3.3 3.3 0 1 0 -6.6 0M641.2 513.0a3.3 3.3 0 1 0 6.6 0a3.3 3.3 0 1 0 -6.6 0M644.0 518.4a3.3 3.3 0 1 0 6.6 0a3.3 3.3 0 1 0 -6.6 0M647.0 517.0a3.3 3.3 0 1 0 6.6 0a3.3 3.3 0 1 0 -6.6 0M650.2 517.5a3.3 3.3 0 1 0 6.6 0a3.3 3.3 0 1 0 -6.6 0M653.7 518.1a3.3 3.3 0 1 0 6.6 0a3.3 3.3 0 1 0 -6.6 0M656.8 518.5a3.3 3.3 0 1 0 6.6 0a3.3 3.3 0 1 0 -6.6 0M659.2 518.3a3.3 3.3 0 1 0 6.6 0a3.3 3.3 0 1 0 -6.6 0M662.6 516.5a3.3 3.3 0 1 0 6.6 0a3.3 3.3 0 1 0 -6.6 0M665.2 517.0a3.3 3.3 0 1 0 6.6 0a3.3 3.3 0 1 0 -6.6 0M668.7 514.4a3.3 3.3 0 1 0 6.6 0a3.3 3.3 0 1 0 -6.6 0M671.7 516.5a3.3 3.3 0 1 0 6.6 0a3.3 3.3 0 1 0 -6.6 0M674.4 514.6a3.3 3.3 0 1 0 6.6 0a3.3 3.3 0 1 0 -6.6 0M677.2 514.2a3.3 3.3 0 1 0 6.6 0a3.3 3.3 0 1 0 -6.6 0M680.6 513.9a3.3 3.3 0 1 0 6.6 0a3.3 3.3 0 1 0 -6.6 0M683.6 515.5a3.3 3.3 0 1 0 6.6 0a3.3 3.3 0 1 0 -6.6 0M685.9 510.4a3.3 3.3 0 1 0 6.6 0a3.3 3.3 0 1 0 -6.6 0M689.8 510.4a3.3 3.3 0 1 0 6.6 0a3.3 3.3 0 1 0 -6.6 0M692.7 510.6a3.3 3.3 0 1 0 6.6 0a3.3 3.3 0 1 0 -6.6 0M571.1 519.6a3.3 3.3 0 1 0 6.6 0a3.3 3.3 0 1 0 -6.6 0M630.0 511.5a3.3 3.3 0 1 0 6.6 0a3.3 3.3 0 1 0 -6.6 0M581.0 518.1a3.3 3.3 0 1 0 6.6 0a3.3 3.3 0 1 0 -6.6 0M599.2 520.4a3.3 3.3 0 1 0 6.6 0a3.3 3.3 0 1 0 -6.6 0M580.6 518.3a3.3 3.3 0 1 0 6.6 0a3.3 3.3 0 1 0 -6.6 0M573.1 522.8a3.3 3.3 0 1 0 6.6 0a3.3 3.3 0 1 0 -6.6 0M615.1 522.2a3.3 3.3 0 1 0 6.6 0a3.3 3.3 0 1 0 -6.6 0M625.4 519.4a3.3 3.3 0 1 0 6.6 0a3.3 3.3 0 1 0 -6.6 0M623.7 517.6a3.3 3.3 0 1 0 6.6 0a3.3 3.3 0 1 0 -6.6 0M673.2 520.0a3.3 3.3 0 1 0 6.6 0a3.3 3.3 0 1 0 -6.6 0M550.8 518.3a3.3 3.3 0 1 0 6.6 0a3.3 3.3 0 1 0 -6.6 0M600.1 520.3a3.3 3.3 0 1 0 6.6 0a3.3 3.3 0 1 0 -6.6 0M545.3 520.5a3.3 3.3 0 1 0 6.6 0a3.3 3.3 0 1 0 -6.6 0M629.9 516.2a3.3 3.3 0 1 0 6.6 0a3.3 3.3 0 1 0 -6.6 0M644.2 521.5a3.3 3.3 0 1 0 6.6 0a3.3 3.3 0 1 0 -6.6 0M561.1 518.1a3.3 3.3 0 1 0 6.6 0a3.3 3.3 0 1 0 -6.6 0M678.2 517.9a3.3 3.3 0 1 0 6.6 0a3.3 3.3 0 1 0 -6.6 0M553.0 518.0a3.3 3.3 0 1 0 6.6 0a3.3 3.3 0 1 0 -6.6 0M582.5 515.0a3.3 3.3 0 1 0 6.6 0a3.3 3.3 0 1 0 -6.6 0M649.4 519.2a3.3 3.3 0 1 0 6.6 0a3.3 3.3 0 1 0 -6.6 0M546.1 517.4a3.3 3.3 0 1 0 6.6 0a3.3 3.3 0 1 0 -6.6 0M612.6 516.5a3.3 3.3 0 1 0 6.6 0a3.3 3.3 0 1 0 -6.6 0M571.5 523.5a3.3 3.3 0 1 0 6.6 0a3.3 3.3 0 1 0 -6.6 0M662.5 520.9a3.3 3.3 0 1 0 6.6 0a3.3 3.3 0 1 0 -6.6 0M536.2 518.7a3.3 3.3 0 1 0 6.6 0a3.3 3.3 0 1 0 -6.6 0M544.3 515.6a3.3 3.3 0 1 0 6.6 0a3.3 3.3 0 1 0 -6.6 0M578.4 518.2a3.3 3.3 0 1 0 6.6 0a3.3 3.3 0 1 0 -6.6 0M581.3 520.0a3.3 3.3 0 1 0 6.6 0a3.3 3.3 0 1 0 -6.6 0M634.2 526.9a3.3 3.3 0 1 0 6.6 0a3.3 3.3 0 1 0 -6.6 0M552.5 517.1a3.3 3.3 0 1 0 6.6 0a3.3 3.3 0 1 0 -6.6 0M593.1 521.0a3.3 3.3 0 1 0 6.6 0a3.3 3.3 0 1 0 -6.6 0M551.7 518.8a3.3 3.3 0 1 0 6.6 0a3.3 3.3 0 1 0 -6.6 0M576.3 518.4a3.3 3.3 0 1 0 6.6 0a3.3 3.3 0 1 0 -6.6 0M675.1 511.1a3.3 3.3 0 1 0 6.6 0a3.3 3.3 0 1 0 -6.6 0M592.0 513.5a3.3 3.3 0 1 0 6.6 0a3.3 3.3 0 1 0 -6.6 0M636.1 519.4a3.3 3.3 0 1 0 6.6 0a3.3 3.3 0 1 0 -6.6 0M643.5 515.2a3.3 3.3 0 1 0 6.6 0a3.3 3.3 0 1 0 -6.6 0M670.2 516.2a3.3 3.3 0 1 0 6.6 0a3.3 3.3 0 1 0 -6.6 0M590.1 513.3a3.3 3.3 0 1 0 6.6 0a3.3 3.3 0 1 0 -6.6 0M589.9 523.0a3.3 3.3 0 1 0 6.6 0a3.3 3.3 0 1 0 -6.6 0M588.4 513.7a3.3 3.3 0 1 0 6.6 0a3.3 3.3 0 1 0 -6.6 0M672.0 517.5a3.3 3.3 0 1 0 6.6 0a3.3 3.3 0 1 0 -6.6 0M563.6 515.3a3.3 3.3 0 1 0 6.6 0a3.3 3.3 0 1 0 -6.6 0M679.3 519.5a3.3 3.3 0 1 0 6.6 0a3.3 3.3 0 1 0 -6.6 0M624.8 521.1a3.3 3.3 0 1 0 6.6 0a3.3 3.3 0 1 0 -6.6 0M682.0 517.0a3.3 3.3 0 1 0 6.6 0a3.3 3.3 0 1 0 -6.6 0M632.9 524.9a3.3 3.3 0 1 0 6.6 0a3.3 3.3 0 1 0 -6.6 0M636.4 517.6a3.3 3.3 0 1 0 6.6 0a3.3 3.3 0 1 0 -6.6 0M618.6 528.0a3.3 3.3 0 1 0 6.6 0a3.3 3.3 0 1 0 -6.6 0M657.1 520.1a3.3 3.3 0 1 0 6.6 0a3.3 3.3 0 1 0 -6.6 0M596.2 521.2a3.3 3.3 0 1 0 6.6 0a3.3 3.3 0 1 0 -6.6 0M604.1 513.9a3.3 3.3 0 1 0 6.6 0a3.3 3.3 0 1 0 -6.6 0M675.4 515.5a3.3 3.3 0 1 0 6.6 0a3.3 3.3 0 1 0 -6.6 0M662.0 516.4a3.3 3.3 0 1 0 6.6 0a3.3 3.3 0 1 0 -6.6 0M575.2 519.0a3.3 3.3 0 1 0 6.6 0a3.3 3.3 0 1 0 -6.6 0M676.7 510.4a3.3 3.3 0 1 0 6.6 0a3.3 3.3 0 1 0 -6.6 0M537.9 517.5a3.3 3.3 0 1 0 6.6 0a3.3 3.3 0 1 0 -6.6 0M540.6 513.1a3.3 3.3 0 1 0 6.6 0a3.3 3.3 0 1 0 -6.6 0M676.5 512.8a3.3 3.3 0 1 0 6.6 0a3.3 3.3 0 1 0 -6.6 0M610.1 518.3a3.3 3.3 0 1 0 6.6 0a3.3 3.3 0 1 0 -6.6 0M637.2 517.5a3.3 3.3 0 1 0 6.6 0a3.3 3.3 0 1 0 -6.6 0M582.3 515.3a3.3 3.3 0 1 0 6.6 0a3.3 3.3 0 1 0 -6.6 0M569.3 524.7a3.3 3.3 0 1 0 6.6 0a3.3 3.3 0 1 0 -6.6 0M579.1 523.6a3.3 3.3 0 1 0 6.6 0a3.3 3.3 0 1 0 -6.6 0M539.8 520.4a3.3 3.3 0 1 0 6.6 0a3.3 3.3 0 1 0 -6.6 0M635.1 520.6a3.3 3.3 0 1 0 6.6 0a3.3 3.3 0 1 0 -6.6 0M619.6 522.2a3.3 3.3 0 1 0 6.6 0a3.3 3.3 0 1 0 -6.6 0M609.9 525.0a3.3 3.3 0 1 0 6.6 0a3.3 3.3 0 1 0 -6.6 0M666.8 512.4a3.3 3.3 0 1 0 6.6 0a3.3 3.3 0 1 0 -6.6 0M656.2 516.9a3.3 3.3 0 1 0 6.6 0a3.3 3.3 0 1 0 -6.6 0M643.1 514.1a3.3 3.3 0 1 0 6.6 0a3.3 3.3 0 1 0 -6.6 0M538.5 516.8a3.3 3.3 0 1 0 6.6 0a3.3 3.3 0 1 0 -6.6 0M618.2 523.6a3.3 3.3 0 1 0 6.6 0a3.3 3.3 0 1 0 -6.6 0M653.3 516.2a3.3 3.3 0 1 0 6.6 0a3.3 3.3 0 1 0 -6.6 0M595.3 517.2a3.3 3.3 0 1 0 6.6 0a3.3 3.3 0 1 0 -6.6 0M684.6 512.9a3.3 3.3 0 1 0 6.6 0a3.3 3.3 0 1 0 -6.6 0M648.1 520.9a3.3 3.3 0 1 0 6.6 0a3.3 3.3 0 1 0 -6.6 0M588.0 507.7a3.3 3.3 0 1 0 6.6 0a3.3 3.3 0 1 0 -6.6 0M628.6 519.6a3.3 3.3 0 1 0 6.6 0a3.3 3.3 0 1 0 -6.6 0M567.3 525.3a3.3 3.3 0 1 0 6.6 0a3.3 3.3 0 1 0 -6.6 0M556.9 517.8a3.3 3.3 0 1 0 6.6 0a3.3 3.3 0 1 0 -6.6 0M548.6 520.1a3.3 3.3 0 1 0 6.6 0a3.3 3.3 0 1 0 -6.6 0M664.3 519.2a3.3 3.3 0 1 0 6.6 0a3.3 3.3 0 1 0 -6.6 0M581.5 520.4a3.3 3.3 0 1 0 6.6 0a3.3 3.3 0 1 0 -6.6 0M640.4 515.7a3.3 3.3 0 1 0 6.6 0a3.3 3.3 0 1 0 -6.6 0M680.2 510.1a3.3 3.3 0 1 0 6.6 0a3.3 3.3 0 1 0 -6.6 0M685.2 520.4a3.3 3.3 0 1 0 6.6 0a3.3 3.3 0 1 0 -6.6 0M604.4 519.8a3.3 3.3 0 1 0 6.6 0a3.3 3.3 0 1 0 -6.6 0M612.8 527.7a3.3 3.3 0 1 0 6.6 0a3.3 3.3 0 1 0 -6.6 0M575.1 515.1a3.3 3.3 0 1 0 6.6 0a3.3 3.3 0 1 0 -6.6 0M666.1 519.0a3.3 3.3 0 1 0 6.6 0a3.3 3.3 0 1 0 -6.6 0M578.8 518.3a3.3 3.3 0 1 0 6.6 0a3.3 3.3 0 1 0 -6.6 0M574.6 527.0a3.3 3.3 0 1 0 6.6 0a3.3 3.3 0 1 0 -6.6 0M560.8 516.2a3.3 3.3 0 1 0 6.6 0a3.3 3.3 0 1 0 -6.6 0M652.1 521.2a3.3 3.3 0 1 0 6.6 0a3.3 3.3 0 1 0 -6.6 0M690.9 508.6a3.3 3.3 0 1 0 6.6 0a3.3 3.3 0 1 0 -6.6 0M546.1 519.4a3.3 3.3 0 1 0 6.6 0a3.3 3.3 0 1 0 -6.6 0M585.5 517.2a3.3 3.3 0 1 0 6.6 0a3.3 3.3 0 1 0 -6.6 0M676.5 510.9a3.3 3.3 0 1 0 6.6 0a3.3 3.3 0 1 0 -6.6 0M571.8 519.2a3.3 3.3 0 1 0 6.6 0a3.3 3.3 0 1 0 -6.6 0M673.6 514.7a3.3 3.3 0 1 0 6.6 0a3.3 3.3 0 1 0 -6.6 0M689.8 512.3a3.3 3.3 0 1 0 6.6 0a3.3 3.3 0 1 0 -6.6 0M637.6 518.7a3.3 3.3 0 1 0 6.6 0a3.3 3.3 0 1 0 -6.6 0M602.0 521.8a3.3 3.3 0 1 0 6.6 0a3.3 3.3 0 1 0 -6.6 0M625.8 516.9a3.3 3.3 0 1 0 6.6 0a3.3 3.3 0 1 0 -6.6 0M592.9 509.2a3.3 3.3 0 1 0 6.6 0a3.3 3.3 0 1 0 -6.6 0M656.6 516.7a3.3 3.3 0 1 0 6.6 0a3.3 3.3 0 1 0 -6.6 0M646.4 512.1a3.3 3.3 0 1 0 6.6 0a3.3 3.3 0 1 0 -6.6 0M648.4 520.6a3.3 3.3 0 1 0 6.6 0a3.3 3.3 0 1 0 -6.6 0M615.6 527.0a3.3 3.3 0 1 0 6.6 0a3.3 3.3 0 1 0 -6.6 0M589.8 519.4a3.3 3.3 0 1 0 6.6 0a3.3 3.3 0 1 0 -6.6 0M608.3 529.6a3.3 3.3 0 1 0 6.6 0a3.3 3.3 0 1 0 -6.6 0M616.5 524.7a3.3 3.3 0 1 0 6.6 0a3.3 3.3 0 1 0 -6.6 0M601.8 523.7a3.3 3.3 0 1 0 6.6 0a3.3 3.3 0 1 0 -6.6 0M623.6 521.1a3.3 3.3 0 1 0 6.6 0a3.3 3.3 0 1 0 -6.6 0M681.7 517.1a3.3 3.3 0 1 0 6.6 0a3.3 3.3 0 1 0 -6.6 0M575.8 518.3a3.3 3.3 0 1 0 6.6 0a3.3 3.3 0 1 0 -6.6 0M657.6 519.6a3.3 3.3 0 1 0 6.6 0a3.3 3.3 0 1 0 -6.6 0M618.0 521.0a3.3 3.3 0 1 0 6.6 0a3.3 3.3 0 1 0 -6.6 0M622.9 515.4a3.3 3.3 0 1 0 6.6 0a3.3 3.3 0 1 0 -6.6 0M572.2 521.7a3.3 3.3 0 1 0 6.6 0a3.3 3.3 0 1 0 -6.6 0M650.0 517.6a3.3 3.3 0 1 0 6.6 0a3.3 3.3 0 1 0 -6.6 0M558.7 516.4a3.3 3.3 0 1 0 6.6 0a3.3 3.3 0 1 0 -6.6 0M640.5 522.6a3.3 3.3 0 1 0 6.6 0a3.3 3.3 0 1 0 -6.6 0M621.9 519.7a3.3 3.3 0 1 0 6.6 0a3.3 3.3 0 1 0 -6.6 0M650.8 517.3a3.3 3.3 0 1 0 6.6 0a3.3 3.3 0 1 0 -6.6 0M655.2 518.0a3.3 3.3 0 1 0 6.6 0a3.3 3.3 0 1 0 -6.6 0M678.6 519.5a3.3 3.3 0 1 0 6.6 0a3.3 3.3 0 1 0 -6.6 0M691.8 508.0a3.3 3.3 0 1 0 6.6 0a3.3 3.3 0 1 0 -6.6 0M574.2 515.6a3.3 3.3 0 1 0 6.6 0a3.3 3.3 0 1 0 -6.6 0M573.1 516.8a3.3 3.3 0 1 0 6.6 0a3.3 3.3 0 1 0 -6.6 0M599.9 516.6a3.3 3.3 0 1 0 6.6 0a3.3 3.3 0 1 0 -6.6 0M569.3 525.4a3.3 3.3 0 1 0 6.6 0a3.3 3.3 0 1 0 -6.6 0M593.4 521.5a3.3 3.3 0 1 0 6.6 0a3.3 3.3 0 1 0 -6.6 0M594.0 511.5a3.3 3.3 0 1 0 6.6 0a3.3 3.3 0 1 0 -6.6 0M600.5 523.8a3.3 3.3 0 1 0 6.6 0a3.3 3.3 0 1 0 -6.6 0M679.5 509.3a3.3 3.3 0 1 0 6.6 0a3.3 3.3 0 1 0 -6.6 0M556.3 517.0a3.3 3.3 0 1 0 6.6 0a3.3 3.3 0 1 0 -6.6 0M647.7 517.7a3.3 3.3 0 1 0 6.6 0a3.3 3.3 0 1 0 -6.6 0M601.4 522.1a3.3 3.3 0 1 0 6.6 0a3.3 3.3 0 1 0 -6.6 0M564.8 520.3a3.3 3.3 0 1 0 6.6 0a3.3 3.3 0 1 0 -6.6 0M607.0 515.6a3.3 3.3 0 1 0 6.6 0a3.3 3.3 0 1 0 -6.6 0M645.2 517.2a3.3 3.3 0 1 0 6.6 0a3.3 3.3 0 1 0 -6.6 0M593.6 511.2a3.3 3.3 0 1 0 6.6 0a3.3 3.3 0 1 0 -6.6 0M655.5 513.8a3.3 3.3 0 1 0 6.6 0a3.3 3.3 0 1 0 -6.6 0M672.9 512.1a3.3 3.3 0 1 0 6.6 0a3.3 3.3 0 1 0 -6.6 0M560.5 518.9a3.3 3.3 0 1 0 6.6 0a3.3 3.3 0 1 0 -6.6 0M540.7 520.8a3.3 3.3 0 1 0 6.6 0a3.3 3.3 0 1 0 -6.6 0M602.1 514.5a3.3 3.3 0 1 0 6.6 0a3.3 3.3 0 1 0 -6.6 0M577.1 520.3a3.3 3.3 0 1 0 6.6 0a3.3 3.3 0 1 0 -6.6 0M666.7 513.5a3.3 3.3 0 1 0 6.6 0a3.3 3.3 0 1 0 -6.6 0M666.7 514.2a3.3 3.3 0 1 0 6.6 0a3.3 3.3 0 1 0 -6.6 0M539.1 518.1a3.3 3.3 0 1 0 6.6 0a3.3 3.3 0 1 0 -6.6 0M569.1 522.4a3.3 3.3 0 1 0 6.6 0a3.3 3.3 0 1 0 -6.6 0M563.0 519.9a3.3 3.3 0 1 0 6.6 0a3.3 3.3 0 1 0 -6.6 0M556.3 516.1a3.3 3.3 0 1 0 6.6 0a3.3 3.3 0 1 0 -6.6 0M552.3 517.5a3.3 3.3 0 1 0 6.6 0a3.3 3.3 0 1 0 -6.6 0M574.7 521.9a3.3 3.3 0 1 0 6.6 0a3.3 3.3 0 1 0 -6.6 0M627.8 520.2a3.3 3.3 0 1 0 6.6 0a3.3 3.3 0 1 0 -6.6 0M627.0 522.0a3.3 3.3 0 1 0 6.6 0a3.3 3.3 0 1 0 -6.6 0M620.9 517.7a3.3 3.3 0 1 0 6.6 0a3.3 3.3 0 1 0 -6.6 0M600.9 519.5a3.3 3.3 0 1 0 6.6 0a3.3 3.3 0 1 0 -6.6 0M629.0 526.0a3.3 3.3 0 1 0 6.6 0a3.3 3.3 0 1 0 -6.6 0M657.0 519.9a3.3 3.3 0 1 0 6.6 0a3.3 3.3 0 1 0 -6.6 0M681.8 517.7a3.3 3.3 0 1 0 6.6 0a3.3 3.3 0 1 0 -6.6 0M622.2 517.7a3.3 3.3 0 1 0 6.6 0a3.3 3.3 0 1 0 -6.6 0M611.3 530.6a3.3 3.3 0 1 0 6.6 0a3.3 3.3 0 1 0 -6.6 0M617.2 518.7a3.3 3.3 0 1 0 6.6 0a3.3 3.3 0 1 0 -6.6 0M602.8 522.5a3.3 3.3 0 1 0 6.6 0a3.3 3.3 0 1 0 -6.6 0M572.5 522.9a3.3 3.3 0 1 0 6.6 0a3.3 3.3 0 1 0 -6.6 0M565.9 517.1a3.3 3.3 0 1 0 6.6 0a3.3 3.3 0 1 0 -6.6 0M617.6 525.1a3.3 3.3 0 1 0 6.6 0a3.3 3.3 0 1 0 -6.6 0M544.7 518.1a3.3 3.3 0 1 0 6.6 0a3.3 3.3 0 1 0 -6.6 0M642.1 517.4a3.3 3.3 0 1 0 6.6 0a3.3 3.3 0 1 0 -6.6 0M543.1 515.8a3.3 3.3 0 1 0 6.6 0a3.3 3.3 0 1 0 -6.6 0M598.1 521.6a3.3 3.3 0 1 0 6.6 0a3.3 3.3 0 1 0 -6.6 0M580.6 516.9a3.3 3.3 0 1 0 6.6 0a3.3 3.3 0 1 0 -6.6 0M679.0 512.1a3.3 3.3 0 1 0 6.6 0a3.3 3.3 0 1 0 -6.6 0M566.1 520.9a3.3 3.3 0 1 0 6.6 0a3.3 3.3 0 1 0 -6.6 0M554.3 516.8a3.3 3.3 0 1 0 6.6 0a3.3 3.3 0 1 0 -6.6 0M622.3 514.6a3.3 3.3 0 1 0 6.6 0a3.3 3.3 0 1 0 -6.6 0M664.4 512.4a3.3 3.3 0 1 0 6.6 0a3.3 3.3 0 1 0 -6.6 0M602.8 521.7a3.3 3.3 0 1 0 6.6 0a3.3 3.3 0 1 0 -6.6 0M550.1 516.6a3.3 3.3 0 1 0 6.6 0a3.3 3.3 0 1 0 -6.6 0M688.4 514.3a3.3 3.3 0 1 0 6.6 0a3.3 3.3 0 1 0 -6.6 0M685.8 513.4a3.3 3.3 0 1 0 6.6 0a3.3 3.3 0 1 0 -6.6 0M679.9 513.0a3.3 3.3 0 1 0 6.6 0a3.3 3.3 0 1 0 -6.6 0M656.8 520.3a3.3 3.3 0 1 0 6.6 0a3.3 3.3 0 1 0 -6.6 0M603.9 515.5a3.3 3.3 0 1 0 6.6 0a3.3 3.3 0 1 0 -6.6 0M578.9 519.7a3.3 3.3 0 1 0 6.6 0a3.3 3.3 0 1 0 -6.6 0M661.9 515.6a3.3 3.3 0 1 0 6.6 0a3.3 3.3 0 1 0 -6.6 0M536.1 520.2a3.3 3.3 0 1 0 6.6 0a3.3 3.3 0 1 0 -6.6 0M686.4 514.6a3.3 3.3 0 1 0 6.6 0a3.3 3.3 0 1 0 -6.6 0M605.0 525.9a3.3 3.3 0 1 0 6.6 0a3.3 3.3 0 1 0 -6.6 0M664.5 512.9a3.3 3.3 0 1 0 6.6 0a3.3 3.3 0 1 0 -6.6 0M564.6 514.9a3.3 3.3 0 1 0 6.6 0a3.3 3.3 0 1 0 -6.6 0M625.5 517.6a3.3 3.3 0 1 0 6.6 0a3.3 3.3 0 1 0 -6.6 0M673.5 509.5a3.3 3.3 0 1 0 6.6 0a3.3 3.3 0 1 0 -6.6 0M537.3 515.5a3.3 3.3 0 1 0 6.6 0a3.3 3.3 0 1 0 -6.6 0M623.3 520.2a3.3 3.3 0 1 0 6.6 0a3.3 3.3 0 1 0 -6.6 0M633.0 512.6a3.3 3.3 0 1 0 6.6 0a3.3 3.3 0 1 0 -6.6 0M667.5 522.5a3.3 3.3 0 1 0 6.6 0a3.3 3.3 0 1 0 -6.6 0M688.4 512.7a3.3 3.3 0 1 0 6.6 0a3.3 3.3 0 1 0 -6.6 0M600.8 513.8a3.3 3.3 0 1 0 6.6 0a3.3 3.3 0 1 0 -6.6 0M606.7 527.6a3.3 3.3 0 1 0 6.6 0a3.3 3.3 0 1 0 -6.6 0M588.6 514.1a3.3 3.3 0 1 0 6.6 0a3.3 3.3 0 1 0 -6.6 0M673.5 515.5a3.3 3.3 0 1 0 6.6 0a3.3 3.3 0 1 0 -6.6 0M630.0 519.1a3.3 3.3 0 1 0 6.6 0a3.3 3.3 0 1 0 -6.6 0M501.7 537.2a3.3 3.3 0 1 0 6.6 0a3.3 3.3 0 1 0 -6.6 0M515.5 531.4a3.3 3.3 0 1 0 6.6 0a3.3 3.3 0 1 0 -6.6 0M515.5 539.7a3.3 3.3 0 1 0 6.6 0a3.3 3.3 0 1 0 -6.6 0M501.7 531.4a3.3 3.3 0 1 0 6.6 0a3.3 3.3 0 1 0 -6.6 0M524.3 528.9a3.3 3.3 0 1 0 6.6 0a3.3 3.3 0 1 0 -6.6 0M561.9 507.1a3.3 3.3 0 1 0 6.6 0a3.3 3.3 0 1 0 -6.6 0M634.5 503.8a3.3 3.3 0 1 0 6.6 0a3.3 3.3 0 1 0 -6.6 0M557.4 526.4a3.3 3.3 0 1 0 6.6 0a3.3 3.3 0 1 0 -6.6 0M569.4 528.1a3.3 3.3 0 1 0 6.6 0a3.3 3.3 0 1 0 -6.6 0M645.1 530.6a3.3 3.3 0 1 0 6.6 0a3.3 3.3 0 1 0 -6.6 0M650.1 535.7a3.3 3.3 0 1 0 6.6 0a3.3 3.3 0 1 0 -6.6 0M658.3 529.6a3.3 3.3 0 1 0 6.6 0a3.3 3.3 0 1 0 -6.6 0M612.7 532.6a3.3 3.3 0 1 0 6.6 0a3.3 3.3 0 1 0 -6.6 0M630.8 530.1a3.3 3.3 0 1 0 6.6 0a3.3 3.3 0 1 0 -6.6 0M637.2 517.6a3.3 3.3 0 1 0 6.6 0a3.3 3.3 0 1 0 -6.6 0M639.8 514.0a3.3 3.3 0 1 0 6.6 0a3.3 3.3 0 1 0 -6.6 0M642.9 515.9a3.3 3.3 0 1 0 6.6 0a3.3 3.3 0 1 0 -6.6 0M645.9 516.3a3.3 3.3 0 1 0 6.6 0a3.3 3.3 0 1 0 -6.6 0M648.6 517.6a3.3 3.3 0 1 0 6.6 0a3.3 3.3 0 1 0 -6.6 0M651.6 515.4a3.3 3.3 0 1 0 6.6 0a3.3 3.3 0 1 0 -6.6 0M654.3 516.7a3.3 3.3 0 1 0 6.6 0a3.3 3.3 0 1 0 -6.6 0M657.4 515.1a3.3 3.3 0 1 0 6.6 0a3.3 3.3 0 1 0 -6.6 0M660.5 515.7a3.3 3.3 0 1 0 6.6 0a3.3 3.3 0 1 0 -6.6 0M663.6 518.2a3.3 3.3 0 1 0 6.6 0a3.3 3.3 0 1 0 -6.6 0M666.7 516.2a3.3 3.3 0 1 0 6.6 0a3.3 3.3 0 1 0 -6.6 0M669.6 515.5a3.3 3.3 0 1 0 6.6 0a3.3 3.3 0 1 0 -6.6 0M673.0 514.7a3.3 3.3 0 1 0 6.6 0a3.3 3.3 0 1 0 -6.6 0M675.7 513.1a3.3 3.3 0 1 0 6.6 0a3.3 3.3 0 1 0 -6.6 0M678.4 512.0a3.3 3.3 0 1 0 6.6 0a3.3 3.3 0 1 0 -6.6 0M681.3 513.8a3.3 3.3 0 1 0 6.6 0a3.3 3.3 0 1 0 -6.6 0M684.2 515.2a3.3 3.3 0 1 0 6.6 0a3.3 3.3 0 1 0 -6.6 0M687.8 511.5a3.3 3.3 0 1 0 6.6 0a3.3 3.3 0 1 0 -6.6 0M691.0 510.4a3.3 3.3 0 1 0 6.6 0a3.3 3.3 0 1 0 -6.6 0M671.1 518.4a3.3 3.3 0 1 0 6.6 0a3.3 3.3 0 1 0 -6.6 0M674.3 514.9a3.3 3.3 0 1 0 6.6 0a3.3 3.3 0 1 0 -6.6 0M651.0 513.6a3.3 3.3 0 1 0 6.6 0a3.3 3.3 0 1 0 -6.6 0M638.1 509.9a3.3 3.3 0 1 0 6.6 0a3.3 3.3 0 1 0 -6.6 0M688.3 511.4a3.3 3.3 0 1 0 6.6 0a3.3 3.3 0 1 0 -6.6 0M660.4 521.9a3.3 3.3 0 1 0 6.6 0a3.3 3.3 0 1 0 -6.6 0M654.0 513.5a3.3 3.3 0 1 0 6.6 0a3.3 3.3 0 1 0 -6.6 0M636.5 516.6a3.3 3.3 0 1 0 6.6 0a3.3 3.3 0 1 0 -6.6 0M686.3 511.8a3.3 3.3 0 1 0 6.6 0a3.3 3.3 0 1 0 -6.6 0M686.0 513.8a3.3 3.3 0 1 0 6.6 0a3.3 3.3 0 1 0 -6.6 0M640.2 511.5a3.3 3.3 0 1 0 6.6 0a3.3 3.3 0 1 0 -6.6 0M670.7 515.1a3.3 3.3 0 1 0 6.6 0a3.3 3.3 0 1 0 -6.6 0M682.0 512.6a3.3 3.3 0 1 0 6.6 0a3.3 3.3 0 1 0 -6.6 0M659.4 519.4a3.3 3.3 0 1 0 6.6 0a3.3 3.3 0 1 0 -6.6 0M660.5 517.5a3.3 3.3 0 1 0 6.6 0a3.3 3.3 0 1 0 -6.6 0M661.9 517.2a3.3 3.3 0 1 0 6.6 0a3.3 3.3 0 1 0 -6.6 0M673.5 514.3a3.3 3.3 0 1 0 6.6 0a3.3 3.3 0 1 0 -6.6 0M673.4 520.7a3.3 3.3 0 1 0 6.6 0a3.3 3.3 0 1 0 -6.6 0M653.3 521.7a3.3 3.3 0 1 0 6.6 0a3.3 3.3 0 1 0 -6.6 0M681.8 512.7a3.3 3.3 0 1 0 6.6 0a3.3 3.3 0 1 0 -6.6 0M646.2 514.9a3.3 3.3 0 1 0 6.6 0a3.3 3.3 0 1 0 -6.6 0M660.4 516.1a3.3 3.3 0 1 0 6.6 0a3.3 3.3 0 1 0 -6.6 0M668.3 517.2a3.3 3.3 0 1 0 6.6 0a3.3 3.3 0 1 0 -6.6 0M676.0 510.7a3.3 3.3 0 1 0 6.6 0a3.3 3.3 0 1 0 -6.6 0M638.3 517.0a3.3 3.3 0 1 0 6.6 0a3.3 3.3 0 1 0 -6.6 0M659.3 517.3a3.3 3.3 0 1 0 6.6 0a3.3 3.3 0 1 0 -6.6 0M638.7 515.1a3.3 3.3 0 1 0 6.6 0a3.3 3.3 0 1 0 -6.6 0M688.0 511.0a3.3 3.3 0 1 0 6.6 0a3.3 3.3 0 1 0 -6.6 0M643.6 516.1a3.3 3.3 0 1 0 6.6 0a3.3 3.3 0 1 0 -6.6 0M641.0 517.2a3.3 3.3 0 1 0 6.6 0a3.3 3.3 0 1 0 -6.6 0M679.4 519.1a3.3 3.3 0 1 0 6.6 0a3.3 3.3 0 1 0 -6.6 0M658.0 513.0a3.3 3.3 0 1 0 6.6 0a3.3 3.3 0 1 0 -6.6 0M686.0 510.6a3.3 3.3 0 1 0 6.6 0a3.3 3.3 0 1 0 -6.6 0M658.3 511.1a3.3 3.3 0 1 0 6.6 0a3.3 3.3 0 1 0 -6.6 0M687.8 510.8a3.3 3.3 0 1 0 6.6 0a3.3 3.3 0 1 0 -6.6 0M638.0 520.0a3.3 3.3 0 1 0 6.6 0a3.3 3.3 0 1 0 -6.6 0M676.4 519.4a3.3 3.3 0 1 0 6.6 0a3.3 3.3 0 1 0 -6.6 0M639.4 515.9a3.3 3.3 0 1 0 6.6 0a3.3 3.3 0 1 0 -6.6 0M659.5 511.8a3.3 3.3 0 1 0 6.6 0a3.3 3.3 0 1 0 -6.6 0M684.7 514.1a3.3 3.3 0 1 0 6.6 0a3.3 3.3 0 1 0 -6.6 0M685.1 516.6a3.3 3.3 0 1 0 6.6 0a3.3 3.3 0 1 0 -6.6 0M649.3 523.0a3.3 3.3 0 1 0 6.6 0a3.3 3.3 0 1 0 -6.6 0M657.6 514.2a3.3 3.3 0 1 0 6.6 0a3.3 3.3 0 1 0 -6.6 0M655.9 524.2a3.3 3.3 0 1 0 6.6 0a3.3 3.3 0 1 0 -6.6 0M687.1 515.4a3.3 3.3 0 1 0 6.6 0a3.3 3.3 0 1 0 -6.6 0M687.0 517.7a3.3 3.3 0 1 0 6.6 0a3.3 3.3 0 1 0 -6.6 0M680.8 512.9a3.3 3.3 0 1 0 6.6 0a3.3 3.3 0 1 0 -6.6 0M674.9 511.1a3.3 3.3 0 1 0 6.6 0a3.3 3.3 0 1 0 -6.6 0M647.0 520.5a3.3 3.3 0 1 0 6.6 0a3.3 3.3 0 1 0 -6.6 0M692.1 512.7a3.3 3.3 0 1 0 6.6 0a3.3 3.3 0 1 0 -6.6 0M674.7 514.5a3.3 3.3 0 1 0 6.6 0a3.3 3.3 0 1 0 -6.6 0M643.4 512.7a3.3 3.3 0 1 0 6.6 0a3.3 3.3 0 1 0 -6.6 0M656.2 512.1a3.3 3.3 0 1 0 6.6 0a3.3 3.3 0 1 0 -6.6 0M685.2 520.0a3.3 3.3 0 1 0 6.6 0a3.3 3.3 0 1 0 -6.6 0M647.1 519.6a3.3 3.3 0 1 0 6.6 0a3.3 3.3 0 1 0 -6.6 0M681.4 514.7a3.3 3.3 0 1 0 6.6 0a3.3 3.3 0 1 0 -6.6 0M669.2 512.9a3.3 3.3 0 1 0 6.6 0a3.3 3.3 0 1 0 -6.6 0M677.7 513.9a3.3 3.3 0 1 0 6.6 0a3.3 3.3 0 1 0 -6.6 0M665.7 512.6a3.3 3.3 0 1 0 6.6 0a3.3 3.3 0 1 0 -6.6 0M677.8 515.8a3.3 3.3 0 1 0 6.6 0a3.3 3.3 0 1 0 -6.6 0M682.5 520.9a3.3 3.3 0 1 0 6.6 0a3.3 3.3 0 1 0 -6.6 0M638.4 517.0a3.3 3.3 0 1 0 6.6 0a3.3 3.3 0 1 0 -6.6 0M677.5 514.9a3.3 3.3 0 1 0 6.6 0a3.3 3.3 0 1 0 -6.6 0M641.2 512.3a3.3 3.3 0 1 0 6.6 0a3.3 3.3 0 1 0 -6.6 0M651.5 516.3a3.3 3.3 0 1 0 6.6 0a3.3 3.3 0 1 0 -6.6 0M677.7 517.9a3.3 3.3 0 1 0 6.6 0a3.3 3.3 0 1 0 -6.6 0M670.0 520.2a3.3 3.3 0 1 0 6.6 0a3.3 3.3 0 1 0 -6.6 0M675.1 515.4a3.3 3.3 0 1 0 6.6 0a3.3 3.3 0 1 0 -6.6 0M667.9 513.9a3.3 3.3 0 1 0 6.6 0a3.3 3.3 0 1 0 -6.6 0M680.9 520.2a3.3 3.3 0 1 0 6.6 0a3.3 3.3 0 1 0 -6.6 0M664.5 518.2a3.3 3.3 0 1 0 6.6 0a3.3 3.3 0 1 0 -6.6 0M702.1 517.1a3.3 3.3 0 1 0 6.6 0a3.3 3.3 0 1 0 -6.6 0M705.2 513.3a3.3 3.3 0 1 0 6.6 0a3.3 3.3 0 1 0 -6.6 0M707.7 509.9a3.3 3.3 0 1 0 6.6 0a3.3 3.3 0 1 0 -6.6 0M706.9 511.9a3.3 3.3 0 1 0 6.6 0a3.3 3.3 0 1 0 -6.6 0M701.8 519.3a3.3 3.3 0 1 0 6.6 0a3.3 3.3 0 1 0 -6.6 0M703.4 518.7a3.3 3.3 0 1 0 6.6 0a3.3 3.3 0 1 0 -6.6 0M705.6 516.2a3.3 3.3 0 1 0 6.6 0a3.3 3.3 0 1 0 -6.6 0M705.5 512.4a3.3 3.3 0 1 0 6.6 0a3.3 3.3 0 1 0 -6.6 0M707.8 512.9a3.3 3.3 0 1 0 6.6 0a3.3 3.3 0 1 0 -6.6 0M702.5 519.5a3.3 3.3 0 1 0 6.6 0a3.3 3.3 0 1 0 -6.6 0M704.7 510.8a3.3 3.3 0 1 0 6.6 0a3.3 3.3 0 1 0 -6.6 0M703.1 514.6a3.3 3.3 0 1 0 6.6 0a3.3 3.3 0 1 0 -6.6 0M704.1 510.6a3.3 3.3 0 1 0 6.6 0a3.3 3.3 0 1 0 -6.6 0M706.3 508.1a3.3 3.3 0 1 0 6.6 0a3.3 3.3 0 1 0 -6.6 0M644.9 530.9a3.3 3.3 0 1 0 6.6 0a3.3 3.3 0 1 0 -6.6 0M649.9 535.6a3.3 3.3 0 1 0 6.6 0a3.3 3.3 0 1 0 -6.6 0M657.3 528.0a3.3 3.3 0 1 0 6.6 0a3.3 3.3 0 1 0 -6.6 0M660.6 531.3a3.3 3.3 0 1 0 6.6 0a3.3 3.3 0 1 0 -6.6 0M692.4 504.3a3.3 3.3 0 1 0 6.6 0a3.3 3.3 0 1 0 -6.6 0"/>
</g>
<g fill="#ff0000" shape-rendering="crispEdges"><rect x="93" y="220" width="6" height="2"/><rect x="95" y="220" width="2" height="11"/><rect x="93" y="229" width="6" height="2"/><rect x="93" y="399" width="6" height="2"/><rect x="95" y="399" width="2" height="5"/><rect x="93" y="402" width="6" height="2"/><rect x="93" y="450" width="6" height="2"/><rect x="95" y="450" width="2" height="9"/><rect x="93" y="457" width="6" height="2"/></g>
<text transform="matrix(0.21364,0,0,0.20000,376.932,39.000)" font-size="100" fill="#00ffff">2134+004</text><text transform="matrix(0.16377,0,0,0.18571,402.472,665.000)" font-size="100" fill="#00ffff">YEAR</text><text transform="matrix(0.20379,0,0,0.20000,52.773,628.000)" font-size="100" fill="#fff" stroke="#000" stroke-width="2.00">1982</text><text transform="matrix(0.20188,0,0,0.20000,155.587,628.000)" font-size="100" fill="#fff" stroke="#000" stroke-width="2.00">1984</text><text transform="matrix(0.20283,0,0,0.20000,258.380,628.000)" font-size="100" fill="#fff" stroke="#000" stroke-width="2.00">1986</text><text transform="matrix(0.20379,0,0,0.20000,361.173,628.000)" font-size="100" fill="#fff" stroke="#000" stroke-width="2.00">1988</text><text transform="matrix(0.20283,0,0,0.20000,463.980,628.000)" font-size="100" fill="#fff" stroke="#000" stroke-width="2.00">1990</text><text transform="matrix(0.20283,0,0,0.20000,566.780,628.000)" font-size="100" fill="#fff" stroke="#000" stroke-width="2.00">1992</text><text transform="matrix(0.20188,0,0,0.20000,669.587,628.000)" font-size="100" fill="#fff" stroke="#000" stroke-width="2.00">1994</text><text transform="matrix(0,-0.20000,0.20000,0,63.000,143.400)" font-size="100" fill="#fff" stroke="#000" stroke-width="2.00">10</text><text transform="matrix(0,-0.20000,0.20000,0,63.000,197.800)" font-size="100" fill="#fff" stroke="#000" stroke-width="2.00">5</text><text transform="matrix(0,-0.20000,0.20000,0,63.000,257.400)" font-size="100" fill="#fff" stroke="#000" stroke-width="2.00">0</text><text transform="matrix(0,-0.20000,0.20000,0,63.000,319.800)" font-size="100" fill="#fff" stroke="#000" stroke-width="2.00">10</text><text transform="matrix(0,-0.20000,0.20000,0,63.000,374.600)" font-size="100" fill="#fff" stroke="#000" stroke-width="2.00">5</text><text transform="matrix(0,-0.20000,0.20000,0,63.000,433.500)" font-size="100" fill="#fff" stroke="#000" stroke-width="2.00">0</text><text transform="matrix(0,-0.20000,0.20000,0,63.000,449.200)" font-size="100" fill="#fff" stroke="#000" stroke-width="2.00">1</text><text transform="matrix(0,-0.20000,0.20000,0,63.000,522.600)" font-size="100" fill="#fff" stroke="#000" stroke-width="2.00">0</text><text transform="matrix(0,-0.20000,0.20000,0,63.000,602.700)" font-size="100" fill="#fff" stroke="#000" stroke-width="2.00">−1</text><text transform="matrix(0,-0.20013,0.20000,0,35.000,239.901)" font-size="100" fill="#00ffff">8 GHz FLUX (Jy)</text><text transform="matrix(0,-0.20040,0.20000,0,35.000,416.002)" font-size="100" fill="#00ffff">2 GHz FLUX (Jy)</text><text transform="matrix(0,-0.17341,0.20000,0,35.000,590.867)" font-size="100" fill="#00ffff">SPECTRAL INDEX</text>
</svg>
</body></html>
